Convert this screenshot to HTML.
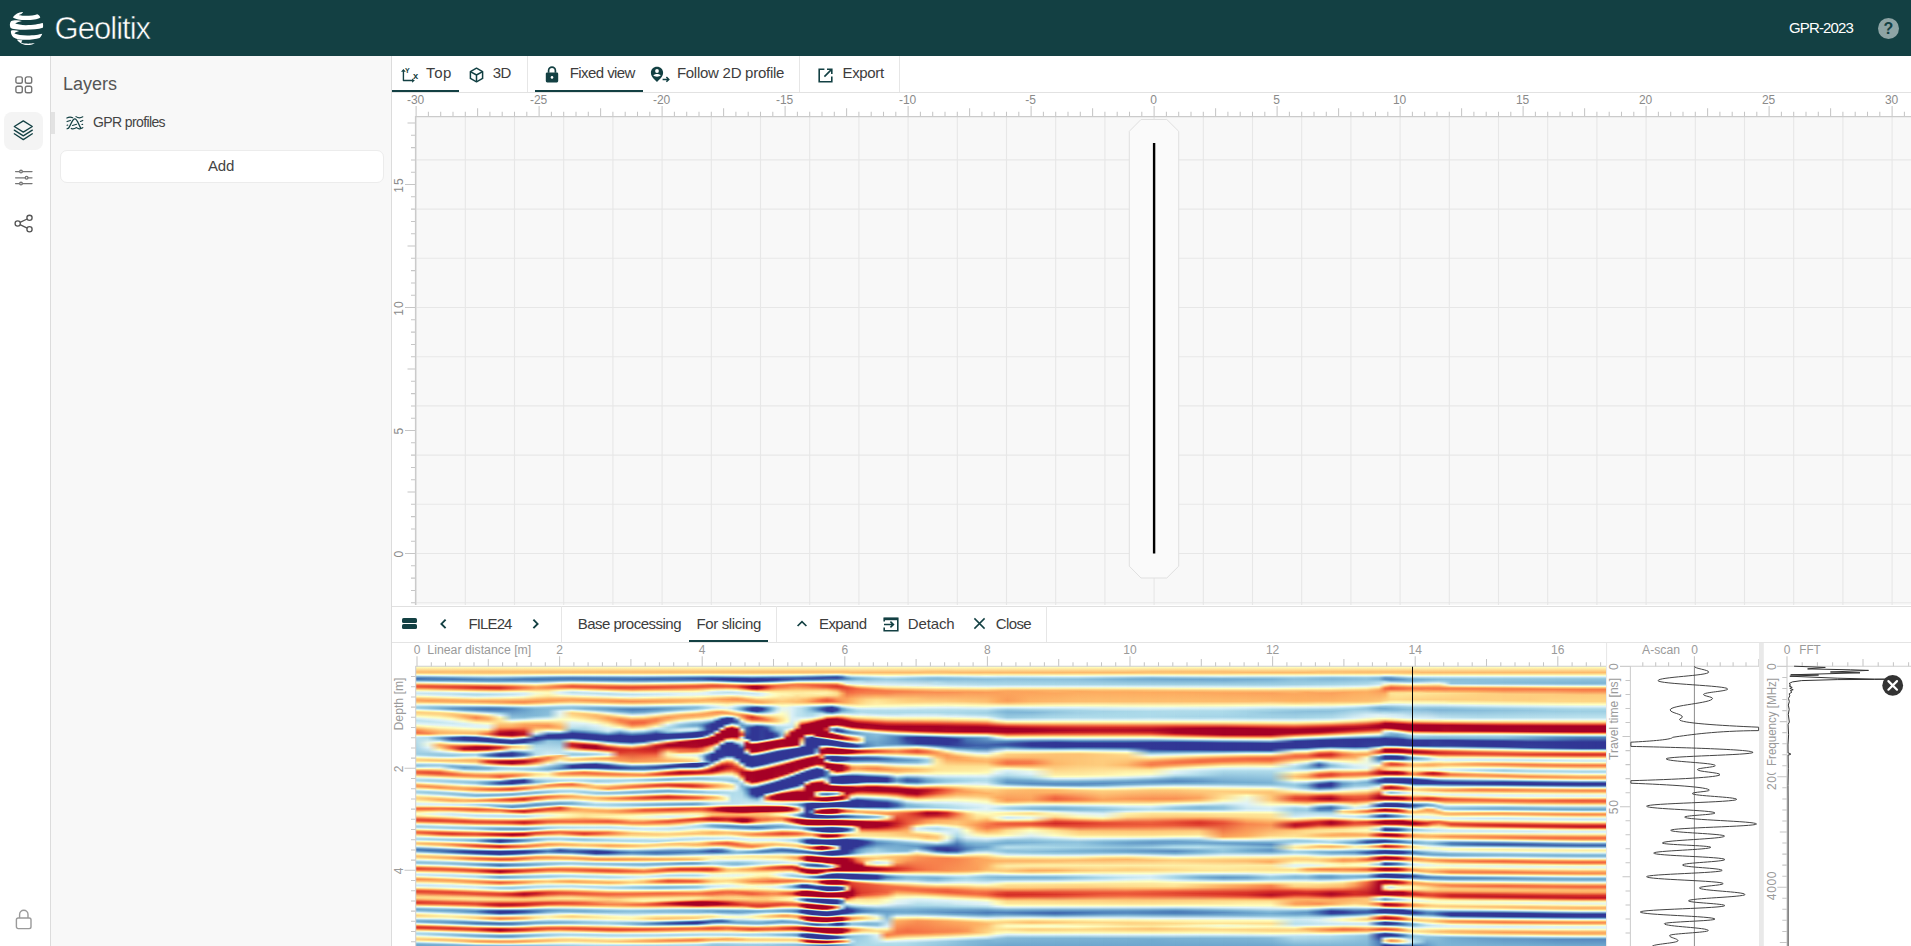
<!DOCTYPE html>
<html lang="en"><head><meta charset="utf-8"><title>Geolitix</title><style>
*{box-sizing:border-box;margin:0;padding:0}
html,body{width:1911px;height:946px;overflow:hidden;background:#fff;font-family:"Liberation Sans",sans-serif;}
#root{position:relative;width:1911px;height:946px;overflow:hidden;background:#fff}
.a{position:absolute}
.t{position:absolute;white-space:nowrap;line-height:1}
svg{position:absolute;overflow:visible}
svg text{font-family:"Liberation Sans",sans-serif}
</style></head><body><div id="root">
<div class="a" style="left:0;top:0;width:1911px;height:56px;background:#134043"></div>
<svg style="left:4px;top:6px" width="48" height="44" viewBox="0 0 1032 946" fill="#fff">
<path d="M410 128 C330 120 240 170 190 240 C240 290 380 305 480 302 C600 300 720 290 780 245 C775 215 745 185 715 175 C650 200 520 215 400 208 C360 205 330 200 320 195 C350 180 400 165 410 128 Z"/>
<path d="M385 322 C300 300 200 300 150 330 C120 370 120 430 140 465 C170 495 300 512 460 512 C600 512 740 500 835 470 C845 440 842 400 835 365 C760 385 620 410 470 412 C380 412 280 395 240 378 C270 350 340 335 385 322 Z"/>
<path d="M325 540 C260 520 190 518 150 530 C140 570 160 630 200 670 C260 715 360 728 470 728 C580 728 690 715 765 690 C795 660 815 625 822 598 C760 615 640 635 500 635 C390 635 280 620 225 592 C245 565 290 550 325 540 Z"/>
<path d="M275 722 C320 735 360 738 395 735 C385 755 375 775 372 790 C420 805 500 812 560 808 C600 805 640 798 665 795 C640 815 580 840 500 840 C420 840 340 810 275 722 Z"/>
</svg>
<div class="t " style="left:54.6px;top:12.7px;font-size:31px;color:#fff;letter-spacing:-0.983px;-webkit-text-stroke:0.5px #134043;">Geolitix</div>
<div class="t " style="left:1789px;top:19.6px;font-size:15px;color:#fff;letter-spacing:-0.859px;">GPR-2023</div>
<div class="a" style="left:1878px;top:18px;width:21px;height:21px;border-radius:50%;background:#8ea4a5"></div>
<div class="t " style="left:1883.6px;top:20.5px;font-size:16px;color:#134043;font-weight:bold;">?</div>
<div class="a" style="left:0;top:56px;width:51px;height:890px;background:#fff;border-right:1px solid #dcdcdc"></div>
<div class="a" style="left:4px;top:112px;width:39px;height:38px;border-radius:8px;background:#f4f4f4"></div>
<svg style="left:15px;top:76px" width="18" height="18" viewBox="0 0 18 18" fill="none" stroke="#757575" stroke-width="1.4">
<rect x="0.9" y="0.9" width="6.4" height="6.4" rx="1.8"/><rect x="10.3" y="0.9" width="6.4" height="6.4" rx="1.8"/>
<rect x="0.9" y="10.3" width="6.4" height="6.4" rx="1.8"/><rect x="10.3" y="10.3" width="6.4" height="6.4" rx="1.8"/></svg>
<svg style="left:12.2px;top:120px" width="23" height="21" viewBox="0 0 23 21" fill="none" stroke="#134043" stroke-width="1.3" stroke-linejoin="round" stroke-linecap="round">
<path d="M11.3 0.9 L20.3 6.5 L11.3 12.1 L2.3 6.5 Z"/><path d="M2.3 10.1 L11.3 15.9 L20.3 10.1"/><path d="M2.3 13.8 L11.3 19.6 L20.3 13.8"/></svg>
<svg style="left:15px;top:168px" width="18" height="18" viewBox="0 0 18 18" fill="none" stroke="#757575" stroke-width="1.3" stroke-linecap="round">
<path d="M0.6 3.6 H17 M0.6 9.8 H17 M0.6 15.6 H17"/>
<circle cx="6" cy="3.6" r="1.35" fill="#fff"/><circle cx="11.6" cy="9.8" r="1.35" fill="#fff"/><circle cx="6" cy="15.6" r="1.35" fill="#fff"/></svg>
<svg style="left:13px;top:213px" width="22" height="22" viewBox="0 0 22 22" fill="none" stroke="#555" stroke-width="1.35">
<path d="M7 9.4 L14.2 6 M7 11.7 L14.2 15.1"/>
<circle cx="4.7" cy="10.5" r="2.6"/><circle cx="16.5" cy="4.8" r="2.6"/><circle cx="16.5" cy="16.2" r="2.6"/></svg>
<svg style="left:15px;top:909px" width="18" height="21" viewBox="0 0 18 21" fill="none" stroke="#9a9a9a" stroke-width="1.4">
<path d="M4.6 9 V5.4 A4.2 4.2 0 0 1 13 5.4 V9"/><rect x="1.4" y="9" width="14.6" height="10.6" rx="1.8"/></svg>
<div class="a" style="left:51px;top:56px;width:341px;height:890px;background:#f8f8f8;border-right:1px solid #dcdcdc"></div>
<div class="t " style="left:63px;top:74.6px;font-size:18px;color:#555;letter-spacing:-0.005px;">Layers</div>
<div class="a" style="left:51px;top:112px;width:4px;height:22px;background:#e2e2e2"></div>
<svg style="left:60px;top:108px" width="32" height="28" viewBox="0 0 1081 946" fill="none" stroke="#134043" stroke-width="38" stroke-linecap="round">
<path d="M300 665 C370 560 420 370 500 370 C580 370 630 560 700 680" stroke-width="44"/>
<path d="M232 340 Q330 280 430 330 M540 292 Q650 370 770 298"/>
<path d="M238 458 L350 420 M690 455 L770 420"/>
<path d="M240 585 L262 577 M420 590 L560 550 M740 557 L765 552"/>
<path d="M238 703 L290 680 M380 690 Q450 730 560 662 Q640 730 700 690 Q745 690 770 660"/>
</svg>
<div class="t " style="left:93px;top:115px;font-size:14px;color:#444;letter-spacing:-0.614px;">GPR profiles</div>
<div class="a" style="left:60px;top:150px;width:324px;height:33px;background:#fff;border:1px solid #ececec;border-radius:7px"></div>
<div class="t " style="left:208px;top:157.5px;font-size:15px;color:#444;letter-spacing:-0.230px;">Add</div>
<div class="a" style="left:392px;top:56px;width:1519px;height:37px;background:#fff;border-bottom:1px solid #e2e2e2"></div>
<svg style="left:396px;top:62px" width="28" height="26" viewBox="0 0 1019 946">
<path d="M270 335 V672 H600" fill="none" stroke="#134043" stroke-width="50" stroke-linejoin="round"/>
<path d="M270 252 L358 352 H182 Z M685 674 L585 598 V752 Z" fill="#134043"/>
<text x="417" y="392" font-size="255" font-weight="bold" fill="#134043" text-anchor="middle">Y</text>
<text x="710" y="612" font-size="340" font-weight="bold" fill="#134043" text-anchor="middle">x</text>
</svg>
<div class="t " style="left:426.1px;top:65.2px;font-size:15px;color:#3d3d3d;letter-spacing:0.572px;">Top</div>
<div class="a" style="left:392px;top:90px;width:67px;height:2px;background:#134043"></div>
<svg style="left:469px;top:67px" width="15" height="16" viewBox="0 0 15 16" fill="none" stroke="#134043" stroke-width="1.5" stroke-linejoin="round">
<path d="M7.5 1.2 L13.6 4.6 V11.4 L7.5 14.8 L1.4 11.4 V4.6 Z"/><path d="M1.4 4.6 L7.5 8 L13.6 4.6 M7.5 8 V14.8"/></svg>
<div class="t " style="left:492.8px;top:65.2px;font-size:15px;color:#3d3d3d;letter-spacing:-0.537px;">3D</div>
<div class="a" style="left:527px;top:56px;width:1px;height:36px;background:#e6e6e6"></div>
<svg style="left:545px;top:66px" width="14" height="17" viewBox="0 0 14 17">
<path d="M3.6 6.8 V4.6 A3.4 3.4 0 0 1 10.4 4.6 V6.8" fill="none" stroke="#134043" stroke-width="1.7"/>
<rect x="0.8" y="6.4" width="12.4" height="10" rx="1.4" fill="#134043"/><circle cx="7" cy="11.4" r="1.3" fill="#fff"/></svg>
<div class="t " style="left:569.7px;top:65.2px;font-size:15px;color:#3d3d3d;letter-spacing:-0.565px;">Fixed view</div>
<div class="a" style="left:535px;top:90px;width:108px;height:2px;background:#134043"></div>
<svg style="left:650px;top:66px" width="20" height="17" viewBox="0 0 20 17">
<path d="M7 0.8 C3.4 0.8 0.9 3.4 0.9 6.8 C0.9 10.6 4.6 13.6 7 16 C9.4 13.6 13.1 10.6 13.1 6.8 C13.1 3.4 10.6 0.8 7 0.8 Z" fill="#134043"/>
<circle cx="7" cy="5" r="1.9" fill="#fff"/><path d="M3.4 9.6 C4.4 7.6 9.6 7.6 10.6 9.6 C9.6 11 4.4 11 3.4 9.6Z" fill="#fff"/>
<path d="M12.6 13.4 H18.6 M16.4 11 L18.8 13.4 L16.4 15.8" fill="none" stroke="#134043" stroke-width="1.5"/></svg>
<div class="t " style="left:676.9px;top:65.2px;font-size:15px;color:#3d3d3d;letter-spacing:-0.265px;">Follow 2D profile</div>
<div class="a" style="left:799px;top:56px;width:1px;height:36px;background:#e6e6e6"></div>
<svg style="left:817.5px;top:67.5px" width="15" height="15" viewBox="0 0 15 15" fill="none" stroke="#134043" stroke-width="1.6">
<path d="M6.4 1.2 H1.2 V13.8 H13.8 V8.6"/><path d="M9 1.2 H13.8 V6 M13.6 1.4 L6.4 8.6"/></svg>
<div class="t " style="left:842.5px;top:65.2px;font-size:15px;color:#3d3d3d;letter-spacing:-0.359px;">Export</div>
<div class="a" style="left:899px;top:56px;width:1px;height:36px;background:#e6e6e6"></div>
<div class="a" style="left:416px;top:117px;width:1495px;height:488px;background:#f8f8f8"></div>
<svg style="left:0;top:0" width="1911" height="946" viewBox="0 0 1911 946">
<path d="M416.1 117 V605 M465.3 117 V605 M514.5 117 V605 M563.7 117 V605 M612.9 117 V605 M662.1 117 V605 M711.3 117 V605 M760.5 117 V605 M809.7 117 V605 M858.9 117 V605 M908.1 117 V605 M957.3 117 V605 M1006.5 117 V605 M1055.7 117 V605 M1104.9 117 V605 M1154.1 117 V605 M1203.3 117 V605 M1252.5 117 V605 M1301.7 117 V605 M1350.9 117 V605 M1400.1 117 V605 M1449.3 117 V605 M1498.5 117 V605 M1547.7 117 V605 M1596.9 117 V605 M1646.1 117 V605 M1695.3 117 V605 M1744.5 117 V605 M1793.7 117 V605 M1842.9 117 V605 M1892.1 117 V605 M416 602.7 H1911 M416 553.5 H1911 M416 504.3 H1911 M416 455.1 H1911 M416 405.9 H1911 M416 356.7 H1911 M416 307.5 H1911 M416 258.3 H1911 M416 209.1 H1911 M416 159.9 H1911" stroke="#e7e7e7" stroke-width="1.1" fill="none"/>
<path d="M416.1 106 V117 M428.4 111.8 V117 M440.7 111.8 V117 M453.0 111.8 V117 M465.3 111.8 V117 M477.6 108.3 V117 M489.9 111.8 V117 M502.2 111.8 V117 M514.5 111.8 V117 M526.8 111.8 V117 M539.1 106 V117 M551.4 111.8 V117 M563.7 111.8 V117 M576.0 111.8 V117 M588.3 111.8 V117 M600.6 108.3 V117 M612.9 111.8 V117 M625.2 111.8 V117 M637.5 111.8 V117 M649.8 111.8 V117 M662.1 106 V117 M674.4 111.8 V117 M686.7 111.8 V117 M699.0 111.8 V117 M711.3 111.8 V117 M723.6 108.3 V117 M735.9 111.8 V117 M748.2 111.8 V117 M760.5 111.8 V117 M772.8 111.8 V117 M785.1 106 V117 M797.4 111.8 V117 M809.7 111.8 V117 M822.0 111.8 V117 M834.3 111.8 V117 M846.6 108.3 V117 M858.9 111.8 V117 M871.2 111.8 V117 M883.5 111.8 V117 M895.8 111.8 V117 M908.1 106 V117 M920.4 111.8 V117 M932.7 111.8 V117 M945.0 111.8 V117 M957.3 111.8 V117 M969.6 108.3 V117 M981.9 111.8 V117 M994.2 111.8 V117 M1006.5 111.8 V117 M1018.8 111.8 V117 M1031.1 106 V117 M1043.4 111.8 V117 M1055.7 111.8 V117 M1068.0 111.8 V117 M1080.3 111.8 V117 M1092.6 108.3 V117 M1104.9 111.8 V117 M1117.2 111.8 V117 M1129.5 111.8 V117 M1141.8 111.8 V117 M1154.1 106 V117 M1166.4 111.8 V117 M1178.7 111.8 V117 M1191.0 111.8 V117 M1203.3 111.8 V117 M1215.6 108.3 V117 M1227.9 111.8 V117 M1240.2 111.8 V117 M1252.5 111.8 V117 M1264.8 111.8 V117 M1277.1 106 V117 M1289.4 111.8 V117 M1301.7 111.8 V117 M1314.0 111.8 V117 M1326.3 111.8 V117 M1338.6 108.3 V117 M1350.9 111.8 V117 M1363.2 111.8 V117 M1375.5 111.8 V117 M1387.8 111.8 V117 M1400.1 106 V117 M1412.4 111.8 V117 M1424.7 111.8 V117 M1437.0 111.8 V117 M1449.3 111.8 V117 M1461.6 108.3 V117 M1473.9 111.8 V117 M1486.2 111.8 V117 M1498.5 111.8 V117 M1510.8 111.8 V117 M1523.1 106 V117 M1535.4 111.8 V117 M1547.7 111.8 V117 M1560.0 111.8 V117 M1572.3 111.8 V117 M1584.6 108.3 V117 M1596.9 111.8 V117 M1609.2 111.8 V117 M1621.5 111.8 V117 M1633.8 111.8 V117 M1646.1 106 V117 M1658.4 111.8 V117 M1670.7 111.8 V117 M1683.0 111.8 V117 M1695.3 111.8 V117 M1707.6 108.3 V117 M1719.9 111.8 V117 M1732.2 111.8 V117 M1744.5 111.8 V117 M1756.8 111.8 V117 M1769.1 106 V117 M1781.4 111.8 V117 M1793.7 111.8 V117 M1806.0 111.8 V117 M1818.3 111.8 V117 M1830.6 108.3 V117 M1842.9 111.8 V117 M1855.2 111.8 V117 M1867.5 111.8 V117 M1879.8 111.8 V117 M1892.1 106 V117 M1904.4 111.8 V117 M411 602.7 H416 M411 590.4 H416 M411 578.1 H416 M411 565.8 H416 M405 553.5 H416 M411 541.2 H416 M411 528.9 H416 M411 516.6 H416 M411 504.3 H416 M407.5 492.0 H416 M411 479.7 H416 M411 467.4 H416 M411 455.1 H416 M411 442.8 H416 M405 430.5 H416 M411 418.2 H416 M411 405.9 H416 M411 393.6 H416 M411 381.3 H416 M407.5 369.0 H416 M411 356.7 H416 M411 344.4 H416 M411 332.1 H416 M411 319.8 H416 M405 307.5 H416 M411 295.2 H416 M411 282.9 H416 M411 270.6 H416 M411 258.3 H416 M407.5 246.0 H416 M411 233.7 H416 M411 221.4 H416 M411 209.1 H416 M411 196.8 H416 M405 184.5 H416 M411 172.2 H416 M411 159.9 H416 M411 147.6 H416 M411 135.3 H416 M407.5 123.0 H416" stroke="#c6c6c6" stroke-width="1.05" fill="none"/>
<path d="M415.5 116.6 H1911 M415.6 116 V605" stroke="#cbcbcb" stroke-width="1.4" fill="none"/>
<text x="415.6" y="104" font-size="12" fill="#8a8a8a" text-anchor="middle">-30</text>
<text x="538.6" y="104" font-size="12" fill="#8a8a8a" text-anchor="middle">-25</text>
<text x="661.6" y="104" font-size="12" fill="#8a8a8a" text-anchor="middle">-20</text>
<text x="784.6" y="104" font-size="12" fill="#8a8a8a" text-anchor="middle">-15</text>
<text x="907.6" y="104" font-size="12" fill="#8a8a8a" text-anchor="middle">-10</text>
<text x="1030.6" y="104" font-size="12" fill="#8a8a8a" text-anchor="middle">-5</text>
<text x="1153.6" y="104" font-size="12" fill="#8a8a8a" text-anchor="middle">0</text>
<text x="1276.6" y="104" font-size="12" fill="#8a8a8a" text-anchor="middle">5</text>
<text x="1399.6" y="104" font-size="12" fill="#8a8a8a" text-anchor="middle">10</text>
<text x="1522.6" y="104" font-size="12" fill="#8a8a8a" text-anchor="middle">15</text>
<text x="1645.6" y="104" font-size="12" fill="#8a8a8a" text-anchor="middle">20</text>
<text x="1768.6" y="104" font-size="12" fill="#8a8a8a" text-anchor="middle">25</text>
<text x="1891.6" y="104" font-size="12" fill="#8a8a8a" text-anchor="middle">30</text>
<text transform="translate(403.4 554.1) rotate(-90)" font-size="12" fill="#8a8a8a" text-anchor="middle" letter-spacing="0">0</text>
<text transform="translate(403.4 431.1) rotate(-90)" font-size="12" fill="#8a8a8a" text-anchor="middle" letter-spacing="0">5</text>
<text transform="translate(403.4 308.1) rotate(-90)" font-size="12" fill="#8a8a8a" text-anchor="middle" letter-spacing="0.9">10</text>
<text transform="translate(403.4 185.1) rotate(-90)" font-size="12" fill="#8a8a8a" text-anchor="middle" letter-spacing="0.9">15</text>
<path d="M1141 119.5 H1166.8 L1178.7 131.3 V566.2 L1166.8 578 H1141 L1129.3 566.2 V131.3 Z" fill="#fafafa" stroke="#e0e0e0" stroke-width="1"/>
<path d="M1154.1 143 V553.5" stroke="#000" stroke-width="2.4"/>
</svg>
<div class="a" style="left:392px;top:606px;width:1519px;height:340px;background:#fff;border-top:1px solid #e0e0e0"></div>
<div class="a" style="left:392px;top:642px;width:1519px;height:1px;background:#e4e4e4"></div>
<div class="a" style="left:402px;top:618px;width:14.5px;height:5px;border-radius:1.6px;background:#134043"></div>
<div class="a" style="left:402px;top:624.4px;width:14.5px;height:5px;border-radius:1.6px;background:#134043"></div>
<svg style="left:439px;top:618px" width="9" height="12" viewBox="0 0 9 12" fill="none" stroke="#134043" stroke-width="1.9"><path d="M6.6 1.6 L2.4 5.9 L6.6 10.2"/></svg>
<div class="t " style="left:468.6px;top:615.7px;font-size:15px;color:#3d3d3d;letter-spacing:-0.910px;">FILE24</div>
<svg style="left:531px;top:618px" width="9" height="12" viewBox="0 0 9 12" fill="none" stroke="#134043" stroke-width="1.9"><path d="M2.4 1.6 L6.6 5.9 L2.4 10.2"/></svg>
<div class="a" style="left:561px;top:606px;width:1px;height:36px;background:#e6e6e6"></div>
<div class="t " style="left:577.7px;top:615.7px;font-size:15px;color:#3d3d3d;letter-spacing:-0.506px;">Base processing</div>
<div class="t " style="left:696.5px;top:615.7px;font-size:15px;color:#3d3d3d;letter-spacing:-0.359px;">For slicing</div>
<div class="a" style="left:689px;top:640px;width:79px;height:2px;background:#134043"></div>
<div class="a" style="left:776px;top:606px;width:1px;height:36px;background:#e6e6e6"></div>
<svg style="left:796px;top:619px" width="12" height="9" viewBox="0 0 12 9" fill="none" stroke="#134043" stroke-width="1.7"><path d="M1.6 7 L6 2.6 L10.4 7"/></svg>
<div class="t " style="left:819.0px;top:615.7px;font-size:15px;color:#3d3d3d;letter-spacing:-0.579px;">Expand</div>
<svg style="left:883px;top:616.5px" width="16" height="15" viewBox="0 0 16 15" fill="none" stroke="#134043" stroke-width="1.6">
<path d="M1.2 4.4 V1.2 H14.8 V13.8 H1.2 V10.6"/><path d="M1 7.5 H10 M7.4 4.6 L10.4 7.5 L7.4 10.4"/><path d="M1.2 2 H14.8" stroke-width="2.4"/></svg>
<div class="t " style="left:907.8px;top:615.7px;font-size:15px;color:#3d3d3d;letter-spacing:-0.138px;">Detach</div>
<svg style="left:973px;top:617.4px" width="13" height="13" viewBox="0 0 13 13" fill="none" stroke="#134043" stroke-width="1.5"><path d="M1.4 1.4 L11.6 11.6 M11.6 1.4 L1.4 11.6"/></svg>
<div class="t " style="left:995.8px;top:615.7px;font-size:15px;color:#3d3d3d;letter-spacing:-0.630px;">Close</div>
<div class="a" style="left:1046px;top:606px;width:1px;height:36px;background:#e6e6e6"></div>
<div class="a" style="left:416px;top:666.4px;width:1190px;height:279.6px;overflow:hidden;background:#fdd9a0"><div class="a" style="left:0;top:0;width:100%;height:100%;filter:blur(0.6px)">
<div class="a" style="left:0px;top:0;width:12px;height:100%;background:linear-gradient(#f6fbd0 0px,#ffffbe 1px,#fdbb6d 6px,#fdc678 7px,#fffcbb 8.5px,#d3edf4 9.5px,#6ea6cd 11px,#4370b2 12.5px,#4878b6 13.5px,#6aa1cb 14.5px,#d2ecf4 16px,#fff7b3 17px,#fa9c59 18.5px,#f16740 19.5px,#ea5839 20.5px,#f36b42 21.5px,#fa9b58 22.5px,#fff9b6 24.5px,#dcf1f7 26px,#cae8f2 27.5px,#e3f4f2 29px,#fffab7 30.5px,#fdbf71 32.5px,#fba15b 34px,#fdbf71 36px,#fefec2 38px,#e0f3f7 39px,#aad8e8 40.5px,#9bcde2 41.5px,#abd9e9 42.5px,#daf0f6 43.5px,#fffdbc 44.5px,#fedf8f 45.5px,#fecd7e 46.5px,#fee293 48.5px,#fbfdc7 50.5px,#e0f3f7 52px,#bbe1ee 54.5px,#def2f7 57.5px,#feffc0 59.5px,#fdac60 63px,#f7834d 64.5px,#f36b42 66.5px,#f46d43 67px,#fa9656 68px,#fff2ab 69.5px,#e4f5f0 70.5px,#ceeaf3 71px,#bae0ed 72px,#9ccde3 88px,#abd9e9 89px,#e4f5f1 90.5px,#fffdbc 91.5px,#fee496 92.5px,#fecd7e 94px,#fee99e 95.5px,#f6fccf 96.5px,#e5f5ee 97px,#a0d0e4 98.5px,#8ec2dc 99.5px,#9ecfe3 100.5px,#ceeaf3 101.5px,#e8f6e9 102px,#fdfec3 102.5px,#fdb063 104px,#f57245 105px,#ea5839 106px,#f46e44 107.5px,#fa9b58 108.5px,#fff5b0 110.5px,#dcf1f7 112px,#acd9e9 114px,#b8dfed 115px,#e2f4f3 116px,#fff7b2 117px,#fdb264 118.5px,#f98e52 120px,#fcaa5f 121px,#fcfec4 123px,#d4edf5 124px,#a9d8e8 125px,#9dcde3 126px,#addaea 127px,#e6f5ee 128.5px,#fffbba 129.5px,#fee394 130.5px,#fecc7d 132px,#fedd8d 133.5px,#fdfec2 135.5px,#dff3f8 137.5px,#e1f3f6 139px,#fffbb9 140px,#fa9957 141.5px,#f36a42 142.5px,#f57547 143.5px,#fb9f5a 144.5px,#fee395 146px,#ffffbf 147.5px,#ffffbf 148.5px,#fee597 150px,#f7834d 152px,#ea5839 153px,#e24732 154px,#ea593a 155px,#fdb669 156.5px,#fff1aa 157.5px,#e4f4f1 158.5px,#b3ddeb 159.5px,#9dcee3 160.5px,#afdbea 161.5px,#e3f4f2 162.5px,#f9fdcb 163px,#feefa6 163.5px,#fdb264 164.5px,#f57647 165.5px,#f26941 166.5px,#f7834d 167.5px,#fdb76a 168.5px,#fffbb9 170px,#e2f4f5 171px,#bbe1ed 172px,#acd9e9 173px,#b1dceb 173.5px,#dff2f8 174.5px,#fff6b2 175.5px,#fdc072 177px,#fdc778 178px,#fff9b7 179.5px,#d8eff6 180.5px,#72abd0 182px,#4879b6 183.5px,#5f94c4 185px,#d2ecf4 187px,#ffffbf 188px,#fecd7e 189.5px,#fdbf71 190.5px,#fedd8d 192px,#fffbb9 193px,#e2f4f5 194px,#9ecfe3 195.5px,#8dc1dc 196.5px,#a1d1e5 197.5px,#daf0f6 198.5px,#fff3ad 199.5px,#fdb265 200.5px,#f16740 201.5px,#e24832 202.5px,#ea5739 203.5px,#f88c51 204.5px,#fed182 205.5px,#fffebd 206.5px,#e1f4f6 207.5px,#cae8f2 208.5px,#d9eff6 209.5px,#fcfec5 210.5px,#fdb86b 212px,#f99053 213px,#f98f53 213.5px,#fdbb6d 215px,#fafdc8 217px,#e1f3f7 218px,#cae8f2 219.5px,#e1f3f6 220.5px,#ffffbe 221.5px,#fdb265 223px,#ea5839 224.5px,#e24732 225.5px,#e85337 226.5px,#fdbd6f 229.5px,#fedb8b 231.5px,#fdbd6f 233px,#ea5839 235px,#da372a 236.5px,#e44c34 237.5px,#fdb164 239px,#fff1aa 240px,#def2f7 241px,#85bad8 242.5px,#6fa8ce 243.5px,#8dc1dc 245px,#def2f8 246.5px,#fffcbb 247.5px,#feeda4 248px,#fecf80 249.5px,#fee79b 251px,#f6fccf 252px,#e3f4f2 252.5px,#8dc1dc 254px,#70a9cf 255px,#7bb3d4 256px,#ddf2f7 257.5px,#f9fdca 258px,#fee99e 258.5px,#f99455 259.5px,#e44b33 260.5px,#da372a 261.5px,#e85438 262.5px,#fb9c59 263.5px,#fffdbd 265px,#d4edf5 266px,#abd9e9 267.5px,#bae0ed 268.5px,#def2f8 269.5px,#fbfdc7 270.5px,#fede8e 272px,#fecd7e 273px,#fed98a 274px,#fff8b5 275px,#ddf2f7 276px,#9ccde3 277px,#74add1 278px,#6fa8ce 279.5px)"></div>
<div class="a" style="left:0px;top:0;width:24px;height:100%;background:linear-gradient(#f6fbd0 0px,#ffffbe 1px,#fdbb6d 6px,#fdc677 7px,#fff9b6 8.5px,#dbf0f7 9.5px,#6095c5 11.5px,#4472b2 13px,#659bc8 14.5px,#c7e7f1 16px,#e9f6e8 16.5px,#fffdbc 17px,#fca45c 18.5px,#f16740 19.5px,#e75136 20.5px,#ed5e3c 21.5px,#fca85e 23px,#fee090 24px,#fcfec4 25px,#e1f3f7 26px,#c4e5f0 27.5px,#e5f5ee 29.5px,#fcfec4 30.5px,#fec879 32.5px,#fba05a 34.5px,#fdac60 35.5px,#feca7b 36.5px,#fffebd 38px,#e1f3f6 39px,#a0d1e4 40.5px,#89bdda 42px,#a0d1e4 43px,#d7eff6 44px,#fffdbc 45px,#fede8e 46px,#fecd7e 47px,#fee192 49px,#ffffc0 51px,#def2f7 53px,#c1e4ef 55.5px,#e2f4f4 58.5px,#fffebd 60.5px,#fdb668 64px,#f8884f 67px,#f88850 67.5px,#fdb265 68.5px,#feeea5 69.5px,#f9fdcb 70px,#e3f4f3 70.5px,#b4deec 71.5px,#afdbea 72px,#e6f5ed 76.5px,#edf8e1 78px,#e8f6e9 80px,#def2f8 81.5px,#97c9e0 88px,#a6d5e7 89.5px,#cfebf3 90.5px,#e5f5ee 91px,#fff9b5 92px,#fed081 93.5px,#fec97a 94.5px,#fee293 95.5px,#fbfdc7 96.5px,#e8f6ea 97px,#cfeaf3 97.5px,#97c9e0 99px,#9dcee3 100px,#d8eff6 101.5px,#feffc0 102.5px,#fa9857 104.5px,#f0643f 105.5px,#e65036 106.5px,#ea593a 107.5px,#fa9656 109px,#fff7b2 111px,#e7f6eb 112px,#d5eef5 112.5px,#b3ddeb 113.5px,#a6d5e7 114.5px,#b5deec 115.5px,#e0f3f8 116.5px,#fffbb9 117.5px,#fdb96c 119px,#f98e52 120.5px,#fdb86a 122px,#fffdbd 123.5px,#d6eef5 124.5px,#a7d6e7 125.5px,#97c9e0 126.5px,#a6d5e7 127.5px,#e2f4f4 129px,#fffdbc 130px,#fee192 131px,#fdc476 132px,#fdbd6f 133px,#feda8a 134.5px,#ffffc0 136px,#e1f3f7 137.5px,#dcf1f7 139px,#feffc1 140px,#fb9d59 141.5px,#f36a42 142.5px,#f57748 143.5px,#fca85e 144.5px,#fedd8d 145.5px,#fffdbb 146.5px,#eff9dc 147.5px,#eff9dc 148.5px,#ffffc0 149.5px,#fee597 150.5px,#fa9756 152px,#e75237 153.5px,#e24832 154.5px,#ee613e 155.5px,#fb9f5a 156.5px,#fff8b4 158px,#def2f7 159px,#aedbea 160px,#9dcee3 161px,#cce9f2 162.5px,#e8f6ea 163px,#feffc1 163.5px,#fca45c 165px,#f0653f 166px,#ea5839 166.5px,#ed5f3d 167.5px,#fdaf62 169px,#fffdbc 170.5px,#dbf0f6 171.5px,#b1dceb 172.5px,#a7d6e7 173.5px,#e6f5ed 175px,#fcfec5 175.5px,#fed687 176.5px,#fdb568 177.5px,#fdbf71 178.5px,#fff8b4 180px,#d9eff6 181px,#5b8fc1 183px,#4473b3 184.5px,#6fa7ce 186px,#d4edf5 187.5px,#fffcba 188.5px,#fdc678 190px,#fdba6c 191px,#fecc7d 192px,#fffebe 193.5px,#dbf1f7 194.5px,#aad8e8 195.5px,#8fc3dd 196.5px,#97c9e0 197.5px,#e5f5ef 199px,#fcfec5 199.5px,#feea9f 200px,#fca45d 201px,#ef623e 202px,#e54e35 203px,#f16640 204px,#fba35c 205px,#fff6b2 206.5px,#e5f5ee 207.5px,#d5edf5 208px,#c4e5f0 209px,#dbf1f7 210px,#fffebe 211px,#fdb769 212.5px,#fa9656 213.5px,#fdb265 215px,#fffcba 217px,#daf0f6 218.5px,#cae8f2 219.5px,#e6f5ed 221px,#fff8b4 222px,#fca85e 223.5px,#f16740 224.5px,#e34932 225.5px,#e95739 227px,#fed081 230.5px,#fedd8d 232px,#fdb76a 233.5px,#e85437 235.5px,#de3f2e 237px,#ed5e3c 238px,#fba35c 239px,#fffebe 240.5px,#e9f6e8 241px,#cbe9f2 241.5px,#7cb4d5 243px,#70a8ce 244px,#81b8d7 245px,#e2f4f4 247px,#fffdbb 248px,#fee699 249px,#fede8e 250px,#fee99e 251px,#f9fdc9 252px,#e8f6e9 252.5px,#ceeaf3 253px,#7eb5d6 254.5px,#6aa2cb 255.5px,#7cb4d5 256.5px,#e5f5ef 258px,#fffdbd 258.5px,#fdb668 259.5px,#ed5e3c 260.5px,#da372a 261.5px,#e14631 262.5px,#fdab60 264px,#feefa6 265px,#f8fccc 265.5px,#e3f4f3 266px,#b0dceb 267px,#a0d0e4 268px,#b3ddeb 269px,#def2f7 270px,#feffc0 271px,#fee395 272px,#fec879 273.5px,#fedc8c 274.5px,#fffebd 275.5px,#d1ecf4 276.5px,#7fb6d6 278px,#72aad0 279.5px);-webkit-mask-image:linear-gradient(90deg,transparent,#000 50.0%);mask-image:linear-gradient(90deg,transparent,#000 50.0%)"></div>
<div class="a" style="left:12px;top:0;width:24px;height:100%;background:linear-gradient(#f6fbd0 0px,#ffffbe 1px,#fdbb6d 6px,#fdc577 7px,#fff7b2 8.5px,#e2f4f5 9.5px,#689fca 11.5px,#4575b4 13px,#5f94c4 14.5px,#96c8e0 15.5px,#e2f4f5 16.5px,#fafdc9 17px,#fdad61 18.5px,#e95638 20px,#e34a33 21px,#ee603d 22px,#f99455 23px,#fffab8 25px,#e5f5ef 26px,#d5edf5 26.5px,#bee3ef 28px,#dbf0f6 29.5px,#fffebd 31px,#fdb366 33.5px,#fba05b 35px,#fdc375 36.5px,#fff9b6 38px,#e3f4f3 39px,#99cbe1 40.5px,#75aed1 42px,#81b7d6 43px,#d3ecf4 44.5px,#fffdbd 45.5px,#fede8e 46.5px,#fecf80 48px,#fee598 50px,#fbfec6 52px,#def2f8 54px,#c7e7f1 56.5px,#e1f3f7 59px,#fffbb9 61.5px,#fdc072 65px,#fdb164 67px,#fdc375 68px,#fff2ab 69px,#daf0f6 70px,#79b1d3 71.5px,#6da4cc 72.5px,#92c5de 74px,#e1f3f6 75.5px,#fffab8 76.5px,#fed889 77.5px,#fdb668 78.5px,#fca85e 79.5px,#fecd7e 82px,#fffebd 84px,#ddf1f7 85.5px,#a2d1e5 87.5px,#91c4de 89px,#a0d0e4 90px,#e6f5ee 91.5px,#f8fccc 92px,#fee598 93px,#fdc274 94.5px,#fed686 95.5px,#fffcba 96.5px,#d5eef5 97.5px,#99cbe1 99px,#a1d1e5 100px,#d5edf5 101.5px,#e8f6e9 102px,#fff4ae 103px,#fdae61 104.5px,#ee613e 106px,#e54d34 107px,#e85337 108px,#f99153 109.5px,#fff7b3 111.5px,#e5f5ef 112.5px,#d0ebf3 113px,#acdae9 114px,#a0d0e4 115px,#b0dbea 116px,#d9f0f6 117px,#fdfec2 118px,#fdaf62 120px,#f99053 121.5px,#fdae61 122.5px,#fff7b3 124px,#dcf1f7 125px,#a6d5e7 126px,#91c4de 127px,#9ecee3 128px,#daf0f6 129.5px,#fdfec3 130.5px,#fece7f 132px,#fdac60 133.5px,#fdc778 135px,#fffebd 136.5px,#e4f5f0 137.5px,#d5eef5 139px,#e5f5ef 139.5px,#f9fdca 140px,#feeca3 140.5px,#fba05b 141.5px,#f67c4a 142px,#f36c42 143px,#fdb163 144.5px,#fffab8 146px,#e7f6ec 147px,#ddf2f7 148.5px,#eef8de 149.5px,#fff4ae 150.5px,#fdae61 152px,#ec5c3b 153.5px,#e24832 154.5px,#e95538 155.5px,#fdac60 157px,#fffebd 158.5px,#d7eff5 159.5px,#a0d0e4 161px,#a5d4e6 162px,#d1ecf4 163px,#ebf7e3 163.5px,#fffcba 164px,#fa9756 165.5px,#e85538 166.5px,#df412f 167.5px,#ec5c3b 168.5px,#fba15b 169.5px,#fffebe 171px,#eaf7e5 171.5px,#d2ecf4 172px,#a0d0e4 173.5px,#a4d4e6 174px,#d2ecf4 175px,#edf8e1 175.5px,#fffab8 176px,#fec879 177px,#fca85e 178px,#fec97a 179.5px,#fff4af 180.5px,#dcf1f7 181.5px,#598dc1 183.5px,#426caf 185px,#69a0ca 186.5px,#d3ecf4 188px,#fffab7 189px,#fed282 190px,#fdb567 191.5px,#feca7b 192.5px,#fdfec3 194px,#d4edf5 195px,#a4d3e6 196px,#8ec2dc 197px,#9dcee3 198px,#d2ecf4 199px,#edf8e0 199.5px,#fffab7 200px,#fa9a58 201.5px,#ee613d 202.5px,#e95638 203px,#ef613e 204px,#f99555 205px,#fed687 206px,#fcfec4 207px,#daf0f6 208px,#bfe3ef 209.5px,#def2f7 210.5px,#fffcbb 211.5px,#fdb76a 213px,#fb9c59 214px,#fdba6c 215.5px,#fdfec3 217.5px,#e3f4f3 218.5px,#cae8f2 220px,#ddf2f7 221px,#fafdc8 222px,#fede8f 223px,#fb9e5a 224px,#ef623e 225px,#e24832 226px,#eb5a3a 227.5px,#fdbd6f 230px,#fee090 232px,#fdc577 233.5px,#e75237 236px,#e34a33 237.5px,#f99455 239px,#fff4ae 240.5px,#ddf1f7 241.5px,#86bcd9 243px,#71a9cf 244.5px,#86bbd9 245.5px,#e3f4f3 247.5px,#ffffc0 248.5px,#feeda4 249.5px,#fee99e 250.5px,#fbfdc7 252px,#d7eef5 253px,#85bbd8 254.5px,#659bc8 256px,#7db4d5 257px,#c4e5f0 258px,#eaf7e5 258.5px,#fff7b3 259px,#fdab60 260px,#f67b49 260.5px,#e95639 261px,#da362a 262px,#e44b33 263px,#f88c51 264px,#fedd8d 265px,#fff6b2 265.5px,#d8eff6 266.5px,#a4d3e6 267.5px,#94c7df 268.5px,#abd9e9 269.5px,#ddf1f7 270.5px,#fffcbb 271.5px,#fedc8c 272.5px,#fdc375 273.5px,#fecc7e 274.5px,#fbfec6 276px,#e6f5ec 276.5px,#c8e7f1 277px,#7cb3d5 278.5px,#75add1 279.5px);-webkit-mask-image:linear-gradient(90deg,transparent,#000 50.0%);mask-image:linear-gradient(90deg,transparent,#000 50.0%)"></div>
<div class="a" style="left:24px;top:0;width:24px;height:100%;background:linear-gradient(#f6fbd0 0px,#ffffbe 1px,#fdbb6d 6px,#fed384 7.5px,#f9fdcb 9px,#e6f5ed 9.5px,#c9e8f2 10px,#70a9cf 11.5px,#5083bb 12.5px,#4878b6 13.5px,#6fa7ce 15px,#d6eef5 16.5px,#fff3ae 17.5px,#fdb668 18.5px,#e95639 20px,#e0422f 21px,#e75237 22px,#fba15b 23.5px,#fff1aa 25px,#fbfdc7 25.5px,#dbf0f7 26.5px,#b8e0ed 28px,#ddf2f7 30px,#fffab7 31.5px,#fdba6c 33.5px,#fba05a 35px,#fdbc6e 36.5px,#f8fccb 38.5px,#e6f5ed 39px,#cce9f2 39.5px,#80b6d6 41px,#6399c6 42.5px,#71aacf 43.5px,#e5f5ef 45.5px,#fff2ab 46.5px,#fed081 47.5px,#fdc375 49px,#fed485 50.5px,#fffdbb 53px,#def2f7 55.5px,#cdeaf3 57.5px,#dff3f8 59.5px,#fffdbb 62px,#fecb7c 65px,#fdb96c 67px,#fece7f 68px,#fffebd 69px,#e6f5ee 69.5px,#b8e0ed 70px,#5e93c4 71px,#436db0 71.5px,#3a51a2 72px,#36469d 73px,#4c7db8 74.5px,#83b9d8 75.5px,#cfebf3 76.5px,#edf8e0 77px,#fffab7 77.5px,#fca75e 79px,#f47045 80px,#eb5b3b 81px,#f47045 82.5px,#fb9f5a 83.5px,#fffbb9 85.5px,#e2f4f4 86.5px,#a6d5e7 88px,#94c7df 89.5px,#afdbea 90.5px,#e2f4f5 91.5px,#fff8b4 92.5px,#fee79a 93px,#fdbd6f 94.5px,#fed888 96px,#fffbb9 97px,#daf0f6 98px,#8bbfdb 99.5px,#7ab2d4 100.5px,#98cae1 102px,#e2f4f5 103.5px,#fff7b4 104.5px,#fdb265 106px,#f46f44 107.5px,#f16640 108.5px,#f67c4a 109.5px,#fdb063 110.5px,#fff6b2 112px,#e5f5f0 113px,#ceeaf3 113.5px,#a8d6e8 114.5px,#9acbe2 115.5px,#a8d7e8 116.5px,#e4f5f0 118px,#fff8b5 119px,#fdbf71 120.5px,#fa9957 122px,#fdbf71 123.5px,#fff0a8 124.5px,#f9fdc9 125px,#e4f5f0 125.5px,#97c9e0 127px,#8cc0db 128px,#a1d1e4 129px,#cce9f2 130px,#e5f5ef 130.5px,#f6fbd0 131px,#fff7b2 131.5px,#fdbf71 133px,#fca55d 134.5px,#fdc274 135.5px,#fbfdc7 137px,#dbf0f7 138px,#cfeaf3 139px,#dff3f8 139.5px,#fff4ae 140.5px,#fdab60 141.5px,#f36a42 142.5px,#f16740 143px,#f57145 143.5px,#fca55d 144.5px,#fff6b2 146px,#e5f5ee 147px,#cae8f2 148px,#daf0f6 149.5px,#fff7b3 151px,#fdad61 152.5px,#eb593a 154px,#e24732 155px,#eb593a 156px,#f99053 157px,#fed586 158px,#fafdc8 159px,#e7f6ec 159.5px,#ceeaf3 160px,#9bcce2 161.5px,#a6d5e7 162.5px,#d8eff6 163.5px,#fff5b0 164.5px,#f8874f 166px,#e34933 167px,#dc3c2c 167.5px,#e14631 168.5px,#ec5c3b 169px,#fcaa5f 170px,#feefa7 171px,#f7fcce 171.5px,#e1f3f7 172px,#aad8e8 173px,#97c9e0 174px,#a1d1e5 174.5px,#d9f0f6 175.5px,#fff2ab 176.5px,#fdb669 177.5px,#f99053 178.5px,#f99354 179px,#fdb96b 180px,#f9fdc9 181.5px,#e1f3f6 182px,#5184bc 184px,#3e5ea9 185px,#3d5ba7 185.5px,#4878b6 186.5px,#5f94c4 187px,#d2ecf4 188.5px,#fff5b0 189.5px,#fdb265 191px,#fca65d 192px,#fdc173 193px,#fdfec2 194.5px,#e9f6e7 195px,#cfebf3 195.5px,#9ccde2 196.5px,#88bdda 197.5px,#9ccde3 198.5px,#d5eef5 199.5px,#fff6b2 200.5px,#f99354 202px,#f57245 202.5px,#e95538 203.5px,#f16640 204.5px,#fb9f5a 205.5px,#fff5af 207px,#e5f5f0 208px,#d0ebf4 208.5px,#bbe1ed 210px,#ddf1f7 211px,#fffcba 212px,#fdb76a 213.5px,#fb9d59 214.5px,#fdbb6e 216px,#fff4ae 217.5px,#e1f3f7 219px,#cbe9f2 220px,#e1f3f7 221.5px,#fdfec2 222.5px,#fed98a 223.5px,#fa9957 224.5px,#ee603d 225.5px,#e24832 226.5px,#ec5d3c 228px,#fed282 231px,#fee293 232.5px,#fdc172 234px,#ee5f3d 236px,#e34932 237.5px,#f06540 238.5px,#fca65d 239.5px,#fffdbc 241px,#eaf7e5 241.5px,#ceeaf3 242px,#7cb3d5 243.5px,#6ba2cb 244.5px,#85bad8 246px,#e4f4f2 248px,#ffffbf 249px,#feeda4 250px,#feeaa0 251px,#f7fcce 252.5px,#e7f6ec 253px,#cdeaf3 253.5px,#79b1d3 255px,#5f94c4 256px,#669dc9 257px,#7bb3d4 257.5px,#c7e7f1 258.5px,#edf8df 259px,#fff3ad 259.5px,#fba25b 260.5px,#e65136 261.5px,#da362a 262.5px,#e65036 263.5px,#fa9656 264.5px,#fffdbc 266px,#e9f7e7 266.5px,#cbe9f2 267px,#97c9e0 268px,#88bdda 269px,#a2d2e5 270px,#daf0f6 271px,#fffab8 272px,#fed585 273px,#fdbb6d 274px,#fec779 275px,#fafdc8 276.5px,#e4f5f1 277px,#8abedb 278.5px,#78b0d3 279.5px);-webkit-mask-image:linear-gradient(90deg,transparent,#000 50.0%);mask-image:linear-gradient(90deg,transparent,#000 50.0%)"></div>
<div class="a" style="left:36px;top:0;width:24px;height:100%;background:linear-gradient(#f6fbd0 0px,#ffffbe 1px,#fdbb6d 6px,#fed182 7.5px,#fcfec5 9px,#d1ecf4 10px,#659bc8 12px,#4a7bb7 13.5px,#69a0ca 15px,#cae8f2 16.5px,#ebf7e4 17px,#fffbb8 17.5px,#fa9957 19px,#ea5839 20px,#dd3c2c 21px,#e95538 22.5px,#fdaf62 24px,#fffbb9 25.5px,#e2f4f4 26.5px,#bee2ee 27.5px,#b2ddeb 28.5px,#e0f3f7 30.5px,#fff5af 32px,#fdc375 33.5px,#fba15b 35px,#fdb668 36.5px,#fdfec2 38.5px,#d1ecf4 39.5px,#689fca 41.5px,#5386bd 43px,#77b0d2 44.5px,#d1ecf4 46px,#ffffbf 47px,#fdc476 48.5px,#fca75e 50px,#fdbe70 52px,#fffebd 55px,#dbf1f7 57.5px,#d3edf4 59px,#e2f4f5 60.5px,#feffc1 62.5px,#fed485 65px,#fdc072 66.5px,#fdc173 67.5px,#feeda3 68.5px,#f6fbd0 69px,#cfeaf3 69.5px,#5e93c3 70.5px,#3d5da8 71px,#313695 71.5px,#313795 74px,#4574b4 75px,#afdbea 76.5px,#d9eff6 77px,#f5fbd2 77.5px,#fed283 78.5px,#fdad60 79px,#eb593a 80px,#c92327 81px,#ad0826 82.5px,#c11b27 83.5px,#eb5a3a 84.5px,#fdbc6e 85.5px,#fffebd 86.5px,#e9f6e8 87px,#cdeaf3 87.5px,#a4d4e6 88.5px,#9fd0e4 89px,#b0dceb 90px,#dbf1f7 91px,#feffc0 92px,#fecc7e 93.5px,#fdb86a 94.5px,#fecc7d 96px,#ffffbe 97.5px,#d8eff6 98.5px,#86bbd9 100px,#649ac7 101.5px,#7cb4d5 103px,#cae8f2 104.5px,#e6f5ed 105px,#fff1aa 106px,#fdad60 107.5px,#f7864e 108.5px,#f67f4b 109.5px,#fdb164 111px,#fff5af 112.5px,#e6f5ee 113.5px,#a5d4e6 115px,#94c7df 116px,#9fd0e4 117px,#dbf1f7 118.5px,#feffc1 119.5px,#fdb668 121.5px,#fa9c58 123px,#fdb769 124px,#fffbb8 125.5px,#d6eef5 126.5px,#9fcfe4 127.5px,#85bbd9 128.5px,#90c4dd 129.5px,#d6eef5 131px,#ffffbf 132px,#fdc677 133.5px,#fdaf62 135px,#fed283 136px,#ffffbf 137px,#d9eff6 138px,#c5e6f0 139px,#d2ecf4 139.5px,#e8f6e9 140px,#ffffbf 140.5px,#f99053 142px,#ee603d 143px,#f46f44 144px,#fca55d 145px,#fff4af 146.5px,#e7f6eb 147.5px,#d7eef5 148px,#c2e4ef 149px,#dff3f8 150.5px,#ffffbf 151.5px,#fed485 152.5px,#f99154 153.5px,#eb5b3b 154.5px,#e24732 155.5px,#ec5b3b 156.5px,#fa9756 157.5px,#fff5b1 159px,#def2f7 160px,#aad8e8 161px,#94c7df 162px,#a8d6e8 163px,#e2f4f5 164px,#f9fdca 164.5px,#feeca2 165px,#fba25b 166px,#ea593a 167px,#df402e 168px,#eb593a 169px,#fb9f5a 170px,#fdfec3 171.5px,#e6f5ed 172px,#aad9e9 173px,#8cc0db 174px,#9dcee3 175px,#e0f3f8 176px,#fafdc8 176.5px,#fee99d 177px,#fb9e59 178px,#f67d4a 178.5px,#f46d43 179.5px,#fa9957 180.5px,#fffdbb 182px,#e5f5ef 182.5px,#87bdd9 183.5px,#4470b2 184.5px,#35429b 185.5px,#343f99 186px,#374a9f 186.5px,#5285bc 187.5px,#d3edf4 189px,#f5fbd2 189.5px,#feeea6 190px,#fdb265 191px,#f88950 192px,#f88a50 192.5px,#fdaf62 193.5px,#fffebd 195px,#eaf7e7 195.5px,#cbe9f2 196px,#92c5de 197px,#7cb3d4 198px,#92c5de 199px,#cfebf3 200px,#eef8df 200.5px,#fff7b3 201px,#f88d52 202.5px,#ea5739 203.5px,#e64f35 204px,#ee613d 205px,#fb9c59 206px,#fff6b2 207.5px,#e2f4f5 208.5px,#b3ddeb 210px,#b5deec 210.5px,#d8eff6 211.5px,#fffebd 212.5px,#fdb669 214px,#fa9656 215px,#fdb467 216.5px,#fdfec3 218.5px,#e1f4f6 219.5px,#cbe9f2 220.5px,#e1f3f6 222px,#feffc1 223px,#feeea5 223.5px,#fa9857 225px,#e64f35 226.5px,#e75136 228px,#feca7b 231px,#fee495 232.5px,#fece7f 234px,#eb5a3a 236.5px,#e24732 237.5px,#f46c43 239px,#fdb163 240px,#feeea5 241px,#fafdc9 241.5px,#e3f4f3 242px,#84bad8 243.5px,#6095c5 245px,#7cb3d4 246.5px,#cbe9f2 248px,#e5f5ee 248.5px,#fff9b7 249.5px,#fee597 250.5px,#fee090 251.5px,#ffffc0 253px,#d1ecf4 254px,#70a8cf 255.5px,#5587be 256.5px,#5487bd 257px,#75aed1 258px,#c6e6f1 259px,#eef8de 259.5px,#fff2ab 260px,#fb9d59 261px,#e54d34 262px,#da372a 263px,#e95538 264px,#fb9f5a 265px,#feea9f 266px,#fafdc7 266.5px,#e2f4f4 267px,#8abfdb 268.5px,#7cb4d5 269.5px,#99cae1 270.5px,#d5edf5 271.5px,#fffab8 272.5px,#fed081 273.5px,#fdb063 275px,#fed182 276px,#fdfec2 277px,#e5f5ef 277.5px,#a0d0e4 278.5px,#7cb3d4 279.5px);-webkit-mask-image:linear-gradient(90deg,transparent,#000 50.0%);mask-image:linear-gradient(90deg,transparent,#000 50.0%)"></div>
<div class="a" style="left:48px;top:0;width:24px;height:100%;background:linear-gradient(#f6fbd0 0px,#ffffbe 1px,#fdbb6d 6px,#fed081 7.5px,#ffffbf 9px,#d9f0f6 10px,#6da4cc 12px,#5285bc 13px,#4d7fb9 14px,#7bb2d4 15.5px,#e4f4f1 17px,#fcfec5 17.5px,#fca45c 19px,#e14531 20.5px,#d93329 21.5px,#e14631 22.5px,#fa9a58 24px,#fff2ab 25.5px,#e8f6e9 26.5px,#d5edf5 27px,#b4ddeb 28px,#aedbea 29px,#e4f5f1 31px,#fffebd 32px,#fdbb6d 34px,#fba05a 35.5px,#fdc072 37px,#fffcba 38.5px,#d6eef5 39.5px,#649ac7 41.5px,#4a7ab7 43px,#5588be 44px,#74acd1 45px,#e4f4f1 47px,#fff5b0 48px,#fca45c 50px,#f8874f 51.5px,#f98f53 52.5px,#fdb568 54px,#fff8b5 56.5px,#dff3f8 59px,#dff3f8 61px,#fbfec6 63px,#fecf80 65.5px,#fdb86a 67px,#fdbf71 68px,#fff2ac 69px,#eef8df 69.5px,#bde2ee 70px,#4d7eb9 71px,#36469d 71.5px,#313695 72px,#313695 74.5px,#4b7cb8 75.5px,#cdeaf3 77px,#f2fad8 77.5px,#feefa7 78px,#fecb7c 78.5px,#f26841 79.5px,#c41d27 80.5px,#a50026 81.5px,#af0a26 83.5px,#cd2627 84px,#f8874f 85px,#fee79b 86px,#fcfec4 86.5px,#e5f5f0 87px,#a6d5e7 88.5px,#aedbea 89.5px,#d1ecf4 90.5px,#e6f5ed 91px,#fff8b4 92px,#fdc274 93.5px,#fdad60 95px,#fecf80 96.5px,#fbfdc7 98px,#d2ecf4 99px,#87bcd9 100.5px,#6ba2cb 102px,#86bbd9 103.5px,#d2ecf4 105px,#fcfec4 106px,#fdaf62 108px,#f8874f 109.5px,#f99455 110.5px,#fdbb6d 111.5px,#fff9b6 113px,#e2f4f5 114px,#9ecfe3 115.5px,#8cc0db 116.5px,#96c8e0 117.5px,#dbf0f6 119px,#fffbb9 120px,#fdb769 121.5px,#f7864f 123px,#f88850 123.5px,#fdab60 124.5px,#fff4af 126px,#e1f3f7 127px,#91c4dd 128.5px,#7eb5d6 129.5px,#96c8e0 130.5px,#d5eef5 131.5px,#fff6b2 132.5px,#fdc475 133.5px,#fba35c 134.5px,#fdb769 135.5px,#feeea4 136.5px,#f8fccb 137px,#e2f4f5 137.5px,#b2dceb 138.5px,#aedaea 139px,#d6eef5 140px,#fff2ac 141px,#fca45d 142px,#ee613d 143px,#eb5a3a 143.5px,#f46f44 144.5px,#fca55d 145.5px,#fee091 146.5px,#f9fdca 147.5px,#d8eff6 148.5px,#bee2ee 149.5px,#d2ecf4 151px,#e6f5ed 151.5px,#fff3ad 152.5px,#fa9756 154px,#ec5b3b 155px,#e24732 156px,#ed5e3c 157px,#fb9f5a 158px,#fffdbc 159.5px,#eaf7e5 160px,#cfebf3 160.5px,#9dcde3 161.5px,#8dc1dc 162.5px,#96c8e0 163px,#cae8f2 164px,#e9f6e7 164.5px,#fffcba 165px,#fee293 165.5px,#f98f53 166.5px,#f26941 167px,#e14631 168px,#e95639 169px,#f99555 170px,#fffbb9 171.5px,#ebf7e4 172px,#cce9f2 172.5px,#92c5de 173.5px,#7bb3d4 174.5px,#98cae1 175.5px,#e4f4f1 176.5px,#fffebd 177px,#fdb366 178px,#f7834d 178.5px,#e54d34 179.5px,#e44b33 180px,#ea593a 180.5px,#fba25c 181.5px,#fff4af 182.5px,#e9f6e8 183px,#b7dfec 183.5px,#5487bd 184.5px,#323996 185.5px,#313695 186px,#313695 187px,#4576b4 188px,#d6eef5 189.5px,#fafdc9 190px,#fee79a 190.5px,#fa9a58 191.5px,#f46d43 192.5px,#f46e44 193px,#fa9b58 194px,#fffbba 195.5px,#e9f6e8 196px,#c6e6f1 196.5px,#86bbd9 197.5px,#6fa7ce 198.5px,#88bdda 199.5px,#cae8f2 200.5px,#ecf8e2 201px,#fff8b4 201.5px,#fdb265 202.5px,#f8864f 203px,#e54e35 204px,#e14631 204.5px,#eb5a3a 205.5px,#fa9857 206.5px,#fff8b4 208px,#ddf1f7 209px,#b3ddeb 210px,#aedbea 211px,#d3edf4 212px,#eaf7e5 212.5px,#ffffc0 213px,#fdb567 214.5px,#f98f53 215.5px,#f98e52 216px,#fdac60 217px,#ffffc0 219px,#e1f4f5 220px,#cae8f2 221px,#e1f3f6 222.5px,#feffc0 223.5px,#feeea5 224px,#fa9656 225.5px,#e54e35 227px,#e75237 228.5px,#fed182 231.5px,#fee598 233px,#fed98a 234px,#e85438 237px,#e14631 238px,#eb5a3a 239px,#f99455 240px,#fff4af 241.5px,#d7eff6 242.5px,#75aed2 244px,#5487bd 245.5px,#72abd0 247px,#cbe8f2 248.5px,#e7f6ec 249px,#fff4ae 250px,#fed989 251px,#fece7f 252px,#fed686 252.5px,#fff7b3 253.5px,#d6eef5 254.5px,#679ec9 256px,#4a7bb7 257px,#4b7cb8 257.5px,#70a9cf 258.5px,#c7e7f1 259.5px,#f0f9db 260px,#feefa6 260.5px,#fa9556 261.5px,#e24732 262.5px,#da3529 263.5px,#ea5839 264.5px,#fca75e 265.5px,#fff0a8 266.5px,#f4fbd3 267px,#d8eff6 267.5px,#7db4d5 269px,#71a9cf 270px,#8fc3dd 271px,#d0ebf3 272px,#edf8e0 272.5px,#fffab8 273px,#fdb467 274.5px,#fba25b 275.5px,#fdc778 276.5px,#ffffbf 277.5px,#e4f5f0 278px,#85bad8 279.5px);-webkit-mask-image:linear-gradient(90deg,transparent,#000 50.0%);mask-image:linear-gradient(90deg,transparent,#000 50.0%)"></div>
<div class="a" style="left:60px;top:0;width:24px;height:100%;background:linear-gradient(#f6fbd0 0px,#ffffbe 1px,#fdbb6d 6px,#fecf80 7.5px,#fffcbb 9px,#e0f3f8 10px,#74add1 12px,#588bc0 13px,#4f81ba 14px,#73acd1 15.5px,#daf0f6 17px,#f5fbd2 17.5px,#fff1a9 18px,#fdaf62 19px,#ee613e 20px,#d42d27 21.5px,#db392b 22.5px,#f88b51 24px,#fed485 25px,#fdfec4 26px,#d8eff6 27px,#b3ddeb 28.5px,#daf0f6 30.5px,#fffbba 32px,#fdbb6e 34px,#fa9c59 35.5px,#fdb769 37px,#fff6b2 38.5px,#ddf2f7 39.5px,#6096c5 41.5px,#436fb1 43px,#5e93c4 45px,#d4edf5 47.5px,#f9fdc9 48.5px,#fff5b0 49px,#fdb86a 51px,#fca75e 53px,#fdbe70 54.5px,#fffebd 57.5px,#e6f5ee 59.5px,#e1f3f7 61px,#e9f6e8 62px,#fff7b3 63.5px,#fdb164 65.5px,#f57346 67.5px,#f7814c 68.5px,#fba25c 69px,#fff0a8 70px,#ecf8e1 70.5px,#b9e0ed 71px,#4a7bb7 72px,#36459d 72.5px,#313695 73px,#313695 75px,#333e99 75.5px,#416aae 76px,#649ac7 76.5px,#cce9f2 77.5px,#f5fbd1 78px,#fee89c 78.5px,#f7804c 79.5px,#cc2527 80.5px,#a50026 81.5px,#a50026 82.5px,#c82127 83.5px,#e24732 84px,#fdb568 85px,#fee597 85.5px,#fafdc8 86px,#d8eff6 86.5px,#6095c5 88px,#4473b3 89px,#4574b3 89.5px,#679dc9 90.5px,#e4f5f0 92px,#fffbb9 92.5px,#fdae61 93.5px,#e85438 94.5px,#d73027 95.5px,#df412f 96.5px,#fca95f 98px,#fff0a8 99px,#f5fbd1 99.5px,#dcf1f7 100px,#86bbd9 101.5px,#79b1d3 102.5px,#8abfdb 103.5px,#cbe8f2 105px,#e4f4f1 105.5px,#f5fbd1 106px,#fff7b3 106.5px,#fdb96c 108px,#f99154 109px,#f7804c 110px,#fca75e 111.5px,#fedc8c 112.5px,#f7fccd 113.5px,#e2f4f4 114px,#82b8d7 115.5px,#598dc1 117px,#79b1d3 118.5px,#bfe3ef 119.5px,#e5f5ef 120px,#feffc1 120.5px,#fca65d 122px,#f8884f 122.5px,#f47044 123.5px,#f67848 124px,#fdae61 125px,#feeca2 126px,#fafdc8 126.5px,#e2f4f4 127px,#88bdda 128.5px,#79b1d3 129.5px,#86bbd9 130px,#c5e6f0 131px,#e9f7e7 131.5px,#fff9b7 132px,#fdbb6d 133px,#f8884f 134px,#f7864f 134.5px,#fdb265 135.5px,#fff0a8 136.5px,#f5fbd1 137px,#dcf1f7 137.5px,#a0d0e4 138.5px,#94c6df 139px,#96c8e0 139.5px,#c8e7f1 140.5px,#ebf7e4 141px,#fff6b2 141.5px,#fdac60 142.5px,#f46d43 143.5px,#f36a42 144px,#fb9f5a 145.5px,#fdfec2 147.5px,#dcf1f7 148.5px,#b7dfec 150px,#def2f7 151.5px,#fffbb9 152.5px,#fca45c 154px,#ef623e 155px,#e24832 156px,#ea5839 157px,#f99354 158px,#fff7b3 159.5px,#d4edf5 160.5px,#82b9d7 162px,#78b0d3 163px,#86bcd9 163.5px,#cae8f2 164.5px,#eff9dd 165px,#fff1aa 165.5px,#fa9857 166.5px,#e14430 167.5px,#d62f27 168.5px,#e85538 169.5px,#fdae61 170.5px,#fffbb8 171.5px,#e5f5ef 172px,#669cc8 173.5px,#426db0 174.5px,#4168ae 175px,#4777b5 175.5px,#6297c6 176px,#c8e7f1 177px,#f7fcce 177.5px,#fee293 178px,#fcaa5f 178.5px,#f46d43 179px,#d73027 180px,#e04330 181px,#fa9957 182px,#fff9b5 183px,#e1f3f7 183.5px,#689fca 184.5px,#4168ad 185px,#323896 185.5px,#313695 187.5px,#35419b 188px,#4473b3 188.5px,#aad8e8 189.5px,#e3f4f3 190px,#fffab7 190.5px,#fdac60 191.5px,#f16640 192.5px,#ec5d3c 193px,#f67a49 194px,#fba05a 194.5px,#feeda3 195.5px,#f4fbd2 196px,#d2ecf4 196.5px,#7eb5d6 197.5px,#588bbf 198.5px,#5689bf 199px,#76afd2 200px,#c7e7f1 201px,#eff9dd 201.5px,#fff0a9 202px,#f99455 203px,#dc3a2b 204px,#c11b27 205px,#d42d27 206px,#f67c4a 207px,#fee192 208px,#ffffbf 208.5px,#e4f4f1 209px,#9fd0e4 210px,#86bbd9 211px,#a2d2e5 212px,#e4f5f0 213px,#fdfec2 213.5px,#fba35c 215px,#f57547 216px,#f57446 216.5px,#f7804c 217px,#fdb86a 218px,#f9fdc9 219.5px,#e6f5ed 220px,#b4deec 221.5px,#d3edf4 223px,#e8f6e9 223.5px,#fbfdc7 224px,#feefa6 224.5px,#f88c51 226px,#e85337 227px,#df412f 228px,#f0643f 229.5px,#fed283 232px,#fee090 233.5px,#fdb769 235px,#da362a 237.5px,#ce2827 238.5px,#de3e2d 239.5px,#f7834d 240.5px,#fdb366 241px,#fffcba 242px,#e5f5ef 242.5px,#b9e0ed 243px,#497ab7 244.5px,#3950a2 245.5px,#3c57a5 246.5px,#426db0 247px,#76afd2 248px,#cae8f2 249px,#ecf8e1 249.5px,#fffab7 250px,#fdb76a 251.5px,#fdab5f 252.5px,#fed081 253.5px,#f8fccc 254.5px,#d8eff6 255px,#5d92c3 256.5px,#4472b3 257.5px,#497ab6 258px,#7bb3d4 259px,#def2f8 260px,#fffdbd 260.5px,#fed989 261px,#f16740 262px,#dc3a2c 262.5px,#ba1426 263.5px,#c92327 264.5px,#dd3d2d 265px,#fa9b58 266px,#fff3ac 267px,#eef8df 267.5px,#c9e8f1 268px,#80b7d6 269px,#669cc8 270px,#78b1d3 271px,#dff2f8 272.5px,#f8fccc 273px,#feeea6 273.5px,#fdb96b 274.5px,#fa9957 275.5px,#fb9f5a 276px,#fdb669 276.5px,#fff5af 277.5px,#edf8e0 278px,#c9e8f1 278.5px,#8abeda 279.5px);-webkit-mask-image:linear-gradient(90deg,transparent,#000 50.0%);mask-image:linear-gradient(90deg,transparent,#000 50.0%)"></div>
<div class="a" style="left:72px;top:0;width:24px;height:100%;background:linear-gradient(#f6fbd0 0px,#ffffbe 1px,#fdbb6d 6px,#fecf80 7.5px,#fffdbc 9px,#def2f7 10px,#71aacf 12px,#5689be 13px,#4e80ba 14px,#73acd1 15.5px,#d7eff6 17px,#fff4ae 18px,#f88c51 19.5px,#da372a 21px,#d22b27 22px,#e04330 23px,#f7824c 24px,#fecf80 25px,#feffc1 26px,#daf0f6 27px,#bde2ee 28px,#bfe3ef 29px,#e2f4f4 30.5px,#fff8b4 32px,#fdba6c 34px,#fa9756 36px,#fdc072 37.5px,#fbfec6 39px,#e6f5ed 39.5px,#c5e6f0 40px,#679dc9 41.5px,#4472b3 43px,#6298c6 45.5px,#a3d3e6 47.5px,#e0f3f8 49.5px,#fbfec6 51px,#feeda3 52.5px,#fee191 55.5px,#fdac60 61px,#f57346 63px,#c82127 65.5px,#a50026 68px,#b71126 69px,#eb5b3b 70px,#fa9857 70.5px,#fffebd 71.5px,#d7eff6 72px,#6196c5 73px,#3e60aa 73.5px,#313695 74px,#323996 76.5px,#436db0 77px,#afdbea 78px,#eaf7e6 78.5px,#feeea6 79px,#f7854e 80px,#dc392b 81px,#d62f27 81.5px,#e04430 82.5px,#f88b51 83.5px,#fee598 84.5px,#fafdc8 85px,#d7eff6 85.5px,#4a7ab7 87px,#313695 88px,#313695 90px,#578abf 91px,#c1e4ef 92px,#f1fad8 92.5px,#fee99d 93px,#f57748 94px,#c31d27 95px,#a50026 96px,#af0926 97px,#e24631 98px,#fdb467 99px,#ffffbf 100px,#e5f5ef 100.5px,#aad8e9 101.5px,#9ccde2 102px,#a9d7e8 103.5px,#e1f3f7 105px,#fffebe 106px,#fdab60 108px,#f36a42 109.5px,#ed5d3c 110.5px,#f57748 111.5px,#fa9a58 112px,#fee79a 113px,#fbfdc7 113.5px,#dbf0f7 114px,#578abf 115.5px,#3a52a3 116.5px,#37489e 117px,#384da0 117.5px,#4f81ba 118.5px,#d3edf4 120px,#f7fcce 120.5px,#feea9f 121px,#fa9b58 122px,#ef633e 123px,#ed5d3c 123.5px,#f77f4b 124.5px,#fca65d 125px,#feefa6 126px,#f4fbd3 126.5px,#d6eef5 127px,#8fc2dd 128px,#72abd0 129px,#91c4de 130px,#e3f4f3 131px,#fffdbc 131.5px,#fdb366 132.5px,#f36c43 133.5px,#f0643f 134px,#f36a42 134.5px,#fa9c59 135.5px,#fff9b6 137px,#edf8e0 137.5px,#cfebf3 138px,#8fc3dd 139px,#71a9cf 140px,#72abd0 140.5px,#b6deec 141.5px,#e9f6e8 142px,#fff1aa 142.5px,#fa9756 143.5px,#f67949 144px,#f57647 144.5px,#fdb265 146px,#fffbba 147.5px,#dff3f8 148.5px,#b4ddeb 150px,#d6eef5 151.5px,#fefec2 152.5px,#fdae61 154px,#e85337 155.5px,#e34932 156.5px,#f26941 157.5px,#fdb164 158.5px,#fff1aa 159.5px,#f4fbd3 160px,#daf0f6 160.5px,#7ab1d3 162px,#6499c7 163px,#7cb3d4 164px,#d4edf5 165px,#fbfdc7 165.5px,#fedf8f 166px,#fca65d 166.5px,#f16740 167px,#db392b 167.5px,#bf1927 168.5px,#d93429 169.5px,#ec5b3b 170px,#f99154 170.5px,#fff4af 171.5px,#e6f5ed 172px,#aedbea 172.5px,#497ab7 173.5px,#384ca0 174px,#313695 174.5px,#323996 176px,#426caf 176.5px,#72abd0 177px,#bbe1ed 177.5px,#f6fccf 178px,#feda8a 178.5px,#f99555 179px,#e85538 179.5px,#d32c27 180px,#c51f27 180.5px,#dc3a2c 181.5px,#f06540 182px,#fba35c 182.5px,#fede8e 183px,#f8fccc 183.5px,#c4e5f0 184px,#497ab6 185px,#343e99 185.5px,#313695 186px,#313695 188px,#36469d 188.5px,#4d7eb9 189px,#c0e3ef 190px,#f1fad8 190.5px,#feea9f 191px,#f88d52 192px,#e85337 193px,#e65036 193.5px,#f67e4b 194.5px,#fdad61 195px,#fffcba 196px,#e2f4f4 196.5px,#7fb6d6 197.5px,#5d92c3 198px,#426cb0 199px,#4472b2 199.5px,#6fa7ce 200.5px,#cfebf3 201.5px,#f8fccc 202px,#fee395 202.5px,#fdae61 203px,#f46c43 203.5px,#da372a 204px,#a50026 205px,#a50026 206px,#d93529 207px,#fdb467 208px,#fee99e 208.5px,#f1fad8 209px,#c6e6f1 209.5px,#76afd2 210.5px,#679ec9 211px,#75aed1 212px,#e4f5f0 213.5px,#fffdbb 214px,#fdb568 215px,#f36b42 216px,#ed5d3c 216.5px,#ee5f3d 217px,#f98e52 218px,#fff6b1 219.5px,#d6eef5 220.5px,#a5d4e6 221.5px,#9ccde2 222px,#addaea 223px,#e2f4f4 224px,#f8fccc 224.5px,#feefa6 225px,#fdab60 226px,#ed5e3c 227px,#dc3b2c 228px,#e75237 229.5px,#fdc576 232px,#feda8b 233.5px,#fdb76a 235px,#f67e4b 236px,#d12a27 237.5px,#b40f26 239px,#ce2727 240px,#f67a49 241px,#fee699 242px,#f6fbd0 242.5px,#cae8f2 243px,#5f94c4 244px,#333c98 245px,#313695 245.5px,#313695 247px,#384ca0 247.5px,#4778b5 248px,#a2d2e5 249px,#d7eef5 249.5px,#f9fdca 250px,#fca75e 251.5px,#f7804c 252.5px,#fb9d59 253.5px,#fdc273 254px,#f7fccd 255px,#d1ecf4 255.5px,#6fa7ce 256.5px,#436fb1 257.5px,#426db0 258px,#649ac7 259px,#c1e4ef 260px,#f0f9da 260.5px,#fee99e 261px,#fdb567 261.5px,#f47145 262px,#db382b 262.5px,#a50026 263.5px,#a50026 264.5px,#d42d27 265.5px,#fb9d59 266.5px,#fffcba 267.5px,#e2f4f5 268px,#88bdda 269px,#5d92c3 270px,#669dc9 271px,#7cb3d5 271.5px,#c7e7f1 272.5px,#ecf7e3 273px,#fff8b5 273.5px,#fca65d 275px,#f99455 276px,#fec97a 277px,#f5fbd2 278px,#d2ecf4 278.5px,#8ec1dc 279.5px);-webkit-mask-image:linear-gradient(90deg,transparent,#000 50.0%);mask-image:linear-gradient(90deg,transparent,#000 50.0%)"></div>
<div class="a" style="left:84px;top:0;width:24px;height:100%;background:linear-gradient(#f6fbd0 0px,#ffffbe 1px,#fdbb6d 6px,#fed182 7.5px,#feffc1 9px,#d6eef5 10px,#6aa1cb 12px,#4c7db8 13.5px,#5487bd 14.5px,#75add1 15.5px,#d3edf4 17px,#fffab8 18px,#fca75e 19.5px,#f36b42 20.5px,#e54d34 22px,#f0653f 23px,#fba05a 24px,#fff4ae 25.5px,#e8f6ea 26.5px,#d8eff6 27px,#c4e5f0 28.5px,#dff2f8 30px,#feffc1 31.5px,#fdb96b 34px,#fa9556 35.5px,#f99455 36.5px,#fdb467 37.5px,#fff8b4 39px,#daf0f6 40px,#7ab2d4 41.5px,#5b8fc1 42.5px,#5589be 43.5px,#90c3dd 52px,#e0f3f8 54.5px,#f9fdc9 55.5px,#fdc778 58px,#fca85e 61px,#f67948 62.5px,#d32c27 64.5px,#a50026 66.5px,#a50026 69px,#b40f26 69.5px,#d42d27 70px,#fa9957 71px,#fff9b5 72px,#e3f4f2 72.5px,#acdae9 73px,#4a7bb7 74px,#384ca0 74.5px,#313695 75px,#313695 77px,#3950a2 77.5px,#5d91c3 78px,#9ecee3 78.5px,#e1f3f6 79px,#fffab7 79.5px,#fdc476 80.5px,#fdc576 81.5px,#fff4ae 83px,#e2f4f4 84px,#95c8df 85px,#4e80ba 86px,#323a97 87px,#333c98 90px,#6398c6 91px,#d0ebf3 92px,#f9fdca 92.5px,#fee293 93px,#fdad60 93.5px,#f46c43 94px,#da372a 94.5px,#a50026 95.5px,#aa0526 97.5px,#c92227 98px,#f7864f 99px,#fee99e 100px,#f9fdc9 100.5px,#e2f4f5 101px,#afdbea 102px,#a7d6e7 102.5px,#b2dceb 103.5px,#e6f5ed 105px,#fff9b5 106px,#fdbb6d 107.5px,#f98e52 108.5px,#f57747 109.5px,#f7864f 110.5px,#fca55d 111px,#feeea5 112px,#f1f9da 112.5px,#c4e5f0 113px,#578bbf 114px,#3b56a5 114.5px,#313695 115px,#313695 117.5px,#588cc0 118.5px,#bfe3ef 119.5px,#edf8e1 120px,#fff2ab 120.5px,#fba35c 121.5px,#ec5c3b 122.5px,#e54e35 123.5px,#ed5f3d 124px,#fdb365 125px,#ffffbf 126px,#e1f3f6 126.5px,#91c4dd 127.5px,#72abd0 128.5px,#93c6df 129.5px,#e5f5ee 130.5px,#fffab7 131px,#fca65d 132px,#f57446 132.5px,#e04330 133.5px,#e65036 134.5px,#fdae61 136px,#feefa7 137px,#f7fccf 137.5px,#ddf2f7 138px,#77afd2 139.5px,#568abf 141px,#659bc8 141.5px,#8fc2dd 142px,#cfeaf3 142.5px,#fffdbc 143px,#feca7b 143.5px,#f7864f 144px,#e85538 144.5px,#e04330 145px,#e34933 145.5px,#f7844d 146.5px,#fedc8c 147.5px,#fff8b4 148px,#eef8df 148.5px,#d5eef5 149px,#b0dceb 150px,#d0ebf3 151.5px,#e6f5ec 152px,#fafdc9 152.5px,#feefa6 153px,#fdb063 154px,#f0643f 155px,#e44b34 155.5px,#db392b 156.5px,#e95538 157.5px,#fb9d59 158.5px,#fee99e 159.5px,#fbfdc6 160px,#e2f4f5 160.5px,#7bb3d4 162px,#6398c6 163px,#79b1d3 164px,#d2ecf4 165px,#fafdc8 165.5px,#fedf8f 166px,#fba15b 166.5px,#ed5e3c 167px,#d22b27 167.5px,#a60126 168.5px,#ba1526 169.5px,#d93429 170px,#f26841 170.5px,#fdac60 171px,#fee496 171.5px,#f5fbd2 172px,#c6e6f1 172.5px,#6095c4 173.5px,#4370b2 174px,#3c59a6 174.5px,#3a54a4 175px,#4f81ba 176px,#73acd0 176.5px,#e1f3f6 177.5px,#fffab8 178px,#fba25b 179px,#e75136 180px,#e34933 181px,#f99153 182px,#fff4af 183px,#e4f4f2 183.5px,#a3d3e6 184px,#659bc8 184.5px,#3e60aa 185px,#313695 185.5px,#313695 187.5px,#36459c 188px,#4676b5 188.5px,#acd9e9 189.5px,#e3f4f2 190px,#fff9b7 190.5px,#fdab60 191.5px,#f67f4b 192px,#e85438 193px,#e95638 193.5px,#f88950 194.5px,#fdb669 195px,#fffebe 196px,#e2f4f5 196.5px,#689fca 198px,#5083bb 199px,#69a0ca 200px,#e4f5f1 201.5px,#fffab8 202px,#fba25c 203px,#f26a41 203.5px,#de3f2e 204px,#be1827 205px,#cc2627 206px,#f46f44 207px,#fca85e 207.5px,#fffcba 208.5px,#e5f5ef 209px,#97c9e0 210px,#73acd0 211px,#87bcd9 212px,#cae8f2 213px,#ecf8e1 213.5px,#fff7b3 214px,#fdb669 215px,#f67c4a 216px,#f57547 216.5px,#f67d4a 217px,#fdb063 218px,#fcfec5 219.5px,#e5f5ee 220px,#addaea 221px,#93c6de 222px,#a6d5e7 223px,#dff3f8 224px,#f6fccf 224.5px,#feeea6 225px,#fba35c 226px,#e64f35 227px,#d93529 227.5px,#cd2727 228.5px,#db392b 229.5px,#fdb668 232px,#fecf80 233px,#fed081 234px,#fdb668 235px,#f67d4a 236px,#d12a27 237.5px,#bb1526 238.5px,#c61f27 239.5px,#ec5c3b 240.5px,#fdc576 241.5px,#feefa6 242px,#eff9dd 242.5px,#c2e4ef 243px,#6095c4 244px,#426baf 244.5px,#313695 245.5px,#313695 246.5px,#426aaf 247.5px,#5e93c3 248px,#b9e0ed 249px,#e6f5ed 249.5px,#fffcbb 250px,#fca95f 251.5px,#f99053 252.5px,#fdb568 253.5px,#fff4ae 254.5px,#eef8df 255px,#c5e6f0 255.5px,#6ea5cd 256.5px,#5487bd 257px,#4574b4 258px,#69a0ca 259px,#c4e5f0 260px,#f1fad9 260.5px,#feeba0 261px,#f67d4a 262px,#cc2527 263px,#b50f26 264px,#d22b27 265px,#f7824d 266px,#fee79b 267px,#f8fccc 267.5px,#d6eef5 268px,#84bad8 269px,#5f94c4 270px,#6aa1cb 271px,#cce9f2 272.5px,#eef8de 273px,#fff6b2 273.5px,#fca55d 275px,#fa9656 276px,#fecc7d 277px,#f4fbd3 278px,#d3ecf4 278.5px,#90c4dd 279.5px);-webkit-mask-image:linear-gradient(90deg,transparent,#000 50.0%);mask-image:linear-gradient(90deg,transparent,#000 50.0%)"></div>
<div class="a" style="left:96px;top:0;width:24px;height:100%;background:linear-gradient(#f6fbd0 0px,#ffffbe 1px,#fdbb6d 6px,#fed283 7.5px,#fbfdc7 9px,#e9f6e8 9.5px,#cfeaf3 10px,#76aed2 11.5px,#5487bd 12.5px,#497ab6 13.5px,#6298c6 15px,#cdeaf3 17px,#e8f6e8 17.5px,#fcfec4 18px,#fca75e 20px,#f67f4b 21px,#f57346 22px,#fba15b 23.5px,#fffab8 25.5px,#ddf2f7 27px,#d2ecf4 28px,#e2f4f4 29.5px,#fbfec5 31px,#fdb467 34px,#f99354 35.5px,#f99053 36.5px,#fdae61 37.5px,#f9fdc9 39.5px,#e5f5ee 40px,#c8e7f1 40.5px,#7ab2d3 42px,#689fca 44px,#83b9d7 51px,#96c9e0 52px,#e2f4f5 54px,#fdfec2 55px,#fed787 56.5px,#fdad61 58px,#fa9656 60.5px,#f46e43 62.5px,#cc2527 65.5px,#b40e26 68px,#ca2427 69px,#f67a49 70px,#feeba1 71px,#edf8e0 71.5px,#b6deec 72px,#4777b5 73px,#35429b 73.5px,#313695 74px,#313695 76px,#35429b 76.5px,#436fb1 77px,#95c8e0 78px,#c4e5f0 78.5px,#e9f6e7 79px,#ffffc0 79.5px,#fee191 81px,#feefa7 82.5px,#f7fcce 83.5px,#d2ecf4 84.5px,#69a0ca 86.5px,#4a7bb7 87.5px,#426aaf 88.5px,#436db0 89px,#6298c6 90px,#e0f3f7 91.5px,#ffffbf 92px,#fdaf62 93px,#e14531 94px,#b40f26 95px,#aa0426 96px,#c21c27 97px,#e95538 98px,#fed585 99.5px,#f7fccd 100.5px,#e3f4f2 101px,#b2dceb 102px,#9bcde2 103px,#a8d7e8 104px,#d3edf4 105px,#fdfec3 106px,#fdc072 107.5px,#fa9a58 109px,#fdb669 110px,#f6fccf 111.5px,#d5edf5 112px,#a2d2e5 112.5px,#4b7cb7 113.5px,#313695 114.5px,#313695 116px,#34409a 116.5px,#3f62ab 117px,#80b6d6 118px,#e1f3f6 119px,#fdfec2 119.5px,#fba15b 121px,#f47044 122px,#f36c42 122.5px,#f57747 123px,#fdb96b 124px,#fffdbb 125px,#e6f5ed 125.5px,#9bcce2 126.5px,#78b0d3 127.5px,#90c4dd 128.5px,#d9f0f6 129.5px,#f8fccb 130px,#fee89c 130.5px,#f88950 131.5px,#de3e2d 132.5px,#d62f27 133.5px,#e95538 134.5px,#fca85e 135.5px,#fff3ad 136.5px,#f0f9db 137px,#ceeaf3 137.5px,#689fca 139px,#5689be 140px,#74add1 141px,#d1ecf4 142px,#f9fdca 142.5px,#fee293 143px,#fdac60 143.5px,#f46e43 144px,#df402f 144.5px,#c61f27 145.5px,#ce2827 146px,#f57346 147px,#fee394 148px,#fcfec4 148.5px,#e2f4f4 149px,#b3ddeb 150px,#b3ddeb 150.5px,#d3ecf4 151.5px,#e9f6e8 152px,#fdfec3 152.5px,#fecb7d 153.5px,#f57647 154.5px,#d93429 155.5px,#c51f27 156.5px,#d73027 157.5px,#f57647 158.5px,#fcaa5f 159px,#fff7b3 160px,#ebf7e4 160.5px,#c6e6f1 161px,#7fb6d6 162px,#6ba2cb 162.5px,#669dc9 163.5px,#7db4d5 164px,#dff3f8 165px,#fff9b6 165.5px,#feca7b 166px,#f7854e 166.5px,#e24631 167px,#c51e27 167.5px,#af0926 168.5px,#d32d27 169.5px,#f99053 170.5px,#fff3ad 171.5px,#eaf7e6 172px,#bee2ee 172.5px,#70a9cf 173.5px,#5a8dc1 174.5px,#70a9cf 175.5px,#def2f7 177px,#f9fdca 177.5px,#feeba0 178px,#fca75e 179px,#f57245 180px,#f46d43 180.5px,#fa9957 181.5px,#feeea5 182.5px,#eef8df 183px,#b9e0ed 183.5px,#4a7bb7 184.5px,#37499e 185px,#313695 185.5px,#313695 187px,#5083bb 188px,#b5deec 189px,#e8f6ea 189.5px,#fff6b2 190px,#fdaf62 191px,#f57446 192px,#f46e43 192.5px,#f57647 193px,#fca85e 194px,#fffdbc 195.5px,#e9f7e7 196px,#c9e8f1 196.5px,#88bdda 197.5px,#689ec9 198.5px,#6ea6ce 199.5px,#85bbd8 200px,#d2ecf4 201px,#f4fbd3 201.5px,#feeda3 202px,#fa9756 203px,#e44c34 204px,#dc3a2c 205px,#ec5d3b 206px,#fdac60 207px,#fff2ab 208px,#d8eff6 209px,#9ccde2 210px,#84bad8 211px,#9dcee3 212px,#dcf1f7 213px,#f5fbd1 213.5px,#fff1aa 214px,#fdba6c 215px,#fa9555 216px,#fa9656 216.5px,#fdba6d 217.5px,#fbfec6 219px,#e7f6ec 219.5px,#b4ddec 220.5px,#9fcfe4 221.5px,#a4d4e6 222px,#ceeaf3 223px,#e9f6e8 223.5px,#ffffbe 224px,#fdbe70 225px,#ed5e3c 226px,#c21c27 227px,#aa0526 228px,#b50f26 229px,#d83228 230px,#fca95f 232px,#fece7f 233.5px,#fdb365 235px,#f67948 236px,#d22b27 237.5px,#c92227 239px,#d83228 239.5px,#f67b49 240.5px,#fdaf62 241px,#fffbba 242px,#e4f5f0 242.5px,#b6deec 243px,#6196c5 244px,#4575b4 244.5px,#384da0 245.5px,#384ca0 246px,#4370b1 247px,#7cb4d5 248px,#d3ecf4 249px,#fff5af 250px,#fdc677 251px,#fdab60 252px,#fdbe70 253px,#fff1aa 254px,#f3fbd4 254.5px,#d4edf5 255px,#83b9d7 256px,#5b8fc1 257px,#6298c6 258px,#77afd2 258.5px,#c3e5f0 259.5px,#eaf7e5 260px,#fff6b2 260.5px,#fca65d 261.5px,#e54e35 262.5px,#d12a27 263.5px,#dc3b2c 264.5px,#f7814c 265.5px,#fedf8f 266.5px,#fffcba 267px,#e7f6eb 267.5px,#c2e4f0 268px,#84bad8 269px,#73acd0 270px,#90c3dd 271px,#cfebf3 272px,#ecf8e1 272.5px,#fffbb9 273px,#fdb568 274.5px,#fba25c 275.5px,#fdc577 276.5px,#fffbba 277.5px,#e9f7e7 278px,#c8e7f1 278.5px,#91c5de 279.5px);-webkit-mask-image:linear-gradient(90deg,transparent,#000 50.0%);mask-image:linear-gradient(90deg,transparent,#000 50.0%)"></div>
<div class="a" style="left:108px;top:0;width:24px;height:100%;background:linear-gradient(#f6fbd0 0px,#ffffbe 1px,#fdbb6d 6px,#fdc476 7px,#fff5b0 8.5px,#e4f5f0 9.5px,#c6e6f1 10px,#6da5cd 11.5px,#4e80ba 12.5px,#4777b5 13.5px,#5588be 14.5px,#75aed1 15.5px,#e3f4f3 17.5px,#fff8b4 18.5px,#fdb164 20.5px,#fa9957 22px,#fdb86b 23.5px,#fffebd 26px,#f4fbd3 27px,#f3fad4 28px,#fff9b5 30px,#fdb062 33.5px,#f99355 35.5px,#fdaf62 37px,#fffab7 39px,#e2f4f4 40px,#9bcce2 41.5px,#7bb3d4 43px,#81b7d7 49.5px,#99cbe1 51px,#d7eff6 53px,#fdfec3 54.5px,#fdb769 57.5px,#fa9857 59.5px,#fdaf61 62px,#ffffbf 66px,#e3f4f3 67.5px,#cfebf3 68px,#99cae1 69px,#4575b4 70.5px,#333b97 71.5px,#313695 72px,#313695 74px,#5e93c3 76px,#a3d3e5 79.5px,#b9e0ed 82.5px,#b6dfec 88.5px,#d2ecf4 89.5px,#e9f6e8 90px,#feffc1 90.5px,#fee99d 91px,#fb9d59 92px,#e85337 93px,#da3529 94px,#e24832 95.5px,#fca45c 97.5px,#fffcbb 99.5px,#e3f4f2 100.5px,#ceeaf3 101px,#9ccde2 102.5px,#90c4dd 104px,#d3edf4 105.5px,#fffebd 106.5px,#fed989 108px,#feeda3 110px,#fcfec4 111px,#e3f4f2 112px,#95c8e0 114px,#79b1d3 115.5px,#82b8d7 116.5px,#d6eef5 118px,#fff6b1 119px,#fdc475 120px,#fb9d59 121px,#fa9a58 121.5px,#fdb96b 122.5px,#f9fdc9 124px,#e2f4f4 124.5px,#a0d0e4 125.5px,#7fb6d6 126.5px,#91c4de 127.5px,#d5eef5 128.5px,#f5fbd2 129px,#feeda4 129.5px,#fa9c59 130.5px,#eb593a 131.5px,#e65036 132px,#ef633f 133px,#fba25b 134px,#feffc1 135.5px,#e5f5ef 136px,#c0e4ef 136.5px,#7cb4d5 137.5px,#5689be 139px,#74add1 140px,#d0ebf4 141px,#f8fccc 141.5px,#fee395 142px,#fdb164 142.5px,#e65036 143.5px,#d93529 144.5px,#de3f2e 145px,#f57848 146px,#feea9f 147.5px,#ffffc0 148px,#dff2f8 149px,#d1ecf4 150px,#e4f5f0 151px,#fffdbc 152px,#fed182 153px,#f88c51 154px,#e75136 155px,#da372a 156px,#e14530 157px,#ec5d3c 157.5px,#fdad60 158.5px,#fff2ab 159.5px,#d7eff5 160.5px,#81b7d6 162px,#78b0d3 163px,#bbe1ed 164px,#ebf7e4 164.5px,#feeea5 165px,#f77f4b 166px,#e85337 166.5px,#df402e 167px,#e64f35 168px,#fdb265 169.5px,#fff2ab 170.5px,#dcf1f7 171.5px,#88bdda 173px,#7ab2d4 174px,#97c9e0 175px,#d7eff5 176px,#f2fad8 176.5px,#fff5b0 177px,#fdbd6f 178px,#f88c51 179px,#f7834d 179.5px,#f8884f 180px,#fdba6d 181px,#fff8b5 182px,#eaf7e6 182.5px,#bfe3ef 183px,#4878b6 184.5px,#384ea1 185.5px,#394ea1 186px,#4b7cb8 187px,#cae8f2 188.5px,#f1f9d9 189px,#fff1aa 189.5px,#fdb366 190.5px,#fa9857 191px,#f88c51 192px,#fcaa5f 193px,#fdfec2 195px,#eaf7e6 195.5px,#d1ecf4 196px,#88bdda 197.5px,#76afd2 198.5px,#8ec2dc 199.5px,#d3ecf4 200.5px,#f2fad6 201px,#fff0a8 201.5px,#fca35c 202.5px,#ec5c3b 203.5px,#e64f35 204.5px,#f98e52 206px,#feeea5 207.5px,#fbfdc7 208px,#e6f5ed 208.5px,#cbe9f2 209px,#9fcfe4 210px,#93c6df 211px,#b1dceb 212px,#e8f6e9 213px,#fdfec3 213.5px,#fed98a 214.5px,#fdb96b 215.5px,#fed081 217px,#fff5b0 218px,#e5f5ef 219px,#bae0ed 220px,#abd9e9 221px,#d8eff6 222.5px,#fffcba 223.5px,#fa9957 225px,#d62f27 226.5px,#c01a27 227.5px,#d62f27 229px,#fdb164 231.5px,#fed585 233px,#fdbd6f 234.5px,#e64f35 236.5px,#d42d27 238px,#e24631 239px,#f88a50 240px,#fff9b6 241.5px,#ebf7e4 242px,#c7e7f1 242.5px,#7ab2d4 243.5px,#4676b5 245px,#598cc0 246.5px,#c9e8f2 248.5px,#e6f5ed 249px,#fff7b2 250px,#fee294 251px,#fee191 252px,#f9fdca 253.5px,#e7f6ec 254px,#cae8f2 254.5px,#8fc3dd 255.5px,#6fa7ce 256.5px,#75aed2 257.5px,#d0ebf3 259px,#f0f9db 259.5px,#fff3ad 260px,#fcaa5f 261px,#eb5b3b 262px,#dd3d2d 263px,#e65136 264px,#f99053 265px,#fee090 266px,#fff8b5 266.5px,#d3edf4 267.5px,#9dcde3 268.5px,#8abfdb 269.5px,#a0d0e4 270.5px,#d4edf5 271.5px,#fffebe 272.5px,#fdc274 274px,#fdb063 275px,#fdb567 275.5px,#fedd8d 276.5px,#f7fcce 277.5px,#e1f3f6 278px,#93c6df 279.5px);-webkit-mask-image:linear-gradient(90deg,transparent,#000 50.0%);mask-image:linear-gradient(90deg,transparent,#000 50.0%)"></div>
<div class="a" style="left:120px;top:0;width:24px;height:100%;background:linear-gradient(#f6fbd0 0px,#ffffbe 1px,#fdbb6d 6px,#fdc577 7px,#fff7b4 8.5px,#e0f3f8 9.5px,#659cc8 11.5px,#4574b3 13px,#4d7fb9 14px,#6ba3cc 15px,#e1f3f7 17px,#fff7b2 18px,#fdb769 19.5px,#f88850 21px,#f88c51 22px,#fca75e 23px,#fee89c 25px,#ffffc0 27px,#feea9e 30px,#fdaf62 33px,#fa9857 35px,#fdb466 36.5px,#fffab7 38.5px,#e5f5ef 39.5px,#ceeaf3 40px,#94c6df 41.5px,#83b9d8 43px,#8bbfdb 49px,#a1d1e4 50.5px,#e3f4f2 53px,#fffdbc 54.5px,#fdb86a 57.5px,#f99455 59.5px,#fa9555 61px,#fdae61 62px,#fff2ac 64px,#fbfec6 64.5px,#d3edf4 65.5px,#4879b6 68px,#313695 69.5px,#313695 72px,#4b7cb8 73.5px,#76afd2 74.5px,#95c7df 75.5px,#cfebf3 87.5px,#e3f4f3 88.5px,#fff2ab 89.5px,#fdb265 90.5px,#f99053 91px,#f57647 92px,#f88950 93.5px,#fdb86b 95px,#fff6b1 97px,#e2f4f4 98.5px,#8cc1dc 101px,#71aacf 103px,#80b6d6 104px,#e3f4f2 106px,#fffebd 107px,#fff0a8 108.5px,#fbfdc6 110.5px,#e1f3f7 112px,#9fcfe4 115px,#aad8e9 116px,#c5e6f0 116.5px,#e7f6eb 117px,#fffcba 117.5px,#fdbc6e 118.5px,#f88b51 119.5px,#f88a51 120px,#fdc072 121.5px,#fbfec6 123px,#e8f6e9 123.5px,#d0ebf3 124px,#a1d1e5 125px,#8ec2dc 126px,#94c7df 126.5px,#c7e7f1 127.5px,#e9f6e8 128px,#fffbb9 128.5px,#fdba6d 129.5px,#f67b49 130.5px,#f47145 131px,#f7824d 132px,#fdb467 133px,#ffffbe 134.5px,#eaf7e6 135px,#ceeaf3 135.5px,#77b0d2 137px,#6095c5 138px,#6ea6cd 139px,#c3e5f0 140px,#f2fad8 140.5px,#fee89d 141px,#fdb769 141.5px,#f67f4b 142px,#ea5739 142.5px,#e24631 143px,#e65036 144px,#fa9857 145.5px,#fee89c 147px,#fafdc7 148px,#e8f6e8 149.5px,#f0f9da 150.5px,#fff9b5 151.5px,#fca55d 153.5px,#f0643f 155px,#ec5d3b 156px,#f67d4a 157px,#fdbe70 158px,#fff6b1 159px,#dff3f8 160px,#aedbea 161px,#9dcee3 162px,#a8d6e8 162.5px,#e5f5f0 163.5px,#fffebe 164px,#fdb567 165px,#f0653f 166px,#ea5839 166.5px,#f16640 167.5px,#fa9a58 168.5px,#fff1a9 170px,#e6f5ec 171px,#cfeaf3 171.5px,#a8d6e8 172.5px,#a0d0e4 173.5px,#d8eff6 175px,#fffcba 176px,#fdb769 177.5px,#fa9957 178.5px,#fdba6d 180px,#feffc1 181.5px,#e7f6eb 182px,#c6e6f1 182.5px,#669dc9 184px,#4a7bb7 185.5px,#7ab2d4 187px,#c3e5f0 188px,#e7f6eb 188.5px,#ffffbf 189px,#fdb467 190.5px,#fa9555 191.5px,#fdb366 193px,#fff5af 194.5px,#f6fccf 195px,#e3f4f2 195.5px,#98cae1 197px,#85bbd8 198px,#9acce2 199px,#daf0f6 200px,#f5fbd2 200.5px,#feefa7 201px,#fdab60 202px,#f46c43 203px,#ef623e 203.5px,#f46f44 204.5px,#fb9e59 205.5px,#feffc1 207.5px,#d8eff6 208.5px,#aedaea 209.5px,#9ccde3 210.5px,#addaea 211.5px,#def2f7 212.5px,#fffab8 213.5px,#feea9f 214px,#fec779 215.5px,#fed787 216.5px,#fafdc8 218px,#d8eff6 219px,#b1dceb 220.5px,#d5edf5 222px,#e9f6e8 222.5px,#fbfec6 223px,#feeea6 223.5px,#f88c51 225px,#e75136 226px,#db392b 227px,#e75136 228.5px,#feca7c 231.5px,#fedc8d 233px,#fdb467 234.5px,#e44c34 236.5px,#df412f 237.5px,#eb5b3b 238.5px,#fa9857 239.5px,#fedf8f 240.5px,#f1fad9 241.5px,#d8eff6 242px,#7eb5d5 243.5px,#659bc8 244.5px,#72abd0 246px,#e2f4f5 248.5px,#fffab8 250px,#fff2ab 251px,#fcfec5 252.5px,#e2f4f4 253.5px,#9acce2 255px,#74add1 256.5px,#85bbd9 257.5px,#c3e5f0 258.5px,#e7f6ea 259px,#fffcba 259.5px,#f98e52 261px,#ea5739 262px,#e75136 262.5px,#f0653f 263.5px,#fb9f5a 264.5px,#fff6b2 266px,#e0f3f8 267px,#aedaea 268px,#98cae1 269px,#a6d5e7 270px,#d2ecf4 271px,#e9f6e8 271.5px,#fafdc7 272px,#fecf80 273.5px,#fdbb6d 274.5px,#fec87a 275.5px,#fffebe 277px,#d7eff5 278px,#98c9e1 279.5px);-webkit-mask-image:linear-gradient(90deg,transparent,#000 50.0%);mask-image:linear-gradient(90deg,transparent,#000 50.0%)"></div>
<div class="a" style="left:132px;top:0;width:24px;height:100%;background:linear-gradient(#f6fbd0 0px,#ffffbe 1px,#fdbb6d 6px,#fdc677 7px,#fffab8 8.5px,#d8eff6 9.5px,#5d92c3 11.5px,#4471b2 13px,#6399c6 14.5px,#e1f3f6 16.5px,#fff1aa 17.5px,#fba05b 19px,#f57446 20px,#f36b42 21px,#fb9f5a 22.5px,#fff9b6 24.5px,#ebf7e4 25.5px,#dff2f8 26.5px,#e6f5ed 28px,#fdfec3 29.5px,#fdb86b 32.5px,#fb9d59 34.5px,#fdb96b 36px,#fffbb9 38px,#e5f5ef 39px,#d1ebf4 39.5px,#99cbe1 41px,#8bc0db 42.5px,#def2f8 45.5px,#ecf8e3 51px,#fdfec3 53.5px,#fecc7d 58px,#fdb164 61px,#fdc274 63px,#fff6b2 64.5px,#e1f3f7 65.5px,#97c9e0 66.5px,#5487bd 67.5px,#36459d 68.5px,#313695 69px,#313695 72px,#4065ac 73px,#72abd0 74.5px,#8cc0db 75.5px,#bbe1ee 84px,#c4e5f0 88px,#eaf7e6 88.5px,#feeaa0 89px,#fdbe70 89.5px,#fdb668 90.5px,#fed383 92.5px,#f9fdca 95px,#e3f4f2 96px,#d3edf4 96.5px,#71a9cf 99.5px,#5285bc 102px,#5487bd 102.5px,#76afd2 103.5px,#c7e7f1 104.5px,#edf8e1 105px,#fff6b2 105.5px,#fca45c 107px,#fa9857 108px,#fdbe70 109.5px,#feffc1 111.5px,#e3f4f2 112.5px,#b1dceb 114.5px,#b1dceb 115px,#e2f4f4 116px,#fdfec3 116.5px,#fdba6c 117.5px,#f67948 118.5px,#f57747 119px,#fcaa5f 120.5px,#fede8e 121.5px,#fbfdc7 122.5px,#d5eef5 123.5px,#a4d3e6 125px,#a8d6e7 126px,#d3edf4 127px,#ecf8e2 127.5px,#fffcbb 128px,#fdb063 129.5px,#f98e52 130.5px,#fdae61 132px,#fbfdc6 134px,#e7f6ea 134.5px,#cce9f2 135px,#7eb5d5 136.5px,#6aa1cb 137.5px,#6ca3cc 138px,#83b9d7 138.5px,#e7f6eb 139.5px,#fff0a8 140px,#fdbd6f 140.5px,#e75136 141.5px,#de3f2e 142px,#e24731 143px,#f67848 144.5px,#fed686 146.5px,#feffc0 148.5px,#f9fdca 149.5px,#fff7b2 151px,#fee091 152px,#fba05b 153.5px,#f67948 154.5px,#f26941 155.5px,#f67c4a 156.5px,#fdb265 157.5px,#fffdbc 159px,#dcf1f7 160px,#b7dfec 161px,#b4ddeb 162px,#e3f4f3 163px,#fafdc8 163.5px,#feea9f 164px,#fb9f5a 165px,#f26941 166px,#f46f44 167px,#fdb366 168.5px,#fff9b6 170px,#e3f4f3 171px,#b9e0ed 172px,#a5d4e6 173px,#b1dceb 174px,#def2f7 175px,#fffab8 176px,#fed182 177px,#fdaf62 178px,#fdaf62 179px,#feeca3 180.5px,#fbfdc6 181px,#e2f4f4 181.5px,#4a7bb7 183.5px,#394fa1 184.5px,#374a9f 185px,#4d7eb9 186.5px,#def2f8 188.5px,#f7fcce 189px,#fff0a9 189.5px,#fdac60 191px,#fa9b58 192px,#fecb7d 193.5px,#fff8b4 194.5px,#dff2f8 195.5px,#aad9e9 196.5px,#94c6df 197.5px,#a4d3e6 198.5px,#d8eff6 199.5px,#fff8b4 200.5px,#fb9e5a 202px,#f46c43 203px,#f0653f 203.5px,#f57547 204.5px,#fca55d 205.5px,#fff1a9 207px,#fbfdc7 207.5px,#d6eef5 208.5px,#b1dceb 209.5px,#a6d5e7 210.5px,#d8eff6 212px,#ffffbf 213px,#fdc475 214.5px,#fdb164 215.5px,#fdc576 216.5px,#fdfec3 218px,#d7eff5 219px,#b8dfed 220.5px,#e1f4f5 222px,#fffcbb 223px,#feea9f 223.5px,#fdb366 224.5px,#ed5f3c 226px,#e44c34 227px,#e95739 228px,#fece7f 231px,#fee394 232.5px,#fdc476 234px,#e85337 236.5px,#e54d34 237.5px,#f26a41 238.5px,#fca65e 239.5px,#fffab7 241px,#d7eff6 242px,#87bcd9 243.5px,#70a8cf 244.5px,#86bcd9 246px,#d1ecf4 247.5px,#e8f6e9 248px,#fff7b3 249px,#fee090 250.5px,#fee699 251.5px,#fffbb8 252.5px,#e5f5ee 253.5px,#ceeaf3 254px,#8bbfdb 255.5px,#7ab2d4 256.5px,#90c3dd 257.5px,#cfebf3 258.5px,#eef9de 259px,#fff6b1 259.5px,#fdb365 260.5px,#f88950 261px,#ea583a 262px,#e85438 262.5px,#f46c43 263.5px,#fcaa5f 264.5px,#fffcba 266px,#daf0f6 267px,#b0dbea 268px,#a5d4e6 269px,#e5f5ee 271px,#fff8b5 272px,#fee99e 272.5px,#fdc778 274px,#fedd8d 275.5px,#fff8b5 276.5px,#e6f5ee 277.5px,#9dcde3 279.5px);-webkit-mask-image:linear-gradient(90deg,transparent,#000 50.0%);mask-image:linear-gradient(90deg,transparent,#000 50.0%)"></div>
<div class="a" style="left:144px;top:0;width:24px;height:100%;background:linear-gradient(#f6fbd0 0px,#ffffbe 1px,#fdbb6d 6px,#fdc678 7px,#fffcbb 8.5px,#d3edf4 9.5px,#598cc0 11.5px,#436fb1 13px,#699fca 14.5px,#ceeaf3 16px,#edf8e0 16.5px,#fff9b7 17px,#fba15b 18.5px,#f26941 19.5px,#ea5739 20.5px,#f46c43 21.5px,#fca75e 22.5px,#fff8b4 24px,#e3f4f2 25px,#bbe1ee 26.5px,#daf0f6 28.5px,#feffc0 30px,#fdb86a 32.5px,#fb9f5a 34px,#fdc274 36px,#fbfec6 38px,#ddf1f7 39px,#a1d1e4 40.5px,#89bdda 42px,#9ccde2 43px,#ceeaf3 44px,#e8f6e9 44.5px,#fbfdc6 45px,#fee495 46px,#fece7f 47.5px,#fede8e 50px,#ffffbf 53.5px,#e2f4f4 56.5px,#c4e5f0 61px,#aad9e9 62.5px,#7eb5d5 64px,#426caf 66px,#313695 67.5px,#313695 71.5px,#36449c 72px,#426cb0 72.5px,#bfe3ef 74px,#eaf7e6 74.5px,#fff7b3 75px,#fdad61 76px,#d93429 77.5px,#bc1626 79px,#d32c27 80.5px,#f57245 82px,#fee79b 84px,#f5fbd1 85px,#e6f5ed 85.5px,#d3ecf4 86px,#a3d2e5 87.5px,#99cbe1 88.5px,#abd9e9 89.5px,#d8eff6 90.5px,#fdfec2 91.5px,#fee495 92.5px,#fece7f 93.5px,#fed586 94.5px,#fbfdc7 96px,#e6f5ed 96.5px,#c4e5f0 97px,#5386bd 98.5px,#35439c 99.5px,#313695 100px,#313695 101.5px,#36459c 102px,#426cb0 102.5px,#649ac7 103px,#cae8f2 104px,#f2fad6 104.5px,#feeea5 105px,#fcaa5f 106px,#f67c4a 107px,#f67c4a 107.5px,#f99053 108.5px,#fdb96b 109.5px,#fcfec4 111.5px,#e2f4f5 112.5px,#bae0ed 114px,#bfe3ef 115px,#dcf1f7 115.5px,#f7fcce 116px,#fee99e 116.5px,#fdbf71 117px,#f57346 118px,#f46d43 118.5px,#f7814c 119.5px,#fdb164 120.5px,#fff5af 122px,#e8f6ea 123px,#d5eef5 123.5px,#b2ddeb 124.5px,#a8d7e8 125.5px,#d7eff6 127px,#ffffbf 128px,#fdc172 129.5px,#fca85e 130.5px,#fdbf71 132px,#f6fccf 134px,#e5f5f0 134.5px,#cbe9f2 135px,#87bdda 136.5px,#77b0d2 137.5px,#8cc0db 138.5px,#c7e7f1 139.5px,#e7f6ea 140px,#ffffc0 140.5px,#fece7f 141.5px,#fba05a 142.5px,#fb9c59 144px,#fee090 147px,#fff1aa 148.5px,#fff3ad 150px,#fee090 151.5px,#fa9756 153.5px,#f26941 155.5px,#f67b4a 156.5px,#fdb164 157.5px,#fffbb9 159px,#e1f3f7 160px,#b6deec 161.5px,#b9e0ed 162px,#e0f3f8 163px,#fff3ae 164px,#fdb366 165px,#f26941 166px,#e64f35 167px,#f0643f 168px,#fb9f5a 169px,#fff8b5 170.5px,#dcf1f7 171.5px,#abd9e9 172.5px,#98cae1 173.5px,#acd9e9 174.5px,#def2f7 175.5px,#fff9b7 176.5px,#fed384 177.5px,#fdb769 178.5px,#fdbd6f 179.5px,#fff6b1 181px,#d9eff6 182px,#8bbfdb 183px,#5284bc 184px,#3e60aa 185.5px,#4a7cb7 186.5px,#6095c5 187px,#c9e8f1 188.5px,#eaf7e6 189px,#fffebd 189.5px,#fdb96c 191px,#fb9e5a 192px,#fba05a 192.5px,#fdc274 193.5px,#fff3ac 194.5px,#e2f4f5 195.5px,#addaea 196.5px,#9bcce2 197.5px,#b0dbea 198.5px,#e1f3f7 199.5px,#fff6b1 200.5px,#fba25b 202px,#f46d43 203px,#ed5f3d 204px,#f57748 205px,#fdb164 206px,#fffcbb 207.5px,#def2f7 208.5px,#b6dfec 209.5px,#addaea 210.5px,#dff3f8 212px,#fffab8 213px,#fdba6d 214.5px,#fba25b 215.5px,#fdb668 216.5px,#fffbba 218px,#dbf1f7 219px,#c5e6f0 219.5px,#bbe1ed 220.5px,#e1f3f6 222px,#feffc0 223px,#feefa6 223.5px,#fca35c 225px,#ed5e3c 226.5px,#ea5839 228px,#fed182 231px,#fee496 232.5px,#fdc778 234px,#ec5d3c 236.5px,#e75337 237.5px,#f26841 238.5px,#fb9f5a 239.5px,#fff4ae 241px,#e1f3f6 242px,#8dc1dc 243.5px,#6fa8ce 245px,#84bad8 246px,#d7eef5 247.5px,#fffebe 248.5px,#fee292 249.5px,#fed182 250.5px,#fede8e 251.5px,#fafdc9 253px,#d4edf5 254px,#91c4de 255.5px,#81b7d7 256.5px,#95c8df 257.5px,#d0ebf3 258.5px,#edf8df 259px,#fff8b4 259.5px,#f99053 261px,#f46d43 261.5px,#e54e35 262.5px,#ed5e3c 263.5px,#fa9957 264.5px,#fff6b1 266px,#e0f3f7 267px,#addaea 268.5px,#b6deec 269.5px,#d9f0f6 270.5px,#f9fdc9 271.5px,#fedd8d 273px,#fecd7e 274px,#fee395 275.5px,#fffcbb 276.5px,#e4f5f0 277.5px,#a2d2e5 279.5px);-webkit-mask-image:linear-gradient(90deg,transparent,#000 50.0%);mask-image:linear-gradient(90deg,transparent,#000 50.0%)"></div>
<div class="a" style="left:156px;top:0;width:24px;height:100%;background:linear-gradient(#f6fbd0 0px,#ffffbe 1px,#fdbb6d 6px,#fdc678 7px,#fffbb9 8.5px,#d5eef5 9.5px,#5a8ec1 11.5px,#426db0 13px,#6398c6 14.5px,#c2e4ef 16px,#e5f5ef 16.5px,#fcfec4 17px,#fdaf62 18.5px,#ed5e3c 20px,#e85538 21px,#f57145 22px,#fdaf62 23px,#fffcba 24.5px,#e1f3f7 25.5px,#bbe1ee 27px,#def2f7 29px,#fffcba 30.5px,#fdb164 33px,#fa9b58 34.5px,#fec87a 36.5px,#fffbb9 38px,#e3f4f2 39px,#90c3dd 41px,#7bb3d4 42.5px,#90c3dd 43.5px,#dbf1f7 45px,#fffdbc 46px,#fece7f 47.5px,#fdc273 49px,#fedd8d 52px,#feffc1 55px,#e1f4f5 57.5px,#a5d4e6 63.5px,#4878b6 66.5px,#333c98 68px,#313695 68.5px,#313695 72.5px,#384ea1 73px,#4677b5 73.5px,#6aa2cb 74px,#c9e8f1 75px,#f0f9db 75.5px,#fff0a9 76px,#fa9a58 77px,#f16640 77.5px,#c11b27 78.5px,#a50026 79.5px,#a70126 81.5px,#ba1426 82px,#e65036 83px,#fca75e 84px,#fefec2 85.5px,#eaf7e6 86px,#d3edf4 86.5px,#a9d7e8 87.5px,#99cbe1 88.5px,#afdbea 89.5px,#e5f5ef 90.5px,#f9fdca 91px,#fede8e 92px,#fdbd6f 93px,#fdc476 94px,#ffffbe 95.5px,#e7f6ea 96px,#c0e3ef 96.5px,#436eb1 98px,#35439b 98.5px,#313695 99px,#313695 101.5px,#384da0 102px,#4f81ba 102.5px,#b8dfed 103.5px,#eaf7e7 104px,#fff5b0 104.5px,#fdad61 105.5px,#f57145 106.5px,#f36b42 107px,#f67948 108px,#fdb668 109.5px,#fdfec3 111.5px,#e1f3f7 112.5px,#b3ddeb 114px,#acd9e9 115px,#e6f5ed 116.5px,#fbfec6 117px,#fdba6c 118.5px,#fb9f5a 119.5px,#fdbb6d 121px,#fcfec5 123px,#daf0f6 124px,#a4d4e6 125.5px,#9dcee3 126.5px,#d2ecf4 128px,#eaf7e6 128.5px,#fdfec3 129px,#fec87a 130.5px,#fdb76a 131.5px,#fed283 133px,#feffc0 134.5px,#dff2f8 135.5px,#a1d1e5 137px,#90c3dd 138px,#9ccde3 139px,#e2f4f3 140.5px,#fff6b2 141.5px,#fecf80 142.5px,#fdb164 143.5px,#fdb366 145px,#fee090 148px,#fee699 150px,#fedc8c 151px,#fba25b 153px,#f57446 154.5px,#f26941 155.5px,#f67a49 156.5px,#fdaf62 157.5px,#fff9b6 159px,#e3f4f2 160px,#bbe1ee 161.5px,#def2f8 163px,#fffab8 164px,#fb9d59 165.5px,#ea5839 166.5px,#dc3b2c 167.5px,#e54d34 168.5px,#f88d52 169.5px,#fedf8f 170.5px,#fff8b5 171px,#eef8df 171.5px,#d2ecf4 172px,#9ecee3 173px,#90c3dd 174px,#abd9e9 175px,#e1f3f6 176px,#fff7b3 177px,#fee699 177.5px,#fdbe70 179px,#fecb7c 180px,#fbfec6 181.5px,#e5f5ee 182px,#c1e4ef 182.5px,#5588be 184px,#3b54a4 185px,#36479d 186px,#3950a2 186.5px,#5082bb 187.5px,#bce1ee 189px,#e4f4f1 189.5px,#fcfec5 190px,#fdb96c 191.5px,#fa9857 192.5px,#fa9857 193px,#fdbd6f 194px,#fff4ae 195px,#daf0f6 196px,#a2d2e5 197px,#96c8e0 197.5px,#a0d0e4 198.5px,#cce9f2 199.5px,#e7f6ec 200px,#fbfdc6 200.5px,#feeda4 201px,#f99053 202.5px,#f57346 203px,#ea5839 204px,#f06540 205px,#fa9857 206px,#feefa7 207.5px,#fbfdc6 208px,#e9f6e8 208.5px,#d4edf5 209px,#acdae9 210.5px,#bce1ee 211.5px,#e6f5ed 212.5px,#fff4ae 213.5px,#feca7c 214.5px,#fca65d 216px,#fdc072 217px,#fbfdc7 218.5px,#e7f6eb 219px,#b6deec 220.5px,#c0e3ef 221.5px,#e2f4f5 222.5px,#fffebd 223.5px,#fb9f5a 225.5px,#ee603d 227px,#eb5a3a 228px,#f47044 229px,#fdc172 231px,#fede8e 232.5px,#fecd7e 234px,#f36a42 236.5px,#ed5e3c 238px,#f67e4b 239px,#fdb96b 240px,#fbfec5 241.5px,#e7f6eb 242px,#cce9f2 242.5px,#82b8d7 244px,#70a9cf 245px,#7db4d5 246px,#e1f4f5 248px,#fffbb9 249px,#fede8e 250.5px,#fee192 251.5px,#feffc1 253px,#e1f3f7 254px,#9ecfe3 255.5px,#8abfdb 257px,#c8e7f1 258.5px,#e7f6eb 259px,#ffffbf 259.5px,#fb9c59 261px,#eb5b3b 262px,#e24832 263px,#f0643f 264px,#fca95f 265px,#fdfec3 266.5px,#e9f6e8 267px,#d2ecf4 267.5px,#afdbea 268.5px,#b1dceb 269.5px,#e2f4f4 271px,#ffffbf 272px,#fee598 273px,#fecd7e 274.5px,#fedc8c 275.5px,#fbfdc7 277px,#dbf0f7 278px,#a9d7e8 279.5px);-webkit-mask-image:linear-gradient(90deg,transparent,#000 50.0%);mask-image:linear-gradient(90deg,transparent,#000 50.0%)"></div>
<div class="a" style="left:168px;top:0;width:24px;height:100%;background:linear-gradient(#f6fbd0 0px,#ffffbe 1px,#fdbb6d 6px,#fdc677 7px,#fffab8 8.5px,#d7eff6 9.5px,#5b90c2 11.5px,#426caf 13px,#5d92c3 14.5px,#dcf1f7 16.5px,#fff3ad 17.5px,#fa9a58 19px,#f0643f 20px,#e65036 21px,#ee603d 22px,#fdb668 23.5px,#ffffbf 25px,#def2f7 26px,#bbe1ee 27.5px,#e1f3f7 29.5px,#fff8b4 31px,#fdb86a 33px,#fa9857 34.5px,#fdad61 36px,#fbfdc7 38.5px,#d5eef5 39.5px,#7fb5d6 41.5px,#6fa7ce 43px,#83b9d8 44px,#e4f5f1 46px,#fff8b4 47px,#fdc778 48.5px,#fdb466 50px,#fdc677 52.5px,#fffdbc 56.5px,#dff2f8 59.5px,#c0e4ef 63.5px,#7fb6d6 66px,#4a7bb7 67.5px,#323a97 69px,#313695 73.5px,#5184bc 74.5px,#a7d6e7 75.5px,#d8eff6 76px,#f9fdcb 76.5px,#fee89c 77px,#f88b51 78px,#d52e27 79px,#a50026 80px,#a80326 82.5px,#dd3d2d 83.5px,#f36a42 84px,#fecb7c 85px,#fafdc7 86px,#e6f5ed 86.5px,#b8e0ed 87.5px,#aad8e9 88.5px,#e5f5ef 90px,#fafdc8 90.5px,#fed787 91.5px,#fdb163 92.5px,#fdae61 93px,#fec779 94px,#fff5af 95px,#d2ecf4 96px,#a4d3e6 96.5px,#4d7eb9 97.5px,#313695 98.5px,#313695 101.5px,#36479d 102px,#4676b5 102.5px,#a1d1e5 103.5px,#d5edf5 104px,#f6fccf 104.5px,#feeca2 105px,#fdab60 106px,#f67848 107px,#f57145 107.5px,#f67f4b 108.5px,#fca65d 109.5px,#fff9b7 111.5px,#e5f5ef 112.5px,#d1ecf4 113px,#a4d3e6 114.5px,#a1d1e5 115.5px,#e4f4f2 117.5px,#fffab8 118.5px,#fec879 120px,#fdb264 121.5px,#fdc577 122.5px,#fffdbd 124px,#d9f0f6 125px,#a8d6e8 126px,#90c4dd 127px,#a0d0e4 128px,#d7eff6 129px,#fff9b6 130px,#fece7f 131px,#fdb568 132px,#feca7b 133.5px,#fafdc9 135.5px,#ddf2f7 136.5px,#a8d7e8 138.5px,#b0dbea 139.5px,#d3edf4 140.5px,#e8f6ea 141px,#fff5b0 142px,#fdb063 144px,#fdae61 145.5px,#fee597 148.5px,#feeba1 150.5px,#fede8e 151.5px,#f99455 153.5px,#f47044 154.5px,#ef623e 155.5px,#f57346 156.5px,#fcaa5f 157.5px,#fff7b4 159px,#e4f5f1 160px,#bbe1ee 161.5px,#dff2f8 163px,#fffab8 164px,#fba25c 165.5px,#f0653f 166.5px,#e85437 167.5px,#f36b42 168.5px,#fca65d 169.5px,#fff8b5 171px,#dff2f8 172px,#afdbea 173px,#9bcce2 174px,#aad9e9 175px,#daf0f6 176px,#fffcba 177px,#fed686 178px,#fdb669 179px,#fdba6c 180px,#fff4af 181.5px,#d6eef5 182.5px,#a9d7e8 183px,#568abf 184px,#34409a 185px,#313695 185.5px,#333c98 187.5px,#3d5da8 188px,#78b0d3 189px,#d5eef5 190px,#f4fbd3 190.5px,#fff1aa 191px,#fdbb6d 192px,#f99355 193px,#f99053 193.5px,#fdb86b 194.5px,#fff5b0 195.5px,#eef9dd 196px,#cfebf3 196.5px,#96c9e0 197.5px,#8ec2dd 198px,#a1d1e5 199px,#d5edf5 200px,#fffbb8 201px,#fba15b 202.5px,#f0643f 203.5px,#e75136 204.5px,#f16640 205.5px,#fba15b 206.5px,#fff6b2 208px,#e2f4f4 209px,#b9e0ed 210px,#acdae9 211px,#d9f0f6 212.5px,#feffc1 213.5px,#fdc677 215px,#fdad60 216px,#fecb7c 217.5px,#fff7b3 218.5px,#e1f3f7 219.5px,#b7dfed 220.5px,#b2dceb 221px,#bfe3ef 222px,#e3f4f3 223px,#fffbb9 224px,#fdb86b 225.5px,#f46e44 227px,#ee603d 228px,#f36b42 229px,#fdc072 231.5px,#fed788 233px,#fdc778 234.5px,#f67a49 237px,#f57446 238.5px,#fdb365 240px,#fffbb8 241.5px,#daf0f6 242.5px,#8ec2dc 244px,#78b0d3 245px,#8ec2dd 246.5px,#d5edf5 248px,#fff9b6 249.5px,#fee597 251px,#feea9f 252px,#fffdbc 253px,#d4edf5 254.5px,#9dcee3 256px,#91c4de 257px,#a8d6e8 258px,#dff3f8 259px,#fff2ab 260px,#fdb366 261px,#e85437 262.5px,#e34932 263.5px,#e95538 264px,#f99053 265px,#fff5b0 266.5px,#dff3f8 267.5px,#b3ddeb 268.5px,#aedbea 269.5px,#d8eff6 271px,#fffab7 272.5px,#fed687 274px,#fecd7e 275px,#feeca3 276.5px,#fffbb9 277px,#e4f4f1 278px,#afdbea 279.5px);-webkit-mask-image:linear-gradient(90deg,transparent,#000 50.0%);mask-image:linear-gradient(90deg,transparent,#000 50.0%)"></div>
<div class="a" style="left:180px;top:0;width:24px;height:100%;background:linear-gradient(#f6fbd0 0px,#ffffbe 1px,#fdbb6d 6px,#fdc677 7px,#fffab7 8.5px,#daf0f6 9.5px,#5d92c3 11.5px,#426aaf 13px,#497ab7 14px,#6da5cd 15px,#d0ebf3 16.5px,#ecf8e1 17px,#fffbb9 17.5px,#fca85e 19px,#f36b42 20px,#e54d34 21.5px,#f0643f 22.5px,#fa9c59 23.5px,#fff0a8 25px,#fbfec5 25.5px,#dbf0f6 26.5px,#bee2ee 27.5px,#bee2ee 28.5px,#e3f4f2 30px,#fcfec4 31px,#fdb063 33.5px,#f99455 35px,#fdb164 36.5px,#fffbb9 38.5px,#e0f3f7 39.5px,#7db4d5 41.5px,#6399c6 43px,#83b9d8 45px,#dff2f8 47px,#feffc1 48px,#fdbf71 50px,#fa9b58 52px,#fdb264 54.5px,#fffbb8 59px,#e4f5f0 62px,#d9eff6 64.5px,#c6e6f1 65.5px,#90c4dd 67px,#5082bb 68.5px,#323896 70px,#313695 74.5px,#4878b6 75.5px,#8cc0db 76.5px,#dff3f8 77.5px,#f8fccb 78px,#feeda4 78.5px,#fdab60 79.5px,#ec5c3b 80.5px,#cf2927 81.5px,#b81226 83px,#d12a27 84px,#f57446 85px,#fed182 86px,#f9fdca 87px,#dbf1f7 88px,#d4edf5 88.5px,#e7f6ec 89.5px,#fff4ae 90.5px,#fdc274 91.5px,#fba05a 92.5px,#fdb96b 94px,#fff6b2 95.5px,#dbf1f7 96.5px,#8ec2dc 97.5px,#4d7eb9 98.5px,#34419a 99.5px,#313695 100px,#313695 102px,#4878b6 103px,#c9e8f2 104.5px,#eff9dc 105px,#fff4ae 105.5px,#fdb76a 106.5px,#f7824d 107.5px,#f67948 108px,#f7864e 109px,#fdb164 110px,#fff4ae 111.5px,#e8f6e9 112.5px,#d4edf5 113px,#afdbea 114px,#a2d2e5 115px,#aedaea 116px,#e0f3f7 117.5px,#fdfec3 118.5px,#fdbc6e 120.5px,#f88c51 122.5px,#fdad60 123.5px,#feeea5 124.5px,#f4fbd2 125px,#d6eef5 125.5px,#94c7df 126.5px,#89beda 127px,#9bcce2 128px,#d2ecf4 129px,#fffbb8 130px,#fdb265 131.5px,#fa9a58 132.5px,#fdbc6f 134px,#fff7b2 135.5px,#e6f5ed 136.5px,#addaea 138px,#a2d2e5 139px,#b3ddeb 140px,#daf0f6 141px,#fbfdc6 142px,#fdaf62 144.5px,#fca75e 146px,#fee394 148.5px,#fff4ae 150.5px,#fede8f 152px,#f46d43 154.5px,#ec5b3b 155.5px,#f46d43 156.5px,#fca55d 157.5px,#fff6b2 159px,#e4f5f0 160px,#d1ecf4 160.5px,#bbe1ee 161.5px,#dff3f8 163px,#fffab8 164px,#fcaa5f 165.5px,#f57748 166.5px,#f46f44 167px,#f67b4a 168px,#fca35c 169px,#fffab7 171px,#e5f5ef 172px,#d1ecf4 172.5px,#b1dceb 173.5px,#a7d6e7 174.5px,#d5eef5 176px,#fdfec2 177px,#fdc274 178.5px,#fca75e 179.5px,#fdb466 180.5px,#fff6b1 182px,#d1ecf4 183px,#7ab2d4 184px,#416aae 185px,#394ea1 185.5px,#313796 186.5px,#333e99 187px,#426caf 188px,#7cb3d4 189px,#d3ecf4 190px,#fff4af 191px,#fca95f 192.5px,#f99154 193.5px,#fdb366 194.5px,#fff0a9 195.5px,#f4fbd4 196px,#d6eef5 196.5px,#97c9e0 197.5px,#8bbfdb 198px,#97c9e0 199px,#e4f5f1 200.5px,#f9fdc9 201px,#feeea5 201.5px,#fdb063 202.5px,#e95639 204px,#e44b34 205px,#f26941 206px,#fdab60 207px,#fffebd 208.5px,#d9f0f6 209.5px,#acdae9 211px,#b9e0ed 212px,#e2f4f5 213px,#fffab8 214px,#fed686 215px,#fdb062 216.5px,#fdc172 217.5px,#ffffbf 219px,#d6eef5 220px,#b1dceb 221px,#aedaea 221.5px,#bee3ee 222.5px,#e4f5f1 223.5px,#fff9b6 224.5px,#fdb568 226px,#f47044 227.5px,#f16740 228.5px,#f57547 229.5px,#fdbf71 232px,#fed081 233.5px,#f7844e 238.5px,#fdb063 240px,#fff3ad 241.5px,#e5f5ef 242.5px,#9acce2 244px,#80b6d6 245.5px,#9ecee3 247px,#dcf1f7 248.5px,#fffcbb 250px,#feeca2 252px,#fcfec5 253.5px,#e2f4f4 254.5px,#aad8e9 256px,#99cbe1 257px,#a7d6e7 258px,#d6eef5 259px,#fffcba 260px,#fba15b 261.5px,#ee613d 262.5px,#e24832 263.5px,#ec5c3b 264.5px,#fba05a 265.5px,#feffc0 267px,#e9f6e8 267.5px,#d0ebf4 268px,#aedaea 269px,#b2ddeb 270px,#e1f3f6 271.5px,#fcfec5 272.5px,#fedf8f 274px,#fece7f 275.5px,#fee598 276.5px,#f9fdca 277.5px,#e8f6ea 278px,#d2ecf4 278.5px,#b0dbea 279.5px);-webkit-mask-image:linear-gradient(90deg,transparent,#000 50.0%);mask-image:linear-gradient(90deg,transparent,#000 50.0%)"></div>
<div class="a" style="left:192px;top:0;width:24px;height:100%;background:linear-gradient(#f6fbd0 0px,#ffffbe 1px,#fdbb6d 6px,#fdc577 7px,#fff9b6 8.5px,#dcf1f7 9.5px,#5e93c4 11.5px,#4169ae 13px,#5487bd 14.5px,#81b7d7 15.5px,#c4e5f0 16.5px,#e5f5ef 17px,#fbfdc6 17.5px,#feeda4 18px,#f99354 19.5px,#ed5f3d 20.5px,#e34a33 21.5px,#e95638 22.5px,#fca35c 24px,#fee191 25px,#f8fccb 26px,#d8eff6 27px,#bde2ee 28px,#bfe3ef 29px,#d7eff5 30px,#e6f5ee 30.5px,#fffebd 31.5px,#fdb96b 33.5px,#fa9958 34.5px,#f99153 35.5px,#fdb668 37px,#fbfdc7 39px,#e9f6e8 39.5px,#d0ebf3 40px,#6ca4cc 42px,#578bbf 43.5px,#71aacf 45.5px,#d4edf5 48px,#fffbb9 49.5px,#fdab60 52px,#f88d52 53px,#f67e4b 54.5px,#f99053 56.5px,#fdb063 58px,#fffebe 61.5px,#dff2f8 63px,#a5d4e7 64.5px,#4e80ba 67px,#313695 69.5px,#333b97 75.5px,#4b7db8 76.5px,#daf0f6 78.5px,#fff4af 79.5px,#fa9a58 81px,#e24631 82.5px,#d22b27 84px,#dc3a2c 86.5px,#f67f4b 91px,#fb9c59 94.5px,#fdbf71 95.5px,#fdfec2 97px,#e8f6ea 97.5px,#c8e7f1 98px,#7db4d5 99px,#4778b5 100px,#35439c 101.5px,#394fa2 102.5px,#5588be 103.5px,#cfebf3 105px,#f1fad9 105.5px,#fff3ad 106px,#fa9b58 107.5px,#f77f4c 108.5px,#f7844d 109px,#fdc273 110.5px,#fafdc8 112px,#e8f6e9 112.5px,#d3edf4 113px,#a8d7e8 114.5px,#b1dceb 115.5px,#d1ecf4 116.5px,#e4f5f0 117px,#fffab8 118px,#fca85e 120px,#f7844e 121px,#f7804c 122px,#fdb164 123px,#fff1aa 124px,#f3fad6 124.5px,#d5eef5 125px,#94c7df 126px,#83b9d8 127px,#a3d2e5 128px,#e2f4f5 129px,#f9fdcb 129.5px,#feeea5 130px,#fdb467 131px,#f7844e 132px,#f67d4b 132.5px,#fcaa5f 134px,#fff2ac 135.5px,#e5f5ee 136.5px,#a3d2e5 138px,#96c8e0 139px,#a9d8e8 140px,#d5eef5 141px,#fcfec5 142px,#fdc576 143.5px,#fb9d59 144.5px,#fa9555 146px,#fdaf62 147px,#fee090 148.5px,#fff7b4 150px,#fffab8 151px,#fee496 152.5px,#fca45c 154px,#f67848 155px,#f26841 156px,#f67c4a 157px,#fdb365 158px,#fffcba 159.5px,#e1f4f6 160.5px,#bee3ee 162px,#e4f4f1 163.5px,#fff9b7 164.5px,#fdbb6d 166px,#fb9e59 167px,#fba25c 168px,#fdbb6d 169px,#fffbb9 171px,#d8eff6 172.5px,#acdae9 174.5px,#bae0ed 175.5px,#e5f5ef 176.5px,#fff5af 177.5px,#fecc7d 178.5px,#fdaf61 179.5px,#fdc274 181px,#fdfec2 182.5px,#e7f6eb 183px,#c6e6f1 183.5px,#6297c6 185px,#4168ae 186.5px,#5a8ec1 188px,#e0f3f7 190px,#fff1a9 191px,#fdac60 192.5px,#fa9656 193.5px,#fdb668 194.5px,#fff0a8 195.5px,#f5fbd2 196px,#d9eff6 196.5px,#98c9e1 197.5px,#87bcd9 198.5px,#a0d0e4 199.5px,#d6eef5 200.5px,#fffab8 201.5px,#fca45c 203px,#f26841 204px,#e75337 205px,#f0653f 206px,#fb9e5a 207px,#fff5b0 208.5px,#e4f5f1 209.5px,#cfebf3 210px,#b7dfed 211.5px,#e3f4f3 213px,#fffdbc 214px,#fece7f 215.5px,#fdbe70 216.5px,#fecd7e 217.5px,#fcfec5 219px,#e9f7e7 219.5px,#d3edf4 220px,#a5d5e7 221.5px,#b2dceb 222.5px,#d9f0f6 223.5px,#fefec2 224.5px,#fba15b 226.5px,#f57546 227.5px,#f26a42 228.5px,#fed889 233.5px,#fed081 235px,#f88950 238px,#f88950 239px,#fdbe70 240.5px,#ffffbe 242px,#d8eff6 243px,#95c8e0 244.5px,#88bdda 245.5px,#9ccde2 247px,#dff3f8 249px,#fdfec3 250.5px,#fff3ac 252px,#fffebe 253.5px,#d6eef5 255px,#9bcce2 256.5px,#8fc3dd 257.5px,#a7d6e7 258.5px,#e0f3f7 259.5px,#fff1a9 260.5px,#fdb265 261.5px,#f26a42 262.5px,#e44b33 263.5px,#eb5a3a 264.5px,#fa9a58 265.5px,#fffcbb 267px,#d5edf5 268px,#afdbea 269px,#b1dceb 270px,#e0f3f8 271.5px,#fcfec5 272.5px,#fee79b 273.5px,#fdc577 275.5px,#fedf8f 276.5px,#fdfec3 277.5px,#eaf7e6 278px,#d3edf4 278.5px,#afdbea 279.5px);-webkit-mask-image:linear-gradient(90deg,transparent,#000 50.0%);mask-image:linear-gradient(90deg,transparent,#000 50.0%)"></div>
<div class="a" style="left:204px;top:0;width:24px;height:100%;background:linear-gradient(#f6fbd0 0px,#ffffbe 1px,#fdbb6d 6px,#fdc577 7px,#fff8b5 8.5px,#def2f7 9.5px,#6095c5 11.5px,#4169ae 13px,#4574b3 14px,#6399c6 15px,#e1f3f7 17px,#fff2ab 18px,#fa9a58 19.5px,#ef623e 20.5px,#e34933 21.5px,#ee5f3d 23px,#fa9555 24px,#fffdbc 26px,#e2f4f4 27px,#bde2ee 28.5px,#e1f3f6 30.5px,#fff5b0 32px,#fdbf71 33.5px,#f98f53 35.5px,#fdaf62 37px,#fffdbc 39px,#d9f0f6 40px,#6ca3cc 42px,#5285bc 43px,#4c7db8 44px,#6fa7ce 46.5px,#e1f3f6 49.5px,#fbfec5 50.5px,#fca45c 53.5px,#f57547 55px,#ef633e 57px,#f67a49 59px,#fca55d 60.5px,#fffbb9 63.5px,#dbf0f6 65px,#aedbea 66px,#4a7bb7 68.5px,#313695 70.5px,#313695 76px,#4473b3 77px,#acd9e9 78.5px,#d4edf5 79px,#fff7b2 80px,#fb9d59 81.5px,#e34a33 83px,#d83328 84.5px,#fa9c59 95.5px,#fdc577 96.5px,#fff4ae 97.5px,#def2f7 98.5px,#5a8ec1 100.5px,#4066ad 101.5px,#3e60aa 102.5px,#436eb1 103px,#6da5cd 104px,#e3f4f2 105.5px,#fdfec3 106px,#fdb164 107.5px,#fa9857 108px,#f8874f 109px,#fdc072 110.5px,#fff2ab 111.5px,#e4f5f0 112.5px,#b7dfec 113.5px,#a8d7e8 114.5px,#d0ebf3 116px,#e6f5ee 116.5px,#fff4af 117.5px,#fcaa5f 119px,#f67b49 120px,#f47044 121px,#f67c4a 121.5px,#fdb96b 122.5px,#fff6b2 123.5px,#d1ebf4 124.5px,#92c5de 125.5px,#7db4d5 126.5px,#98cae1 127.5px,#d9f0f6 128.5px,#f4fbd2 129px,#fff0a8 129.5px,#fdae61 130.5px,#f46e44 131.5px,#ef623e 132px,#f46e44 133px,#fba15b 134px,#fff5af 135.5px,#e1f3f7 136.5px,#97c9e0 138px,#8abfdb 139px,#a4d4e6 140px,#dff3f8 141px,#fff2ab 142px,#fdb96c 143px,#f7824d 144px,#f57446 145px,#f7854e 146px,#fdab60 147px,#fee293 148.5px,#fffdbc 150px,#fbfdc6 151px,#fff6b1 152.5px,#fdac60 155px,#f7854e 156.5px,#f98e52 157.5px,#fdb769 158.5px,#fff8b5 160px,#e6f5ed 161px,#d7eef5 161.5px,#c4e5f0 162.5px,#e1f3f7 164px,#fcfec5 165px,#fed787 166.5px,#fdc173 167.5px,#fed98a 169.5px,#fffdbb 171px,#dcf1f7 172.5px,#addaea 174.5px,#b4ddec 175.5px,#dcf1f7 176.5px,#fffebd 177.5px,#fedc8c 178.5px,#fdbf71 179.5px,#fdc375 180.5px,#fff0a8 182px,#fdfec3 182.5px,#d1ecf4 183.5px,#77b0d2 185px,#5285bc 186.5px,#6aa1cb 188px,#e4f5f1 190px,#fafdc9 190.5px,#fff0a8 191px,#fdaf62 192.5px,#fa9b58 193.5px,#fdb86b 194.5px,#fff0a8 195.5px,#f5fbd1 196px,#dbf0f6 196.5px,#98cae1 197.5px,#82b8d7 198.5px,#95c8e0 199.5px,#e2f4f5 201px,#fff4af 202px,#fca55d 203.5px,#f57446 204.5px,#f16740 205.5px,#fb9f5a 207px,#fff1a9 208.5px,#fbfdc7 209px,#dcf1f7 210px,#c8e7f1 211px,#e0f3f8 212.5px,#fffbb9 214px,#fee598 215px,#fed485 216.5px,#fee598 217.5px,#fefec2 218.5px,#daf0f6 219.5px,#addaea 220.5px,#99cbe1 221.5px,#a8d6e7 222.5px,#d3edf4 223.5px,#eaf7e6 224px,#fdfec3 224.5px,#fdb86a 226px,#f7814c 227px,#f26a41 228px,#f57145 229px,#fb9d59 230.5px,#fedb8b 232.5px,#fee79b 233.5px,#fee99d 234.5px,#fed98a 235.5px,#fb9f5a 237px,#f57748 238.5px,#f8864f 239.5px,#fdb467 240.5px,#fff9b6 242px,#e0f3f8 243px,#9bcde2 244.5px,#8cc0db 245.5px,#9dcee3 247px,#d9f0f6 249px,#fffebd 251px,#fff3ac 253px,#fbfec5 254px,#ddf2f7 255px,#90c3dd 256.5px,#79b1d3 258px,#a0d0e4 259px,#e6f5ed 260px,#fffebd 260.5px,#f99254 262px,#ea5739 263px,#e54e35 263.5px,#ef633e 264.5px,#fca55d 265.5px,#ffffbf 267px,#eaf7e6 267.5px,#d3ecf4 268px,#afdbea 269px,#b2dceb 270px,#e4f4f1 271.5px,#fffbba 272.5px,#fecb7c 274px,#fdb76a 275.5px,#fed888 276.5px,#fdfec2 277.5px,#e9f6e7 278px,#d1ecf4 278.5px,#aedaea 279.5px);-webkit-mask-image:linear-gradient(90deg,transparent,#000 50.0%);mask-image:linear-gradient(90deg,transparent,#000 50.0%)"></div>
<div class="a" style="left:216px;top:0;width:24px;height:100%;background:linear-gradient(#f6fbd0 0px,#ffffbe 1px,#fdbb6d 6px,#fdc577 7px,#fff8b4 8.5px,#dff3f8 9.5px,#6196c5 11.5px,#4470b2 12.5px,#4168ae 13.5px,#6298c6 15px,#e3f4f3 17px,#f9fdc9 17.5px,#feeea5 18px,#f99254 19.5px,#ed5e3c 20.5px,#e44b33 21.5px,#f26941 23px,#fba25b 24px,#fedb8c 25px,#feffc0 26px,#e2f4f4 27px,#c4e5f0 28.5px,#daf0f6 30px,#ffffbf 31.5px,#fdae61 34px,#fa9555 35.5px,#fdb769 37px,#fcfec5 39px,#d1ecf4 40px,#6aa1cb 42px,#5082ba 43.5px,#6ca3cc 46px,#dcf1f7 49px,#f8fccb 50px,#fede8e 51.5px,#fca75e 53px,#f67949 54.5px,#f26841 56.5px,#f67848 58px,#fdae61 60px,#fefec1 63px,#e5f5ef 64px,#d2ecf4 64.5px,#a6d5e7 65.5px,#4575b4 68px,#333b98 69.5px,#313695 70px,#313695 75px,#37479e 75.5px,#5e93c4 76.5px,#daf0f6 78px,#f6fcd0 78.5px,#fed283 79.5px,#f7854e 80.5px,#da3529 82px,#ce2727 83.5px,#da362a 86px,#f46d43 90px,#fba35c 95.5px,#fecb7d 96.5px,#fff8b5 97.5px,#f0f9db 98px,#d5eef5 98.5px,#5386bd 100.5px,#3d5ba7 102px,#5487bd 103.5px,#90c4dd 104.5px,#e1f3f7 105.5px,#f9fdca 106px,#feeea5 106.5px,#fba05b 108px,#f88850 109px,#f98e52 109.5px,#fdbf71 110.5px,#fff7b3 111.5px,#d6eef5 112.5px,#a3d3e6 113.5px,#9acbe1 114px,#a9d7e8 115px,#dcf1f7 116px,#fff6b1 117px,#fdbc6e 118px,#f67949 119px,#ec5c3b 120px,#ee603d 120.5px,#f99053 121.5px,#fff8b4 123px,#edf8e1 123.5px,#cdeaf3 124px,#8ec2dc 125px,#78b0d3 126px,#93c5de 127px,#d6eef5 128px,#f3fad5 128.5px,#fff0a8 129px,#fca65d 130px,#ec5c3b 131px,#e24832 132px,#ee603d 133px,#fb9d59 134px,#fff8b5 135.5px,#d7eff6 136.5px,#8bc0db 138px,#7fb6d6 139px,#8abedb 139.5px,#c6e6f1 140.5px,#eaf7e6 141px,#fff9b5 141.5px,#fdb265 142.5px,#f8874f 143px,#f26941 143.5px,#eb5a3a 144.5px,#f46e43 145.5px,#fdb164 147px,#fedc8c 148px,#feffc1 149.5px,#f2fad7 150.5px,#f2fad7 151.5px,#fff3ac 153px,#fca95f 155px,#f7804c 156.5px,#f88a50 157.5px,#fdb063 158.5px,#fffebd 160.5px,#e6f5ee 161.5px,#d9f0f6 162px,#c9e8f2 163px,#e3f4f2 164.5px,#ffffc0 165.5px,#fed485 167px,#fdc576 168px,#fee395 170px,#f9fdca 171.5px,#e1f4f5 172.5px,#b6deec 174px,#acdae9 175px,#d3edf4 176.5px,#e8f6e9 177px,#f9fdc9 177.5px,#fee597 178.5px,#fecd7e 179.5px,#fed383 180.5px,#fff9b6 182px,#e3f4f3 183px,#6fa7ce 185px,#5082bb 186px,#4879b6 187px,#72abd0 188.5px,#daf0f6 190px,#fff5b0 191px,#fdb467 192.5px,#fba05b 193.5px,#fca85e 194px,#fff1a9 195.5px,#f5fbd1 196px,#daf0f6 196.5px,#97c9e0 197.5px,#7db5d5 198.5px,#8dc1dc 199.5px,#d4edf5 201px,#ffffbf 202px,#fba15b 204px,#f57848 205.5px,#f67c4a 206px,#fca45d 207px,#fedc8c 208px,#fdfec2 209px,#e3f4f3 210px,#d6eef5 211px,#e4f5f0 212px,#fcfec5 213px,#fed787 214.5px,#fdba6c 216px,#fecb7c 217px,#fdfec2 218.5px,#d3edf4 219.5px,#a2d2e5 220.5px,#8dc1dc 221.5px,#9dcee3 222.5px,#cdeaf3 223.5px,#e8f6ea 224px,#fdfec3 224.5px,#fdb365 226px,#f46d43 227.5px,#f57647 229px,#fca75e 230.5px,#fee597 232.5px,#fff6b1 234.5px,#fee89c 235.5px,#fb9e5a 237px,#f46e43 238px,#f16740 238.5px,#f67848 239.5px,#fdad60 240.5px,#fff9b6 242px,#dcf1f7 243px,#95c8df 244.5px,#88bdda 245.5px,#9fcfe4 247px,#d3edf4 248.5px,#e4f5f0 249px,#fcfec5 250px,#feefa6 251px,#fee191 252.5px,#fff5af 254px,#e6f5ed 255px,#c8e7f1 255.5px,#71aacf 257px,#6196c5 258px,#7eb5d6 259px,#cfebf3 260px,#f3fad5 260.5px,#feeda3 261px,#fa9957 262px,#f57145 262.5px,#e85337 263.5px,#f36b42 264.5px,#fdaf62 265.5px,#fcfec5 267px,#e8f6ea 267.5px,#d1ebf4 268px,#afdbea 269px,#b2ddeb 270px,#d4edf5 271px,#e8f6ea 271.5px,#fff4af 272.5px,#fdba6d 274px,#fca65d 275px,#fdb96b 276px,#fdfec2 277.5px,#e8f6e9 278px,#addaea 279.5px);-webkit-mask-image:linear-gradient(90deg,transparent,#000 50.0%);mask-image:linear-gradient(90deg,transparent,#000 50.0%)"></div>
<div class="a" style="left:228px;top:0;width:24px;height:100%;background:linear-gradient(#f6fbd0 0px,#ffffbe 1px,#fdbb6d 6px,#fdc577 7px,#fff9b6 8.5px,#dbf1f7 9.5px,#5c91c2 11.5px,#426baf 12.5px,#4066ad 13.5px,#659bc8 15px,#c7e7f1 16.5px,#e8f6e9 17px,#ffffbe 17.5px,#fcaa5f 19px,#eb593a 20.5px,#e54e35 21.5px,#f57446 23px,#fdae61 24px,#fff3ac 25.5px,#fcfec5 26px,#e3f4f3 27px,#d6eef5 27.5px,#cbe9f2 28.5px,#e2f4f5 30px,#fffab8 31.5px,#fdbc6e 33.5px,#fa9b58 35px,#fba25c 36px,#fdc072 37px,#fff8b4 38.5px,#f5fbd2 39px,#e3f4f3 39.5px,#7ab2d4 41.5px,#6096c5 42.5px,#5b8fc2 43.5px,#7bb3d4 45.5px,#e2f4f4 48px,#ffffc0 49px,#fdb063 51.5px,#f99053 52.5px,#f67e4b 54px,#f88850 55.5px,#fdb164 57.5px,#fff9b5 60.5px,#e4f4f1 62px,#d2ecf4 62.5px,#aad8e9 63.5px,#4e80ba 66px,#323997 68px,#313695 68.5px,#313695 73.5px,#3a52a3 74px,#70a8ce 75px,#cfeaf3 76px,#f3fad6 76.5px,#feefa7 77px,#fba05a 78px,#f47045 78.5px,#d52e27 79.5px,#b81226 81px,#d02927 85px,#f46e44 89.5px,#f99555 92.5px,#fba05b 95px,#fdbe70 96px,#f9fdca 97.5px,#e1f3f6 98px,#4e80ba 100px,#3a51a2 101px,#37499e 101.5px,#384ca0 102px,#4a7bb7 103px,#c4e5f0 104.5px,#edf8e0 105px,#fff4ae 105.5px,#fdac60 106.5px,#f16640 107.5px,#e95538 108.5px,#ef623e 109px,#fca45d 110px,#feeda4 111px,#f7fcce 111.5px,#def2f7 112px,#9fcfe4 113px,#8fc2dd 113.5px,#94c7df 114.5px,#cae8f2 115.5px,#eaf7e5 116px,#fffab7 116.5px,#fedf8f 117px,#f88950 118px,#f0653f 118.5px,#e24832 119.5px,#ef633e 120.5px,#fdb063 121.5px,#fff6b1 122.5px,#edf8e0 123px,#cce9f2 123.5px,#8bbfdb 124.5px,#73acd0 125.5px,#8dc1dc 126.5px,#d3ecf4 127.5px,#f2fad7 128px,#fff0a8 128.5px,#fba05b 129.5px,#e65036 130.5px,#d93529 131.5px,#ee603d 133px,#fca95f 134px,#fcfec4 135.5px,#e6f5ed 136px,#c8e7f1 136.5px,#92c5de 137.5px,#79b1d3 138.5px,#8bbfdb 139.5px,#d3edf4 140.5px,#f5fbd1 141px,#feeba1 141.5px,#f99555 142.5px,#f46d43 143px,#e75236 144px,#ee613d 145px,#fba25c 146.5px,#fff4ae 148.5px,#ecf8e3 150px,#e5f5ef 151px,#f0f9db 152px,#fff1a9 153px,#fba25b 154.5px,#f57245 155.5px,#f36a42 156px,#f57647 157px,#fdb568 158.5px,#fee496 159.5px,#fbfec5 160.5px,#e2f4f5 161.5px,#c4e5f0 163px,#ddf2f7 164.5px,#fff8b4 166px,#feca7b 168px,#fed687 169.5px,#fdfec3 171.5px,#d7eef5 173px,#addae9 175px,#aedbea 175.5px,#ddf1f7 176.5px,#f4fbd3 177px,#fee091 178px,#fec879 179px,#fed485 180px,#fffab7 181.5px,#e4f5f0 182.5px,#cae8f2 183px,#6298c6 185px,#4677b5 186px,#426baf 187px,#649ac7 188.5px,#cde9f2 190px,#ecf8e2 190.5px,#fffcba 191px,#fdba6d 192.5px,#fca75e 193.5px,#fdc476 194.5px,#fffab8 195.5px,#e9f7e7 196px,#c5e6f0 196.5px,#84bad8 197.5px,#77afd2 198px,#83b9d7 199px,#d4edf5 200.5px,#fff8b5 201.5px,#fb9e5a 203px,#f36a42 204px,#ee613d 205px,#f46d43 205.5px,#fca45d 206.5px,#fff7b3 208px,#e5f5f0 209px,#d4edf5 209.5px,#c7e7f1 210.5px,#e1f3f7 211.5px,#fffdbb 212.5px,#fdb466 214px,#f7854e 215px,#f67d4a 215.5px,#f7814c 216px,#fdad61 217px,#fffcba 218.5px,#ecf8e2 219px,#d0ebf4 219.5px,#98cae1 220.5px,#81b7d7 221.5px,#93c5de 222.5px,#c8e7f1 223.5px,#e7f6ec 224px,#fdfec2 224.5px,#fdac60 226px,#f57547 227px,#f36a42 227.5px,#f67b49 229px,#fee090 232px,#fff2ab 233.5px,#fff0a8 234.5px,#fecf80 235.5px,#f8884f 236.5px,#f0643f 237px,#df402e 238px,#ef623e 239.5px,#fca45c 240.5px,#fffcba 242px,#d4edf5 243px,#8ec2dc 244.5px,#85bad8 245.5px,#93c6df 246.5px,#dff2f8 248.5px,#fbfdc6 249.5px,#feea9f 250.5px,#fdc678 252.5px,#fed788 253.5px,#fdfec3 254.5px,#e3f4f2 255px,#69a0ca 256.5px,#4879b6 257.5px,#4a7bb7 258px,#73acd1 259px,#cfebf3 260px,#f5fbd1 260.5px,#feea9f 261px,#f99455 262px,#f46f44 262.5px,#ea5839 263.5px,#ee613d 264px,#f99354 265px,#fed788 266px,#f9fdca 267px,#e6f5ed 267.5px,#afdbea 269px,#b3ddeb 270px,#d9eff6 271px,#ffffc0 272px,#fdbe70 273.5px,#f99254 275px,#fdb164 276px,#fdfec3 277.5px,#e7f6ec 278px,#acdae9 279.5px);-webkit-mask-image:linear-gradient(90deg,transparent,#000 50.0%);mask-image:linear-gradient(90deg,transparent,#000 50.0%)"></div>
<div class="a" style="left:240px;top:0;width:24px;height:100%;background:linear-gradient(#f6fbd0 0px,#ffffbe 1px,#fdbb6d 6px,#fdc677 7px,#fffbb8 8.5px,#d7eef5 9.5px,#578bbf 11.5px,#3e60aa 13px,#5285bc 14.5px,#86bbd9 15.5px,#d0ebf4 16.5px,#fff8b5 17.5px,#fb9f5a 19px,#f16640 20px,#e65036 21px,#eb5b3b 22px,#fa9b58 23.5px,#fff6b1 25.5px,#e3f4f2 27px,#daf0f6 27.5px,#d2ecf4 28.5px,#dff2f8 29.5px,#fcfec5 31px,#fdbb6d 33.5px,#fba05b 35px,#fdb86a 36.5px,#ffffbe 38.5px,#daf0f6 39.5px,#7ab2d4 41.5px,#669cc8 43px,#7eb5d5 44.5px,#d3edf4 46.5px,#f7fcce 47.5px,#fdb668 50px,#fa9756 51.5px,#fdb568 54px,#fffdbc 57px,#e3f4f2 58.5px,#d7eff5 59px,#acdae9 61.5px,#a9d8e8 65px,#7db4d5 66.5px,#4e7fb9 67.5px,#343f99 68.5px,#313695 72px,#36459c 72.5px,#4473b3 73px,#9ecfe3 74px,#d4edf5 74.5px,#f9fdca 75px,#fee598 75.5px,#fdb86a 76px,#e64f35 77px,#b81226 78px,#a50026 79px,#a70226 80px,#d32c27 82px,#f36b42 83.5px,#fed283 86px,#feeea5 87.5px,#fff6b1 89px,#fdae61 95px,#fecf80 96px,#fafdc8 97px,#dbf1f7 97.5px,#a8d6e8 98px,#4e7fb9 99px,#333c98 100px,#313695 100.5px,#313695 101px,#4167ad 102px,#5c91c2 102.5px,#bee2ee 103.5px,#ecf8e1 104px,#fff1a9 104.5px,#fa9555 105.5px,#de402e 106.5px,#ca2427 107.5px,#dc3a2c 108.5px,#f8874f 109.5px,#fee496 110.5px,#feffc1 111px,#e3f4f2 111.5px,#9fcfe4 112.5px,#80b6d6 113.5px,#96c9e0 114.5px,#dff3f8 115.5px,#fcfec5 116px,#fdb86b 117px,#ec5b3b 118px,#da3529 119px,#e54d34 120px,#fa9958 121px,#feeca2 122px,#f6fccf 122.5px,#d9eff6 123px,#7bb2d4 124.5px,#74add1 125.5px,#84bad8 126px,#c5e6f0 127px,#eaf7e6 127.5px,#fff8b4 128px,#fdab60 129px,#f67848 129.5px,#da362a 130.5px,#d22b27 131px,#da362a 132px,#f88c51 133.5px,#feda8b 134.5px,#f3fad5 135.5px,#dbf0f7 136px,#86bcd9 137.5px,#72abd0 138.5px,#8fc3dd 139.5px,#e3f4f3 140.5px,#fffcba 141px,#fca95f 142px,#ea5839 143px,#e44b33 143.5px,#e95538 144.5px,#f99254 146px,#fee090 147.5px,#fffdbc 148.5px,#eaf7e5 149.5px,#ddf2f7 150.5px,#e2f4f3 151.5px,#fffcba 152.5px,#fa9957 154px,#ed5e3c 155px,#ea5839 155.5px,#f0653f 156.5px,#fca65e 158px,#fffab8 160px,#dbf0f7 161.5px,#bee2ee 163px,#e6f5ed 165px,#fffcbb 166px,#fece7f 168px,#fee395 170px,#fff9b7 171px,#dff2f8 172.5px,#b0dbea 174.5px,#b3ddeb 175px,#e8f6e9 176px,#fffdbc 176.5px,#fee598 177px,#fdc274 178px,#fed687 179.5px,#fffcbb 181px,#e3f4f2 182px,#cbe8f2 182.5px,#588cc0 185px,#4370b2 187px,#6fa7ce 188.5px,#d6eef5 190px,#fff9b6 191px,#fdbe70 192.5px,#fdae61 193.5px,#fece7f 194.5px,#f8fccc 195.5px,#d9eff6 196px,#88bdda 197px,#6fa7ce 198px,#8ec2dd 199px,#d7eff5 200px,#f5fbd1 200.5px,#feeda4 201px,#fb9f5a 202px,#e95739 203px,#e14531 204px,#f0643f 205px,#fdac60 206px,#feeca3 207px,#fcfec5 207.5px,#e8f6e8 208px,#d3edf4 208.5px,#b6deec 209.5px,#b7dfec 210px,#d9eff6 211px,#fffbb8 212px,#fa9756 213.5px,#ea583a 214.5px,#e44c34 215px,#ea593a 216px,#fa9656 217px,#fffbb9 218.5px,#ebf7e4 219px,#cce9f2 219.5px,#94c6df 220.5px,#81b7d7 221.5px,#98c9e1 222.5px,#cfebf3 223.5px,#ebf7e4 224px,#fffdbc 224.5px,#fcaa5f 226px,#f88b51 226.5px,#f46d43 227.5px,#f57547 228.5px,#fca45d 230px,#fee395 232px,#fff0a8 233.5px,#fee293 234.5px,#f47044 236px,#d12a27 237px,#c41e27 237.5px,#da362a 239px,#f57647 240px,#fec87a 241px,#feffc1 242px,#e8f6ea 242.5px,#cbe9f2 243px,#97c9e0 244px,#80b7d6 245px,#93c6df 246.5px,#e3f4f3 248.5px,#ffffbe 249.5px,#fdc576 252px,#fec97a 253px,#fff5af 254px,#eef8de 254.5px,#c4e5f0 255px,#6399c7 256px,#4574b4 256.5px,#3b56a5 257.5px,#4e80ba 258.5px,#70a8ce 259px,#d6eef5 260px,#fbfdc6 260.5px,#fee395 261px,#f88b51 262px,#ec5d3b 263px,#f36b42 264px,#fba25c 265px,#fff8b4 266.5px,#e0f3f8 267.5px,#b6deec 268.5px,#addaea 269.5px,#e2f4f4 271px,#fff6b2 272px,#fdaf62 273.5px,#f88c51 274.5px,#f88c51 275px,#fdb568 276px,#feefa7 277px,#f8fccd 277.5px,#e2f4f4 278px,#b3ddeb 279px,#acdae9 279.5px);-webkit-mask-image:linear-gradient(90deg,transparent,#000 50.0%);mask-image:linear-gradient(90deg,transparent,#000 50.0%)"></div>
<div class="a" style="left:252px;top:0;width:24px;height:100%;background:linear-gradient(#f6fbd0 0px,#ffffbe 1px,#fdbb6d 6px,#fdc678 7px,#fffcbb 8.5px,#d2ecf4 9.5px,#5285bc 11.5px,#3d5da8 13px,#5487bd 14.5px,#8cc0dc 15.5px,#daf0f6 16.5px,#fff2ab 17.5px,#f99455 19px,#ee613d 20px,#e85337 21px,#ef633e 22px,#fca65d 23.5px,#fff8b4 25.5px,#def2f7 27.5px,#e4f5f0 29.5px,#fffebd 31px,#fdbb6d 33.5px,#fca65d 35px,#fdc072 36.5px,#f9fdca 38.5px,#e8f6ea 39px,#d1ecf4 39.5px,#8bbfdb 41px,#71aacf 42.5px,#8cc0db 44px,#cfebf3 45.5px,#e6f5ed 46px,#f6fccf 46.5px,#fdc375 48.5px,#fba15b 50px,#fdc072 52.5px,#feffc0 55px,#d8eff6 56.5px,#9bcce2 58.5px,#88bdda 60px,#8ec2dc 61px,#cce9f2 63.5px,#d1ecf4 64.5px,#c8e7f1 65px,#96c9e0 66px,#5082bb 67px,#313695 68px,#313695 71.5px,#37489e 72px,#5487bd 72.5px,#d3edf4 73.5px,#fffebd 74px,#fed182 74.5px,#f98f53 75px,#c51e27 76px,#a50026 76.5px,#a70226 80px,#d83328 82px,#ee603d 83.5px,#f7844e 86px,#fdbc6e 87px,#fffebd 88px,#eff9dd 88.5px,#ecf8e2 89.5px,#fdfec2 91px,#fece7f 93.5px,#fdbc6e 95px,#fdc577 95.5px,#fdfec3 96.5px,#d0ebf3 97px,#4d7fb9 98px,#35439b 98.5px,#313695 99px,#313695 100.5px,#5183bb 101.5px,#b4ddeb 102.5px,#e7f6ea 103px,#fff5af 103.5px,#fa9555 104.5px,#d83228 105.5px,#ae0926 106.5px,#aa0526 107px,#c41e27 108px,#dd3d2d 108.5px,#fca55d 109.5px,#fff8b4 110.5px,#eaf7e5 111px,#c8e7f1 111.5px,#8fc3dd 112.5px,#84bad8 113px,#93c6df 114px,#cbe9f2 115px,#ebf7e5 115.5px,#fffab8 116px,#fee090 116.5px,#f88850 117.5px,#e04330 118.5px,#d42d27 119.5px,#e44b33 120.5px,#fb9d59 121.5px,#feefa7 122.5px,#f3fad4 123px,#d5eef5 123.5px,#92c5de 124.5px,#79b1d3 125.5px,#93c6df 126.5px,#d8eff6 127.5px,#f5fbd2 128px,#feeea5 128.5px,#fb9f5a 129.5px,#e85337 130.5px,#dd3d2d 131.5px,#e95638 132.5px,#fa9656 133.5px,#fff9b6 135px,#edf8e0 135.5px,#d1ebf4 136px,#7cb4d5 137.5px,#6da5cd 138.5px,#78b0d3 139px,#c2e4f0 140px,#eef8df 140.5px,#feefa7 141px,#f98f53 142px,#f0643f 142.5px,#e44b33 143.5px,#f46e44 145px,#fba15b 146px,#fff5af 148px,#ebf7e4 149.5px,#e5f5ef 150.5px,#eaf7e6 151px,#feefa7 152px,#fca45c 153px,#ea583a 154px,#e54d34 154.5px,#f26841 156px,#fdb466 157.5px,#fff4af 159px,#e0f3f8 160.5px,#c2e4f0 161.5px,#b9e0ed 162.5px,#d8eff6 164px,#fffbb8 165.5px,#fed485 167px,#fec87a 168px,#fed585 169px,#fff9b6 170.5px,#dcf1f7 172px,#bde2ee 173px,#b3ddeb 174px,#d3edf4 175px,#ecf7e3 175.5px,#fffdbb 176px,#fdc072 177.5px,#fec97a 179px,#feffc0 181px,#def2f7 182px,#6399c7 184.5px,#4777b5 186.5px,#6ba2cb 188px,#e3f4f3 190px,#f6fccf 190.5px,#fee597 191.5px,#fdc173 192.5px,#fdb366 193.5px,#fed889 194.5px,#fff5af 195px,#ebf7e4 195.5px,#bfe3ef 196px,#91c5de 196.5px,#72abd0 197px,#689ec9 197.5px,#7fb6d6 198.5px,#c8e7f1 199.5px,#eef8df 200px,#fff3ac 200.5px,#fb9f5a 201.5px,#e54e35 202.5px,#da372a 203.5px,#e85438 204.5px,#fa9c58 205.5px,#fffdbc 207px,#d5eef5 208px,#acdae9 209.5px,#dbf1f7 211px,#fff9b6 212px,#fb9d59 213.5px,#ef623e 214.5px,#e95538 215px,#ee5f3d 216px,#fb9c59 217px,#ffffbf 218.5px,#e7f6ec 219px,#c6e6f1 219.5px,#91c5de 220.5px,#86bcd9 221.5px,#a2d1e5 222.5px,#d9f0f6 223.5px,#fff9b6 224.5px,#fcaa5f 226px,#f67a49 227px,#f57245 227.5px,#f8874f 229px,#fedd8d 231.5px,#feeda3 233px,#fee090 234px,#fdc375 234.5px,#f0653f 235.5px,#bb1526 236.5px,#a50026 237.5px,#af0a26 238.5px,#db392b 239.5px,#f99254 240.5px,#fee699 241.5px,#ffffbf 242px,#e7f6eb 242.5px,#c8e7f1 243px,#91c4de 244px,#7bb3d4 245px,#91c4de 246.5px,#e4f4f1 248.5px,#fffdbc 249.5px,#fed788 251px,#fdc778 252px,#fed485 253px,#f8fccc 254px,#d4edf4 254.5px,#669cc8 255.5px,#436db0 256px,#323b97 257px,#34409a 257.5px,#4d7eb9 258.5px,#abd9e9 259.5px,#e2f4f4 260px,#fffab8 260.5px,#fdac60 261.5px,#f16841 262.5px,#ee603d 263px,#f57747 264px,#fdb366 265px,#fefec2 266.5px,#d5eef5 267.5px,#b1dceb 268.5px,#b0dceb 269.5px,#d5edf5 270.5px,#feffc1 271.5px,#fdb76a 273px,#f7854e 274.5px,#fba25c 275.5px,#fff6b2 277px,#dbf1f7 278px,#b1dceb 279px,#acdae9 279.5px);-webkit-mask-image:linear-gradient(90deg,transparent,#000 50.0%);mask-image:linear-gradient(90deg,transparent,#000 50.0%)"></div>
<div class="a" style="left:264px;top:0;width:17px;height:100%;background:linear-gradient(#f6fbd0 0px,#ffffbe 1px,#fdbb6d 6px,#fdc778 7px,#fffebd 8.5px,#ebf7e3 9px,#cdeaf3 9.5px,#82b9d7 10.5px,#4d7fb9 11.5px,#3d5ca8 12.5px,#3c5aa7 13px,#578abf 14.5px,#e2f4f4 16.5px,#fbfdc7 17px,#feeba1 17.5px,#fdad60 18.5px,#f46e43 19.5px,#e95638 20.5px,#f36b42 22px,#fdb062 23.5px,#fffab7 25.5px,#e7f6ec 27px,#dff3f8 28px,#e9f7e7 29.5px,#fffab7 31px,#fdbc6e 33.5px,#fdab60 35px,#fedc8c 37px,#fffbb9 38px,#e2f4f4 39px,#9ccde3 40.5px,#7eb5d5 42px,#97c9e0 43.5px,#dcf1f7 45px,#feffc0 46px,#fecb7d 47.5px,#fdad60 48.5px,#fba05b 49.5px,#fdbf71 51.5px,#fcfec5 54px,#e2f4f4 55px,#96c8e0 57px,#71a9cf 59px,#80b7d6 60.5px,#c6e6f1 62.5px,#d7eff5 63.5px,#c6e6f1 64.5px,#abd9e9 65px,#87bcd9 65.5px,#3f61aa 66.5px,#313695 67px,#313695 71px,#384da1 71.5px,#669dc9 72px,#b5deec 72.5px,#f7fcce 73px,#fed283 73.5px,#f67e4b 74px,#d42d27 74.5px,#a50026 75px,#af0926 81px,#e54d34 83px,#f57647 85.5px,#f88c51 86px,#fed283 87px,#fcfec4 88px,#e8f6ea 89px,#eaf7e5 90px,#fdfec3 91.5px,#fee090 93.5px,#fecc7d 95px,#fed182 95.5px,#fff2ab 96px,#d9eff6 96.5px,#71aacf 97px,#333b98 97.5px,#313695 98px,#313695 100.5px,#384b9f 101px,#5385bc 101.5px,#c3e5f0 102.5px,#f2fad7 103px,#feea9f 103.5px,#f7854e 104.5px,#d62f27 105.5px,#b71126 106.5px,#c51f27 107.5px,#ef623e 108.5px,#fecb7c 109.5px,#fff0a9 110px,#f1fad9 110.5px,#d2ecf4 111px,#96c8e0 112px,#8abeda 113px,#a5d4e6 114px,#dbf1f7 115px,#fff6b2 116px,#fdbb6d 117px,#f46d43 118px,#dc3b2c 119px,#d42d27 120px,#da372a 120.5px,#f57346 121.5px,#fca35c 122px,#fff2ab 123px,#f1fad8 123.5px,#d3edf4 124px,#95c8df 125px,#83b9d8 126px,#a3d2e5 127px,#e5f5ef 128px,#feffc1 128.5px,#fa9957 130px,#ec5c3b 131px,#e75237 131.5px,#ef623e 132.5px,#fb9f5a 133.5px,#fffebd 135px,#e8f6ea 135.5px,#c6e6f1 136px,#73acd0 137.5px,#6aa1cb 138.5px,#7bb2d4 139px,#d1ebf4 140px,#f8fccb 140.5px,#fee395 141px,#fdb265 141.5px,#ec5c3b 142.5px,#e75136 143px,#f36b42 144.5px,#fa9957 145.5px,#fee090 147px,#fff9b6 148px,#edf8e0 150px,#fffab8 151px,#fee191 151.5px,#f67d4a 152.5px,#e95638 153px,#e14430 153.5px,#e64f35 154.5px,#fa9656 156px,#fffbb9 158px,#e3f4f2 159px,#c1e4ef 160px,#b4ddeb 161px,#daf0f6 163px,#fffdbd 164.5px,#feda8a 166px,#fdc476 167.5px,#fed182 168.5px,#fff9b6 170px,#daf0f6 171.5px,#b7dfec 173px,#c2e4f0 174px,#e6f5ed 175px,#fff8b4 176px,#fdba6c 178px,#fdc577 179.5px,#fff5b0 181px,#e6f5ed 182px,#cbe9f2 182.5px,#76aed2 184px,#578abf 185px,#4d7fb9 186px,#699fca 187.5px,#d2ecf4 189.5px,#fbfec6 190.5px,#fed384 192px,#fdb96b 193.5px,#fdc475 194px,#fffdbc 195px,#e1f3f7 195.5px,#80b7d6 196.5px,#699fca 197px,#669cc8 197.5px,#87bcd9 198.5px,#d4edf5 199.5px,#f5fbd2 200px,#feeda3 200.5px,#fa9857 201.5px,#e44c34 202.5px,#da362a 203.5px,#e85437 204.5px,#fa9b58 205.5px,#fffdbc 207px,#d5eef5 208px,#acdae9 209.5px,#d9eff6 211px,#fffdbc 212px,#fdab60 213.5px,#f46f44 214.5px,#ed5e3c 215.5px,#f16740 216px,#fca35c 217px,#feea9f 218px,#fbfdc7 218.5px,#e3f4f3 219px,#a3d3e6 220px,#89beda 221px,#98cae1 222px,#e2f4f5 223.5px,#f5fbd2 224px,#fee192 225px,#fcaa5f 226px,#f57647 227.5px,#f77f4c 228.5px,#fba05a 229.5px,#fee091 231.5px,#fee99e 232.5px,#fede8e 233.5px,#fa9b58 234.5px,#d83328 235.5px,#b20d26 236px,#a50026 236.5px,#a50026 239px,#de3f2e 240px,#fdad60 241px,#fff9b6 242px,#ebf7e4 242.5px,#cbe8f2 243px,#8ec2dc 244px,#75aed2 245px,#8cc0dc 246.5px,#e4f4f1 248.5px,#fffcbb 249.5px,#fed788 251px,#fec97b 252px,#fece7f 252.5px,#fffab7 253.5px,#e5f5ee 254px,#aedbea 254.5px,#4574b4 255.5px,#36469d 256px,#313695 256.5px,#323996 257.5px,#3c5aa7 258px,#5487bd 258.5px,#bce1ee 259.5px,#edf8e0 260px,#fff0a8 260.5px,#fb9f5a 261.5px,#f67a49 262px,#f0653f 263px,#f46f44 263.5px,#fba25b 264.5px,#fff5b0 266px,#e3f4f2 267px,#aedbea 268.5px,#b5deec 269.5px,#e1f3f7 270.5px,#fff6b1 271.5px,#fca75e 273px,#f7824d 274px,#f7834d 274.5px,#fdac60 275.5px,#fffdbc 277px,#ebf7e3 277.5px,#d4edf5 278px,#bce1ee 278.5px,#acd9e9 279.5px);-webkit-mask-image:linear-gradient(90deg,transparent,#000 70.6%);mask-image:linear-gradient(90deg,transparent,#000 70.6%)"></div>
<div class="a" style="left:276px;top:0;width:10px;height:100%;background:linear-gradient(#f6fbd0 0px,#ffffbe 1px,#fdbb6d 6px,#fdc778 7px,#ffffbe 8.5px,#eaf7e5 9px,#cbe9f2 9.5px,#6297c6 11px,#4b7cb7 11.5px,#3c5aa7 12.5px,#3e60aa 13.5px,#588bc0 14.5px,#bfe3ef 16px,#e5f5ee 16.5px,#feffc0 17px,#fca65d 18.5px,#f36a42 19.5px,#e95639 20.5px,#ee613e 21.5px,#fa9b58 23px,#fee191 24.5px,#fffbba 25.5px,#e7f6ec 27px,#e1f3f7 28px,#e6f5ee 29px,#fcfec4 30.5px,#fdc778 33px,#fdae61 35px,#fecc7d 36.5px,#fffebd 38px,#e0f3f7 39px,#9ecee3 40.5px,#87bcd9 41.5px,#95c7df 43px,#d3edf4 44.5px,#e8f6e9 45px,#fff5af 46px,#fdbf71 47.5px,#fba15b 49px,#fdbb6d 51px,#fffdbc 53.5px,#d7eff5 55px,#8dc1dc 57px,#6da5cd 59px,#74add1 60px,#bfe3ef 62.5px,#cae8f2 63.5px,#c3e5f0 64px,#90c3dd 65px,#4370b2 66px,#323996 66.5px,#313695 67px,#313695 71px,#5082bb 71.5px,#9dcee3 72px,#ebf7e4 72.5px,#fee191 73px,#f88a50 73.5px,#d73027 74px,#a50026 74.5px,#ae0926 81px,#de3f2e 82.5px,#f67e4b 85.5px,#fedd8d 87px,#f8fccb 88px,#e3f4f2 89px,#e3f4f2 90px,#fffdbd 92.5px,#fee293 95px,#fee495 95.5px,#fefec2 96px,#b2ddeb 96.5px,#4472b2 97px,#313695 97.5px,#313695 100.5px,#3a53a3 101px,#5b8fc2 101.5px,#ceeaf3 102.5px,#f8fccc 103px,#fee598 103.5px,#f7814c 104.5px,#d83128 105.5px,#be1826 106.5px,#d02927 107.5px,#f57346 108.5px,#feda8a 109.5px,#fff9b6 110px,#e9f7e7 110.5px,#c7e7f1 111px,#93c5de 112px,#8bbfdb 112.5px,#98cae1 113.5px,#ddf2f7 115px,#fff8b5 116px,#fba25c 117.5px,#e44b33 119px,#db382b 120px,#e64f35 121px,#fa9857 122px,#fee99e 123px,#fafdc8 123.5px,#e1f3f6 124px,#a0d1e4 125px,#88bdda 126px,#9fd0e4 127px,#def2f7 128px,#f7fcce 128.5px,#feeea5 129px,#fcaa5f 130px,#f26941 131px,#ec5d3c 131.5px,#f26a41 132.5px,#fca45d 133.5px,#feffc0 135px,#e6f5ed 135.5px,#85bbd9 137px,#6aa1cb 138px,#7fb6d6 139px,#d8eff6 140px,#fdfec2 140.5px,#fdab60 141.5px,#f67848 142px,#eb5b3b 142.5px,#e85337 143px,#ee613d 144px,#fb9e5a 145.5px,#feeda4 147.5px,#f4fbd4 149.5px,#fffebe 150.5px,#fee99d 151px,#f88a50 152px,#ec5b3b 152.5px,#e0422f 153px,#de3f2e 153.5px,#ea5739 154.5px,#fdb164 156px,#fffcba 157.5px,#e1f3f6 158.5px,#bce2ee 159.5px,#b0dceb 160.5px,#bae1ed 161.5px,#e5f5ef 163px,#fdfec2 164px,#fede8e 165.5px,#fdc274 167.5px,#fed485 168.5px,#ffffbf 170px,#e3f4f2 171px,#c3e5f0 172px,#b9e0ed 173px,#dcf1f7 174.5px,#fafdc8 175.5px,#fed484 177px,#fdb467 178.5px,#fece7f 180px,#fbfdc7 181.5px,#e8f6ea 182px,#cce9f2 182.5px,#73acd1 184px,#4f81ba 185.5px,#5487bd 186.5px,#6ea6cd 187.5px,#d8eff6 189.5px,#fdfec2 190.5px,#fed686 192px,#fdbf71 193.5px,#feca7b 194px,#ffffbf 195px,#e1f3f7 195.5px,#85bbd8 196.5px,#6ba3cc 197.5px,#8dc1dc 198.5px,#d9eff6 199.5px,#f7fcce 200px,#feeaa0 200.5px,#fa9555 201.5px,#e34a33 202.5px,#d93529 203.5px,#e75237 204.5px,#fa9957 205.5px,#fffcba 207px,#d8eff6 208px,#afdbea 209.5px,#d9f0f6 211px,#fffebe 212px,#fdb164 213.5px,#f67948 214.5px,#f16640 215.5px,#f46f44 216px,#fca95f 217px,#feeca2 218px,#f9fdca 218.5px,#e1f4f6 219px,#a4d3e6 220px,#8dc1dc 221px,#9ecfe3 222px,#cbe9f2 223px,#e5f5ef 223.5px,#f8fccc 224px,#fedf8f 225px,#fca85e 226px,#f57748 227.5px,#f7804c 228.5px,#fba15b 229.5px,#fee091 231.5px,#fee496 233px,#fdb669 234px,#f8884f 234.5px,#ca2327 235.5px,#a50026 236px,#a50026 239px,#b40e26 239.5px,#d93329 240px,#f26841 240.5px,#fed686 241.5px,#fff6b2 242px,#ecf8e1 242.5px,#cbe9f2 243px,#8dc1dc 244px,#73acd0 245px,#8bbfdb 246.5px,#e5f5ef 248.5px,#fffbb9 249.5px,#fee394 250.5px,#fecd7e 252px,#fed586 252.5px,#fbfec6 253.5px,#d8eff6 254px,#6399c7 255px,#3f63ab 255.5px,#323a97 256px,#313695 256.5px,#333c98 257.5px,#3f61aa 258px,#5c90c2 258.5px,#c6e6f1 259.5px,#f3fad5 260px,#feeba0 260.5px,#fa9857 261.5px,#f16640 262.5px,#f57346 263.5px,#fca85e 264.5px,#fff8b5 266px,#e0f3f7 267px,#addaea 268.5px,#b7dfed 269.5px,#e4f5f1 270.5px,#fff2ab 271.5px,#fdbd6f 272.5px,#f88b51 273.5px,#f7854e 274.5px,#fdb265 275.5px,#fdfec3 277px,#e8f6ea 277.5px,#cfebf3 278px,#b9e0ed 278.5px,#abd9e9 279.5px);-webkit-mask-image:linear-gradient(90deg,transparent,#000 50.0%);mask-image:linear-gradient(90deg,transparent,#000 50.0%)"></div>
<div class="a" style="left:281px;top:0;width:10px;height:100%;background:linear-gradient(#f6fbd0 0px,#ffffbe 1px,#fdbb6d 6px,#fec779 7px,#ffffc0 8.5px,#e9f6e7 9px,#c9e8f1 9.5px,#7cb3d4 10.5px,#4777b5 11.5px,#3e60aa 12px,#3a52a3 13px,#436fb1 14px,#578abf 14.5px,#c6e6f1 16px,#ebf7e5 16.5px,#fff9b7 17px,#fa9857 18.5px,#ef623e 19.5px,#e95638 20.5px,#f16740 21.5px,#fca95f 23px,#fff7b2 25px,#e8f6ea 26.5px,#dff2f8 27.5px,#e6f5ec 29px,#ffffbe 30.5px,#fdc374 33px,#fdb063 34.5px,#fed182 36.5px,#ffffbf 38px,#e1f3f6 39px,#a7d5e7 40.5px,#94c7df 42px,#a9d8e8 43px,#d4edf4 44px,#f9fdca 45px,#fdbf71 47px,#fba15b 48.5px,#fdb769 50.5px,#fff7b3 53px,#e1f3f6 54.5px,#7fb6d6 57px,#5e92c3 58.5px,#578bbf 60px,#75aed1 62px,#7fb6d6 63.5px,#669dc9 64.5px,#313695 66px,#313695 70px,#3c57a5 70.5px,#6ba2cb 71px,#b7dfed 71.5px,#f8fccc 72px,#fed081 72.5px,#f67848 73px,#cc2527 73.5px,#a50026 74px,#a50026 80px,#ec5c3b 82.5px,#fca85e 85.5px,#fff5af 87px,#f5fbd2 87.5px,#e2f4f5 88px,#b6dfec 89px,#a3d3e6 90.5px,#e0f3f7 95.5px,#bee2ee 96px,#70a8ce 96.5px,#35419b 97px,#313695 99.5px,#343e99 100px,#4472b3 100.5px,#a3d2e5 101.5px,#d8eff6 102px,#fbfdc7 102.5px,#fdba6c 103.5px,#ec5c3b 104.5px,#cc2527 105.5px,#c01a27 106.5px,#da362a 107.5px,#f8874f 108.5px,#fee495 109.5px,#ffffbf 110px,#e6f5ee 110.5px,#a8d6e8 111.5px,#8ec2dc 112.5px,#99cbe1 113.5px,#d9eff6 115px,#fffebd 116px,#f99455 118px,#ee603d 119px,#e44c34 120px,#ec5c3b 121px,#fa9c59 122px,#fffebe 123.5px,#e8f6e9 124px,#cae8f2 124.5px,#9acbe1 125.5px,#92c5de 126.5px,#d5eef5 128px,#fff7b3 129px,#fdbb6e 130px,#f67e4b 131px,#f47044 131.5px,#f67a49 132.5px,#fdaf62 133.5px,#feffc1 135px,#e8f6ea 135.5px,#cae8f2 136px,#91c4de 137px,#77b0d2 138px,#91c4de 139px,#e4f5f0 140px,#fffab7 140.5px,#fca45c 141.5px,#f57446 142px,#e65036 143px,#f36b42 144.5px,#fdaf62 146px,#fee597 147.5px,#fff8b4 149.5px,#fee496 150.5px,#fdc274 151px,#ed5f3c 152px,#d62f27 153px,#de3e2e 154px,#fa9b58 155.5px,#fff9b6 157px,#ddf1f7 158px,#b0dbea 159px,#a1d1e4 160px,#b6dfec 161.5px,#d9f0f6 162.5px,#fffbb9 164px,#fed484 165.5px,#fdbb6d 167px,#fed384 168.5px,#fefec1 170px,#e2f4f5 171px,#c3e5f0 172px,#bce1ee 173px,#e4f5f0 174.5px,#fffab7 175.5px,#fdc374 177px,#fdad60 178px,#fdbc6e 179.5px,#fff4af 181px,#e2f4f4 182px,#679ec9 184px,#4676b4 185.5px,#5082bb 186.5px,#6fa7ce 187.5px,#e0f3f8 189.5px,#ffffbf 190.5px,#fee191 192px,#fed888 193.5px,#fee293 194px,#f6fbd0 195px,#daf0f6 195.5px,#90c3dd 196.5px,#7ab1d3 197.5px,#9bcde2 198.5px,#e3f4f3 199.5px,#fdfec3 200px,#fee598 200.5px,#f88c51 201.5px,#e04330 202.5px,#d62f27 203.5px,#e44b33 204.5px,#f98f53 205.5px,#fedd8d 206.5px,#fff4af 207px,#e4f5f1 208px,#bfe3ef 209.5px,#e2f4f5 211px,#fffebd 212px,#fca85e 214px,#f7864e 215px,#f88a50 216px,#fdbb6d 217px,#fff1aa 218px,#e2f4f4 219px,#aedbea 220px,#9dcee3 221px,#b0dbea 222px,#dcf1f7 223px,#fffdbc 224px,#fb9d59 226px,#f57145 227.5px,#f67c4a 228.5px,#fedb8b 231.5px,#fedc8d 233px,#fdab60 234px,#f67b4a 234.5px,#c41d27 235.5px,#a50026 236px,#a50026 239px,#b30e26 239.5px,#d83328 240px,#f16841 240.5px,#fed686 241.5px,#fff7b2 242px,#ecf8e2 242.5px,#cbe9f2 243px,#8bc0db 244px,#71aacf 245px,#8bbfdb 246.5px,#d5edf5 248px,#fafdc8 249px,#fed787 251px,#feda8b 252px,#fffab8 253px,#e9f6e7 253.5px,#bae1ed 254px,#5588be 255px,#343f99 256px,#313695 256.5px,#34409a 257px,#4f81ba 258px,#abd9e9 259px,#e1f3f7 259.5px,#fffdbc 260px,#fdb467 261px,#f46d43 262px,#ee613d 262.5px,#f57145 263.5px,#fca95f 264.5px,#fffab7 266px,#def2f7 267px,#b5deec 268px,#aedaea 269px,#e6f5ee 270.5px,#fff1a9 271.5px,#fdbe70 272.5px,#f99254 273.5px,#f88c51 274px,#fca75e 275px,#fff7b2 276.5px,#dcf1f7 277.5px,#afdbea 278.5px,#a4d4e6 279.5px);-webkit-mask-image:linear-gradient(90deg,transparent,#000 50.0%);mask-image:linear-gradient(90deg,transparent,#000 50.0%)"></div>
<div class="a" style="left:286px;top:0;width:10px;height:100%;background:linear-gradient(#f6fbd0 0px,#ffffbe 1px,#fdbb6d 6px,#fec779 7px,#feffc1 8.5px,#e8f6e9 9px,#c7e7f1 9.5px,#79b1d3 10.5px,#4472b2 11.5px,#384ca0 12.5px,#37499e 13px,#3a51a2 13.5px,#5284bc 14.5px,#c9e8f1 16px,#eef9de 16.5px,#fff4ae 17px,#fdb063 18px,#f36a42 19px,#e75237 20px,#f46d43 21.5px,#fb9e5a 22.5px,#fff5b0 24.5px,#ddf2f7 26.5px,#e0f3f8 28.5px,#fffab7 30.5px,#fdc778 32.5px,#fdaf62 34px,#fdc678 36px,#ffffbf 38px,#e5f5ef 39px,#d5edf5 39.5px,#a8d7e8 41.5px,#b2dceb 42.5px,#d8eff6 43.5px,#fbfec5 44.5px,#fecb7c 46px,#fba25c 47.5px,#fdae61 49.5px,#fff8b4 52.5px,#def2f7 54px,#6fa7ce 56.5px,#4470b2 58px,#36459c 60px,#3a53a3 63.5px,#313695 65.5px,#313695 68px,#426cb0 69px,#649ac7 69.5px,#d4edf5 70.5px,#fffebe 71px,#fed181 71.5px,#f8874f 72px,#dc3b2c 72.5px,#a80326 73px,#a50026 73.5px,#a50026 79px,#d62f27 80px,#f26841 81px,#fca95f 82.5px,#fed182 84.5px,#fffebe 86px,#d2ecf4 87px,#70a8ce 88.5px,#4b7db8 89.5px,#3f62ab 90.5px,#3c59a6 92px,#4370b1 93.5px,#6fa7ce 95.5px,#69a0ca 96px,#333b97 97.5px,#35419b 98px,#5385bc 99px,#c9e8f2 100.5px,#edf8e1 101px,#fff7b3 101.5px,#fdb568 102.5px,#ee603d 103.5px,#d02927 104.5px,#bb1526 105.5px,#d52f27 107px,#f57145 108px,#feca7b 109px,#fbfdc7 110px,#e4f5f0 110.5px,#acdae9 111.5px,#92c5de 112.5px,#99cae1 113.5px,#d0ebf3 115px,#e7f6ec 115.5px,#fff3ad 116.5px,#fdac60 118px,#f46c43 119.5px,#f26841 120.5px,#fdad60 122px,#fffdbc 123.5px,#d5edf5 124.5px,#9bcce2 126px,#a0d1e4 127px,#cdeaf3 128px,#e9f6e8 128.5px,#ffffc0 129px,#fdb265 130.5px,#fa9957 131px,#f88b51 132px,#fdbe70 133.5px,#feffc1 135px,#d4edf5 136px,#a4d4e6 137px,#90c3dd 138px,#96c8e0 138.5px,#cfebf3 139.5px,#f1fad9 140px,#feefa7 140.5px,#f99455 141.5px,#e34933 142.5px,#de3e2d 143px,#e95538 144.5px,#fed081 147.5px,#fee293 149px,#fdb86a 150.5px,#dd3d2d 152px,#c51e27 153px,#d52e27 154px,#f36b42 155px,#fdc577 156px,#fcfec5 157px,#e4f5f0 157.5px,#93c6df 159px,#87bcd9 160px,#97c9e0 161px,#d2ecf4 162.5px,#e6f5ec 163px,#fff9b6 164px,#fedd8d 165px,#fdb466 167px,#fecf80 168.5px,#ffffbf 170px,#e3f4f3 171px,#bee2ee 172.5px,#dbf0f6 174px,#ffffbf 175px,#fdbb6d 176.5px,#fa9555 178px,#fdba6c 179.5px,#fffcba 181px,#d2ecf4 182px,#5689be 184px,#4064ac 185.5px,#588cc0 187px,#cbe8f2 189px,#e5f5ef 189.5px,#fffdbc 190.5px,#feeaa0 192.5px,#fff0a9 193.5px,#f9fccb 194.5px,#cfebf3 195.5px,#9ccde2 196.5px,#8cc0dc 197.5px,#aad9e9 198.5px,#c9e7f1 199px,#e8f6e8 199.5px,#fffcbb 200px,#fee293 200.5px,#f88950 201.5px,#e04330 202.5px,#d52e27 203.5px,#e24832 204.5px,#f7864e 205.5px,#fed182 206.5px,#fffebe 207.5px,#e4f4f1 208.5px,#d6eef5 209.5px,#e2f4f5 210.5px,#fffdbb 212px,#fdc072 214px,#fcaa5f 215.5px,#fed283 217px,#fff8b4 218px,#e4f5f1 219px,#bee2ee 220px,#b4ddec 221px,#ddf1f7 222.5px,#fdfec3 223.5px,#fca75e 225.5px,#f67848 226.5px,#f26941 227.5px,#f57647 228.5px,#fed384 231.5px,#fed384 233px,#fca45c 234px,#f67848 234.5px,#c92227 235.5px,#a80326 236px,#a50026 236.5px,#a50026 239px,#de3e2d 240px,#fdab60 241px,#fff9b5 242px,#ebf7e4 242.5px,#c9e8f2 243px,#78b0d3 244.5px,#70a9cf 245.5px,#8abfdb 246.5px,#daf0f6 248px,#feffc0 249px,#fee699 250px,#feda8b 251px,#fffab7 252.5px,#edf8e0 253px,#c7e7f1 253.5px,#4879b6 255px,#3950a2 256px,#3a54a4 256.5px,#5386bd 257.5px,#d2ecf4 259px,#f6fbd0 259.5px,#feeba1 260px,#fb9f5a 261px,#f67a49 261.5px,#eb5a3a 262.5px,#f46d43 263.5px,#fca85e 264.5px,#fffab8 266px,#ddf2f7 267px,#b5deec 268px,#aedbea 269px,#e6f5ed 270.5px,#fff1aa 271.5px,#fdc274 272.5px,#fa9b58 274px,#fdbb6d 275px,#feefa7 276px,#f9fdca 276.5px,#e3f4f2 277px,#afdbea 278px,#9bcce2 279.5px);-webkit-mask-image:linear-gradient(90deg,transparent,#000 50.0%);mask-image:linear-gradient(90deg,transparent,#000 50.0%)"></div>
<div class="a" style="left:291px;top:0;width:10px;height:100%;background:linear-gradient(#f6fbd0 0px,#ffffbe 1px,#fdbb6d 6px,#fec779 7px,#feffc0 8.5px,#e8f6e9 9px,#c7e7f1 9.5px,#77b0d2 10.5px,#436db0 11.5px,#36449c 12.5px,#343f9a 13px,#36469d 13.5px,#4a7bb7 14.5px,#c7e7f1 16px,#eff9dd 16.5px,#fff2ab 17px,#fca75e 18px,#ee613d 19px,#e54e35 20px,#ee603d 21px,#fdac60 22.5px,#fff1aa 24px,#fdfec2 24.5px,#e4f4f1 25.5px,#d7eff5 26px,#cae8f2 27px,#ddf2f7 28.5px,#fdfec3 30px,#fecb7c 32px,#fdad61 33.5px,#fdb366 35px,#fec97a 36px,#fffdbc 38px,#e1f3f7 39.5px,#bde2ee 41.5px,#daf0f6 43px,#fcfec5 44px,#fdb063 46px,#fa9756 47px,#fdad60 49px,#fffdbc 52px,#e6f5ee 53px,#d1ecf4 53.5px,#a0d0e4 54.5px,#4777b5 56.5px,#313695 58px,#313695 65.5px,#35419a 66px,#4e80ba 67px,#c9e8f2 68.5px,#f1fad8 69px,#feeca2 69.5px,#fdbc6e 70px,#f67848 70.5px,#da372a 71px,#ac0726 71.5px,#a50026 72px,#a50026 77.5px,#b20c26 78px,#f46c43 79.5px,#fdc577 81px,#fee597 82px,#fffebd 84px,#d0ebf4 85.5px,#8cc0dc 86.5px,#497ab7 87.5px,#313695 88.5px,#313695 95px,#3a53a3 95.5px,#7bb3d4 97.5px,#c7e7f1 98.5px,#e9f6e7 99px,#fffdbc 99.5px,#fb9d59 101px,#e64f35 102px,#c31d27 103px,#a60126 104.5px,#bd1726 106px,#e14531 107px,#f99154 108px,#fedd8d 109px,#f5fbd1 110px,#e3f4f3 110.5px,#a1d1e5 112px,#94c7df 113px,#a2d2e5 114px,#e0f3f8 115.5px,#fffcbb 116.5px,#fdbf71 118px,#fa9555 119px,#f7834d 120px,#f99355 121px,#fdbe70 122px,#fffebe 123.5px,#dcf1f7 124.5px,#b1dceb 125.5px,#a0d0e4 126.5px,#b1dceb 127.5px,#e3f4f2 128.5px,#fff3ac 129.5px,#fdc677 130.5px,#fca95f 131.5px,#fdbd6f 133px,#fcfec4 135px,#dcf1f7 136px,#b7dfec 137px,#a8d7e8 138px,#b0dbea 138.5px,#e5f5ee 139.5px,#ffffbe 140px,#fee192 140.5px,#f67a49 141.5px,#d62f27 142.5px,#ca2427 143px,#da372a 144.5px,#fca95f 147px,#fdc678 148.5px,#fca65d 150px,#f0643f 151px,#cf2927 152px,#b81226 153px,#c72127 154px,#ee5f3d 155px,#fdc375 156px,#feeaa0 156.5px,#f8fccd 157px,#dbf1f7 157.5px,#7cb3d4 159px,#6fa8ce 160px,#81b8d7 161px,#e1f3f6 163px,#fffbb9 164px,#fedb8b 165px,#fdb96c 166px,#fdae61 167px,#fecc7d 168.5px,#fffebd 170px,#e4f5f0 171px,#c0e3ef 172.5px,#c1e4ef 173px,#e2f4f4 174px,#fff4ae 175px,#fdba6d 176px,#f7844d 177px,#f67b49 177.5px,#f88a50 178.5px,#fdb96b 179.5px,#fbfec6 181px,#e5f5f0 181.5px,#c1e4ef 182px,#5c91c2 183.5px,#3f63ab 184.5px,#3b55a4 185.5px,#5588be 187px,#d3ecf4 189px,#fffbb8 190.5px,#fff4ae 192px,#fafdc8 193.5px,#d7eff6 195px,#9dcee3 197px,#a2d2e5 198px,#cfebf3 199px,#ebf7e4 199.5px,#fffcba 200px,#fee394 200.5px,#f99154 201.5px,#e54d34 202.5px,#db382b 203.5px,#e54e35 204.5px,#fdab5f 206px,#fee597 207px,#fafdc9 208px,#e8f6e9 209px,#e8f6ea 210px,#fffbb9 212px,#fed585 214px,#fec879 215.5px,#fed989 216.5px,#ffffbf 218px,#e6f5ee 219px,#d9eff6 219.5px,#c8e7f1 220.5px,#e1f3f6 222px,#fbfec6 223px,#fee192 224px,#fdae61 225px,#f67a49 226px,#ef633e 227px,#f57245 228.5px,#fecc7d 231.5px,#fecc7e 233px,#fba15b 234px,#f67a49 234.5px,#d22b27 235.5px,#a50026 236.5px,#af0926 239px,#cb2527 239.5px,#f67e4b 240.5px,#fee090 241.5px,#fffbb9 242px,#e9f7e7 242.5px,#c8e7f1 243px,#8abfdb 244px,#6ea6cd 245px,#87bcd9 246.5px,#d9f0f6 248px,#ffffc0 249px,#fee192 250.5px,#fee191 251px,#fff7b3 252px,#d1ebf4 253px,#5385bc 254.5px,#3e5fa9 255.5px,#3f62ab 256px,#588cc0 257px,#c9e8f1 258.5px,#eef8df 259px,#fff5b0 259.5px,#fdb265 260.5px,#f46c43 261.5px,#e85538 262.5px,#f36a42 263.5px,#fca75e 264.5px,#fffbb8 266px,#ddf1f7 267px,#b5deec 268px,#aedbea 269px,#e6f5ed 270.5px,#f9fdca 271px,#fede8e 272px,#fca95f 273.5px,#fdb769 274.5px,#fffcba 276px,#ecf8e3 276.5px,#d0ebf4 277px,#9ecfe3 278px,#93c6df 279.5px);-webkit-mask-image:linear-gradient(90deg,transparent,#000 50.0%);mask-image:linear-gradient(90deg,transparent,#000 50.0%)"></div>
<div class="a" style="left:296px;top:0;width:10px;height:100%;background:linear-gradient(#f6fbd0 0px,#ffffbe 1px,#fdbb6d 6px,#fdc778 7px,#ffffbe 8.5px,#eaf7e6 9px,#cae8f2 9.5px,#7ab2d4 10.5px,#436eb1 11.5px,#323896 13px,#333c98 13.5px,#426baf 14.5px,#5d92c3 15px,#b9e0ed 16px,#e7f6ea 16.5px,#fff8b5 17px,#fdaf62 18px,#f0643f 19px,#e54e35 20px,#ee613d 21px,#f99154 22px,#fff7b3 24px,#dbf0f6 25.5px,#c3e5f0 27px,#def2f7 28.5px,#fffdbc 30px,#fdc274 32px,#fca65d 33.5px,#fdc778 36px,#fbfec6 38.5px,#e1f3f6 40px,#cdeaf3 41.5px,#e7f6eb 43px,#fff5b0 44px,#fdaf62 45.5px,#f99154 46.5px,#fdb063 48.5px,#fff2ab 50.5px,#fdfec3 51px,#d7eff5 52px,#99cbe1 53px,#4473b3 54.5px,#313695 55.5px,#313695 63px,#35429b 63.5px,#4472b2 64px,#69a0ca 64.5px,#cce9f2 65.5px,#f3fad6 66px,#feeca2 66.5px,#f7864e 67.5px,#bf1927 68.5px,#a50026 69px,#a50026 76px,#dc3a2b 77px,#ef633f 77.5px,#fedd8e 79px,#f6fccf 80px,#e3f4f2 80.5px,#c7e7f1 81px,#7cb3d4 82.5px,#4471b2 84px,#313695 85px,#313796 93.5px,#5588be 94.5px,#c5e6f0 96px,#e6f5ed 96.5px,#fbfec6 97px,#fdb365 98.5px,#e34832 100px,#b20c26 101.5px,#a50026 102.5px,#ac0726 104.5px,#dd3d2d 106px,#fba15b 107.5px,#fedf8f 108.5px,#fbfec6 109.5px,#daf0f6 110.5px,#a5d5e7 112px,#98cae1 113px,#a2d2e5 114px,#daf0f6 115.5px,#fcfec4 116.5px,#fecc7d 118px,#fdab60 119px,#fb9e5a 120px,#fdbe70 121.5px,#fbfec6 123.5px,#dcf1f7 124.5px,#b6deec 125.5px,#a5d4e6 126.5px,#b0dbea 127.5px,#dcf1f7 128.5px,#fffdbc 129.5px,#fedc8c 130.5px,#fdc274 131.5px,#fdc677 132.5px,#fedf8f 133.5px,#f8fccc 135px,#ddf1f7 136px,#bde2ee 137px,#b3ddeb 138px,#d8eff6 139px,#f3fad6 139.5px,#feeea6 140px,#fdc375 140.5px,#e44b33 141.5px,#c62027 142px,#a50026 143px,#ba1426 144.5px,#f67b49 146.5px,#fdab60 147.5px,#fdbb6d 148.5px,#fdad61 149.5px,#f67c4a 150.5px,#d22b27 152px,#bb1526 153.5px,#d83328 154.5px,#f8864f 155.5px,#fee598 156.5px,#fcfec4 157px,#e0f3f7 157.5px,#77afd2 159px,#649ac7 160px,#82b8d7 161.5px,#d3edf4 163px,#fdfec3 164px,#fecc7d 165.5px,#fdb164 167px,#fecf80 168.5px,#ffffbf 170px,#e4f4f2 171px,#c3e5f0 172.5px,#d5eef5 173.5px,#e9f6e8 174px,#fdfec3 174.5px,#fca85e 176px,#f57145 177px,#f36b42 177.5px,#fa9957 179px,#feefa6 180.5px,#f9fdcb 181px,#e1f3f6 181.5px,#578bbf 183.5px,#3b55a4 185px,#4473b3 186.5px,#73acd0 187.5px,#d9f0f6 189px,#fff8b5 190.5px,#fffab8 192.5px,#e0f3f7 194.5px,#b0dceb 196px,#9bcce2 197.5px,#addaea 198.5px,#e1f4f5 199.5px,#fff1aa 200.5px,#fdb567 201.5px,#f57346 202.5px,#ec5c3b 203.5px,#f46c43 204.5px,#fb9d59 205.5px,#fff7b3 207.5px,#ebf7e4 209px,#eef9dd 210.5px,#fffbb9 212px,#fed384 215px,#fee496 216.5px,#fafdc8 218px,#dbf1f7 219.5px,#d1ebf4 220.5px,#e0f3f8 221.5px,#f7fcce 222.5px,#fee89c 223.5px,#fa9b58 225px,#f0643f 226.5px,#f46c43 228px,#fdc475 231px,#fecc7d 233px,#fca45c 234px,#da362a 235.5px,#ac0626 236.5px,#a50026 237px,#a90426 238.5px,#bd1726 239px,#d73127 239.5px,#f88850 240.5px,#fee293 241.5px,#fffcbb 242px,#e9f7e7 242.5px,#c9e8f1 243px,#77afd2 244.5px,#6ba2cb 245.5px,#7eb5d5 246.5px,#e3f4f3 248.5px,#fffebd 249.5px,#feeba1 251px,#fdfec2 252px,#e6f5ed 252.5px,#bbe1ed 253px,#5f94c4 254px,#4472b3 254.5px,#3e5fa9 255px,#3e5fa9 255.5px,#4e80ba 256.5px,#88bdda 257.5px,#ddf1f7 258.5px,#f8fccb 259px,#feeca2 259.5px,#fca95f 260.5px,#f36a42 261.5px,#ea5839 262.5px,#f47044 263.5px,#fdac60 264.5px,#fffbba 266px,#ddf2f7 267px,#b5deec 268px,#aedaea 269px,#e7f6eb 270.5px,#fbfdc7 271px,#feda8a 272px,#fca95f 273.5px,#fdae61 274px,#fed485 275px,#fdfec3 276px,#e7f6eb 276.5px,#9acce2 278px,#91c5de 279.5px);-webkit-mask-image:linear-gradient(90deg,transparent,#000 50.0%);mask-image:linear-gradient(90deg,transparent,#000 50.0%)"></div>
<div class="a" style="left:301px;top:0;width:10px;height:100%;background:linear-gradient(#f6fbd0 0px,#ffffbe 1px,#fdbb6d 6px,#fdc678 7px,#fffdbc 8.5px,#ecf8e2 9px,#ceeaf3 9.5px,#7eb5d6 10.5px,#4471b2 11.5px,#343f99 12.5px,#313695 13.5px,#34409a 14px,#4f81ba 15px,#daf0f6 16.5px,#fcfec5 17px,#fee597 17.5px,#f99153 18.5px,#f46d43 19px,#e65036 20px,#ee613e 21px,#f99254 22px,#fffbb9 24px,#e4f4f1 25px,#d3edf4 25.5px,#c1e4ef 27px,#e0f3f7 28.5px,#fff9b6 30px,#fdbb6d 32px,#fb9f5a 33.5px,#fdb669 35.5px,#fffcba 38.5px,#dff2f8 41px,#dff3f8 42.5px,#f9fdca 43.5px,#fdc273 45px,#fa9757 46px,#fa9656 47px,#fdb466 48px,#fff2ac 49.5px,#e1f4f5 50.5px,#91c4de 51.5px,#4676b4 52.5px,#37499e 53px,#313695 53.5px,#313695 60px,#3a52a3 60.5px,#5486bd 61px,#b7dfec 62px,#e7f6ea 62.5px,#fff6b2 63px,#fed081 63.5px,#eb593a 64.5px,#a50026 65.5px,#a80326 73.5px,#cb2427 74px,#f7804c 75px,#fedd8d 76px,#fff8b5 76.5px,#ebf7e3 77px,#c7e7f1 77.5px,#497ab6 79px,#384b9f 79.5px,#313695 80px,#333c98 91px,#5588be 92px,#97c9e0 93px,#ddf2f7 94px,#f2fad6 94.5px,#fee597 95.5px,#fdae61 96.5px,#f46d43 97.5px,#cd2727 99px,#a50026 101px,#ae0826 103px,#e04330 105px,#fdb365 107px,#feffc1 109px,#e4f4f1 110px,#a9d7e8 112px,#9bcde2 113.5px,#abd9e9 114.5px,#e5f5ef 116px,#fffab8 117px,#fedc8d 118px,#fdb467 120px,#fece7f 121.5px,#fff9b5 123px,#dbf1f7 124.5px,#aedbea 126px,#a8d7e8 127px,#e0f3f8 129px,#fff7b2 130.5px,#fedf8f 132px,#fee69a 133.5px,#fffab8 134.5px,#def2f7 136px,#c0e3ef 137px,#b7dfec 138px,#e3f4f2 139px,#feffc0 139.5px,#fede8e 140px,#eb593a 141px,#c61f27 141.5px,#a50026 142px,#b00a26 145px,#f16740 146.5px,#fba25b 147.5px,#fdb76a 148.5px,#fdac60 149.5px,#f16640 151px,#cd2627 152.5px,#c92327 154px,#d93429 154.5px,#f67f4b 155.5px,#fede8e 156.5px,#fffbb9 157px,#e7f6eb 157.5px,#c1e4ef 158px,#7bb2d4 159px,#5e93c3 160px,#73abd0 161.5px,#e2f4f4 163.5px,#fff7b2 164.5px,#fdc475 166px,#fdb769 167px,#fed585 168.5px,#fcfec5 170px,#e2f4f5 171px,#c5e6f0 172.5px,#dff2f8 173.5px,#fff9b5 174.5px,#fa9957 176px,#f16640 177px,#ef633e 177.5px,#f67a49 178.5px,#fdb365 179.5px,#fcfec4 181px,#e5f5ee 181.5px,#c3e5f0 182px,#6196c5 183.5px,#3f63ab 185px,#4c7db8 186.5px,#7ab2d4 187.5px,#def2f8 189px,#feffc1 190px,#fff1aa 191px,#fefec1 193px,#e0f3f8 194.5px,#addaea 196px,#94c7df 197.5px,#a0d0e4 198.5px,#e4f5f0 200px,#fff3ac 201px,#fdae61 202.5px,#f98f53 204px,#fdb86b 205.5px,#fffcba 207.5px,#eaf7e6 209px,#eef8df 210.5px,#fffbb9 212px,#fed787 215px,#fee191 216px,#fffdbb 217.5px,#dbf1f7 219.5px,#d5eef5 220.5px,#e5f5ee 221.5px,#feffc0 222.5px,#fcaa5f 224.5px,#f67848 225.5px,#f0653f 226.5px,#f57547 228px,#fec87a 231px,#fecd7e 233px,#fca95f 234px,#f0653f 235px,#ce2827 236px,#a80326 237.5px,#b51026 238.5px,#dd3c2c 239.5px,#fdbc6e 241px,#fffcba 242px,#eaf7e6 242.5px,#cbe9f2 243px,#78b0d3 244.5px,#689fca 245.5px,#75aed2 246.5px,#d0ebf3 248.5px,#f2fad6 249.5px,#fff7b2 251px,#f8fccd 252px,#e2f4f4 252.5px,#b5deec 253px,#5c91c2 254px,#3e60aa 255px,#3f62ab 255.5px,#5386bd 256.5px,#8fc3dd 257.5px,#e1f4f5 258.5px,#fbfdc6 259px,#feea9f 259.5px,#fca95f 260.5px,#f46e44 261.5px,#ee603d 262.5px,#f67948 263.5px,#fdb365 264.5px,#fffdbc 266px,#ddf1f7 267px,#b6deec 268px,#addaea 269px,#d0ebf3 270px,#e9f6e8 270.5px,#fefec2 271px,#fed283 272px,#fcaa5f 273px,#fca65d 273.5px,#fed888 275px,#fbfec6 276px,#e6f5ed 276.5px,#9ccde2 278px,#93c6de 279.5px);-webkit-mask-image:linear-gradient(90deg,transparent,#000 50.0%);mask-image:linear-gradient(90deg,transparent,#000 50.0%)"></div>
<div class="a" style="left:306px;top:0;width:10px;height:100%;background:linear-gradient(#f6fbd0 0px,#ffffbe 1px,#fdbb6d 6px,#fdc678 7px,#fffcba 8.5px,#d2ecf4 9.5px,#abd9e9 10px,#4575b4 11.5px,#343f99 12.5px,#313695 13px,#313695 14px,#436fb1 15px,#649ac7 15.5px,#c7e7f1 16.5px,#f1f9d9 17px,#feefa6 17.5px,#fba05a 18.5px,#f67848 19px,#e85437 20px,#ee613e 21px,#fdb467 22.5px,#fffebd 24px,#e0f3f8 25px,#bce2ee 26.5px,#e2f4f4 28.5px,#fbfec6 29.5px,#fdc375 31.5px,#fa9957 33.5px,#fdb265 35.5px,#fffebe 39px,#e2f4f4 41.5px,#e6f5ec 43px,#feffc0 44px,#fdc678 45.5px,#fca45c 46.5px,#fba25c 47.5px,#fdb265 48px,#fffcbb 49.5px,#e6f5ec 50px,#b9e0ed 50.5px,#5689be 51.5px,#3b54a4 52px,#313695 52.5px,#313695 57px,#313795 57.5px,#5e93c3 58.5px,#bde2ee 59.5px,#eaf7e6 60px,#fff5b0 60.5px,#fa9857 61.5px,#cb2427 62.5px,#a50026 63px,#a50026 71px,#b40f26 71.5px,#ee613d 72.5px,#fdc475 73.5px,#fbfdc7 74.5px,#e0f3f8 75px,#b3ddeb 75.5px,#5c91c2 76.5px,#313695 77.5px,#313695 89px,#35439b 89.5px,#5689be 90.5px,#d3edf4 92.5px,#fdfec3 93.5px,#fcaa5f 95.5px,#f57145 96.5px,#d83328 98px,#b50f26 100.5px,#cf2827 103px,#f46e43 105px,#fee090 107.5px,#f9fdcb 109px,#e2f4f4 110px,#acd9e9 112px,#98c9e1 114px,#a6d5e7 115px,#e1f3f7 116.5px,#ffffc0 117.5px,#fed788 119px,#fec779 120px,#fee395 122px,#fffab7 123px,#dff2f8 124.5px,#b3ddeb 126px,#abd9e9 127px,#e1f3f6 130px,#fbfdc7 132px,#fefec2 133.5px,#e3f4f3 135.5px,#c0e3ef 137px,#bce1ee 138px,#e8f6e8 139px,#fffab7 139.5px,#fed485 140px,#e34a33 141px,#b71126 141.5px,#a50026 142px,#a50026 145px,#b20d26 145.5px,#d32d27 146px,#f67848 147px,#fdad61 148px,#fdb567 148.5px,#fa9c59 150px,#d62f27 152.5px,#cd2627 154px,#e65036 155px,#fca85e 156px,#fff3ae 157px,#eff9dd 157.5px,#cdeaf3 158px,#82b8d7 159px,#69a0ca 159.5px,#578bbf 160.5px,#78b1d3 162px,#d4edf4 163.5px,#fffebd 164.5px,#feca7c 166px,#fdbc6e 167px,#feda8a 168.5px,#fafdc9 170px,#e1f3f7 171px,#cae8f2 172px,#d3edf4 173px,#e5f5ef 173.5px,#fff2ab 174.5px,#f98e52 176px,#f46f44 176.5px,#ec5c3b 177.5px,#f47044 178.5px,#fba25b 179.5px,#fff1a9 181px,#e5f5ef 182px,#73abd0 184px,#5285bc 185.5px,#6aa1cb 187px,#e0f3f7 189px,#fffebe 190px,#feefa7 191.5px,#ffffbf 193px,#e0f3f8 194.5px,#9ccde3 196.5px,#8dc1dc 197.5px,#a1d1e5 199px,#e4f5f0 200.5px,#fff8b5 201.5px,#feda8a 202.5px,#fdbc6e 204px,#fed283 205.5px,#fdfec3 207.5px,#e8f6e9 209px,#edf8e1 210.5px,#fffcba 212px,#feda8a 214.5px,#fee496 216px,#feffc0 217.5px,#e3f4f3 219px,#d8eff6 220px,#e2f4f5 221px,#f7fcce 222px,#fee89c 223px,#fdb86a 224px,#f7844e 225px,#f26941 226px,#f57346 227.5px,#fecc7d 231px,#fed081 233px,#fdb163 234px,#dc3b2c 236px,#b81226 237.5px,#bf1927 238.5px,#df402e 239.5px,#fdb96c 241px,#fff9b5 242px,#edf8e0 242.5px,#d0ebf4 243px,#7ab1d3 244.5px,#669dc9 245.5px,#7fb6d6 247px,#dff3f8 249px,#ffffbf 250.5px,#fffdbc 251.5px,#e8f6ea 252.5px,#cae8f2 253px,#6095c5 254.5px,#4878b6 255.5px,#4b7cb8 256px,#6ca4cc 257px,#dbf0f6 258.5px,#f6fccf 259px,#feefa6 259.5px,#fdb063 260.5px,#f88d52 261px,#f26841 262px,#f46f44 263px,#fdb86a 264.5px,#fffebe 266px,#ddf1f7 267px,#aedaea 268.5px,#b8e0ed 269.5px,#d0ebf4 270px,#eaf7e5 270.5px,#fffebd 271px,#fecb7c 272px,#fca45c 273px,#fdc173 274.5px,#fafdc8 276px,#e6f5ed 276.5px,#9ecfe3 278px,#94c7df 279.5px);-webkit-mask-image:linear-gradient(90deg,transparent,#000 50.0%);mask-image:linear-gradient(90deg,transparent,#000 50.0%)"></div>
<div class="a" style="left:311px;top:0;width:10px;height:100%;background:linear-gradient(#f6fbd0 0px,#ffffbe 1px,#fdbb6d 6px,#fdc677 7px,#fffab8 8.5px,#d5eef5 9.5px,#afdbea 10px,#4878b6 11.5px,#343f99 12.5px,#313695 14px,#333d98 14.5px,#5588be 15.5px,#b3ddeb 16.5px,#e5f5ee 17px,#fff9b6 17.5px,#fdb062 18.5px,#f16640 19.5px,#e95739 20.5px,#f57246 21.5px,#fdaf62 22.5px,#fffab8 24px,#e3f4f3 25px,#bde2ee 26.5px,#e2f4f4 28.5px,#fcfec4 29.5px,#fdbd6f 31.5px,#fa9555 33px,#fa9656 34px,#fdb264 35.5px,#fffbb9 38.5px,#e0f3f8 40.5px,#c7e7f1 42.5px,#e5f5ef 44px,#fffbb9 45px,#fdc475 46.5px,#fdab60 47.5px,#fdb96c 48.5px,#feeca3 49.5px,#f7fccd 50px,#d5eef5 50.5px,#9fd0e4 51px,#436fb1 52px,#34409a 52.5px,#313695 53px,#313796 56px,#4c7db8 57px,#c4e5f0 58.5px,#ebf7e3 59px,#fff6b2 59.5px,#fca45c 60.5px,#d83328 61.5px,#b00b26 62px,#a50026 62.5px,#a50026 70.5px,#da372a 71.5px,#ef623e 72px,#fdbd6f 73px,#fffbb8 74px,#ebf7e4 74.5px,#c9e8f2 75px,#5386bd 76.5px,#313695 77.5px,#313695 89px,#35429b 89.5px,#5285bc 90.5px,#c9e8f1 92.5px,#e4f4f1 93px,#f5fbd1 93.5px,#fee89d 94.5px,#fca55d 96px,#e54e35 98px,#cc2627 100.5px,#d83328 102.5px,#f67a49 105px,#fede8e 107.5px,#fdfec3 109px,#dcf1f7 110.5px,#a8d6e8 112.5px,#93c5de 114.5px,#9dcee3 115.5px,#d5eef5 117px,#fffab8 118.5px,#fedf8f 120px,#fede8e 121px,#fffbb9 123px,#e2f4f3 124.5px,#afdbea 127px,#bde2ee 137.5px,#d4edf5 138.5px,#edf8e0 139px,#fff5b0 139.5px,#fecc7e 140px,#df402e 141px,#ad0826 141.5px,#a50026 142px,#a50026 145.5px,#bd1726 146px,#f16841 147px,#fca75e 148px,#fdb265 148.5px,#fa9b58 150px,#f46d43 151px,#d12a27 152.5px,#bd1726 153.5px,#c51e27 154.5px,#d73027 155px,#f7804c 156px,#fee192 157px,#ffffbe 157.5px,#e3f4f3 158px,#70a8cf 159.5px,#5587be 160.5px,#6da4cd 162px,#e4f5f0 164px,#fff3ac 165px,#fdc072 166.5px,#fdbb6d 167.5px,#fed081 168.5px,#fffebd 170px,#e6f5ed 171px,#cce9f2 172.5px,#e2f4f5 173.5px,#fffbb9 174.5px,#fca75e 176px,#f46d43 177px,#ee5f3d 178px,#f57346 179px,#fba15b 180px,#fffdbc 182px,#dbf1f7 183px,#91c4de 184.5px,#70a8cf 186px,#8ec2dc 187.5px,#e4f4f1 189px,#fffbb9 190px,#feeda4 191px,#ffffbf 193px,#def2f7 194.5px,#98cae1 196.5px,#85bad8 198px,#95c8e0 199px,#daf0f6 200.5px,#feffc1 201.5px,#fed485 203px,#fdc678 204px,#fedb8b 205.5px,#fffab7 207px,#e7f6ec 209px,#ecf8e3 210.5px,#fffab8 212px,#fed283 214.5px,#fee699 216.5px,#f9fdc9 218px,#e2f4f4 219.5px,#e5f5ef 221px,#f9fdca 222px,#fee79b 223px,#fb9e59 224.5px,#f57346 225.5px,#f16740 226.5px,#f67d4b 228px,#fecf80 231px,#fed283 233px,#fdb76a 234px,#dc3a2c 236.5px,#c62027 238px,#d52e27 239px,#f88b51 240.5px,#fedb8c 241.5px,#fff5b0 242px,#f1fad9 242.5px,#d6eef5 243px,#7cb3d4 244.5px,#659bc8 245.5px,#78b1d3 247px,#d8eff6 249px,#fbfdc6 250.5px,#fefec2 251.5px,#dbf0f6 253px,#83b9d8 254.5px,#5d92c3 256px,#6ea6cd 257px,#ceeaf3 258.5px,#eef9de 259px,#fff6b2 259.5px,#fdb96b 260.5px,#f67949 261.5px,#f0653f 262.5px,#f67b49 263.5px,#fdb264 264.5px,#fffbb9 266px,#e0f3f7 267px,#b8dfed 268px,#acdae9 269px,#e7f6ea 270.5px,#fdfec2 271px,#fed182 272px,#fdaa5f 273px,#fdc475 274.5px,#fbfdc6 276px,#e7f6ea 276.5px,#ceeaf3 277px,#a1d1e5 278px,#96c8e0 279.5px);-webkit-mask-image:linear-gradient(90deg,transparent,#000 50.0%);mask-image:linear-gradient(90deg,transparent,#000 50.0%)"></div>
<div class="a" style="left:316px;top:0;width:10px;height:100%;background:linear-gradient(#f6fbd0 0px,#ffffbe 1px,#fdbb6d 6px,#fdc577 7px,#fff9b6 8.5px,#d9f0f6 9.5px,#4b7cb8 11.5px,#34409a 12.5px,#313695 13px,#313695 14.5px,#4676b4 15.5px,#a0d1e4 16.5px,#d7eff6 17px,#fbfec6 17.5px,#fee496 18px,#fdb96b 18.5px,#f26841 19.5px,#e64f35 20.5px,#ef633f 21.5px,#fa9b58 22.5px,#fff0a8 24px,#fcfec5 24.5px,#dcf1f7 25.5px,#bfe3ef 27px,#dff3f8 28.5px,#fff6b1 30px,#fdae61 32px,#f99354 33px,#f99254 34px,#fdb264 35.5px,#fff9b6 38px,#e0f3f7 39.5px,#b0dbea 41px,#97c9e0 42.5px,#9dcee3 43.5px,#dff2f8 45px,#fff9b7 46px,#fed283 47px,#fca95f 48.5px,#fdba6c 49.5px,#fff8b5 51px,#d6eef5 52px,#568abf 54px,#3e60aa 55.5px,#4168ad 56.5px,#568abf 57.5px,#88bdda 58.5px,#d0ebf4 59.5px,#eff9dd 60px,#fff6b2 60.5px,#feda8a 61px,#f67949 62px,#e24732 62.5px,#a50026 63.5px,#a50026 70.5px,#d12a27 71.5px,#f16740 72.5px,#fecd7e 74px,#fffab7 75px,#dcf1f7 76px,#9bcce2 77px,#4472b3 78.5px,#313695 79.5px,#313695 91.5px,#436fb1 92.5px,#8fc3dd 94px,#cae8f2 95px,#e4f4f1 95.5px,#fffab7 96.5px,#fdad60 98.5px,#ea5839 100.5px,#d52e27 103px,#e54d34 105.5px,#fdad60 108px,#fffcbb 110.5px,#e0f3f8 112px,#a8d6e7 114px,#94c7df 115.5px,#dcf1f7 120.5px,#daf0f6 122.5px,#b5deec 126.5px,#b5deec 129.5px,#c0e3ef 137.5px,#daf0f6 138.5px,#f2fad8 139px,#fff0a9 139.5px,#fdc577 140px,#f7804c 140.5px,#da372a 141px,#a50026 141.5px,#a60126 146px,#eb5a3a 147px,#fba35c 148px,#fdb164 148.5px,#fa9957 150px,#f26841 151px,#d83228 152px,#b40e26 153px,#a50026 154.5px,#c61f27 155.5px,#e14430 156px,#fdb568 157px,#fee699 157.5px,#f8fccc 158px,#d5edf5 158.5px,#7db4d5 159.5px,#5588be 160.5px,#5284bc 161px,#78b0d3 162.5px,#d9f0f6 164px,#fff9b6 165px,#fdc072 166.5px,#fdb466 168px,#fece7f 169px,#ffffbf 170.5px,#e5f5ef 171.5px,#d1ecf4 172.5px,#d8eff6 173.5px,#e5f5ef 174px,#fffab8 175px,#fdb164 176.5px,#f67a49 177.5px,#f16640 178.5px,#f57446 179.5px,#fa9c59 180.5px,#fff7b3 182.5px,#e5f5ef 183.5px,#ceeaf3 184px,#94c6df 185.5px,#86bbd9 186.5px,#99cbe1 187.5px,#cfeaf3 188.5px,#e8f6e9 189px,#f9fdc9 189.5px,#feeba1 191px,#feffc0 193px,#dcf1f7 194.5px,#96c8e0 196.5px,#81b8d7 198px,#93c5de 199px,#def2f7 200.5px,#fffbb9 201.5px,#feda8a 202.5px,#fdbe70 204px,#fecb7c 205px,#fffab7 207px,#e7f6eb 209px,#e8f6e9 210px,#fdfec2 211.5px,#fed687 213.5px,#fdc274 215px,#fed888 216.5px,#fffab8 218px,#e6f5ed 220px,#e8f6e8 221px,#f9fdca 222px,#feeaa0 223px,#fca75e 224.5px,#f36a42 226px,#f26a42 227.5px,#fdc375 230.5px,#fed98a 232.5px,#fdac60 234.5px,#df402e 237px,#d62f27 238.5px,#e44c34 239.5px,#f88b51 240.5px,#fed989 241.5px,#f3fbd4 242.5px,#daf0f6 243px,#7eb5d5 244.5px,#649ac7 246px,#75aed2 247px,#d2ecf4 249px,#f7fccd 250.5px,#fafdc8 251.5px,#e2f4f5 253px,#89beda 255px,#6da5cd 256.5px,#84bad8 257.5px,#e5f5ee 259px,#feffc0 259.5px,#fba05b 261px,#f16740 262px,#ed5e3c 262.5px,#f46c43 263.5px,#fba15b 264.5px,#fff5af 266px,#e4f4f1 267px,#b9e0ed 268px,#acd9e9 269px,#b4ddec 269.5px,#e3f4f3 270.5px,#f7fcce 271px,#fedf8f 272px,#fdb265 273.5px,#fdc678 274.5px,#fdfec3 276px,#eaf7e6 276.5px,#d2ecf4 277px,#a4d4e6 278px,#98cae1 279.5px);-webkit-mask-image:linear-gradient(90deg,transparent,#000 50.0%);mask-image:linear-gradient(90deg,transparent,#000 50.0%)"></div>
<div class="a" style="left:321px;top:0;width:10px;height:100%;background:linear-gradient(#f6fbd0 0px,#ffffbe 1px,#fdbb6d 6px,#fed585 7.5px,#fff7b4 8.5px,#ddf1f7 9.5px,#90c4dd 10.5px,#4e80ba 11.5px,#35419b 12.5px,#313695 13px,#333d98 15px,#4064ac 15.5px,#5e93c4 16px,#c9e8f1 17px,#f5fbd2 17.5px,#fee89c 18px,#f7854e 19px,#eb593a 19.5px,#d52e27 20.5px,#db392b 21.5px,#f99053 23px,#feda8b 24px,#f9fdca 25px,#d7eff5 26px,#c2e4ef 27px,#e4f5f0 29px,#fdfec3 30px,#fdaf62 32.5px,#f99355 34px,#fdb96b 36px,#fffbb9 38px,#e4f5f1 39px,#cdeaf3 39.5px,#79b1d3 41.5px,#6399c7 43px,#70a8ce 44px,#c3e5f0 45.5px,#e5f5ee 46px,#fcfec4 46.5px,#fdb567 48px,#f8884f 49px,#f7814c 50px,#fdb76a 52px,#fffab8 54px,#e7f6eb 55px,#d4edf5 55.5px,#83b9d8 57.5px,#6297c6 59.5px,#7eb5d6 61.5px,#e3f4f2 63.5px,#fff5b0 64.5px,#fdad61 66px,#f0643f 67.5px,#e65036 68.5px,#f26941 69.5px,#fa9555 70px,#fdc778 70.5px,#fffbb9 71px,#d4edf5 71.5px,#c7e7f1 72px,#f4fbd4 72.5px,#fffebe 73.5px,#fffebd 74.5px,#e1f3f6 77px,#d2ecf4 77.5px,#9dcee3 79px,#436fb1 81.5px,#313695 83px,#313695 95.5px,#4370b1 96.5px,#9dcee3 98px,#e0f3f8 99px,#f4fbd4 99.5px,#fee598 100.5px,#fdb163 101.5px,#f57245 102.5px,#d52e27 104px,#b00b26 106.5px,#c51f27 108.5px,#ee613e 110.5px,#fdae61 112px,#feda8a 113px,#f9fdc9 114.5px,#e1f3f6 115.5px,#98cae1 118px,#81b7d7 120.5px,#abd9e9 127px,#c4e5f0 137.5px,#e1f3f6 138.5px,#f6fccf 139px,#feeba1 139.5px,#fdbd6f 140px,#f57547 140.5px,#d42d27 141px,#a50026 141.5px,#a50026 146px,#c82127 146.5px,#e95739 147px,#fcaa5f 148px,#fdb668 148.5px,#fdab60 149.5px,#f06540 151px,#d32c27 152px,#a70226 153px,#a50026 155.5px,#bb1526 156px,#f67c4a 157px,#feefa6 158px,#edf8e1 158.5px,#bfe3ef 159px,#6ba3cc 160px,#4f81ba 161px,#6ea6cd 162.5px,#cae8f2 164px,#e8f6e9 164.5px,#fdfec2 165px,#fdc274 166.5px,#fca55d 168px,#fdba6d 169px,#fdfec2 171px,#e4f4f1 172px,#d3edf4 173px,#def2f7 174px,#fffab7 175.5px,#fb9f5a 177.5px,#f46f44 179px,#f67848 180px,#fba25b 181px,#fcfec4 183px,#e9f7e7 183.5px,#d1ecf4 184px,#8cc0dc 185.5px,#7eb5d5 186.5px,#98c9e1 187.5px,#d4edf5 188.5px,#feffc0 189.5px,#fee99e 191px,#feffc1 193px,#dcf1f7 194.5px,#a7d6e7 196px,#8bbfdb 197.5px,#91c4dd 198.5px,#d1ecf4 200px,#e9f7e7 200.5px,#fcfec5 201px,#fecb7c 202.5px,#fdb568 203.5px,#fdc677 205px,#fff9b6 207px,#ebf7e4 209px,#eff9dd 210px,#fff9b6 211.5px,#feca7b 213.5px,#fdb365 215px,#fdc576 216.5px,#fffab8 218.5px,#edf8e1 220px,#edf8e1 221px,#fafdc8 222px,#fede8e 223.5px,#fdb063 224.5px,#f67f4b 225.5px,#ef633f 226.5px,#f36a42 228px,#fdbd6f 230.5px,#fed889 232.5px,#fdc274 234px,#e95538 237px,#de3f2e 238.5px,#e85337 239.5px,#fdb467 241px,#fff2ac 242px,#dbf1f7 243px,#7fb6d6 244.5px,#689fca 246px,#7bb2d4 247px,#d2ecf4 249px,#f4fbd2 250.5px,#f7fcce 251.5px,#e2f4f5 253px,#7fb6d6 255.5px,#70a8ce 256.5px,#7eb5d5 257.5px,#dcf1f7 259px,#f6fcd0 259.5px,#feefa6 260px,#fdab60 261px,#f26841 262px,#e95638 263px,#f57245 264px,#fdb567 265px,#fff0a8 266px,#f9fdcb 266.5px,#e5f5ef 267px,#acd9e9 268.5px,#b2dceb 269.5px,#def2f7 270.5px,#fffab7 271.5px,#fed484 272.5px,#fdbc6e 273.5px,#feca7b 274.5px,#feffc0 276px,#d5eef5 277px,#a7d6e7 278px,#99cbe1 279.5px);-webkit-mask-image:linear-gradient(90deg,transparent,#000 50.0%);mask-image:linear-gradient(90deg,transparent,#000 50.0%)"></div>
<div class="a" style="left:326px;top:0;width:10px;height:100%;background:linear-gradient(#f6fbd0 0px,#ffffbe 1px,#fdbb6d 6px,#fdc576 7px,#fff6b2 8.5px,#e0f3f8 9.5px,#94c7df 10.5px,#5183bb 11.5px,#35439b 12.5px,#313695 13px,#313695 15px,#3a52a3 15.5px,#4f81ba 16px,#b9e0ed 17px,#edf8e1 17.5px,#feeda4 18px,#f7824d 19px,#cf2927 20px,#b40e26 21px,#c62027 22px,#eb5a3a 23px,#fedb8b 24.5px,#f6fbd0 25.5px,#e5f5f0 26px,#c7e7f1 27px,#ddf2f7 29px,#ffffbf 30.5px,#fdb467 33px,#fa9757 34.5px,#fdaf62 36px,#fffab8 38px,#dcf1f7 39px,#7cb3d5 40.5px,#5082bb 41.5px,#3e60aa 42.5px,#3c5aa7 43.5px,#4a7bb7 44.5px,#6298c6 45px,#d7eef5 46.5px,#f5fbd2 47px,#feefa7 47.5px,#fdae61 48.5px,#f36b42 49.5px,#e75136 51px,#f46c43 52.5px,#fcaa5f 54px,#fff8b4 56px,#e7f6eb 57px,#d2ecf4 57.5px,#73abd0 59.5px,#4979b6 61px,#3f63ab 62.5px,#3e60aa 66px,#313695 71px,#313695 72px,#426baf 72.5px,#6ba3cc 73px,#aedaea 73.5px,#e9f6e8 74px,#fff3ad 74.5px,#f99154 75.5px,#d62f27 76.5px,#a50026 77.5px,#b00a26 81.5px,#da362a 82.5px,#fba15b 84px,#fffab7 85.5px,#d1ecf4 86.5px,#abd9e9 87px,#426cb0 88.5px,#35429b 89px,#313695 89.5px,#313695 99px,#37499e 99.5px,#4575b4 100px,#8fc2dd 101px,#e1f3f6 102px,#f9fdca 102.5px,#fecf80 103.5px,#f67b49 104.5px,#d32c27 105.5px,#a50026 106.5px,#a50026 113.5px,#cc2627 114.5px,#f46d43 115.5px,#fedd8e 117px,#f8fccb 118px,#e6f5ed 118.5px,#cde9f3 119px,#71aacf 121px,#5c91c2 122px,#5285bc 123.5px,#69a0ca 127.5px,#addae9 133px,#d1ecf4 138px,#e6f5ed 138.5px,#fdfec3 139px,#fee496 139.5px,#fdaf62 140px,#ef633e 140.5px,#c41e27 141px,#a50026 141.5px,#a50026 146px,#ce2727 146.5px,#ee613e 147px,#fdb365 148px,#fdbb6d 148.5px,#fdaf62 149.5px,#f46c43 151px,#da362a 152px,#a60126 153.5px,#aa0426 155.5px,#e24832 156.5px,#f7814c 157px,#feeda4 158px,#f0f9db 158.5px,#c5e6f0 159px,#70a8cf 160px,#4e80ba 161px,#659bc8 162.5px,#dff3f8 164.5px,#fff4ae 165.5px,#fdb265 167px,#fa9b58 168.5px,#fdb86a 169.5px,#fbfec6 171.5px,#e3f4f3 172.5px,#d6eef5 173.5px,#e2f4f4 174.5px,#fffab7 176px,#fdab60 178px,#f7824d 179px,#f57647 180px,#f98e52 181px,#fcaa5f 181.5px,#fffbba 183px,#ecf8e2 183.5px,#cfebf3 184px,#7eb5d5 185.5px,#72abd0 186.5px,#95c8e0 187.5px,#daf0f6 188.5px,#fffab8 189.5px,#feeda4 190px,#fee89c 191px,#fefec2 193px,#dcf1f7 194.5px,#abd9e9 196px,#94c7df 197.5px,#9fcfe4 198.5px,#e3f4f3 200px,#fff6b2 201px,#fecf80 202px,#fdab5f 203.5px,#fdc173 205px,#fff8b4 207px,#f2fad7 208.5px,#f2fad6 209.5px,#fffab7 211px,#fdbd6f 213.5px,#fba15b 215px,#fdb265 216.5px,#fffbb9 219px,#f4fbd4 220px,#f1fad8 221px,#fcfec5 222px,#fee191 223.5px,#fb9d59 225px,#f57245 226px,#ed5d3c 227px,#f36b42 228.5px,#fdc274 231px,#fed687 232.5px,#fdc677 234px,#ef633f 237px,#e14430 239px,#ec5c3b 240px,#fba05a 241px,#fee99d 242px,#fcfec4 242.5px,#e3f4f2 243px,#83b9d7 244.5px,#6ca3cc 245.5px,#85bad8 247px,#def2f7 249px,#fafdc7 250.5px,#fcfec5 251.5px,#d5edf5 253.5px,#84b9d8 255.5px,#71a9cf 256.5px,#79b1d3 257.5px,#ceeaf3 259px,#eef8df 259.5px,#fff7b3 260px,#fdb668 261px,#f88d52 261.5px,#f36c42 262px,#e54e35 263px,#ef633e 264px,#fca65e 265px,#feeba1 266px,#fcfec5 266.5px,#e6f5ed 267px,#a9d7e8 268.5px,#b0dbea 269.5px,#d9eff6 270.5px,#feffc1 271.5px,#fee091 272.5px,#fdc677 274px,#fede8f 275px,#fffebe 276px,#d9f0f6 277px,#9ecfe3 278.5px,#9bcce2 279.5px);-webkit-mask-image:linear-gradient(90deg,transparent,#000 50.0%);mask-image:linear-gradient(90deg,transparent,#000 50.0%)"></div>
<div class="a" style="left:331px;top:0;width:10px;height:100%;background:linear-gradient(#f6fbd0 0px,#ffffbe 1px,#fdbb6d 6px,#fdc476 7px,#fff6b1 8.5px,#e1f3f6 9.5px,#97c9e0 10.5px,#3f64ab 12px,#313695 13px,#313695 15px,#37489e 15.5px,#4777b5 16px,#aedaea 17px,#e7f6eb 17.5px,#fff2ab 18px,#fdc273 18.5px,#e14531 19.5px,#a60126 20.5px,#a50026 21px,#b10b26 22.5px,#e54e35 23.5px,#fedf8f 25px,#fff8b4 25.5px,#f1fad8 26px,#e1f3f7 26.5px,#c7e7f1 27.5px,#e2f4f5 29.5px,#fffdbc 31px,#fdb86a 33.5px,#fb9c59 35px,#fdb365 36.5px,#fff3ad 38px,#dcf1f7 39px,#b3ddeb 39.5px,#4576b4 41px,#313695 42px,#313695 44.5px,#4575b4 45.5px,#c2e4ef 47px,#ebf7e5 47.5px,#fff7b3 48px,#fdb366 49px,#f8874f 49.5px,#e34933 50.5px,#d93329 51.5px,#ea5839 53.5px,#fca55d 55px,#fedd8d 56px,#fbfec6 57px,#e8f6e9 57.5px,#cdeaf3 58px,#598cc0 60px,#36469d 61.5px,#313695 62px,#313695 74px,#3c59a6 74.5px,#6095c5 75px,#d8eff6 76px,#fffdbc 76.5px,#fed283 77px,#e24832 78px,#b50f26 78.5px,#a50026 79px,#a50026 85.5px,#bc1626 86px,#f7844e 87px,#feeda4 88px,#f0f9db 88.5px,#c3e5f0 89px,#588bbf 90px,#3a51a2 90.5px,#313695 91px,#313695 100px,#374a9f 100.5px,#4879b6 101px,#c6e6f1 102.5px,#ebf7e4 103px,#fff9b6 103.5px,#fede8e 104px,#e75136 105.5px,#a90426 106.5px,#a50026 107px,#ac0726 116px,#eb593a 117px,#fdbd6f 118px,#fffdbc 119px,#e9f6e8 119.5px,#c7e7f1 120px,#7cb3d5 121px,#4676b4 122px,#35419b 123px,#313695 123.5px,#323996 128px,#436fb1 130px,#a3d3e5 134px,#d5eef5 138px,#eaf7e6 138.5px,#fffbba 139px,#feda8a 139.5px,#e54d34 140.5px,#b10c26 141px,#a50026 141.5px,#a90426 146px,#dc3a2c 146.5px,#fca45c 147.5px,#fdbf71 148.5px,#fca65d 150px,#d62f27 153px,#c61f27 154px,#cb2527 155px,#da372a 155.5px,#f7824c 156.5px,#fee090 157.5px,#fffdbc 158px,#e5f5f0 158.5px,#6fa8ce 160px,#5a8ec1 160.5px,#4b7cb8 161.5px,#70a9cf 163px,#d3edf4 164.5px,#fff9b6 165.5px,#fdb265 167px,#f99053 168px,#f99455 169px,#fdba6c 170px,#fff8b5 171.5px,#e1f3f7 173px,#dff2f8 174.5px,#fff6b1 176.5px,#fdad61 178.5px,#f88950 179.5px,#f67f4b 180.5px,#fba15b 181.5px,#fffab7 183px,#ebf7e4 183.5px,#c8e7f1 184px,#83b9d8 185px,#669cc8 186px,#77b0d3 187px,#e0f3f8 188.5px,#fff6b1 189.5px,#feea9f 190px,#fee79a 191px,#feffc1 193px,#def2f8 194.5px,#b1dceb 196px,#9ecee3 197.5px,#aedbea 198.5px,#dcf1f7 199.5px,#fffcba 200.5px,#fdbc6e 202px,#fb9f5a 203px,#fdb063 204.5px,#fff6b2 207px,#f6fccf 208.5px,#fff9b6 210.5px,#fdb163 213.5px,#f98e52 215.5px,#fdb063 217px,#fffebd 219.5px,#f5fbd2 220.5px,#fdfec3 222px,#fee395 223.5px,#fca65d 225px,#ee603d 227px,#f0653f 228.5px,#fdbc6e 231px,#fed383 233px,#fdb265 235px,#e75236 238px,#de3f2e 239.5px,#e95638 240.5px,#fba35c 241.5px,#fff2ab 242.5px,#f0f9db 243px,#ceeaf3 243.5px,#88bdda 244.5px,#70a8ce 245.5px,#7fb6d6 246.5px,#dbf1f7 248.5px,#fffdbc 250px,#fff8b5 251.5px,#dff3f8 253.5px,#89beda 255.5px,#6fa7ce 257px,#85bbd9 258px,#c3e5f0 259px,#e6f6ec 259.5px,#fffebe 260px,#fa9656 261.5px,#ea5839 262.5px,#e44b33 263.5px,#ea593a 264px,#fa9b58 265px,#fee89c 266px,#fdfec2 266.5px,#e6f5ec 267px,#b3ddeb 268px,#a5d4e6 269px,#d4edf5 270.5px,#f9fdc9 271.5px,#fed989 273px,#fecc7d 274px,#fee090 275px,#fffebd 276px,#dbf1f7 277px,#a0d0e4 278.5px,#9ccde2 279.5px);-webkit-mask-image:linear-gradient(90deg,transparent,#000 50.0%);mask-image:linear-gradient(90deg,transparent,#000 50.0%)"></div>
<div class="a" style="left:336px;top:0;width:10px;height:100%;background:linear-gradient(#f6fbd0 0px,#ffffbe 1px,#fdbb6d 6px,#fdc576 7px,#fff6b2 8.5px,#e0f3f8 9.5px,#95c7df 10.5px,#5284bc 11.5px,#36459c 12.5px,#313695 13px,#313695 15px,#3b55a4 15.5px,#5183bb 16px,#b8e0ed 17px,#ecf8e1 17.5px,#feeda4 18px,#f67949 19px,#de3e2d 19.5px,#bb1526 20px,#a50026 20.5px,#a50026 22.5px,#b81226 23px,#ef623e 24px,#fec879 25px,#fdfec4 26px,#d9f0f6 27px,#cae8f2 28px,#ddf2f7 29.5px,#fffbb9 31.5px,#fdb163 34.5px,#fb9f5a 36px,#fdb668 37px,#fffdbb 38.5px,#e8f6e9 39px,#c0e3ef 39.5px,#426db0 41px,#35429b 41.5px,#313695 42px,#313695 45px,#36479d 45.5px,#436fb1 46px,#8cc0db 47px,#e4f5f1 48px,#feffc1 48.5px,#fba25b 50px,#ef623e 51px,#e24731 52px,#e44b33 53px,#f26841 54px,#fb9e59 55px,#fff0a8 56.5px,#f9fdca 57px,#e3f4f2 57.5px,#9bcce2 58.5px,#578bbf 59.5px,#37479e 60.5px,#313695 61px,#313695 74px,#3d5ca8 74.5px,#699fca 75px,#abd9e9 75.5px,#e9f6e7 76px,#feeca2 76.5px,#fdb164 77px,#ee603d 77.5px,#c21c27 78px,#a50026 78.5px,#a50026 85px,#b81226 85.5px,#f8874f 86.5px,#fff2ab 87.5px,#eaf7e6 88px,#b6dfec 88.5px,#497ab7 89.5px,#333d98 90px,#313695 99px,#333c98 99.5px,#426baf 100px,#b9e0ed 101.5px,#e4f4f1 102px,#feffc1 102.5px,#fdbf71 103.5px,#ec5d3b 104.5px,#b10c26 105.5px,#a50026 106px,#a50026 115px,#b10c26 115.5px,#ec5c3b 116.5px,#fdbe70 117.5px,#fffdbd 118.5px,#e8f6ea 119px,#c4e5f0 119.5px,#5386bd 121px,#333d98 122px,#313695 122.5px,#313695 130px,#35449c 130.5px,#71aacf 133px,#bfe3ef 136px,#d3edf4 138px,#e9f6e8 138.5px,#fffcba 139px,#fed888 139.5px,#f99455 140px,#df422f 140.5px,#a50026 141px,#a50026 145.5px,#bc1626 146px,#e64f35 146.5px,#f88850 147px,#fdb164 147.5px,#fdc274 148px,#fdb063 150px,#e85337 153.5px,#ed5e3c 155px,#fdb86b 156.5px,#fff5af 157.5px,#f1fad8 158px,#d4edf5 158.5px,#6da5cd 160px,#497ab7 161.5px,#6ba2cb 163px,#d2ecf4 164.5px,#fff7b3 165.5px,#fca85e 167px,#f99053 167.5px,#f7814c 168.5px,#fdb467 170px,#fff6b1 171.5px,#e2f4f5 173px,#dff2f8 174.5px,#fbfec6 176px,#fdaf62 178.5px,#f99254 179.5px,#f99355 180.5px,#fca65d 181px,#fff6b1 182.5px,#d1ecf4 183.5px,#6da5cd 185px,#5a8ec1 186px,#72abd0 187px,#def2f8 188.5px,#fff6b2 189.5px,#fee597 191px,#fffdbc 193px,#e2f4f5 194.5px,#a9d7e8 197px,#afdbea 198px,#d7eff6 199px,#ffffbe 200px,#fdb86b 201.5px,#f99053 202.5px,#f98e52 203.5px,#fca95f 204.5px,#fff5b0 207px,#fdfec2 209px,#fee090 211.5px,#fca65d 213.5px,#f7854e 215.5px,#fca95f 217px,#fff4ae 219px,#f2fad6 220.5px,#fffdbc 222.5px,#fdb062 225px,#f26941 227px,#f46c43 228.5px,#fdba6c 231px,#fed182 233px,#fdb669 235px,#ea583a 238px,#dc3a2b 240px,#e65136 241px,#fdad60 242px,#feffc0 243px,#dff2f8 243.5px,#8dc1dc 244.5px,#75add1 245.5px,#8abfdb 246.5px,#d5eef5 248px,#f9fdca 249px,#feeba1 250.5px,#ffffbf 252.5px,#e6f5ee 253.5px,#d1ecf4 254px,#8ec2dc 255.5px,#6fa8ce 257px,#80b7d6 258px,#e3f4f3 259.5px,#fdfec3 260px,#fee79a 260.5px,#fa9857 261.5px,#ea583a 262.5px,#e54c34 263px,#ed5d3c 264px,#fba35c 265px,#feeca2 266px,#f9fdc9 266.5px,#e3f4f3 267px,#aedbea 268px,#a3d3e6 269px,#d3edf4 270.5px,#f9fdcb 271.5px,#fedb8b 273px,#fecd7e 274px,#fee191 275px,#fffebd 276px,#dbf0f7 277px,#9fcfe4 278.5px,#9bcce2 279.5px);-webkit-mask-image:linear-gradient(90deg,transparent,#000 50.0%);mask-image:linear-gradient(90deg,transparent,#000 50.0%)"></div>
<div class="a" style="left:341px;top:0;width:10px;height:100%;background:linear-gradient(#f6fbd0 0px,#ffffbe 1px,#fdbb6d 6px,#fdc577 7px,#fff7b3 8.5px,#ddf2f7 9.5px,#91c5de 10.5px,#5082bb 11.5px,#36459c 12.5px,#313695 13px,#313695 14.5px,#35429b 15px,#4168ad 15.5px,#6095c5 16px,#c9e8f1 17px,#f5fbd2 17.5px,#fee79b 18px,#f67a49 19px,#c92227 20px,#a80326 21px,#b10c26 22px,#d83128 23px,#f67b49 24px,#fecc7d 25px,#fffbb9 26px,#def2f7 27.5px,#e3f4f3 29.5px,#fffcbb 31.5px,#fdc476 34px,#fca75e 36px,#fdb467 37px,#fff5b0 38.5px,#d5edf5 39.5px,#7eb5d6 40.5px,#426baf 41.5px,#313796 42.5px,#313695 43px,#313695 44px,#4471b2 45.5px,#73acd0 46.5px,#daf0f6 48px,#fff8b5 49px,#fdb164 50.5px,#f67f4b 51.5px,#f0643f 52.5px,#f46e43 54px,#fa9756 55px,#fffcba 57px,#d1ebf4 58px,#abd9e9 58.5px,#497ab6 60px,#333d99 61px,#343f99 73.5px,#4f81ba 74px,#d0ebf4 75px,#fffebd 75.5px,#fecc7d 76px,#f67d4a 76.5px,#d52e27 77px,#a50026 77.5px,#af0a26 84.5px,#dc3b2c 85px,#f67b49 85.5px,#feeca3 86.5px,#eff9dd 87px,#bee3ee 87.5px,#5082bb 88.5px,#36459c 89px,#313695 89.5px,#313695 98px,#323997 98.5px,#4168ae 99px,#8abedb 100px,#e2f4f4 101px,#fdfec3 101.5px,#fdc173 102.5px,#ed5e3c 103.5px,#b20d26 104.5px,#a50026 105px,#a50026 114px,#b81226 114.5px,#f16740 115.5px,#feca7b 116.5px,#f7fccd 117.5px,#dcf1f7 118px,#5f94c4 119.5px,#34419a 120.5px,#313695 121px,#313695 128.5px,#3f63ab 129.5px,#78b0d3 131px,#b0dbea 132.5px,#cfebf3 134.5px,#d0ebf3 138px,#e6f5ed 138.5px,#fffebe 139px,#fed889 139.5px,#f99053 140px,#db382b 140.5px,#a50026 141px,#a50026 145.5px,#ce2727 146px,#f0643f 146.5px,#fa9b58 147px,#fdbc6e 147.5px,#fec87a 148px,#fdb668 150px,#f57245 153px,#f57547 154.5px,#fdba6c 156px,#fafdc8 157.5px,#e4f5f0 158px,#c3e5f0 158.5px,#6ba2cb 160px,#4d7fb9 161.5px,#73abd0 163px,#dff2f8 164.5px,#f8fccc 165px,#feeea6 165.5px,#fdb467 166.5px,#f57547 168px,#f7814c 169px,#fdb164 170px,#fff6b1 171.5px,#e2f4f5 173px,#dff3f8 174.5px,#feffc1 176px,#fdbe70 178px,#fba25c 179px,#fba35c 180px,#fdb365 180.5px,#fff9b6 182px,#eef8df 182.5px,#cfebf3 183px,#6ba2cb 184.5px,#5386bd 185.5px,#5588be 186px,#75aed2 187px,#e1f3f7 188.5px,#fff7b2 189.5px,#fee394 191px,#fffbb8 193px,#e4f5f0 194.5px,#b0dcea 197px,#d2ecf4 198.5px,#e8f6e9 199px,#fcfec5 199.5px,#fdb668 201px,#f7814c 202px,#f57748 202.5px,#f7804c 203.5px,#fca35c 204.5px,#fedf8f 206px,#fff9b6 207.5px,#fffab7 209px,#fee99e 210.5px,#fcaa5f 213px,#f67d4a 215.5px,#fca45c 217px,#fff5b0 219px,#eff9dd 220.5px,#f0f9da 221.5px,#fdfec2 222.5px,#fedf90 224px,#fca35c 225.5px,#f57547 227px,#f57748 228.5px,#fdc374 231.5px,#fecd7e 233.5px,#fcaa5f 235.5px,#e54c34 238.5px,#db392b 240px,#e75136 241px,#fdaf62 242px,#fee192 242.5px,#fcfec5 243px,#dbf0f6 243.5px,#8cc0db 244.5px,#7bb2d4 245.5px,#97c9e0 246.5px,#cce9f2 247.5px,#e6f5ed 248px,#f7fccd 248.5px,#feeba0 249.5px,#fedf8f 250.5px,#fffab7 252.5px,#e8f6ea 253.5px,#d2ecf4 254px,#8bbfdb 255.5px,#6ea6cd 257px,#83b9d8 258px,#c2e4f0 259px,#e7f6ec 259.5px,#fffdbc 260px,#f99355 261.5px,#f46f44 262px,#e64f35 263px,#f0653f 264px,#fdae61 265px,#fff1aa 266px,#def2f7 267px,#aad8e9 268px,#a1d1e5 269px,#d3edf4 270.5px,#f9fdca 271.5px,#feda8b 273px,#fecd7e 274px,#fee191 275px,#fffebe 276px,#daf0f6 277px,#aad8e9 278px,#99cbe1 279.5px);-webkit-mask-image:linear-gradient(90deg,transparent,#000 50.0%);mask-image:linear-gradient(90deg,transparent,#000 50.0%)"></div>
<div class="a" style="left:346px;top:0;width:10px;height:100%;background:linear-gradient(#f6fbd0 0px,#ffffbe 1px,#fdbb6d 6px,#fdc577 7px,#fff8b5 8.5px,#daf0f6 9.5px,#8ec2dc 10.5px,#4e7fb9 11.5px,#313695 13px,#313796 14.5px,#497ab7 15.5px,#d7eef5 17px,#fbfdc7 17.5px,#fee395 18px,#f7824d 19px,#db392b 20px,#ce2727 21px,#da3529 22px,#f57848 23.5px,#fecf80 25px,#ffffbf 26.5px,#eef8de 27.5px,#ebf7e4 29px,#ffffbf 31px,#fdc778 34px,#fdb264 36px,#fdbf71 37px,#fff7b2 38.5px,#def2f8 39.5px,#6297c6 41.5px,#4472b3 43px,#4a7bb7 44px,#6ca4cc 45.5px,#e0f3f8 48px,#ffffbf 49px,#fcaa5f 51.5px,#f77f4c 53.5px,#f88950 54.5px,#fdae61 55.5px,#fff0a9 57px,#fafdc8 57.5px,#e6f5ec 58px,#c8e7f1 58.5px,#69a0ca 60px,#436fb1 61px,#3a51a2 62px,#313695 65px,#313695 72.5px,#4168ae 73px,#70a8ce 73.5px,#b3ddeb 74px,#eff9dd 74.5px,#fee496 75px,#fb9e5a 75.5px,#e34932 76px,#ac0726 76.5px,#a50026 77px,#a50026 83px,#b61026 83.5px,#e14430 84px,#f7864e 84.5px,#fff2ac 85.5px,#e9f6e8 86px,#b4ddec 86.5px,#4677b5 87.5px,#323996 88px,#313695 97px,#35449c 97.5px,#4473b3 98px,#c0e3ef 99.5px,#e8f6ea 100px,#fffcbb 100.5px,#fdb96c 101.5px,#e95639 102.5px,#ad0826 103.5px,#a50026 104px,#a50026 113px,#c21c27 113.5px,#f67848 114.5px,#feda8a 115.5px,#fff7b3 116px,#ebf7e3 116.5px,#c6e6f1 117px,#4777b5 118.5px,#37499e 119px,#313695 119.5px,#313695 126.5px,#3d5ba7 127px,#6196c5 127.5px,#ceeaf3 128.5px,#f5fbd2 129px,#feeda3 129.5px,#fca55d 130.5px,#f16841 131.5px,#ea593a 132.5px,#ef633e 133px,#fa9958 134px,#fff5af 135.5px,#e6f5ee 136.5px,#cbe9f2 137.5px,#e3f4f3 138.5px,#fdfec3 139px,#fedb8b 139.5px,#f98e52 140px,#d83128 140.5px,#a50026 141px,#a70226 145.5px,#dc3a2c 146px,#fdad60 147px,#fed182 148px,#fdc476 149.5px,#f67e4b 152.5px,#f57647 153.5px,#f7864f 154.5px,#fdb467 155.5px,#fffbb9 157px,#d7eef5 158px,#7db4d5 159.5px,#578abf 161px,#6ea6ce 162.5px,#cfebf3 164px,#eef8df 164.5px,#fff8b5 165px,#fba05b 166.5px,#f47044 167.5px,#f26941 168px,#f67a49 169px,#fdae61 170px,#fff5b0 171.5px,#e2f4f5 173px,#e0f3f8 174.5px,#fffdbd 176px,#fecd7e 177.5px,#fdae61 179px,#fdbe70 180px,#fffebe 181.5px,#e9f7e7 182px,#c9e8f1 182.5px,#679dc9 184px,#4d7fb9 185px,#4e7fb9 185.5px,#679ec9 186.5px,#c5e6f0 188px,#e5f5ef 188.5px,#fff6b1 189.5px,#fee394 190.5px,#fee395 191.5px,#fcfec5 193.5px,#daf0f6 195px,#b6dfec 197px,#e3f4f2 198.5px,#fff2ab 199.5px,#fdb668 200.5px,#f57547 201.5px,#ef633f 202.5px,#f57647 203.5px,#fba15b 204.5px,#fee191 206px,#fff9b6 207.5px,#fff8b4 209px,#fee69a 210.5px,#fba25c 213px,#f57547 215.5px,#fb9f5a 217px,#fff7b3 219px,#ebf7e4 220.5px,#f9fdca 222.5px,#fee497 224px,#fdae61 225.5px,#f7814c 227px,#f7824d 228.5px,#fdc476 231.5px,#fed181 233px,#fdb669 235px,#ef613e 237.5px,#dd3d2d 239.5px,#e65036 240.5px,#fba05b 241.5px,#fff4ae 242.5px,#ecf8e1 243px,#c7e7f1 243.5px,#88bdda 244.5px,#7fb6d6 245.5px,#a1d1e5 246.5px,#ddf2f7 247.5px,#fff9b6 248.5px,#fee99e 249px,#fecd7e 250.5px,#feea9f 252px,#f6fcd0 253px,#e5f5f0 253.5px,#7fb6d6 255.5px,#6ca3cc 256.5px,#77b0d2 257.5px,#d2ecf4 259px,#fff4ae 260px,#fdb365 261px,#f36c42 262px,#e85337 263px,#f46d43 264px,#f98e52 264.5px,#fff6b2 266px,#d7eef5 267px,#a5d4e6 268px,#9ecee3 269px,#d2ecf4 270.5px,#e8f6ea 271px,#f8fccb 271.5px,#fee79b 272.5px,#fecd7e 274px,#fee191 275px,#ffffbe 276px,#d9eff6 277px,#9bcce2 278.5px,#97c9e0 279.5px);-webkit-mask-image:linear-gradient(90deg,transparent,#000 50.0%);mask-image:linear-gradient(90deg,transparent,#000 50.0%)"></div>
<div class="a" style="left:351px;top:0;width:10px;height:100%;background:linear-gradient(#f6fbd0 0px,#ffffbe 1px,#fdbb6d 6px,#fdc577 7px,#fff9b7 8.5px,#d8eff6 9.5px,#4c7db8 11.5px,#36469d 12.5px,#313695 13.5px,#36459d 14.5px,#578abf 15.5px,#afdbea 16.5px,#e1f3f6 17px,#ffffbf 17.5px,#fdba6c 18.5px,#f99153 19px,#f46e44 19.5px,#e85337 20.5px,#f0643f 22px,#fdae61 24px,#fee293 25.5px,#fffcbb 27px,#f8fccd 28.5px,#fafdc8 29.5px,#fff7b3 31px,#feca7b 34px,#fdbb6d 36px,#feca7b 37px,#fff6b2 38.5px,#e8f6ea 39.5px,#d1ecf4 40px,#8ec2dd 41.5px,#79b1d3 43px,#92c5de 45px,#dff2f8 47.5px,#fffebe 49px,#fed182 51px,#fdb164 52.5px,#fca35c 54px,#fdba6c 55.5px,#fffbb9 57.5px,#e2f4f4 58.5px,#72abd0 61px,#5589be 64px,#313695 67.5px,#313695 71.5px,#3f63ab 72px,#659bc8 72.5px,#e3f4f3 73.5px,#fff2ab 74px,#fdb769 74.5px,#ee613e 75px,#be1827 75.5px,#a50026 76px,#a50026 82px,#c01a27 82.5px,#e75136 83px,#fed182 84px,#fffab7 84.5px,#e1f3f6 85px,#6ba3cc 86px,#4067ad 86.5px,#313695 87px,#313695 96px,#5487bd 97px,#a8d7e8 98px,#d5edf5 98.5px,#f4fbd4 99px,#fff0a8 99.5px,#fca35c 100.5px,#de3f2e 101.5px,#a50026 102.5px,#a50026 111.5px,#b30d26 112px,#d83328 112.5px,#f0643f 113px,#feca7b 114px,#feeea5 114.5px,#f4fbd2 115px,#d4edf5 115.5px,#a5d4e6 116px,#4e80ba 117px,#394fa1 117.5px,#313695 118px,#313695 125.5px,#384ca0 126px,#5c91c2 126.5px,#9bcce2 127px,#dcf1f7 127.5px,#fffbb9 128px,#fa9957 129px,#ec5d3b 129.5px,#d42d27 130px,#a50026 131px,#b00b26 133px,#ce2727 133.5px,#f8874f 134.5px,#fee597 135.5px,#fffdbc 136px,#dcf1f7 137px,#cbe9f2 138px,#def2f7 138.5px,#f8fccd 139px,#fee294 139.5px,#fa9857 140px,#db382b 140.5px,#a50026 141px,#a50026 145px,#b51026 145.5px,#e44a33 146px,#fdbc6e 147px,#fee496 148px,#fed888 149.5px,#fdae61 151px,#f67e4b 153px,#f88850 154px,#fdb063 155px,#fee191 156px,#f8fccb 157px,#e5f5ef 157.5px,#c9e8f1 158px,#7ab2d4 159.5px,#5e93c4 161px,#82b8d7 162.5px,#e5f5f0 164px,#fcfec5 164.5px,#fdad61 166px,#f57145 167px,#ed5e3c 168px,#f57346 169px,#fdab60 170px,#fff5b0 171.5px,#e1f4f5 173px,#e0f3f7 174.5px,#fffbb8 176px,#fecb7c 177.5px,#fdba6c 178.5px,#fec97a 179.5px,#fbfec5 181px,#e6f5ee 181.5px,#c3e5f0 182px,#6398c6 183.5px,#4778b5 185px,#6fa7ce 186.5px,#ceeaf3 188px,#e8f6e8 188.5px,#fafdc8 189px,#fff5af 189.5px,#fee293 190.5px,#fee192 191.5px,#feffc1 193.5px,#ddf2f7 195px,#bde2ee 197px,#dcf1f7 198px,#fff8b4 199px,#fee090 199.5px,#f99053 200.5px,#f46d43 201px,#e65136 202px,#ed5e3c 203px,#fba35c 204.5px,#fee79a 206px,#fffdbd 207px,#f5fbd1 208.5px,#fff3ad 210.5px,#fca75e 213px,#f57748 214.5px,#f46d43 215.5px,#fa9b58 217px,#fff9b7 219px,#e7f6ec 220.5px,#e8f6e9 221.5px,#feffc1 223px,#fdb669 225.5px,#f8874f 227.5px,#fa9656 229px,#fed081 231.5px,#fedb8b 233.5px,#fdae61 235.5px,#ec5d3c 237.5px,#df412f 239px,#e75136 240px,#fa9656 241px,#fee99e 242px,#f9fdca 242.5px,#def2f7 243px,#95c8df 244px,#76afd2 245px,#89beda 246px,#e5f5ee 247.5px,#fbfec6 248px,#fedb8b 249px,#fdbe70 250px,#fed888 251.5px,#fff9b7 252.5px,#ddf2f7 253.5px,#86bbd9 255px,#689fca 256.5px,#80b7d6 257.5px,#e2f4f5 259px,#fafdc8 259.5px,#feeba1 260px,#fca95f 261px,#f26941 262px,#e95639 263px,#ee5f3d 263.5px,#fa9857 264.5px,#fffab8 266px,#ecf8e2 266.5px,#d1ebf4 267px,#9fcfe4 268px,#97c9e0 269px,#b3ddeb 270px,#e5f5f0 271px,#f6fccf 271.5px,#fee89d 272.5px,#fecd7e 274px,#fee191 275px,#ffffbf 276px,#d8eff6 277px,#a7d6e7 278px,#96c8e0 279.5px);-webkit-mask-image:linear-gradient(90deg,transparent,#000 50.0%);mask-image:linear-gradient(90deg,transparent,#000 50.0%)"></div>
<div class="a" style="left:356px;top:0;width:10px;height:100%;background:linear-gradient(#f6fbd0 0px,#ffffbe 1px,#fdbb6d 6px,#fdc677 7px,#fffbb8 8.5px,#d5edf5 9.5px,#aedbea 10px,#4b7cb7 11.5px,#37489e 12.5px,#313796 13.5px,#3b55a4 14.5px,#4777b5 15px,#c3e5f0 16.5px,#ecf8e2 17px,#fff6b1 17.5px,#fdb567 18.5px,#f99154 19px,#f57848 19.5px,#f36b42 20.5px,#f7804c 22px,#fdac60 23.5px,#fee293 25.5px,#fffab7 27.5px,#fff9b7 30px,#fece7f 34px,#fdc576 36px,#fede8e 37.5px,#fffebe 39px,#def2f7 40.5px,#bce1ee 42px,#b9e0ed 43px,#e3f4f3 46.5px,#fdfec3 48.5px,#feda8a 51.5px,#fdc576 53.5px,#fecd7e 55.5px,#fff8b4 57.5px,#e3f4f3 59px,#d2ecf4 59.5px,#a8d7e8 61px,#8cc0db 64px,#436fb1 67.5px,#3a51a2 69.5px,#3e5fa9 70.5px,#4c7db8 71px,#6ea6cd 71.5px,#ddf1f7 72.5px,#fff9b6 73px,#fdc678 73.5px,#f57647 74px,#ce2827 74.5px,#a50026 75px,#a50026 81px,#c72127 81.5px,#eb5b3b 82px,#fedb8b 83px,#feffc1 83.5px,#d6eef5 84px,#6196c5 85px,#3c58a6 85.5px,#313695 86px,#313695 94.5px,#343e99 95px,#436eb1 95.5px,#bee2ee 97px,#e7f6ec 97.5px,#fffdbb 98px,#fdb96b 99px,#e85437 100px,#aa0526 101px,#a50026 101.5px,#ad0826 110.5px,#ed5e3c 111.5px,#fdc678 112.5px,#feeca2 113px,#f6fcd0 113.5px,#d5eef5 114px,#a6d5e7 114.5px,#4d7fb9 115.5px,#384da0 116px,#313695 116.5px,#313695 124.5px,#436fb1 125px,#bce1ee 126px,#f1fad8 126.5px,#fee69a 127px,#fdaf62 127.5px,#f16640 128px,#d02a27 128.5px,#a50026 129px,#a50026 133.5px,#cf2927 134px,#ef633e 134.5px,#fed686 135.5px,#fff5af 136px,#f3fad6 136.5px,#e1f4f6 137px,#cae8f2 138px,#d7eff6 138.5px,#f2fad7 139px,#fee99d 139.5px,#fca55d 140px,#e04330 140.5px,#a50026 141px,#a50026 145px,#c31c27 145.5px,#eb5a3a 146px,#fecb7c 147px,#fee79a 147.5px,#fff3ad 148.5px,#fede8e 150px,#fca35c 151.5px,#f7864f 153px,#fdad60 154.5px,#fffdbc 156.5px,#dbf1f7 157.5px,#8cc1dc 159px,#689fca 160.5px,#7fb5d6 162px,#daf0f6 163.5px,#fff4ae 164.5px,#fa9656 166px,#ee603d 167px,#e85337 168px,#f36c42 169px,#fca85e 170px,#fff5b0 171.5px,#e0f3f8 173px,#d3edf4 174px,#e5f5ef 175px,#ffffbf 176px,#fdc577 178px,#fdc577 179px,#fffab7 180.5px,#cfebf3 181.5px,#6399c7 183px,#4473b3 184px,#4370b1 184.5px,#6297c6 186px,#d5eef5 188px,#fcfec4 189px,#fff4ae 189.5px,#fee192 190.5px,#fedf8f 191.5px,#fffdbd 193.5px,#e0f3f7 195px,#c4e5f0 196.5px,#d4edf5 197.5px,#e8f6e9 198px,#fdfec3 198.5px,#fee99e 199px,#fa9b58 200px,#e85437 201px,#e04430 202px,#eb593a 203px,#fca75e 204.5px,#fedc8d 205.5px,#fffcba 206.5px,#e7f6ec 208px,#e5f5ef 209px,#fff9b6 211px,#fdb164 213px,#f57747 214.5px,#f36c42 215.5px,#f57446 216px,#fba25b 217px,#fedd8d 218px,#fcfec5 219px,#e2f4f5 220px,#dcf1f7 221.5px,#ebf7e3 222.5px,#fffcba 223.5px,#fdb86a 225.5px,#f88850 227px,#f88b51 228.5px,#fedc8c 231.5px,#fee699 233.5px,#fdc476 235px,#ea5739 237.5px,#e14631 239px,#e75237 239.5px,#f98e52 240.5px,#fffab7 242px,#ebf7e4 242.5px,#c9e8f2 243px,#89beda 244px,#6fa7ce 245px,#85bbd9 246px,#cae8f2 247px,#ecf8e1 247.5px,#fff9b5 248px,#fdc677 249px,#fdad61 250px,#fdc072 251px,#fffebd 252.5px,#ebf7e4 253px,#cfebf3 253.5px,#78b0d3 255px,#659cc8 256px,#75aed1 257px,#ceeaf3 258.5px,#edf8e0 259px,#fff9b6 259.5px,#fa9857 261px,#ee5f3d 262px,#e85337 263px,#ed5f3d 263.5px,#fa9b58 264.5px,#fffdbc 266px,#e9f7e7 266.5px,#cbe9f2 267px,#8ec2dc 268.5px,#99cae1 269.5px,#e1f3f6 271px,#fff9b6 272px,#fedc8c 273px,#fecd7e 274px,#fee192 275px,#ffffc0 276px,#d6eef5 277px,#98cae1 278.5px,#94c7df 279.5px);-webkit-mask-image:linear-gradient(90deg,transparent,#000 50.0%);mask-image:linear-gradient(90deg,transparent,#000 50.0%)"></div>
<div class="a" style="left:361px;top:0;width:10px;height:100%;background:linear-gradient(#f6fbd0 0px,#ffffbe 1px,#fdbb6d 6px,#fdc678 7px,#fffcba 8.5px,#d1ecf4 9.5px,#497ab7 11.5px,#34409a 13px,#384da1 14px,#588bbf 15px,#ddf1f7 16.5px,#fbfdc7 17px,#fee89c 17.5px,#fba35c 18.5px,#f7844e 19px,#f47044 20px,#f77f4b 21.5px,#fca55d 23px,#fee394 25.5px,#fff9b6 28px,#feca7c 35.5px,#fedf8f 37.5px,#fffebd 39.5px,#e6f5ed 42px,#e9f7e7 44.5px,#feffc1 48px,#fee495 53px,#fee496 55px,#fffbb9 57px,#e0f3f8 59px,#b7dfec 61px,#89beda 68.5px,#97c9e0 70px,#cce9f2 71px,#edf8e1 71.5px,#fff4af 72px,#fecd7e 72.5px,#e24832 73.5px,#b30e26 74px,#a50026 74.5px,#ae0926 80.5px,#dd3c2d 81px,#f7804c 81.5px,#fdc476 82px,#fff3ad 82.5px,#e6f5ee 83px,#abd9e9 83.5px,#6ca4cc 84px,#4064ac 84.5px,#313695 85px,#313695 93.5px,#394ea1 94px,#4d7fb9 94.5px,#a2d2e5 95.5px,#d1ebf4 96px,#f2fad7 96.5px,#fff1a9 97px,#fba25b 98px,#dc3b2c 99px,#a50026 100px,#aa0526 109px,#d22b27 109.5px,#f99355 110.5px,#feeda3 111.5px,#f5fbd2 112px,#d2ecf4 112.5px,#a1d1e5 113px,#4878b6 114px,#36459c 114.5px,#313695 115px,#313695 123px,#394ea1 123.5px,#598dc1 124px,#cfebf3 125px,#fafdc9 125.5px,#fee191 126px,#fca85e 126.5px,#ce2827 127.5px,#a50026 128px,#a50026 133.5px,#be1827 134px,#e75136 134.5px,#f99455 135px,#fff0a8 136px,#f6fbd0 136.5px,#e3f4f3 137px,#c6e6f1 138px,#cdeaf3 138.5px,#e9f7e7 139px,#fff3ac 139.5px,#fdb669 140px,#e85337 140.5px,#a50026 141px,#a50026 145px,#d02a27 145.5px,#f36a42 146px,#fdad60 146.5px,#fed98a 147px,#fffebe 148px,#fbfec6 148.5px,#fff7b3 149.5px,#fca45c 151.5px,#f88d52 152px,#f7804c 153px,#fdab60 154.5px,#fffdbd 156.5px,#dbf1f7 157.5px,#90c4dd 159px,#70a8ce 160.5px,#7bb3d4 161.5px,#c7e7f1 163px,#e7f6ec 163.5px,#fdfec3 164px,#fdab5f 165.5px,#f26841 166.5px,#e44c34 167.5px,#e95638 168.5px,#fca65d 170px,#fee294 171px,#f7fccd 172px,#dbf0f7 173px,#cae8f2 174px,#d9eff6 175px,#e7f6ec 175.5px,#fffbb9 176.5px,#fecf80 178px,#fdc576 179px,#fecf80 179.5px,#fff7b3 180.5px,#eff9dd 181px,#cce9f2 181.5px,#588bc0 183px,#4169ae 184px,#4676b4 185px,#659bc8 186px,#d9f0f6 188px,#feffc1 189px,#fedf8f 190.5px,#fed989 191.5px,#feeea5 193px,#fafdc9 194px,#e4f5f1 195px,#cbe9f2 196.5px,#e0f3f8 197.5px,#fff7b2 198.5px,#fedc8c 199px,#f7834d 200px,#ec5c3b 200.5px,#dc3a2c 201.5px,#ea5739 203px,#fdac60 204.5px,#fff3ad 206px,#e2f4f5 207.5px,#c9e8f2 209px,#d9eff6 210px,#e6f5ed 210.5px,#fffbb9 211.5px,#fba25c 213.5px,#f47045 215px,#f67d4a 216px,#fdb365 217px,#ffffbf 218.5px,#daf0f6 219.5px,#b9e0ed 221px,#dcf1f7 222.5px,#fafdc9 223.5px,#fee395 224.5px,#fdb466 225.5px,#f7864e 226.5px,#f57145 227.5px,#f67b4a 228.5px,#fb9d59 229.5px,#fee496 231.5px,#feefa7 233.5px,#fede8f 234.5px,#fa9957 236px,#f06540 237px,#e44b33 238px,#e34933 238.5px,#f0653f 239.5px,#fdac60 240.5px,#feeea5 241.5px,#f7fccd 242px,#dff2f8 242.5px,#7fb6d6 244px,#69a0ca 245px,#82b8d7 246px,#d2ecf4 247px,#f4fbd3 247.5px,#feeea5 248px,#fdb164 249px,#fa9b58 250px,#fdba6c 251px,#fcfec4 252.5px,#e6f5ed 253px,#c4e5f0 253.5px,#84bad8 254.5px,#659cc8 255.5px,#7cb4d5 257px,#dff3f8 258.5px,#f8fccd 259px,#feeea5 259.5px,#fcaa5f 260.5px,#f0643f 261.5px,#e24732 262.5px,#eb593a 263.5px,#fa9a58 264.5px,#ffffbf 266px,#e7f6eb 266.5px,#c7e7f1 267px,#87bcd9 268.5px,#90c4dd 269.5px,#dcf1f7 271px,#fffbb9 272px,#fedd8d 273px,#fecd7e 274px,#fee192 275px,#feffc0 276px,#d5eef5 277px,#96c8e0 278.5px,#92c5de 279.5px);-webkit-mask-image:linear-gradient(90deg,transparent,#000 50.0%);mask-image:linear-gradient(90deg,transparent,#000 50.0%)"></div>
<div class="a" style="left:366px;top:0;width:10px;height:100%;background:linear-gradient(#f6fbd0 0px,#ffffbe 1px,#fdbb6d 6px,#fdc778 7px,#fffdbc 8.5px,#ecf8e2 9px,#ceeaf3 9.5px,#4879b6 11.5px,#36479d 13px,#384b9f 13.5px,#4a7cb7 14.5px,#c5e6f0 16px,#edf8df 16.5px,#fff4af 17px,#fdb366 18px,#f67c4a 19px,#f57446 19.5px,#f67f4b 21px,#fb9f5a 22.5px,#fedb8b 25px,#fff2ab 27px,#fff5b0 29px,#fecd7e 34px,#fec879 36px,#ffffbf 39.5px,#e4f4f1 42px,#fff9b6 53.5px,#ffffbf 55.5px,#dcf1f7 58.5px,#bbe1ee 61.5px,#dcf1f7 63.5px,#fbfec6 65px,#fee191 66.5px,#f46e43 69.5px,#dc3c2c 70.5px,#a50026 72px,#a50026 79.5px,#b10b26 80px,#e0422f 80.5px,#f88b51 81px,#fed081 81.5px,#fffdbc 82px,#d5eef5 82.5px,#5588be 83.5px,#35429b 84px,#313695 84.5px,#313695 92.5px,#5c91c2 93.5px,#b8dfed 94.5px,#e4f5f0 95px,#fffebd 95.5px,#fee293 96px,#f7814c 97px,#c72127 98px,#a50026 98.5px,#af0a26 107.5px,#d73027 108px,#fb9c59 109px,#fff2ab 110px,#eff9dc 110.5px,#c8e7f1 111px,#679ec9 112px,#426cb0 112.5px,#323896 113px,#313695 122px,#3f62ab 122.5px,#6499c7 123px,#ceeaf3 124px,#f5fbd1 124.5px,#fee99d 125px,#f7804c 126px,#bd1726 127px,#a50026 127.5px,#a50026 133.5px,#bb1526 134px,#e54e35 134.5px,#f99254 135px,#fecd7e 135.5px,#fff2ab 136px,#f2fad7 136.5px,#dbf1f7 137px,#b4ddeb 138px,#b3ddeb 138.5px,#cbe9f2 139px,#f0f9da 139.5px,#fee699 140px,#fa9a58 140.5px,#dc3a2c 141px,#a50026 141.5px,#a50026 144.5px,#b91326 145px,#f8874f 146px,#fdc072 146.5px,#fffdbc 147.5px,#ecf8e3 148.5px,#edf8e0 149px,#fffab7 150px,#fee79a 150.5px,#fba25b 151.5px,#ec5c3b 152.5px,#e34832 153.5px,#ed5e3c 154.5px,#fdb86a 156px,#fff0a8 157px,#f9fdc9 157.5px,#e5f5ef 158px,#95c7df 159.5px,#78b0d3 161px,#8ec2dd 162px,#e4f4f1 163.5px,#fafdc9 164px,#fdb163 165.5px,#f46e44 166.5px,#e75236 167.5px,#ec5c3b 168.5px,#fcaa5f 170px,#fee496 171px,#f6fbd0 172px,#d6eef5 173px,#c0e4ef 174px,#daf0f6 175.5px,#fff7b3 177px,#fec879 179px,#fed989 180px,#fdfec3 181px,#e3f4f2 181.5px,#679dc9 183px,#426db0 184px,#4168ae 184.5px,#5c91c2 186px,#d3ecf4 188px,#feffc1 189px,#fed485 190.5px,#fec779 191.5px,#fed485 192.5px,#fff8b4 194px,#e5f5f0 195.5px,#d5eef5 196.5px,#e2f4f4 197.5px,#fff4ae 198.5px,#fca65d 199.5px,#e44c34 200.5px,#d83228 201.5px,#e04330 202.5px,#f98e52 204px,#fee69a 205.5px,#f5fbd2 206.5px,#e5f5ef 207px,#d2ecf4 207.5px,#aedaea 209px,#b6deec 210px,#e0f3f8 211px,#fff8b5 212px,#fcaa5f 213.5px,#f67b49 214.5px,#f57446 215px,#f57848 215.5px,#fca45c 216.5px,#fff8b4 218px,#daf0f6 219px,#a8d7e8 220px,#9bcce2 221px,#b0dbea 222px,#dff2f8 223px,#fffab7 224px,#fdaf62 225.5px,#f57748 226.5px,#ee603d 227.5px,#f36b42 228.5px,#fdb063 230px,#fedd8d 231px,#fffbb9 233px,#fee89c 234.5px,#f57145 237px,#e85337 238.5px,#f46f44 239.5px,#fdb467 240.5px,#fff3ac 241.5px,#d7eff5 242.5px,#77afd2 244px,#6298c6 245px,#7bb3d4 246px,#cdeaf3 247px,#f3fad6 247.5px,#feeea6 248px,#fdaf62 249px,#fa9656 250px,#fdb567 251px,#fffcba 252.5px,#ecf8e2 253px,#cfebf3 253.5px,#77b0d2 255px,#679dc9 256px,#7bb3d4 257px,#e1f3f7 258.5px,#fafdc8 259px,#fee99e 259.5px,#fb9c59 260.5px,#e85538 261.5px,#dd3c2c 262.5px,#e85437 263.5px,#fa9a58 264.5px,#fee79b 265.5px,#fdfec2 266px,#e5f5ef 266.5px,#a4d3e6 267.5px,#80b7d6 268.5px,#88bdda 269.5px,#d5eef5 271px,#fffdbc 272px,#fede8e 273px,#fecd7e 274px,#fee192 275px,#feffc1 276px,#d4edf5 277px,#95c7df 278.5px,#91c4de 279.5px);-webkit-mask-image:linear-gradient(90deg,transparent,#000 50.0%);mask-image:linear-gradient(90deg,transparent,#000 50.0%)"></div>
<div class="a" style="left:371px;top:0;width:10px;height:100%;background:linear-gradient(#f6fbd0 0px,#ffffbe 1px,#fdbb6d 6px,#fdc778 7px,#fffebe 8.5px,#eaf7e5 9px,#cbe9f2 9.5px,#7eb5d5 10.5px,#4878b6 11.5px,#3e60aa 12px,#394ea1 13px,#3c57a5 13.5px,#5b8fc2 14.5px,#e0f3f8 16px,#fdfec3 16.5px,#fba15b 18px,#f7864f 18.5px,#f57848 19.5px,#fca75e 22.5px,#fedc8c 25px,#feefa7 27px,#feefa7 29.5px,#fdc778 34px,#fdc274 36px,#fff9b6 39px,#e9f6e8 40.5px,#dbf1f7 41.5px,#d9eff6 54.5px,#c5e6f0 61px,#dbf0f7 62px,#fdfec3 63px,#fece7f 64px,#e44b33 65.5px,#b91326 66.5px,#a50026 67.5px,#a50026 79px,#b10c26 79.5px,#e24731 80px,#fedb8b 81px,#f7fccd 81.5px,#c0e3ef 82px,#78b0d3 82.5px,#4168ae 83px,#313695 83.5px,#313695 84px,#313695 91px,#35439c 91.5px,#4778b6 92px,#a3d2e5 93px,#d4edf5 93.5px,#f6fccf 94px,#feeaa0 94.5px,#f88d52 95.5px,#cc2627 96.5px,#a50026 97px,#a50026 105.5px,#bf1927 106px,#f67b49 107px,#fee292 108px,#ffffbf 108.5px,#e2f4f5 109px,#b1dceb 109.5px,#5386bd 110.5px,#3a52a3 111px,#313695 111.5px,#313695 120.5px,#36469d 121px,#4979b6 121.5px,#a2d1e5 122.5px,#d2ecf4 123px,#f5fbd2 123.5px,#feeda3 124px,#fec779 124.5px,#ed5e3c 125.5px,#ad0726 126.5px,#a50026 127px,#a50026 133.5px,#b81226 134px,#e54d34 134.5px,#fecf80 135.5px,#fff5af 136px,#eef8df 136.5px,#d0ebf3 137px,#9fcfe4 138px,#98cae1 138.5px,#a2d2e5 139px,#c3e5f0 139.5px,#ecf8e2 140px,#feeea5 140.5px,#fdb86a 141px,#f46c43 141.5px,#d62f27 142px,#b30e26 142.5px,#a50026 143px,#b61126 144px,#e75136 145px,#fdba6c 146px,#fffdbc 147px,#d8eff6 148px,#c3e5f0 149px,#e3f4f3 150px,#f8fccc 150.5px,#feeca2 151px,#f98e52 152px,#d52e27 153px,#b40f26 154px,#c21c27 155px,#e75136 156px,#fdad61 157px,#fed687 157.5px,#fff4ae 158px,#f2fad8 158.5px,#d7eff6 159px,#9ccde2 160px,#81b7d7 161px,#8dc1dc 162px,#ddf1f7 163.5px,#fff4ae 164.5px,#fdbb6d 165.5px,#f67949 166.5px,#eb5b3b 167.5px,#f0653f 168.5px,#fdb063 170px,#fff9b5 171.5px,#e4f5f0 172.5px,#c1e4ef 173.5px,#b6deec 174.5px,#ddf2f7 176px,#fbfec6 177px,#fece7f 179px,#fed081 180px,#fff3ad 181px,#d9eff6 182px,#6096c5 183.5px,#426baf 184.5px,#4169ae 185px,#649ac7 186.5px,#c6e6f1 188px,#e7f6ec 188.5px,#fcfec5 189px,#fec97a 190.5px,#fdb567 191.5px,#feca7b 193px,#fbfec6 195px,#e1f3f6 196.5px,#e3f4f2 197.5px,#f2fad6 198px,#fff4af 198.5px,#fed383 199px,#f16740 200px,#df402e 200.5px,#d12a27 201.5px,#e64f35 203px,#fca95f 204.5px,#fee395 205.5px,#f7fcce 206.5px,#e6f5ec 207px,#d2ecf4 207.5px,#9ccde2 209.5px,#abd9e9 210.5px,#e2f4f4 211.5px,#f9fdcb 212px,#feeda4 212.5px,#fdb063 213.5px,#f67d4a 214.5px,#f57848 215px,#f7804c 215.5px,#fdb467 216.5px,#feefa7 217.5px,#f7fccd 218px,#e0f3f8 218.5px,#9dcee3 219.5px,#7bb3d4 220.5px,#82b8d7 221.5px,#cbe9f2 223px,#e9f6e8 223.5px,#ffffbf 224px,#fca55d 225.5px,#f0643f 226.5px,#e34933 227.5px,#ea5739 228.5px,#f88a50 229.5px,#fee394 231px,#fffdbc 232px,#f7fccd 233px,#fff3ad 234.5px,#fb9e5a 236.5px,#f46e43 237.5px,#ed5e3c 238.5px,#f57647 239.5px,#fdb86a 240.5px,#fff5b0 241.5px,#d2ecf4 242.5px,#71a9cf 244px,#5c90c2 245px,#70a9cf 246px,#e5f5ef 247.5px,#fffebd 248px,#fdc677 249px,#fca35c 250px,#fdc778 251.5px,#fff3ad 252.5px,#e1f3f7 253.5px,#86bbd9 255px,#6ca3cc 256px,#79b1d3 257px,#def2f7 258.5px,#fafdc8 259px,#fee79b 259.5px,#f99053 260.5px,#e14631 261.5px,#d73127 262.5px,#e64f35 263.5px,#fa9957 264.5px,#fee89d 265.5px,#fcfec5 266px,#e3f4f3 266.5px,#9fcfe4 267.5px,#79b1d3 268.5px,#7fb6d6 269.5px,#cfebf3 271px,#ebf7e4 271.5px,#ffffbf 272px,#fedf8f 273px,#fecd7e 274px,#fee192 275px,#feffc1 276px,#d3edf4 277px,#93c6df 278.5px,#8fc3dd 279.5px);-webkit-mask-image:linear-gradient(90deg,transparent,#000 50.0%);mask-image:linear-gradient(90deg,transparent,#000 50.0%)"></div>
<div class="a" style="left:376px;top:0;width:10px;height:100%;background:linear-gradient(#f6fbd0 0px,#ffffbe 1px,#fdbb6d 6px,#fec779 7px,#feffc1 8.5px,#e8f6e9 9px,#c7e7f1 9.5px,#7ab2d4 10.5px,#4677b5 11.5px,#3f61aa 12px,#3b55a4 13px,#4d7eb9 14px,#c4e5f0 15.5px,#edf8e1 16px,#fff5b0 16.5px,#fdb467 17.5px,#f77f4b 18.5px,#f67949 19px,#f7844e 20.5px,#fdac60 22.5px,#fedd8d 25px,#feefa6 27.5px,#fdbc6e 36px,#fecc7d 37px,#fffcbb 39px,#e2f4f5 40.5px,#c6e6f1 42px,#c1e4ef 49.5px,#e2f4f5 54px,#fffdbc 57px,#fee191 59.5px,#fdb668 61.5px,#e54e35 63px,#aa0526 64px,#a50026 64.5px,#a50026 78.5px,#c62027 79px,#ec5b3b 79.5px,#fca85e 80px,#fee79a 80.5px,#edf8e0 81px,#acd9e9 81.5px,#6399c7 82px,#384b9f 82.5px,#313695 83px,#313695 90px,#3b56a5 90.5px,#588cc0 91px,#bce1ee 92px,#eaf7e6 92.5px,#fff6b1 93px,#fed282 93.5px,#ef623e 94.5px,#d42d27 95px,#aa0526 95.5px,#a50026 96px,#ac0726 104px,#d52e27 104.5px,#fb9d59 105.5px,#fff4ae 106.5px,#ecf8e1 107px,#c2e4ef 107.5px,#5f94c4 108.5px,#313695 109.5px,#313695 119.5px,#578abf 120.5px,#a7d6e7 121.5px,#d2ecf4 122px,#fff4ae 123px,#fdb063 124px,#e65036 125px,#ac0726 126px,#a50026 126.5px,#a50026 133.5px,#b50f26 134px,#e34933 134.5px,#fecf80 135.5px,#fff6b2 136px,#eaf7e5 136.5px,#c6e6f1 137px,#a3d3e6 137.5px,#7eb5d6 138.5px,#92c5de 139.5px,#dff3f8 140.5px,#fdfec2 141px,#fdb86b 142px,#f57145 143px,#f26941 143.5px,#f47044 144px,#fca65d 145px,#fcfec4 146.5px,#e4f5f1 147px,#8abfdb 148.5px,#7eb5d6 149.5px,#90c3dd 150px,#e2f4f5 151px,#fffab8 151.5px,#fece80 152px,#e0422f 153px,#b61026 153.5px,#a50026 154px,#a50026 156px,#b30d26 156.5px,#d93329 157px,#f36b42 157.5px,#fedf8f 158.5px,#fffebd 159px,#e4f5f0 159.5px,#a1d1e5 160.5px,#88bdda 161.5px,#9dcde3 162.5px,#d2ecf4 163.5px,#edf8e1 164px,#fffbb9 164.5px,#fca55d 166px,#f46f44 167px,#f0653f 167.5px,#f46e44 168.5px,#fdb76a 170px,#fffebd 171.5px,#dbf1f7 172.5px,#b0dbea 173.5px,#9ecee3 174.5px,#abd9e9 175.5px,#d4edf5 176.5px,#fafdc7 177.5px,#fee597 178.5px,#fecb7c 179.5px,#fed081 180.5px,#fff5af 181.5px,#d3edf4 182.5px,#5d91c3 184px,#416aae 185px,#416aae 185.5px,#568abf 186.5px,#90c3dd 187.5px,#dff2f8 188.5px,#f7fcce 189px,#fff1a9 189.5px,#fdac60 191px,#fa9a58 192px,#fdb063 193px,#fff9b6 195px,#e0f3f7 196.5px,#d5edf5 197.5px,#e0f3f8 198px,#fff8b4 199px,#fdad60 200px,#e34932 201px,#d22b27 201.5px,#bf1927 202.5px,#d02927 203.5px,#f67c4a 205px,#fec97a 206px,#fffcba 207px,#dbf0f6 208px,#acdae9 209px,#97c9e0 210px,#99cbe1 210.5px,#c8e7f1 211.5px,#eaf7e6 212px,#fffab7 212.5px,#fdb96b 213.5px,#f7814c 214.5px,#f67e4b 215px,#fcaa5f 216px,#feeca2 217px,#f6fccf 217.5px,#d5edf5 218px,#5d92c3 219.5px,#4472b2 220.5px,#4676b5 221px,#6ca3cc 222px,#bde2ee 223px,#e9f6e8 223.5px,#fff7b2 224px,#fb9e59 225px,#da362a 226px,#ab0626 227px,#a50026 227.5px,#b50f26 228.5px,#e85438 229.5px,#fdc273 230.5px,#feea9f 231px,#fafdc7 231.5px,#e5f5ef 232px,#c3e5f0 233px,#c3e5f0 233.5px,#e2f4f5 234.5px,#fff7b3 235.5px,#fa9c59 237px,#f67949 237.5px,#e95638 238.5px,#f0643f 239.5px,#fca65d 240.5px,#feeea6 241.5px,#f4fbd3 242px,#d4edf5 242.5px,#6399c7 244px,#4878b6 245px,#4a7ab7 245.5px,#71a9cf 246.5px,#c6e6f1 247.5px,#edf8e0 248px,#fff5b0 248.5px,#fdbb6d 249.5px,#fa9957 250.5px,#fb9c59 251px,#fdc173 252px,#f6fcd0 253.5px,#dff3f8 254px,#82b8d7 255.5px,#6ca3cc 256.5px,#85bbd8 257.5px,#d2ecf4 258.5px,#f5fbd1 259px,#feea9e 259.5px,#f7864e 260.5px,#d83228 261.5px,#c62027 262.5px,#de3e2d 263.5px,#f98e52 264.5px,#fee79b 265.5px,#fbfdc7 266px,#dff2f8 266.5px,#74add1 268px,#6095c4 269px,#75aed2 270px,#e2f4f5 271.5px,#fafdc8 272px,#feeea5 272.5px,#fdbe70 274px,#fee598 275.5px,#fff8b4 276px,#daf0f6 277px,#90c3dd 278.5px,#8bbfdb 279.5px);-webkit-mask-image:linear-gradient(90deg,transparent,#000 50.0%);mask-image:linear-gradient(90deg,transparent,#000 50.0%)"></div>
<div class="a" style="left:381px;top:0;width:10px;height:100%;background:linear-gradient(#f6fbd0 0px,#ffffbe 1px,#fdbb6d 6px,#fec879 7px,#fcfec5 8.5px,#e5f5ee 9px,#c1e4ef 9.5px,#578bbf 11px,#4370b2 11.5px,#3a54a4 12.5px,#3c57a5 13px,#5285bc 14px,#cbe9f2 15.5px,#f0f9db 16px,#fff2ac 16.5px,#fdb265 17.5px,#f67b49 18.5px,#f57346 19px,#f67e4b 20.5px,#fca85e 22.5px,#fedd8d 25px,#feeea5 27px,#fee89c 30px,#fdbf71 33.5px,#fdb669 36px,#fed788 37.5px,#ffffc0 39px,#e5f5ee 40px,#d6eef5 40.5px,#b4ddec 42.5px,#bbe1ee 50px,#e2f4f4 52.5px,#ffffbe 54px,#fed586 55.5px,#f26a41 57.5px,#d73027 58.5px,#aa0426 59.5px,#a50026 60px,#a50026 70px,#ad0826 70.5px,#dc3a2b 71.5px,#f57145 72.5px,#fba25b 73.5px,#fecd7e 75px,#fdfec2 78px,#e0f3f8 79px,#91c4de 80px,#4064ac 81px,#313695 81.5px,#313695 89px,#3d5ba7 89.5px,#6095c4 90px,#cce9f2 91px,#f5fbd1 91.5px,#fee89c 92px,#f67b49 93px,#b61026 94px,#a50026 94.5px,#a50026 102px,#c01a27 102.5px,#f7824c 103.5px,#fee89c 104.5px,#f7fccd 105px,#d3edf4 105.5px,#9fcfe4 106px,#436fb1 107px,#323896 107.5px,#313695 117.5px,#5184bc 118.5px,#93c5de 119.5px,#d7eff5 120.5px,#fffebd 121.5px,#fca45c 123.5px,#e24631 125px,#a70226 126.5px,#a50026 127px,#a50026 133.5px,#b91426 134px,#e54d34 134.5px,#fed889 135.5px,#feffc1 136px,#d9eff6 136.5px,#77b0d2 137.5px,#497ab7 138.5px,#4574b4 139px,#598dc0 140px,#cce9f2 142px,#f1fad8 143px,#fbfdc7 144px,#e2f4f4 145.5px,#aad8e9 146.5px,#5386bd 148px,#3c59a6 149.5px,#4f81ba 150.5px,#78b0d3 151px,#b6deec 151.5px,#f1fad8 152px,#fedf8f 152.5px,#f88b51 153px,#d83228 153.5px,#a50026 154px,#a50026 157.5px,#ba1426 158px,#eb5b3b 158.5px,#fdb063 159px,#feeca2 159.5px,#edf8e0 160px,#c0e3ef 160.5px,#97c9e0 161px,#77b0d2 162px,#91c4de 163px,#ceeaf3 164px,#ecf8e2 164.5px,#fffab8 165px,#fca45c 166.5px,#f67949 167.5px,#f57647 168px,#fcaa5f 169.5px,#fff7b3 171px,#d7eff6 172px,#75aed2 173.5px,#4f81ba 175px,#5e92c3 176px,#74add1 176.5px,#c2e4f0 177.5px,#e8f6e9 178px,#fffcbb 178.5px,#feca7b 179.5px,#fdab60 180.5px,#fdc274 181.5px,#fffbb8 182.5px,#e6f5ed 183px,#b7dfec 183.5px,#5f94c4 184.5px,#4066ad 185.5px,#4168ad 186px,#5e93c3 187px,#def2f7 188.5px,#fdfec2 189px,#fdb669 190px,#ed5d3c 191px,#da362a 192px,#e24731 193px,#f88a50 194px,#fee192 195px,#fffcbb 195.5px,#e8f6ea 196px,#c5e6f0 196.5px,#89beda 197.5px,#7bb2d4 198.5px,#8bbfdb 199px,#d6eef5 200px,#f9fdca 200.5px,#fee395 201px,#fdae61 201.5px,#f36b42 202px,#d93529 202.5px,#a50026 203.5px,#ac0626 205px,#de3f2e 206px,#f46e44 206.5px,#fed686 207.5px,#fff5b1 208px,#eef9dd 208.5px,#d2ecf4 209px,#9ccde3 210px,#91c4de 210.5px,#94c7df 211px,#cbe8f2 212px,#edf8df 212.5px,#fff4ae 213px,#fdb164 214px,#f88b51 215px,#fdb86a 216px,#fdfec3 217px,#d3edf4 217.5px,#5a8ec1 218.5px,#3b56a5 219px,#313695 219.5px,#313695 221px,#37499e 221.5px,#4a7bb7 222px,#bce1ee 223px,#f3fbd4 223.5px,#fee091 224px,#fa9757 224.5px,#e14631 225px,#af0926 225.5px,#a50026 226px,#ab0526 229.5px,#e34a33 230px,#fca45d 230.5px,#fee99e 231px,#eaf7e5 231.5px,#b2ddeb 232px,#80b6d6 232.5px,#578abf 233.5px,#70a9cf 234.5px,#c6e6f1 235.5px,#f1fad8 236px,#feea9e 236.5px,#f57647 237.5px,#c21c27 238.5px,#a90326 239.5px,#ce2727 240.5px,#ea5739 241px,#fa9b58 241.5px,#fede8e 242px,#f6fccf 242.5px,#bfe3ef 243px,#4778b5 244px,#35439b 244.5px,#313695 245px,#313795 246.5px,#4066ad 247px,#689fca 247.5px,#a6d5e7 248px,#e5f5ee 248.5px,#fff1aa 249px,#f7844d 250px,#d83128 251px,#cd2627 251.5px,#de3f2e 252.5px,#f16640 253px,#fb9e5a 253.5px,#fffbb8 254.5px,#e2f4f4 255px,#85bbd8 256px,#5d91c3 257px,#76aed2 258px,#d5eef5 259px,#feffc0 259.5px,#fed485 260px,#e34932 261px,#bf1927 261.5px,#a50026 262px,#a90426 263.5px,#c72127 264px,#f99053 265px,#fed081 265.5px,#fffbb9 266px,#dbf1f7 266.5px,#679ec9 267.5px,#436db0 268px,#36459d 268.5px,#313695 269px,#313695 270px,#3d5ba7 270.5px,#5c91c2 271px,#daf0f6 272px,#fffab8 272.5px,#fb9e5a 273.5px,#f57547 274px,#f0643f 274.5px,#f26a41 275px,#fdb668 276px,#fee496 276.5px,#fafdc9 277px,#d6eef5 277.5px,#8bbfdb 278.5px,#7eb5d5 279.5px);-webkit-mask-image:linear-gradient(90deg,transparent,#000 50.0%);mask-image:linear-gradient(90deg,transparent,#000 50.0%)"></div>
<div class="a" style="left:386px;top:0;width:10px;height:100%;background:linear-gradient(#f6fbd0 0px,#ffffbe 1px,#fdbb6d 6px,#fec97a 7px,#f9fdca 8.5px,#e2f4f5 9px,#5183bb 11px,#3c57a5 12px,#3a51a3 12.5px,#3c58a6 13px,#5589be 14px,#cdeaf3 15.5px,#f0f9da 16px,#fff3ac 16.5px,#fdb365 17.5px,#f99053 18px,#f57848 18.5px,#f46c43 19.5px,#fa9555 22px,#fede8e 25px,#fff0a8 27px,#fee79a 30px,#fdaf62 34px,#fdaa5f 36px,#fed384 37.5px,#fbfdc7 39px,#dbf0f7 40px,#a4d4e6 41.5px,#99cbe1 43.5px,#b6deec 50px,#dcf1f7 52px,#feffc1 53.5px,#fecf80 55px,#f57346 56.5px,#d83128 57.5px,#a50026 58.5px,#a50026 67.5px,#cf2827 68px,#f16841 68.5px,#fee598 69.5px,#f6fbd0 70px,#cce9f2 70.5px,#4473b3 72px,#313695 73px,#313695 88px,#3c58a6 88.5px,#6095c4 89px,#d3edf4 90px,#fcfec5 90.5px,#fedf8f 91px,#fca65d 91.5px,#ef623e 92px,#cd2727 92.5px,#a50026 93px,#a50026 100.5px,#cd2627 101px,#fa9857 102px,#fff5b0 103px,#e9f7e7 103.5px,#b9e0ed 104px,#5386bd 105px,#394ea1 105.5px,#313695 106px,#313695 114px,#3950a2 114.5px,#5386bd 115px,#b5deec 116px,#e4f5f1 116.5px,#fffdbc 117px,#fee191 117.5px,#f7834d 118.5px,#d42d27 119.5px,#a50026 120.5px,#a50026 133.5px,#c82127 134px,#fca85e 135px,#fee89b 135.5px,#ebf7e4 136px,#aad8e9 136.5px,#669dc8 137px,#3d5ca8 137.5px,#313695 138px,#313695 151px,#4a7bb7 151.5px,#94c7df 152px,#e8f6e9 152.5px,#fedd8e 153px,#f57748 153.5px,#bd1726 154px,#a50026 154.5px,#a80326 158.5px,#e75237 159px,#fdb568 159.5px,#fff5b0 160px,#daf0f6 160.5px,#6ba2cc 161.5px,#4a7cb7 162.5px,#6298c6 163.5px,#d2ecf4 165px,#f3fad6 165.5px,#fff1aa 166px,#fdb86a 167px,#f99455 168px,#fdb86a 169.5px,#fdfec2 171px,#e5f5ef 171.5px,#bde2ee 172px,#4676b5 173.5px,#313695 174.5px,#313695 176.5px,#384ca0 177px,#4f81ba 177.5px,#c1e4ef 178.5px,#f2fad6 179px,#feea9f 179.5px,#fa9b58 180.5px,#f7814c 181px,#f67d4a 181.5px,#f98f53 182px,#fdb668 182.5px,#fafdc8 183.5px,#cfebf3 184px,#6398c6 185px,#4473b3 185.5px,#3e5fa9 186px,#3f61aa 186.5px,#4879b6 187px,#69a0ca 187.5px,#dcf1f7 188.5px,#fff7b3 189px,#fdc072 189.5px,#f46c43 190px,#c92327 190.5px,#a50026 191px,#a50026 194px,#b50f26 194.5px,#e75136 195px,#fca65d 195.5px,#fee89d 196px,#ecf8e2 196.5px,#b3ddeb 197px,#5689bf 198px,#4167ad 199px,#4575b4 199.5px,#5e93c4 200px,#c0e3ef 201px,#f2fad7 201.5px,#fee496 202px,#fca55d 202.5px,#ea5839 203px,#c41d27 203.5px,#a50026 204px,#aa0426 206.5px,#d73027 207px,#f57145 207.5px,#fdba6c 208px,#feeea4 208.5px,#eef8df 209px,#c4e5f0 209.5px,#9ccde2 210px,#79b1d3 211px,#84b9d8 211.5px,#cbe9f2 212.5px,#f1fad9 213px,#feefa7 213.5px,#fecd7e 214px,#fa9b58 215px,#fb9f5a 215.5px,#fdb86b 216px,#fffebe 217px,#d8eff6 217.5px,#598dc1 218.5px,#394fa1 219px,#313695 219.5px,#313695 221.5px,#3d5ba7 222px,#649ac7 222.5px,#a9d7e8 223px,#ecf8e1 223.5px,#fee293 224px,#f98f53 224.5px,#d83228 225px,#a50026 225.5px,#a50026 229.5px,#b91326 230px,#f57145 230.5px,#fed687 231px,#eff9dc 231.5px,#a7d6e7 232px,#6297c6 232.5px,#3e5ea9 233px,#323a97 233.5px,#34409a 234.5px,#4066ad 235px,#659cc8 235.5px,#a4d3e6 236px,#e8f6ea 236.5px,#fee99d 237px,#fba15b 237.5px,#e34932 238px,#ae0926 238.5px,#a50026 239px,#a50026 241.5px,#df412f 242px,#fdae61 242.5px,#fffcba 243px,#b5deec 243.5px,#5689bf 244px,#313695 244.5px,#313695 247.5px,#3b55a4 248px,#71aacf 248.5px,#c7e7f1 249px,#fff9b6 249.5px,#fdb86b 250px,#ec5c3b 250.5px,#bb1526 251px,#a50026 251.5px,#aa0526 254px,#e34a33 254.5px,#fdac60 255px,#fff2ab 255.5px,#daf0f6 256px,#94c7df 256.5px,#6398c6 257px,#4b7cb8 257.5px,#4a7bb7 258px,#6095c5 258.5px,#8dc1dc 259px,#d0ebf3 259.5px,#fffab7 260px,#fdbb6d 260.5px,#ec5c3b 261px,#b71226 261.5px,#a50026 262px,#a80326 264.5px,#dd3c2d 265px,#f99053 265.5px,#fee191 266px,#edf8e0 266.5px,#a4d3e6 267px,#588cc0 267.5px,#333d99 268px,#313695 271px,#34409a 271.5px,#69a0cb 272px,#c9e8f2 272.5px,#fff3ad 273px,#fcaa5f 273.5px,#e75236 274px,#c21c27 274.5px,#aa0526 275px,#ae0926 275.5px,#cf2827 276px,#f46e43 276.5px,#fec779 277px,#fcfec4 277.5px,#c4e5f0 278px,#8cc0db 278.5px,#71aacf 279px,#70a8ce 279.5px);-webkit-mask-image:linear-gradient(90deg,transparent,#000 50.0%);mask-image:linear-gradient(90deg,transparent,#000 50.0%)"></div>
<div class="a" style="left:391px;top:0;width:10px;height:100%;background:linear-gradient(#f6fbd0 0px,#ffffbe 1px,#fdbb6d 6px,#feca7b 7px,#fff2ab 8px,#f6fccf 8.5px,#ddf1f7 9px,#89bdda 10px,#4a7bb7 11px,#3a52a3 12px,#3950a2 12.5px,#436fb1 13.5px,#598dc0 14px,#cfebf3 15.5px,#f1fad9 16px,#fff3ac 16.5px,#fdb366 17.5px,#f99053 18px,#f57547 18.5px,#f0643f 19.5px,#f57547 21px,#fb9d59 22.5px,#fedf8f 25px,#fff2ab 27px,#fee496 30px,#fcaa5f 33px,#f98f53 35.5px,#fdb86b 37px,#fff6b1 38.5px,#f6fccf 39px,#e4f5f0 39.5px,#cae8f2 40px,#85bad8 41.5px,#71a9cf 43px,#a7d6e7 47.5px,#b6deec 50px,#d9f0f6 51.5px,#fffcba 53px,#fed888 54px,#f47044 55.5px,#ce2727 56.5px,#a50026 57.5px,#a50026 67px,#dc3a2c 68px,#f47044 68.5px,#fdb669 69px,#feefa7 69.5px,#e2f4f4 70px,#93c6df 70.5px,#4979b6 71px,#313695 71.5px,#313695 87px,#384da0 87.5px,#5487bd 88px,#c5e6f0 89px,#f5fbd2 89.5px,#fee496 90px,#fdab5f 90.5px,#ee603d 91px,#c82227 91.5px,#a50026 92px,#a50026 99px,#ca2427 99.5px,#fa9656 100.5px,#fff4ae 101.5px,#eaf7e6 102px,#bbe1ee 102.5px,#5588be 103.5px,#3951a2 104px,#313695 104.5px,#313695 112.5px,#4169ae 113px,#689ec9 113.5px,#d1ecf4 114.5px,#f7fcce 115px,#fee89c 115.5px,#f77f4b 116.5px,#bd1726 117.5px,#a50026 118px,#a50026 129.5px,#bb1526 133.5px,#cf2927 134px,#ea5839 134.5px,#fba15b 135px,#fee79a 135.5px,#e6f5ec 136px,#93c6de 136.5px,#4473b3 137px,#313695 137.5px,#313695 143px,#35429b 143.5px,#5b8fc2 145px,#6ea6cd 146px,#5f94c4 147px,#313695 148px,#313695 151.5px,#4575b4 152px,#a5d4e6 152.5px,#fdfec3 153px,#fdae61 153.5px,#d83228 154px,#a50026 154.5px,#a50026 158.5px,#de3e2d 159px,#fb9f5a 159.5px,#feea9f 160px,#e6f5ee 160.5px,#669cc8 161.5px,#426baf 162px,#374a9f 162.5px,#333e99 163px,#36459d 163.5px,#5386bd 164.5px,#b1dceb 165.5px,#e4f5f1 166px,#fffbba 166.5px,#fdbf71 167.5px,#fb9d59 168.5px,#fdb366 169.5px,#fffdbc 171px,#e6f5ec 171.5px,#bae0ed 172px,#588cc0 173px,#3c57a5 173.5px,#313695 174px,#313695 177.5px,#3e60aa 178px,#72abd0 178.5px,#bfe3ef 179px,#f8fccc 179.5px,#fedb8c 180px,#fba05b 180.5px,#f26941 181px,#e34932 181.5px,#de3f2e 182px,#e64f35 182.5px,#f67a49 183px,#fdba6d 183.5px,#fff0a9 184px,#e3f4f2 184.5px,#659bc7 185.5px,#436eb0 186px,#3b56a5 186.5px,#3c5aa7 187px,#4777b5 187.5px,#6ea6cd 188px,#acdae9 188.5px,#edf8e0 189px,#fee192 189.5px,#f88850 190px,#cf2827 190.5px,#a50026 191px,#a50026 195px,#d93429 195.5px,#fa9957 196px,#feea9f 196.5px,#e4f5f1 197px,#649ac7 198px,#436fb1 198.5px,#3c59a6 199px,#3d5ba7 199.5px,#4471b2 200px,#6096c5 200.5px,#cae8f2 201.5px,#fafdc8 202px,#fed989 202.5px,#e14430 203.5px,#b20d26 204px,#a50026 204.5px,#a50026 207px,#d62f27 207.5px,#f7834d 208px,#fed687 208.5px,#f7fccd 209px,#c3e5f0 209.5px,#659cc8 210.5px,#578bbf 211px,#5c91c2 211.5px,#73acd0 212px,#d2ecf4 213px,#f9fdcb 213.5px,#fdc576 214.5px,#fca75e 215.5px,#fecb7c 216.5px,#fafdc8 217.5px,#d8eff6 218px,#a2d2e5 218.5px,#4676b5 219.5px,#313695 220.5px,#313695 221.5px,#37489e 222px,#4778b5 222.5px,#c0e3ef 223.5px,#fafdc7 224px,#fecc7d 224.5px,#f46f44 225px,#bf1927 225.5px,#a50026 226px,#a50026 230px,#de3f2e 230.5px,#fdaf62 231px,#fffab8 231.5px,#c1e4ef 232px,#6da5cd 232.5px,#3d5aa7 233px,#313695 233.5px,#35429b 235.5px,#5285bc 236px,#97c9e0 236.5px,#e6f5ed 237px,#fee496 237.5px,#f88b51 238px,#d22b27 238.5px,#a50026 239px,#a50026 242px,#c82127 242.5px,#fa9957 243px,#fffab8 243.5px,#a8d7e8 244px,#436db0 244.5px,#313695 245px,#313695 245.5px,#313695 248.5px,#6095c5 249px,#c0e3ef 249.5px,#fff6b2 250px,#fca55d 250.5px,#db382b 251px,#a50026 251.5px,#a50026 254.5px,#b91326 255px,#f67948 255.5px,#fee293 256px,#e4f4f1 256.5px,#93c6df 257px,#588bc0 257.5px,#4064ac 258px,#3e5ea9 258.5px,#497ab7 259px,#79b1d3 259.5px,#c8e7f1 260px,#fff6b1 260.5px,#fba25b 261px,#d73027 261.5px,#a50026 262px,#a50026 265px,#d12a27 265.5px,#f88a50 266px,#fee597 266.5px,#e2f4f3 267px,#87bcd9 267.5px,#3f63ab 268px,#313695 268.5px,#313695 272px,#679dc9 272.5px,#d7eef5 273px,#fee294 273.5px,#f67948 274px,#c51f27 274.5px,#a50026 275px,#a50026 276px,#bf1927 276.5px,#f67848 277px,#fee495 277.5px,#e0f3f8 278px,#91c4de 278.5px,#679ec9 279px,#6398c6 279.5px);-webkit-mask-image:linear-gradient(90deg,transparent,#000 50.0%);mask-image:linear-gradient(90deg,transparent,#000 50.0%)"></div>
<div class="a" style="left:396px;top:0;width:10px;height:100%;background:linear-gradient(#f6fbd0 0px,#ffffbe 1px,#fdbb6d 6px,#feca7c 7px,#fff4ae 8px,#d6eef5 9px,#80b6d6 10px,#4473b3 11px,#3d5aa7 11.5px,#394fa1 12.5px,#4473b3 13.5px,#5c90c2 14px,#d1ecf4 15.5px,#f1fad8 16px,#fff3ac 16.5px,#fdb466 17.5px,#f99053 18px,#f57346 18.5px,#ec5d3b 19.5px,#f36b42 21px,#fca85e 23px,#fee091 25px,#fff4ae 27.5px,#fee191 30px,#fba15b 32.5px,#f67f4b 34px,#f67949 35.5px,#fdb063 37px,#fff7b3 38.5px,#dcf1f7 39.5px,#69a0ca 41.5px,#4e80ba 43px,#679ec9 45px,#afdbea 47.5px,#d6eef5 50.5px,#e4f5f0 51px,#fffebe 52px,#fed686 53px,#f88950 54px,#d73127 55px,#a50026 56px,#a50026 69.5px,#c31d27 70px,#f98e52 70.5px,#fff4af 71px,#b2dceb 71.5px,#4574b4 72px,#313695 72.5px,#313695 81px,#36469d 81.5px,#5b8fc1 83.5px,#79b1d3 86px,#ceeaf3 87.5px,#edf8e0 88px,#fff6b2 88.5px,#fed686 89px,#f0653f 90px,#d32c27 90.5px,#a50026 91px,#af0926 98px,#d93429 98.5px,#f46c43 99px,#fedf8f 100px,#ffffbf 100.5px,#dff2f8 101px,#a9d7e8 101.5px,#4677b5 102.5px,#343f9a 103px,#313695 103.5px,#313695 111px,#36479d 111.5px,#4778b5 112px,#cdeaf3 113.5px,#f1fad8 114px,#fff0a9 114.5px,#fecd7e 115px,#f0643f 116px,#d73027 116.5px,#b00a26 117px,#a50026 117.5px,#a90426 124.5px,#dc3b2c 125px,#f67f4b 125.5px,#fdbc6e 126px,#fee496 126.5px,#fff9b6 127px,#f2fad7 128px,#feffc1 129px,#fed686 130px,#f57547 131px,#e04330 131.5px,#a90426 132.5px,#a50026 133px,#a60126 134px,#cf2827 134.5px,#f57245 135px,#fecf80 135.5px,#f2fad8 136px,#9bcce2 136.5px,#436eb1 137px,#313695 137.5px,#313695 141.5px,#5284bc 142px,#9dcee3 142.5px,#e8f6ea 143px,#fee99e 143.5px,#fdab60 144px,#ee613d 144.5px,#d12b27 145px,#a50026 146px,#a90426 146.5px,#d93329 147px,#fba25b 147.5px,#fcfec4 148px,#8cc1dc 148.5px,#34409a 149px,#313695 149.5px,#313695 151.5px,#3950a2 152px,#85bad8 152.5px,#edf8e0 153px,#fdc173 153.5px,#df412f 154px,#a50026 154.5px,#a50026 158.5px,#d83128 159px,#f98e52 159.5px,#fee192 160px,#eef8df 160.5px,#acd9e9 161px,#689ec9 161.5px,#3e60aa 162px,#313695 162.5px,#313695 164.5px,#3c57a5 165px,#6197c6 165.5px,#a3d3e6 166px,#e6f5ee 166.5px,#fff0a9 167px,#fdc072 167.5px,#f88a50 168px,#ef633e 168.5px,#e75237 169px,#f36b42 170px,#f99254 170.5px,#feeca2 171.5px,#eff9dd 172px,#b9e0ed 172.5px,#426cb0 173.5px,#313695 174px,#313695 177.5px,#37479e 178px,#6ea6cd 178.5px,#cce9f2 179px,#fff3ac 179.5px,#fcaa5f 180px,#e54e35 180.5px,#b91326 181px,#a50026 181.5px,#a50026 182.5px,#bb1526 183px,#e65036 183.5px,#fca75e 184px,#feeda3 184.5px,#e2f4f5 185px,#5c90c2 186px,#3f61aa 186.5px,#374a9f 187px,#3950a2 187.5px,#436fb1 188px,#6aa1cb 188.5px,#aad9e9 189px,#eef8df 189.5px,#fedd8e 190px,#f77f4c 190.5px,#c62027 191px,#a50026 191.5px,#a50026 195.5px,#e85337 196px,#fdbc6e 196.5px,#fffebe 197px,#c4e5f0 197.5px,#7cb3d4 198px,#4c7db8 198.5px,#3c58a6 199px,#384da0 199.5px,#3c59a6 200px,#497ab7 200.5px,#abd9e9 201.5px,#e8f6ea 202px,#feeca3 202.5px,#fdb063 203px,#ec5d3c 203.5px,#c31d27 204px,#a50026 204.5px,#a50026 207px,#dc3a2b 207.5px,#f99254 208px,#fee394 208.5px,#ecf8e2 209px,#abd9e9 209.5px,#6da5cd 210px,#4778b5 210.5px,#3e5fa9 211px,#3f63ab 211.5px,#4e80ba 212px,#b6dfec 213px,#eff9dc 213.5px,#fee89d 214px,#fdb86a 214.5px,#f88a51 215px,#f57446 215.5px,#f57748 216px,#fdb163 217px,#fff8b4 218px,#e7f6ec 218.5px,#b3ddeb 219px,#4f81ba 220px,#313695 221px,#313695 222.5px,#3f61aa 223px,#69a0ca 223.5px,#b2dceb 224px,#f5fbd1 224.5px,#fece7f 225px,#f36a42 225.5px,#b61126 226px,#a50026 226.5px,#a50026 230px,#ba1426 230.5px,#f67848 231px,#fee191 231.5px,#e3f4f2 232px,#87bcd9 232.5px,#4169ae 233px,#313695 233.5px,#313695 236px,#4471b2 236.5px,#8ec1dc 237px,#e6f5ee 237.5px,#fee191 238px,#f67c4a 238.5px,#c21c27 239px,#a50026 239.5px,#a50026 242.5px,#d32c27 243px,#fca85e 243.5px,#fdfec3 244px,#9dcee3 244.5px,#3f63ab 245px,#313695 245.5px,#323b97 249px,#6ea6ce 249.5px,#d9eff6 250px,#fee395 250.5px,#f57547 251px,#b50f26 251.5px,#a50026 252px,#a50026 255px,#d62f27 255.5px,#fba35c 256px,#fff6b2 256.5px,#c7e7f1 257px,#77b0d2 257.5px,#4676b5 258px,#3b55a4 258.5px,#3c58a6 259px,#4d7eb9 259.5px,#86bcd9 260px,#dcf1f7 260.5px,#fee79a 261px,#f67f4b 261.5px,#ba1426 262px,#a50026 262.5px,#a50026 265.5px,#c72127 266px,#f7824d 266.5px,#fee395 267px,#e2f4f5 267.5px,#82b8d7 268px,#3d5aa7 268.5px,#313695 269px,#313695 272px,#37479e 272.5px,#87bcd9 273px,#f1fad9 273.5px,#fdbe70 274px,#e54d34 274.5px,#aa0526 275px,#a50026 275.5px,#a50026 276.5px,#e54e35 277px,#fec779 277.5px,#ecf8e1 278px,#97c9e0 278.5px,#6095c5 279px,#5689be 279.5px);-webkit-mask-image:linear-gradient(90deg,transparent,#000 50.0%);mask-image:linear-gradient(90deg,transparent,#000 50.0%)"></div>
<div class="a" style="left:401px;top:0;width:10px;height:100%;background:linear-gradient(#f6fbd0 0px,#ffffbe 1px,#fdbb6d 6px,#fecb7c 7px,#fff6b2 8px,#cfebf3 9px,#5689bf 10.5px,#3b54a4 11.5px,#384ba0 12px,#394fa1 12.5px,#4676b5 13.5px,#7fb6d6 14.5px,#d3ecf4 15.5px,#f2fad7 16px,#fff3ac 16.5px,#f99053 18px,#ed5e3c 19px,#e95538 20px,#f46d43 21.5px,#fee192 25px,#fff5b0 27px,#fff0a9 28.5px,#fedb8b 30px,#fdaf62 31.5px,#f46f44 33.5px,#ee603d 35px,#f57346 36px,#fcaa5f 37px,#fffcba 38.5px,#ebf7e4 39px,#cae8f2 39.5px,#7fb6d6 40.5px,#4a7bb7 41.5px,#384da0 43px,#3c58a6 44px,#497ab6 45px,#b3ddeb 47.5px,#dbf1f7 49px,#e7f6eb 50px,#ffffc0 51px,#fedb8b 52px,#ee603d 53.5px,#b50f26 54.5px,#a50026 55px,#a50026 70.5px,#eb5a3a 71px,#fed484 71.5px,#e2f4f5 72px,#6ea6ce 72.5px,#313695 73px,#313695 78.5px,#3e5fa9 79px,#689ec9 79.5px,#a3d3e6 80px,#dff2f8 80.5px,#fffdbb 81px,#fca75e 82px,#de3e2d 83px,#ab0626 84px,#a50026 84.5px,#a60126 86.5px,#da362a 88px,#f26841 89px,#fba15b 90.5px,#fca95f 91.5px,#fa9957 92px,#e54e35 92.5px,#a50026 93px,#a70226 97.5px,#e14430 99px,#f98e52 100px,#fee496 101px,#fdfec3 101.5px,#ddf1f7 102px,#a7d6e7 102.5px,#4575b4 103.5px,#343f99 104px,#313695 104.5px,#313695 109.5px,#34409a 110px,#3f62ab 110.5px,#72aad0 111.5px,#bee2ee 112.5px,#e3f4f2 113px,#fbfdc7 113.5px,#fecb7d 114.5px,#f57145 115.5px,#e14430 116px,#a50026 117px,#a50026 124px,#c72027 124.5px,#f67848 125px,#fed081 125.5px,#fbfdc6 126px,#cae8f2 126.5px,#6da4cc 127.5px,#5b90c2 128px,#5c91c2 128.5px,#72abd0 129px,#e1f4f5 130px,#fff0a9 130.5px,#fdae61 131px,#e65035 131.5px,#b00b26 132px,#a50026 132.5px,#a50026 134.5px,#de3e2d 135px,#fdaf62 135.5px,#feffc0 136px,#a6d5e7 136.5px,#436fb1 137px,#313695 137.5px,#313695 141px,#4878b6 141.5px,#9dcee3 142px,#f1fad9 142.5px,#fecf80 143px,#f36b42 143.5px,#bb1526 144px,#a50026 144.5px,#a50026 147px,#d62f27 147.5px,#fdbc6e 148px,#e8f6ea 148.5px,#6ea6ce 149px,#313695 149.5px,#343f9a 152px,#72aad0 152.5px,#e2f4f4 153px,#fecf80 153.5px,#e44c34 154px,#a50026 154.5px,#a50026 158.5px,#d93429 159px,#f99153 159.5px,#fee395 160px,#ebf7e4 160.5px,#a3d3e6 161px,#5c90c2 161.5px,#37489e 162px,#313695 162.5px,#313695 165px,#323a97 165.5px,#598dc0 166px,#aad9e9 166.5px,#f3fbd4 167px,#fed586 167.5px,#f7844e 168px,#dd3c2d 168.5px,#b91426 169px,#a60126 169.5px,#bd1726 170.5px,#de3f2e 171px,#fecf80 172px,#fafdc8 172.5px,#b8e0ed 173px,#649ac7 173.5px,#34419a 174px,#313695 174.5px,#313695 178px,#6ea6cd 178.5px,#e0f3f8 179px,#fed98a 179.5px,#f0653f 180px,#ad0826 180.5px,#a50026 181px,#a50026 183px,#c11b27 183.5px,#f57647 184px,#fedc8c 184.5px,#e9f6e8 185px,#95c8e0 185.5px,#4e7fb9 186px,#343f99 186.5px,#313695 188px,#3c59a6 188.5px,#6399c7 189px,#acd9e9 189.5px,#f2fad6 190px,#fed282 190.5px,#f46d43 191px,#b81226 191.5px,#a50026 192px,#ac0626 196px,#ec5c3b 196.5px,#fdc173 197px,#ffffc0 197.5px,#c6e6f1 198px,#82b8d7 198.5px,#5588be 199px,#4168ae 199.5px,#3e60aa 200px,#4472b3 200.5px,#659bc8 201px,#e4f5f1 202px,#feeca2 202.5px,#fca85e 203px,#e85438 203.5px,#c21c27 204px,#a50026 204.5px,#a50026 205.5px,#b91326 206px,#dd3c2d 206.5px,#f67e4b 207px,#fec879 207.5px,#fffbb9 208px,#d4edf4 208.5px,#5589be 209.5px,#3a53a3 210px,#313695 210.5px,#313695 211.5px,#3c58a6 212px,#669cc8 212.5px,#b6deec 213px,#fbfec6 213.5px,#fdc476 214px,#f26941 214.5px,#cb2427 215px,#a60126 215.5px,#a50026 216px,#a60126 216.5px,#c21c27 217px,#e44c34 217.5px,#f99254 218px,#fedb8b 218.5px,#f5fbd2 219px,#b6deec 219.5px,#6ba2cb 220px,#3b57a5 220.5px,#313695 221px,#313695 223.5px,#394ea1 224px,#72abd0 224.5px,#d5eef5 225px,#fee79b 225.5px,#f67e4b 226px,#ba1426 226.5px,#a50026 227px,#a50026 230.5px,#df412f 231px,#fdb568 231.5px,#fdfec3 232px,#acdae9 232.5px,#5284bc 233px,#313695 233.5px,#313695 236.5px,#3e60aa 237px,#87bdd9 237.5px,#e7f6eb 238px,#fed889 238.5px,#f36b42 239px,#b20c26 239.5px,#a50026 240px,#a50026 243px,#de402e 243.5px,#fdbb6d 244px,#f3fad5 244.5px,#90c3dd 245px,#3c57a5 245.5px,#313695 246px,#313695 249px,#37489e 249.5px,#83b9d8 250px,#eef8de 250.5px,#fdc072 251px,#df402f 251.5px,#a50026 252px,#af0a26 255.5px,#f57145 256px,#fee090 256.5px,#e5f5ee 257px,#5d91c3 258px,#4370b1 258.5px,#436fb1 259px,#588bbf 259.5px,#87bcd9 260px,#cfebf3 260.5px,#fff6b1 261px,#fdab60 261.5px,#dd3d2d 262px,#a50026 262.5px,#a50026 266px,#c11b27 266.5px,#f67e4b 267px,#fee395 267.5px,#e0f3f8 268px,#7db4d5 268.5px,#3a53a3 269px,#313695 269.5px,#313695 272.5px,#426db0 273px,#afdbea 273.5px,#fff4ae 274px,#f99053 274.5px,#cd2727 275px,#a50026 275.5px,#a50026 276.5px,#d12a27 277px,#fca65e 277.5px,#fbfdc7 278px,#a2d2e5 278.5px,#5c90c2 279px,#4979b6 279.5px);-webkit-mask-image:linear-gradient(90deg,transparent,#000 50.0%);mask-image:linear-gradient(90deg,transparent,#000 50.0%)"></div>
<div class="a" style="left:406px;top:0;width:10px;height:100%;background:linear-gradient(#f6fbd0 0px,#ffffbe 1px,#fdbb6d 6px,#fecc7d 7px,#fff8b5 8px,#edf8e0 8.5px,#c8e7f1 9px,#4f81ba 10.5px,#394ea1 11.5px,#37499e 12px,#4979b6 13.5px,#82b9d7 14.5px,#d4edf5 15.5px,#fff3ad 16.5px,#f99053 18px,#eb5b3b 19px,#e44c34 20px,#ef623e 21.5px,#fdaf62 23.5px,#fee090 25px,#fff5af 27px,#fee192 29.5px,#f36b42 33px,#e65136 35px,#f26a41 36px,#fcaa5f 37px,#feeca2 38px,#f9fdca 38.5px,#ddf2f7 39px,#83b9d8 40px,#426baf 41px,#313695 42px,#313695 44.5px,#323896 45px,#5183bb 46.5px,#c5e6f0 48.5px,#e3f4f3 49px,#f6fccf 49.5px,#fedf8f 50.5px,#f26941 52px,#a70226 53.5px,#a50026 54px,#a50026 60.5px,#d73027 62px,#e54d35 63.5px,#d02927 65px,#a50026 66px,#a50026 71px,#d73027 71.5px,#fca95f 72px,#feffc0 72.5px,#a2d2e5 73px,#4168ae 73.5px,#313695 74px,#313695 78.5px,#3a53a3 79px,#6aa1cb 79.5px,#b5deec 80px,#f3fad5 80.5px,#fede8e 81px,#e0422f 82px,#ac0726 82.5px,#a50026 83px,#a50026 87px,#d73027 87.5px,#f8874f 88px,#feda8a 88.5px,#f4fbd3 89px,#b7dfec 89.5px,#71aacf 90px,#426caf 90.5px,#313795 91px,#313695 92.5px,#71aacf 93.5px,#bbe1ee 94.5px,#e6f6ec 95px,#fff8b5 95.5px,#fed283 96px,#e85438 97px,#c41e27 97.5px,#a50026 98px,#a50026 101.5px,#c01a27 102px,#ed5e3c 102.5px,#fdb164 103px,#feeda3 103.5px,#eaf7e6 104px,#b4ddec 104.5px,#6095c4 105.5px,#497ab6 106.5px,#4879b6 108px,#5588be 110px,#75aed1 112px,#daf0f6 115px,#fbfdc6 116px,#fed081 117px,#f16740 118px,#d52e27 118.5px,#a70226 119px,#a50026 119.5px,#ad0826 124.5px,#ed5e3c 125px,#fdc274 125.5px,#ffffbf 126px,#c9e8f2 126.5px,#5f94c4 127.5px,#4b7cb8 128px,#4c7db8 128.5px,#649ac7 129px,#e2f4f4 130px,#fee99d 130.5px,#f99053 131px,#cf2927 131.5px,#a50026 132px,#a50026 134.5px,#cc2627 135px,#fb9f5a 135.5px,#fffebd 136px,#a0d1e4 136.5px,#3f63ab 137px,#313695 137.5px,#34409a 141px,#6ca3cc 141.5px,#ceeaf3 142px,#feeea5 142.5px,#f99455 143px,#d12a27 143.5px,#a50026 144px,#a50026 147px,#c31d27 147.5px,#fa9a58 148px,#fffcbb 148.5px,#a7d6e7 149px,#4777b5 149.5px,#313695 150px,#323a97 152px,#679ec9 152.5px,#d5eef5 153px,#fedc8d 153.5px,#ea5839 154px,#a50026 154.5px,#a50026 158.5px,#e14531 159px,#fca75e 159.5px,#fff0a8 160px,#d9f0f6 160.5px,#84bad8 161px,#426baf 161.5px,#313695 162px,#313695 165.5px,#36459c 166px,#71a9cf 166.5px,#d4edf5 167px,#feeca2 167.5px,#fa9a58 168px,#de3f2e 168.5px,#ad0726 169px,#a50026 169.5px,#a50026 170.5px,#b81226 171px,#e44c34 171.5px,#fca65d 172px,#fff0a8 172.5px,#d2ecf4 173px,#71aacf 173.5px,#36459c 174px,#313695 174.5px,#313695 178px,#4065ac 178.5px,#9ccde2 179px,#f8fccd 179.5px,#fdbe70 180px,#ea5839 180.5px,#b91326 181px,#a50026 181.5px,#a50026 182.5px,#c31d27 183px,#f26a41 183.5px,#fece7f 184px,#eef9dd 184.5px,#93c5de 185px,#4168ae 185.5px,#313695 186px,#313695 188.5px,#384b9f 189px,#679ec9 189.5px,#bde2ee 190px,#fffdbc 190.5px,#fdb76a 191px,#e54e35 191.5px,#a50026 192px,#a50026 196.5px,#e24631 197px,#fca55d 197.5px,#feea9f 198px,#eaf7e6 198.5px,#b3ddeb 199px,#82b8d7 199.5px,#5a8ec1 200.5px,#659bc8 201px,#93c6df 201.5px,#e1f3f6 202px,#fee699 202.5px,#f98e52 203px,#dd3d2d 203.5px,#c21c27 204px,#bf1927 204.5px,#e54d34 205.5px,#f7864e 206px,#fff7b3 207px,#dcf1f7 207.5px,#5487bd 208.5px,#35439c 209px,#313695 209.5px,#323997 212px,#6096c5 212.5px,#c1e4ef 213px,#fff2ac 213.5px,#f99455 214px,#cd2627 214.5px,#a50026 215px,#a50026 217.5px,#b30e26 218px,#ed5f3c 218.5px,#fdc576 219px,#f7fccd 219.5px,#a7d6e7 220px,#4f80ba 220.5px,#313695 221px,#313695 224.5px,#5386bd 225px,#c3e5f0 225.5px,#fee99d 226px,#f47145 226.5px,#a70226 227px,#a50026 227.5px,#a50026 230.5px,#c11b27 231px,#f7844d 231.5px,#fee99d 232px,#d3edf4 232.5px,#6fa7ce 233px,#35429b 233.5px,#313695 234px,#313695 237px,#3e5fa9 237.5px,#8ec2dc 238px,#edf8e0 238.5px,#fecd7e 239px,#ee613d 239.5px,#b10b26 240px,#a50026 240.5px,#a50026 243px,#e34832 243.5px,#fdb366 244px,#fffebe 244.5px,#b0dcea 245px,#5082bb 245.5px,#313695 246px,#313695 249.5px,#5082bb 250px,#c3e5f0 250.5px,#fee79a 251px,#f26a41 251.5px,#a50026 252px,#aa0526 255.5px,#f36a42 256px,#feda8b 256.5px,#e9f7e7 257px,#9ecfe4 257.5px,#659bc8 258px,#4b7db8 258.5px,#4c7db8 259px,#6197c6 259.5px,#cce9f2 260.5px,#fffdbd 261px,#fdc072 261.5px,#ec5d3c 262px,#ae0826 262.5px,#a50026 263px,#a50026 266.5px,#c51f27 267px,#f8874f 267.5px,#fee99d 268px,#d5eef5 268.5px,#72aad0 269px,#37489e 269.5px,#313695 270px,#313695 273px,#7cb4d5 273.5px,#f0f9da 274px,#fdb96b 274.5px,#e14430 275px,#a80326 275.5px,#a50026 276.5px,#dc3b2c 277px,#fdb366 277.5px,#f7fcce 278px,#9ecee3 278.5px,#578abf 279px,#436eb1 279.5px);-webkit-mask-image:linear-gradient(90deg,transparent,#000 50.0%);mask-image:linear-gradient(90deg,transparent,#000 50.0%)"></div>
<div class="a" style="left:411px;top:0;width:10px;height:100%;background:linear-gradient(#f6fbd0 0px,#ffffbe 1px,#fdbb6d 6px,#fecd7e 7px,#fffbb9 8px,#e9f7e7 8.5px,#c1e4ef 9px,#4778b5 10.5px,#37499f 11.5px,#37489e 12px,#4b7db8 13.5px,#85bbd9 14.5px,#d6eef5 15.5px,#fff3ad 16.5px,#f99053 18px,#ea5839 19px,#e04330 20px,#e85438 21.5px,#f57245 22.5px,#fece7f 25px,#feeca2 27px,#fedd8e 29.5px,#f57145 33.5px,#ee613e 35px,#f57446 36px,#fdb063 37px,#feefa7 38px,#f5fbd1 38.5px,#d5eef5 39px,#76afd2 40px,#3b57a5 41px,#313695 41.5px,#313695 45.5px,#568abf 47px,#bee2ee 48.5px,#e3f4f3 49px,#fafdc8 49.5px,#fece7f 50.5px,#f57748 51.5px,#cc2627 52.5px,#ae0826 53px,#a50026 53.5px,#a50026 58.5px,#b10c26 59px,#e14430 59.5px,#f98e52 60px,#fed283 60.5px,#fffcbb 61px,#dff3f8 61.5px,#82b9d7 62.5px,#679ec9 63px,#5a8fc1 64px,#87bcd9 65px,#b6deec 65.5px,#e9f6e8 66px,#feefa7 66.5px,#fdb769 67px,#f0643f 67.5px,#c31d27 68px,#a50026 68.5px,#a50026 71.5px,#b71126 72px,#f46e43 72.5px,#feda8b 73px,#e4f5f1 73.5px,#7db4d5 74px,#374a9f 74.5px,#313695 75px,#313695 79px,#3c5aa7 79.5px,#79b1d3 80px,#d0ebf3 80.5px,#fff5af 81px,#fdb063 81.5px,#e54e35 82px,#a90426 82.5px,#a50026 83px,#a50026 87px,#c21c27 87.5px,#f57245 88px,#fecf80 88.5px,#f6fbd0 89px,#b1dceb 89.5px,#6297c6 90px,#37489e 90.5px,#313695 91px,#313695 94.5px,#3f62ab 95px,#73acd1 95.5px,#c0e4ef 96px,#fcfec5 96.5px,#fecc7d 97px,#f57547 97.5px,#cb2427 98px,#a50026 98.5px,#a60126 103.5px,#ec5d3c 104.5px,#fdb567 105.5px,#fee598 106.5px,#f6fcd0 107.5px,#e3f4f2 108px,#c4e5f0 108.5px,#4574b3 110.5px,#313695 111.5px,#313695 116.5px,#394fa1 117px,#649ac7 117.5px,#b0dbea 118px,#f4fbd4 118.5px,#fed585 119px,#f67a49 119.5px,#c92327 120px,#a50026 120.5px,#a50026 124.5px,#e54d34 125px,#fdb86a 125.5px,#fffbb9 126px,#ceeaf3 126.5px,#90c3dd 127px,#69a0ca 127.5px,#5d91c3 128px,#689fca 128.5px,#90c3dd 129px,#d0ebf4 129.5px,#fff8b5 130px,#fdb366 130.5px,#e44b33 131px,#a50026 131.5px,#a50026 134px,#b81226 134.5px,#f57547 135px,#fee496 135.5px,#d4edf5 136px,#669cc8 136.5px,#313695 137px,#313695 140.5px,#4167ad 141px,#93c5de 141.5px,#eef9de 142px,#fecc7d 142.5px,#ec5d3c 143px,#a80326 143.5px,#a50026 147px,#d12b27 147.5px,#fca85e 148px,#ffffc0 148.5px,#abd9e9 149px,#5284bc 149.5px,#313695 150px,#313695 151.5px,#3c59a6 152px,#79b1d3 152.5px,#dff2f8 153px,#fedd8d 153.5px,#f0643f 154px,#a50026 154.5px,#a50026 158.5px,#e34932 159px,#fdad60 159.5px,#fff4ae 160px,#cfebf3 160.5px,#76afd2 161px,#3b56a5 161.5px,#313695 162px,#313695 166px,#5689be 166.5px,#bce1ee 167px,#fff7b3 167.5px,#fcaa5f 168px,#e44b33 168.5px,#b61026 169px,#a50026 169.5px,#a60126 170.5px,#cc2627 171px,#f16740 171.5px,#fdbe70 172px,#fffdbc 172.5px,#bde2ee 173px,#6197c6 173.5px,#313695 174px,#313695 178.5px,#5d91c3 179px,#b2ddeb 179.5px,#f6fbd0 180px,#fedd8d 180.5px,#fca55d 181px,#f57647 181.5px,#ef633e 182px,#f46f44 182.5px,#fba05b 183px,#fee192 183.5px,#ebf7e5 184px,#91c4de 184.5px,#3f62aa 185px,#313695 185.5px,#313695 189px,#4370b2 189.5px,#91c4dd 190px,#e7f6eb 190.5px,#fee191 191px,#f7824d 191.5px,#ca2427 192px,#a50026 192.5px,#ab0626 197px,#e24731 197.5px,#fa9757 198px,#feda8a 198.5px,#fffebe 199px,#e3f4f2 199.5px,#aedbea 200.5px,#aedaea 201px,#d9f0f6 201.5px,#feeea6 202px,#f88c51 202.5px,#cb2527 203px,#a50026 203.5px,#b10c26 204.5px,#d73027 205px,#fdbd6f 206px,#fff7b3 206.5px,#d2ecf4 207px,#7fb6d6 207.5px,#4065ac 208px,#313695 208.5px,#313695 212px,#5d92c3 212.5px,#c8e7f1 213px,#feea9f 213.5px,#f67d4a 214px,#b71126 214.5px,#a50026 215px,#a50026 218px,#da3529 218.5px,#fba35c 219px,#fff6b1 219.5px,#c1e4ef 220px,#6196c5 220.5px,#313695 221px,#313695 224.5px,#5487bd 225px,#c3e5f0 225.5px,#fee89d 226px,#f47045 226.5px,#a80226 227px,#a50026 227.5px,#a50026 230.5px,#bf1927 231px,#f67848 231.5px,#fede8e 232px,#e6f5ec 232.5px,#8bc0db 233px,#4167ad 233.5px,#313695 234px,#313695 237.5px,#5c91c2 238px,#b8e0ed 238.5px,#fffebe 239px,#fdbe70 239.5px,#f26841 240px,#d02927 240.5px,#b10c26 241px,#aa0526 241.5px,#b91326 242px,#da372a 242.5px,#f57848 243px,#fec879 243.5px,#fdfec2 244px,#bbe1ee 244.5px,#659bc7 245px,#34409a 245.5px,#313695 246px,#313695 249px,#4066ad 249.5px,#99cbe1 250px,#f7fccd 250.5px,#fdb668 251px,#dc3a2c 251.5px,#a50026 252px,#a50026 255px,#da362a 255.5px,#fdb568 256px,#f9fdca 256.5px,#a8d7e8 257px,#5c90c2 257.5px,#3c5aa7 258px,#37489e 258.5px,#3b56a5 259px,#4b7cb8 259.5px,#7ab2d4 260px,#bfe3ef 260.5px,#fbfdc7 261px,#fec87a 261.5px,#f16640 262px,#b40f26 262.5px,#a50026 263px,#a50026 267px,#e85438 267.5px,#fdbf71 268px,#fafdc7 268.5px,#b1dceb 269px,#5c91c2 269.5px,#333e99 270px,#313695 270.5px,#313695 272.5px,#4065ac 273px,#a0d0e4 273.5px,#ffffbf 274px,#fdac60 274.5px,#e24732 275px,#bc1626 275.5px,#b51026 276px,#d73027 276.5px,#f7854e 277px,#fee597 277.5px,#dff2f8 278px,#89beda 278.5px,#578abf 279px,#4b7cb8 279.5px);-webkit-mask-image:linear-gradient(90deg,transparent,#000 50.0%);mask-image:linear-gradient(90deg,transparent,#000 50.0%)"></div>
<div class="a" style="left:416px;top:0;width:10px;height:100%;background:linear-gradient(#f6fbd0 0px,#ffffbe 1px,#fdbb6d 6px,#fece7f 7px,#fffdbc 8px,#e6f5ed 8.5px,#bae0ed 9px,#6096c5 10px,#4470b2 10.5px,#36479d 11.5px,#3a53a3 12.5px,#4e80ba 13.5px,#d6eef5 15.5px,#fff4ae 16.5px,#fdb86b 17.5px,#ea5839 19px,#dd3c2c 20.5px,#e75136 22px,#fdb86b 25px,#fede8e 27px,#fedb8b 29px,#fa9656 33px,#f67f4b 35.5px,#fdae61 37px,#fff7b3 38.5px,#d6eef5 39.5px,#4e80ba 41.5px,#394fa1 42.5px,#343f99 43.5px,#374a9f 44.5px,#4f81ba 46px,#7db5d5 47px,#e0f3f7 48.5px,#f6fbd0 49px,#feda8b 50px,#ee613e 51.5px,#a60126 53px,#a50026 53.5px,#ad0826 58.5px,#da362a 59px,#f57647 59.5px,#feeca3 60.5px,#eef8de 61px,#bee3ee 61.5px,#5d91c3 62.5px,#4168ae 63px,#313695 64px,#333c98 65px,#578abf 66px,#cde9f2 67px,#feffc1 67.5px,#fecf80 68px,#f7824d 68.5px,#da3529 69px,#a70226 69.5px,#a50026 70px,#af0926 72.5px,#e54e35 73px,#fdb063 73.5px,#fff7b4 74px,#c3e5f0 74.5px,#659cc8 75px,#323a97 75.5px,#313695 76px,#333b98 80px,#6399c7 80.5px,#bde2ee 81px,#fffbb9 81.5px,#fdb467 82px,#e44c34 82.5px,#a50026 83px,#a50026 87px,#b61126 87.5px,#ee603d 88px,#fdbf71 88.5px,#fffebd 89px,#c1e4ef 89.5px,#6ea6cd 90px,#3a53a3 90.5px,#313695 91px,#313695 95px,#426caf 95.5px,#cae8f2 96.5px,#fffebd 97px,#fdc778 97.5px,#f57346 98px,#cd2627 98.5px,#a50026 99px,#ab0626 105px,#cf2827 105.5px,#f88950 106.5px,#fee598 107.5px,#fdfec2 108px,#e2f4f5 108.5px,#b4ddeb 109px,#5c90c2 110px,#313695 111px,#313695 117px,#426baf 117.5px,#82b8d7 118px,#d4edf5 118.5px,#fff4ae 119px,#fdb265 119.5px,#e85437 120px,#b00b26 120.5px,#a50026 121px,#a50026 124.5px,#dc3b2c 125px,#fdab5f 125.5px,#fff4ae 126px,#dbf0f6 126.5px,#a2d2e5 127px,#84bad8 127.5px,#84bad8 128px,#9fd0e4 128.5px,#d2ecf4 129px,#fffebd 129.5px,#fdc576 130px,#f16841 130.5px,#be1827 131px,#a50026 131.5px,#a50026 133.5px,#c61f27 134px,#f57848 134.5px,#fedc8c 135px,#e6f5ee 135.5px,#84b9d8 136px,#3b55a4 136.5px,#313695 137px,#313695 140.5px,#4778b5 141px,#9fcfe4 141.5px,#f2fad6 142px,#fecc7e 142.5px,#f26841 143px,#bb1526 143.5px,#a50026 144px,#a50026 146.5px,#c62027 147px,#f7804c 147.5px,#fee293 148px,#e4f5f0 148.5px,#8fc3dd 149px,#4b7cb8 149.5px,#34409a 150px,#313695 151px,#35439b 151.5px,#4f81ba 152px,#96c8e0 152.5px,#e9f7e7 153px,#fed989 153.5px,#f46e43 154px,#b30e26 154.5px,#a50026 155px,#a50026 158.5px,#dc3b2c 159px,#fa9857 159.5px,#fee89c 160px,#e4f4f1 160.5px,#92c5de 161px,#4879b6 161.5px,#313695 162px,#313695 165.5px,#3a52a3 166px,#7bb3d4 166.5px,#dbf1f7 167px,#feeba0 167.5px,#fb9e5a 168px,#e54d34 168.5px,#c11b27 169px,#ac0626 169.5px,#c41d27 170.5px,#e34a33 171px,#f99154 171.5px,#fedd8d 172px,#f0f9db 172.5px,#a3d3e6 173px,#5082bb 173.5px,#313695 174px,#313695 175px,#313695 178.5px,#394fa1 179px,#9acce2 180px,#d0ebf3 180.5px,#ffffbe 181.5px,#fffab8 182.5px,#f3fad6 183px,#ceeaf3 183.5px,#8dc1dc 184px,#4a7bb7 184.5px,#313695 185px,#313695 188.5px,#37489e 189px,#6096c5 189.5px,#acd9e9 190px,#f1f9d9 190.5px,#fedc8c 191px,#f8884f 191.5px,#d73027 192px,#a50026 192.5px,#a50026 197.5px,#f46d43 199px,#fca65d 200px,#fdae61 200.5px,#fa9a58 201px,#ee603d 201.5px,#c01a27 202px,#a50026 202.5px,#a50026 204.5px,#d12b27 205px,#f67b4a 205.5px,#fed383 206px,#f4fbd4 206.5px,#a9d8e8 207px,#5588be 207.5px,#313695 208px,#313695 212px,#5c90c2 212.5px,#cae8f2 213px,#fee89c 213.5px,#f57747 214px,#b20c26 214.5px,#a50026 215px,#a50026 218px,#d52e27 218.5px,#fa9a58 219px,#fff1a9 219.5px,#cbe9f2 220px,#6ca3cc 220.5px,#36469d 221px,#313695 221.5px,#313695 224px,#394ea1 224.5px,#81b8d7 225px,#eaf7e5 225.5px,#fec87a 226px,#e44c34 226.5px,#a50026 227px,#a50026 230.5px,#c72027 231px,#f67848 231.5px,#fed586 232px,#f2fad7 232.5px,#aad8e8 233px,#5c90c2 233.5px,#35429b 234px,#313695 235px,#313695 237.5px,#4c7db8 238px,#93c6df 238.5px,#e0f3f8 239px,#fff4af 239.5px,#fb9e5a 240.5px,#f7844e 241px,#f7854e 241.5px,#fdc778 242.5px,#fff0a9 243px,#e7f6eb 243.5px,#a4d4e6 244px,#5d92c3 244.5px,#36459c 245px,#313695 245.5px,#313695 248.5px,#4d7fb9 249px,#a0d0e4 249.5px,#f1fad8 250px,#fece7f 250.5px,#f16640 251px,#b40e26 251.5px,#a50026 252px,#a50026 254.5px,#b71126 255px,#f88c51 255.5px,#fff8b4 256px,#addaea 256.5px,#4e7fb9 257px,#313695 257.5px,#313695 259px,#3d5ba7 259.5px,#689ec9 260px,#b3ddeb 260.5px,#f7fcce 261px,#fecb7c 261.5px,#f16740 262px,#b51026 262.5px,#a50026 263px,#a50026 267px,#dc3a2c 267.5px,#fb9e5a 268px,#feeba1 268.5px,#e2f4f5 269px,#578abf 270px,#394fa2 270.5px,#313695 271px,#313695 272px,#3b56a5 272.5px,#73abd0 273px,#d4edf5 273.5px,#feeba0 274px,#fa9b58 274.5px,#e75136 275px,#d83228 275.5px,#df402e 276px,#f57647 276.5px,#fdc778 277px,#fcfec4 277.5px,#bfe3ef 278px,#7eb5d6 278.5px,#5f94c4 279px,#5c90c2 279.5px);-webkit-mask-image:linear-gradient(90deg,transparent,#000 50.0%);mask-image:linear-gradient(90deg,transparent,#000 50.0%)"></div>
<div class="a" style="left:421px;top:0;width:10px;height:100%;background:linear-gradient(#f6fbd0 0px,#ffffbe 1px,#fdbb6d 6px,#fecc7d 7px,#fff7b3 8px,#ceeaf3 9px,#598dc1 10.5px,#3f62ab 11.5px,#3e5fa9 12px,#568abf 13.5px,#a7d6e7 15px,#e1f3f6 16px,#ffffbf 17px,#fed787 18px,#f99053 19px,#e85337 20px,#de3f2e 21px,#e54e35 22.5px,#fdae61 27.5px,#fa9957 36px,#fdaf62 37px,#fff6b1 39px,#e6f5ed 40px,#cdeaf3 40.5px,#72aad0 42.5px,#6095c5 44px,#7fb6d6 46px,#d5edf5 48px,#fafdc9 49px,#fee191 50px,#f7804c 51.5px,#c82227 53px,#a50026 54px,#a70226 59px,#ec5c3b 60px,#fed585 61px,#fffab8 61.5px,#e4f4f1 62px,#5c91c2 63.5px,#436fb1 64px,#37479e 65px,#37489e 65.5px,#4b7cb8 66.5px,#70a8ce 67px,#e0f3f8 68px,#fff9b6 68.5px,#f88b51 69.5px,#e44a33 70px,#a50026 71px,#a50026 72.5px,#ba1526 73px,#e24732 73.5px,#f99455 74px,#fee192 74.5px,#edf8e1 75px,#a0d0e4 75.5px,#5082bb 76px,#313695 76.5px,#313695 80.5px,#5284bc 81px,#aedaea 81.5px,#fdfec3 82px,#fdb86b 82.5px,#e44c34 83px,#a50026 83.5px,#b00b26 87.5px,#e75237 88px,#fdaf62 88.5px,#fff1aa 89px,#dcf1f7 89.5px,#8ec2dd 90px,#4d7eb9 90.5px,#323996 91px,#313695 94.5px,#3950a2 95px,#5589be 95.5px,#c8e7f1 96.5px,#f7fcce 97px,#fee294 97.5px,#fca95e 98px,#cf2827 99px,#a50026 99.5px,#ad0826 104.5px,#cd2627 105px,#f67e4b 106px,#fedc8c 107px,#fff9b6 107.5px,#e9f7e7 108px,#c0e3ef 108.5px,#6298c6 109.5px,#313695 110.5px,#313695 117px,#384da1 117.5px,#689fca 118px,#b7dfec 118.5px,#f7fcce 119px,#fed384 119.5px,#f7804c 120px,#d42d27 120.5px,#a50026 121px,#a50026 125px,#c92327 125.5px,#ee613d 126px,#fa9a58 126.5px,#fdbe70 127px,#fecb7d 127.5px,#fdba6c 128.5px,#f46f44 129.5px,#c11a27 130.5px,#a50026 131px,#a50026 132.5px,#ae0926 133px,#dc3a2b 133.5px,#f88950 134px,#fedd8d 134.5px,#edf8e1 135px,#9bcce2 135.5px,#4879b6 136px,#313695 136.5px,#313695 140.5px,#4064ac 141px,#7fb6d6 141.5px,#d1ebf4 142px,#fff9b7 142.5px,#fdc677 143px,#f7824d 143.5px,#e44b34 144px,#d12a27 144.5px,#c62027 145px,#e0422f 146px,#f57446 146.5px,#fdb669 147px,#feeca2 147.5px,#eaf7e6 148px,#aedaea 148.5px,#4676b5 149.5px,#3950a2 150px,#343f99 150.5px,#36479d 151px,#4169ae 151.5px,#689fca 152px,#acd9e9 152.5px,#f0f9da 153px,#fed889 153.5px,#f67949 154px,#c51e27 154.5px,#a50026 155px,#a50026 158.5px,#d22b27 159px,#f7804c 159.5px,#fed485 160px,#f6fccf 160.5px,#b8dfed 161px,#6ea6cd 161.5px,#3e60aa 162px,#313695 162.5px,#313695 165px,#37489e 165.5px,#5c91c2 166px,#a3d3e6 166.5px,#e8f6e9 167px,#feeca2 167.5px,#fdb96c 168px,#f7834d 168.5px,#ee603d 169px,#e95538 169.5px,#ee613e 170px,#fdb466 171px,#fee598 171.5px,#f3fad5 172px,#b9e0ed 172.5px,#6ea6cd 173px,#3b56a5 173.5px,#313695 174px,#313695 188px,#394fa2 188.5px,#588cc0 189px,#d5eef5 190px,#fffcba 190.5px,#fecb7c 191px,#f7804c 191.5px,#d93529 192px,#a50026 192.5px,#a50026 204.5px,#c92327 205px,#f57647 205.5px,#fed081 206px,#f6fbd0 206.5px,#afdbea 207px,#5d92c3 207.5px,#333b97 208px,#313695 212px,#4574b3 212.5px,#a3d2e5 213px,#f9fdc9 213.5px,#fdba6c 214px,#e44c34 214.5px,#a50026 215px,#a50026 218px,#d83328 218.5px,#f98e52 219px,#fee294 219.5px,#ebf7e4 220px,#a3d3e6 220.5px,#5f94c4 221px,#3b57a5 221.5px,#313695 222px,#34419a 223.5px,#4e7fb9 224px,#92c5de 224.5px,#e6f5ed 225px,#fee192 225.5px,#f67e4b 226px,#c31d27 226.5px,#a50026 227px,#a50026 230.5px,#c21c27 231px,#ee603d 231.5px,#fdb063 232px,#feea9f 232.5px,#eef9dd 233px,#bee2ee 233.5px,#659bc8 234.5px,#4471b2 235.5px,#5083bb 237px,#a9d7e8 239px,#cdeaf3 240px,#d6eef5 241px,#9ccde2 242.5px,#5588be 243.5px,#313695 244.5px,#313695 247.5px,#37489e 248px,#588cc0 248.5px,#9bcce2 249px,#e4f5f0 249.5px,#feeca3 250px,#fdac60 250.5px,#e95739 251px,#bd1726 251.5px,#a50026 252px,#a50026 254px,#b61126 254.5px,#f46c43 255px,#fedb8b 255.5px,#e4f4f1 256px,#84bad8 256.5px,#416aaf 257px,#313695 257.5px,#313695 258.5px,#35449c 259px,#4778b5 259.5px,#c3e5f0 260.5px,#fcfec4 261px,#fecc7d 261.5px,#f57547 262px,#cb2527 262.5px,#a50026 263px,#a50026 266.5px,#cc2627 267px,#f46e43 267.5px,#fdbe70 268px,#fff4ae 268.5px,#e3f4f2 269px,#76aed2 270px,#436db0 271px,#4065ac 271.5px,#4777b5 272px,#6da5cd 272.5px,#afdbea 273px,#eff9dc 273.5px,#fee395 274px,#fca95e 274.5px,#f57747 275px,#f16841 275.5px,#f67e4b 276px,#fdb467 276.5px,#feeba1 277px,#e9f6e7 277.5px,#afdbea 278px,#7fb6d6 278.5px,#6da5cd 279.5px);-webkit-mask-image:linear-gradient(90deg,transparent,#000 50.0%);mask-image:linear-gradient(90deg,transparent,#000 50.0%)"></div>
<div class="a" style="left:426px;top:0;width:10px;height:100%;background:linear-gradient(#f6fbd0 0px,#ffffbe 1px,#fdbb6d 6px,#fdc778 7px,#fffdbc 8.5px,#d2ecf4 9.5px,#75aed1 11px,#588cc0 12.5px,#689fca 13.5px,#b7dfec 15.5px,#e0f3f8 17.5px,#fffab7 18.5px,#f99455 20px,#ea5839 21px,#e54c34 22.5px,#fb9e5a 32.5px,#fdae61 36.5px,#fecc7e 38px,#fff8b4 39.5px,#daf0f6 41px,#91c4dd 43px,#81b7d7 44.5px,#9ecfe3 46.5px,#e2f4f4 48.5px,#fefec2 49.5px,#fee394 50.5px,#f57446 52.5px,#cb2527 54px,#a60126 55px,#a50026 55.5px,#a50026 59.5px,#b10b26 60px,#d52e27 60.5px,#fb9d59 61.5px,#fff6b2 62.5px,#eaf7e6 63px,#c1e4ef 63.5px,#71a9cf 64.5px,#598cc0 65px,#4472b2 66px,#5588be 67px,#6ea6cd 67.5px,#c3e5f0 68.5px,#edf8e0 69px,#fff2ab 69.5px,#fa9756 70.5px,#ef633e 71px,#dd3c2c 71.5px,#c01a27 72.5px,#d52e27 73.5px,#ea5839 74px,#fa9555 74.5px,#fed686 75px,#fbfdc6 75.5px,#c3e5f0 76px,#77afd2 76.5px,#4065ac 77px,#313695 77.5px,#313695 80.5px,#394fa1 81px,#71aacf 81.5px,#ceeaf3 82px,#fff1a9 82.5px,#fba05a 83px,#dc3b2c 83.5px,#a50026 84px,#a50026 87px,#c31d27 87.5px,#ed5f3d 88px,#fdb164 88.5px,#feeda4 89px,#e7f6eb 89.5px,#a8d6e8 90px,#6aa1cb 90.5px,#416aae 91px,#333c98 91.5px,#313695 92px,#313796 94px,#4676b4 95px,#dff3f8 97px,#f9fdca 97.5px,#fecc7d 98.5px,#f67c4a 99.5px,#d32c27 101px,#c72127 102px,#db382b 103.5px,#f8874f 105px,#fdad60 105.5px,#feffc1 107px,#e6f5ed 107.5px,#c1e4ef 108px,#497ab6 109.5px,#384ca0 110px,#313695 110.5px,#313695 117px,#4066ad 117.5px,#77b0d2 118px,#c2e4ef 118.5px,#fafdc9 119px,#fed586 119.5px,#de3f2e 120.5px,#ae0826 121px,#a50026 121.5px,#a60126 127.5px,#db382b 129.5px,#ee603d 132px,#fca95f 133px,#fffdbc 134px,#d9eff6 134.5px,#94c7df 135px,#5487bd 135.5px,#343e99 136px,#313695 136.5px,#313695 140.5px,#3a51a2 141px,#659cc8 141.5px,#abd9e9 142px,#e9f6e8 142.5px,#fff0a8 143px,#fa9958 144px,#f16640 145px,#f26941 145.5px,#fca85e 146.5px,#fff7b3 147.5px,#e6f5ed 148px,#b2dceb 148.5px,#578bbf 149.5px,#3c5aa7 150.5px,#3e5da8 151px,#4879b6 151.5px,#6ea6cd 152px,#aad8e9 152.5px,#ebf7e5 153px,#fee598 153.5px,#fa9656 154px,#dc3a2b 154.5px,#a50026 155px,#a50026 158.5px,#c61f27 159px,#f16740 159.5px,#fdbb6d 160px,#fff4af 160.5px,#e0f3f8 161px,#679dc9 162px,#436db0 162.5px,#323896 163.5px,#323997 164px,#436eb1 165px,#6399c6 165.5px,#c5e6f0 166.5px,#eef9de 167px,#fff4af 167.5px,#fdc273 168.5px,#fdb466 169.5px,#fed989 170.5px,#f2fad7 171.5px,#c9e8f1 172px,#578abf 173px,#37499e 173.5px,#313695 174px,#313695 187px,#34409a 187.5px,#5d91c3 188.5px,#c0e3ef 189.5px,#eef9de 190px,#feeea5 190.5px,#f7804c 191.5px,#bd1726 192.5px,#a50026 193px,#a50026 204.5px,#c82127 205px,#f47044 205.5px,#fec879 206px,#fdfec3 206.5px,#bfe3ef 207px,#6ea6cd 207.5px,#3b54a4 208px,#313695 208.5px,#333e99 212.5px,#6196c5 213px,#b4ddeb 213.5px,#f8fccd 214px,#fed283 214.5px,#f7854e 215px,#df402e 215.5px,#bd1726 216px,#a60126 217px,#da372a 218.5px,#f7854e 219.5px,#fece7f 220.5px,#fff6b2 222px,#fff1a9 223px,#feca7c 224px,#f47044 225px,#dd3c2c 225.5px,#b81226 226px,#a50026 226.5px,#b00b26 231.5px,#e04330 232.5px,#f8874f 233.5px,#fed888 235px,#ffffbf 236.5px,#e6f5ee 237.5px,#d3edf4 238px,#a6d5e7 239px,#5486bd 241px,#313695 243px,#313695 247px,#3a52a3 247.5px,#5183bb 248px,#b9e0ed 249px,#ebf7e3 249.5px,#fff1aa 250px,#fa9556 251px,#e04430 252px,#d22b27 253px,#db382b 253.5px,#eb5b3b 254px,#f99354 254.5px,#fffbb9 255.5px,#dcf1f7 256px,#74add1 257px,#5a8ec1 257.5px,#5184bc 258px,#6aa1cb 259px,#e4f5f0 260.5px,#fffab7 261px,#fba05a 262px,#db392b 263px,#c41d27 263.5px,#b30d26 264.5px,#cf2827 265.5px,#f57346 266.5px,#fca85e 267px,#fff6b2 268px,#ecf8e1 268.5px,#cae8f2 269px,#86bcd9 270px,#6ba2cb 271px,#82b8d7 272px,#d3edf4 273px,#f5fbd1 273.5px,#feeea5 274px,#fdbc6e 275px,#fdb568 275.5px,#fdc476 276px,#fbfec6 277px,#d7eff5 277.5px,#88bdda 278.5px,#80b7d6 279.5px);-webkit-mask-image:linear-gradient(90deg,transparent,#000 50.0%);mask-image:linear-gradient(90deg,transparent,#000 50.0%)"></div>
<div class="a" style="left:431px;top:0;width:10px;height:100%;background:linear-gradient(#f6fbd0 0px,#ffffbe 1px,#fdbc6e 6.5px,#fed384 7.5px,#fafdc8 9px,#d1ebf4 10px,#87bcd9 11.5px,#71a9cf 12.5px,#76afd2 13.5px,#c3e5f0 16px,#d5eef5 17.5px,#e5f5ef 18px,#fff8b4 19px,#f7864e 21px,#ed5f3d 22px,#eb5a3a 23px,#f46c43 26.5px,#fdad60 32.5px,#fdbe70 37px,#fffcba 40px,#dff2f8 41.5px,#a2d2e5 43.5px,#95c8df 45px,#a4d3e6 46.5px,#d8eff6 48.5px,#fdfec3 50px,#fed687 51.5px,#f88c51 53px,#d12b27 55px,#a50026 56.5px,#a50026 60.5px,#dc3b2c 61.5px,#f46e43 62px,#feda8a 63px,#fffab7 63.5px,#e7f6ea 64px,#c0e3ef 64.5px,#79b1d3 65.5px,#5b8fc1 66.5px,#5a8ec1 67px,#76afd2 68px,#e3f4f2 69.5px,#fefec2 70px,#fa9957 71.5px,#eb5a3b 72.5px,#e54e35 73.5px,#ed5f3d 74px,#fdb366 75px,#fafdc9 76px,#ceeaf3 76.5px,#588bc0 77.5px,#3a52a3 78px,#313695 78.5px,#313695 80.5px,#36479d 81px,#5b8fc1 81.5px,#a6d5e7 82px,#eff9dc 82.5px,#fedb8b 83px,#f7854e 83.5px,#d83328 84px,#a70226 84.5px,#a50026 85px,#a50026 86.5px,#b71126 87px,#dd3d2d 87.5px,#fdc072 88.5px,#fff1aa 89px,#e8f6ea 89.5px,#b2dceb 90px,#5285bc 91px,#37499e 92px,#36459d 93px,#4472b3 94.5px,#6ba2cb 95.5px,#e1f3f6 97.5px,#fff9b6 98.5px,#fdaf62 100.5px,#f88a51 102px,#f98f53 103px,#fdab60 104px,#fff5b0 106px,#e4f4f1 107px,#c4e5f0 107.5px,#5b90c2 109px,#35439b 110px,#313695 110.5px,#313695 116.5px,#374a9f 117px,#588cc0 117.5px,#d8eff6 118.5px,#fffcbb 119px,#f99053 120px,#e54e35 120.5px,#c21c27 121px,#a50026 121.5px,#ab0626 126px,#d62f27 127px,#f46c43 128px,#fee699 130px,#f7fcce 131px,#e7f6eb 131.5px,#ceeaf3 132px,#8bc0db 133px,#4a7bb7 134px,#3a52a3 134.5px,#313695 135px,#313695 140.5px,#36459c 141px,#5588be 141.5px,#ceeaf3 142.5px,#f7fccd 143px,#fdc577 144px,#fca55d 144.5px,#f88950 145.5px,#fdb164 146.5px,#fff2ab 147.5px,#eff9dc 148px,#c7e7f1 148.5px,#6ea6cd 149.5px,#4574b3 150.5px,#4471b2 151px,#6fa7ce 152px,#e2f4f4 153px,#fff2ab 153.5px,#fdb567 154px,#ec5c3b 154.5px,#bb1526 155px,#a50026 155.5px,#a50026 158.5px,#ba1426 159px,#e65036 159.5px,#fb9d59 160px,#fede8e 160.5px,#fafdc7 161px,#d5edf5 161.5px,#80b7d6 162.5px,#669cc8 163.5px,#77afd2 164.5px,#cae8f2 166px,#e7f6ec 166.5px,#fafdc9 167px,#fee597 168px,#fecf80 169px,#fedb8b 170px,#fffdbc 171px,#eaf7e5 171.5px,#c4e5f0 172px,#6196c5 173px,#313695 174px,#313695 182.5px,#436fb1 187px,#6ba2cb 188px,#e1f3f6 189.5px,#fcfec5 190px,#fee79b 190.5px,#fa9556 191.5px,#f26841 192px,#d22c27 193px,#a50026 197px,#a50026 204.5px,#ca2327 205px,#f36c42 205.5px,#fdc072 206px,#fffab7 206.5px,#d0ebf3 207px,#82b8d7 207.5px,#436fb1 208px,#313695 208.5px,#313695 212.5px,#4067ad 213px,#bfe3ef 214px,#f5fbd1 214.5px,#fee395 215px,#fdb063 215.5px,#e95639 216.5px,#e14531 217px,#d52e27 221px,#a50026 225px,#a80326 229.5px,#dc3a2c 231px,#f57346 232px,#fdad60 233px,#fed283 234px,#ffffbf 237px,#e0f3f8 238.5px,#a0d1e4 240px,#4370b1 242.5px,#35429b 244px,#313695 245px,#313796 246px,#5386bd 247.5px,#cae8f2 249px,#edf8e0 249.5px,#fff8b5 250px,#fdad60 251.5px,#f99053 252.5px,#f99455 253px,#fdbf71 254px,#fff4af 255px,#d9f0f6 256px,#9dcee3 257px,#85bbd9 258px,#9acbe2 259px,#d0ebf3 260px,#ebf7e4 260.5px,#fffdbb 261px,#fcaa5f 262.5px,#f67848 263.5px,#f47044 264px,#f7804c 265px,#fdb164 266px,#fffab7 267.5px,#ddf2f7 268.5px,#aad8e9 269.5px,#8fc3dd 270.5px,#8fc3dd 271.5px,#cae8f2 275.5px,#9ccde2 278px,#95c7df 279.5px);-webkit-mask-image:linear-gradient(90deg,transparent,#000 50.0%);mask-image:linear-gradient(90deg,transparent,#000 50.0%)"></div>
<div class="a" style="left:436px;top:0;width:10px;height:100%;background:linear-gradient(#f6fbd0 0px,#ffffbe 1px,#fdbb6e 6.5px,#fed182 7.5px,#fefec2 9px,#d9f0f6 10px,#91c4de 11.5px,#77afd2 13px,#b5deec 15.5px,#def2f7 18px,#fff6b1 19.5px,#fdb365 21px,#f47044 22.5px,#f16640 23.5px,#f67949 27px,#fdbc6e 33px,#fecf80 37.5px,#feffc0 40.5px,#e1f3f6 42px,#b1dceb 44px,#a7d6e7 45.5px,#bde2ee 47.5px,#e2f4f4 49px,#fffdbc 50.5px,#fed585 52px,#ee603d 54.5px,#d93529 55.5px,#a50026 57.5px,#a50026 61px,#d93529 62px,#f0653f 62.5px,#fed182 63.5px,#fff4af 64px,#edf8df 64.5px,#cbe8f2 65px,#85bad8 66px,#70a8ce 66.5px,#679dc9 67.5px,#82b8d7 68.5px,#e0f3f7 70px,#f7fcce 70.5px,#fdbd6f 72px,#f8864f 73.5px,#f88950 74px,#fdb668 75px,#fff2ab 76px,#f1f9d9 76.5px,#cce9f2 77px,#4b7cb7 78.5px,#34409a 79.5px,#313695 80px,#333c98 80.5px,#598dc1 81.5px,#dbf0f7 82.5px,#fff5b0 83px,#fdbd6f 83.5px,#d93429 84.5px,#ad0726 85.5px,#c21b27 86.5px,#f16640 87.5px,#fba15b 88px,#fffcbb 89px,#e0f3f7 89.5px,#5386bd 91px,#394fa1 92px,#384da0 93px,#4677b5 94.5px,#6ca4cc 95.5px,#dcf1f7 97.5px,#fffebe 98.5px,#fdbc6e 100.5px,#fb9c59 102px,#fdb76a 104px,#fff9b6 106px,#e2f4f5 107px,#a1d1e5 108px,#4472b3 109.5px,#313695 110.5px,#323a97 116.5px,#4574b4 117px,#b0dbea 118px,#e6f5ec 118.5px,#fff5b0 119px,#fa9555 120px,#ec5c3b 120.5px,#d52e27 121px,#a50026 122px,#a70126 124.5px,#c11b27 125.5px,#df422f 126.5px,#fb9c59 128px,#fed889 129px,#fdfec2 130px,#d1ebf4 131px,#5487bd 133px,#36469d 134px,#313695 134.5px,#313695 140.5px,#343f99 141px,#497ab7 141.5px,#b3ddeb 142.5px,#e5f5f0 143px,#fffdbc 143.5px,#fdb467 145px,#fdac60 146px,#fed485 147px,#f7fcce 148px,#daf0f6 148.5px,#689ec9 150px,#5284bc 151px,#73acd0 152px,#d9f0f6 153px,#fffbba 153.5px,#feca7b 154px,#f67b4a 154.5px,#d62f27 155px,#a50026 155.5px,#a50026 159px,#b50f26 159.5px,#d93429 160px,#f99355 161px,#feda8a 162px,#fff5b0 163px,#fffebd 164.5px,#fee394 169.5px,#fff3ae 170.5px,#e7f6eb 171.5px,#9bcce2 172.5px,#4a7bb7 173.5px,#394ea1 174px,#313695 174.5px,#313695 180.5px,#578abf 184px,#689ec9 186.5px,#83b9d7 187.5px,#d5eef5 189px,#fffdbc 190px,#fdb86b 191.5px,#f88850 192.5px,#e64f35 196px,#a50026 199px,#a50026 204.5px,#cd2727 205px,#f36a42 205.5px,#fdba6c 206px,#fff3ad 206.5px,#dff3f8 207px,#95c8df 207.5px,#5386bd 208px,#343f9a 208.5px,#313695 209px,#313695 212.5px,#3a52a3 213px,#5e93c4 213.5px,#9ccde2 214px,#dcf1f7 214.5px,#fffdbb 215px,#fdab60 216px,#ed5d3c 217px,#e64f35 217.5px,#cc2527 227.5px,#df412f 229.5px,#fa9857 231.5px,#fee294 233.5px,#fffdbc 237px,#def2f7 239px,#a3d2e5 240.5px,#5a8ec1 242.5px,#4473b3 243.5px,#3d5da8 245px,#4b7cb8 246.5px,#7ab2d4 247.5px,#e4f4f1 249px,#f9fdca 249.5px,#fff1aa 250px,#fdb96c 251.5px,#fdaf62 252.5px,#fedd8d 254px,#fbfdc7 255px,#e7f6ec 255.5px,#97c9e0 257px,#84bad8 258px,#96c8e0 259px,#e4f4f1 260.5px,#fff3ac 261.5px,#fdc677 262.5px,#fba15b 263.5px,#fb9e59 264.5px,#fdb96b 265.5px,#f9fdc9 267.5px,#d4edf5 268.5px,#aad8e9 269.5px,#97c9e0 270.5px,#a7d6e7 279.5px);-webkit-mask-image:linear-gradient(90deg,transparent,#000 50.0%);mask-image:linear-gradient(90deg,transparent,#000 50.0%)"></div>
<div class="a" style="left:441px;top:0;width:10px;height:100%;background:linear-gradient(#f6fbd0 0px,#ffffbe 1px,#fdbb6e 6.5px,#fed081 7.5px,#fffebd 9px,#e0f3f8 10px,#9acbe1 11.5px,#7db4d5 13px,#b4deec 15.5px,#d9eff6 18px,#e5f5ef 18.5px,#ffffbf 19.5px,#fdb063 21.5px,#f57446 23px,#f36c42 24px,#f67848 26.5px,#fdc677 33px,#fedf8f 38px,#feffc0 40.5px,#d9f0f6 42.5px,#b8dfed 44px,#addaea 46px,#e0f3f8 49px,#fdfec4 50.5px,#fedf8f 52px,#f46f44 54.5px,#d62f27 56px,#a50026 58px,#a80326 61.5px,#de402e 62.5px,#fca85e 63.5px,#fff6b2 64.5px,#edf8e0 65px,#cdeaf3 65.5px,#8dc1dc 66.5px,#72abd0 68px,#88bdda 69px,#def2f7 71px,#f9fdcb 72px,#fff3ad 73px,#feeea4 74px,#fafdc7 75.5px,#d5eef5 76.5px,#5c90c2 78.5px,#3f62ab 80px,#5284bc 81px,#aedbea 82px,#e8f6ea 82.5px,#fff0a8 83px,#f67d4a 84px,#e34932 84.5px,#d02a27 85px,#c62027 85.5px,#da362a 86.5px,#f7844d 87.5px,#fee598 88.5px,#f9fdc9 89px,#d6eef5 89.5px,#74add1 90.5px,#5385bc 91px,#3a53a3 92px,#3950a2 93px,#497ab6 94.5px,#6ea6cd 95.5px,#def2f7 97.5px,#fffdbd 98.5px,#fdb96c 100.5px,#fa9656 102.5px,#fdb163 104px,#fff4ae 106px,#e8f6ea 107px,#ceeaf3 107.5px,#8cc0db 108.5px,#3f62aa 110px,#35419b 110.5px,#313695 111px,#313695 115.5px,#333b97 116px,#426db0 116.5px,#9dcee3 117.5px,#d5edf5 118px,#fafdc9 118.5px,#fee496 119px,#f67d4a 120px,#cd2627 121px,#a50026 122px,#a50026 124px,#c82127 125.5px,#ef623e 127px,#fba05a 128px,#ffffbf 130px,#d7eff6 131px,#99cbe1 132px,#4878b6 133.5px,#333e99 134.5px,#313695 135px,#34409a 141px,#4575b4 141.5px,#a3d3e6 142.5px,#d5eef5 143px,#f5fbd2 143.5px,#fff1aa 144px,#fdc274 145px,#fdad61 146px,#fdc678 147px,#fffab8 148px,#e9f7e7 148.5px,#c2e4f0 149px,#76afd2 150px,#5c91c2 151px,#7ab2d4 152px,#d6eef5 153px,#fefec2 153.5px,#fed687 154px,#e14531 155px,#b30e26 155.5px,#a50026 156px,#a50026 161px,#d22b27 162.5px,#f36c42 164px,#fdba6c 166px,#feda8a 167.5px,#feea9f 170px,#fcfec4 171px,#d1ecf4 172px,#addaea 172.5px,#4574b4 174px,#313695 175px,#313695 179px,#416aaf 181px,#6da5cd 183.5px,#87bcd9 186.5px,#d0ebf3 188.5px,#e6f5ee 189px,#f6fbd0 189.5px,#fed989 191px,#fdab5f 192.5px,#f99455 195px,#f46e43 196.5px,#db392b 198px,#a50026 200px,#a70226 204.5px,#d22b27 205px,#f36b42 205.5px,#fdb668 206px,#feeea5 206.5px,#e7f6eb 207px,#a7d6e7 207.5px,#659bc8 208px,#3c59a6 208.5px,#313695 209px,#313695 212.5px,#37489e 213px,#5082bb 213.5px,#bee2ee 214.5px,#eef8df 215px,#fff1a9 215.5px,#fba15b 216.5px,#f67949 217px,#e75237 218px,#dd3c2d 227px,#ec5c3b 229.5px,#fee293 233.5px,#ffffbf 237.5px,#d7eff5 239.5px,#6aa1cb 242.5px,#4676b4 245px,#5f94c4 246.5px,#d0ebf3 248.5px,#eaf7e6 249px,#fcfec4 249.5px,#fff1a9 250px,#fdc678 251.5px,#fdc375 252.5px,#fede8e 253.5px,#fffebd 254.5px,#d9f0f6 255.5px,#8ec2dc 257px,#7db4d5 258px,#8ec2dc 259px,#d7eff6 260.5px,#ffffbf 261.5px,#fecb7d 263px,#fdba6d 264px,#fee293 266px,#fffebd 267px,#e2f4f4 268px,#aad8e9 269.5px,#9dcee3 270.5px,#acd9e9 279.5px);-webkit-mask-image:linear-gradient(90deg,transparent,#000 50.0%);mask-image:linear-gradient(90deg,transparent,#000 50.0%)"></div>
<div class="a" style="left:446px;top:0;width:15px;height:100%;background:linear-gradient(#f6fbd0 0px,#ffffbe 1px,#fdbb6d 6.5px,#fecf80 7.5px,#fffbb9 9px,#e4f5f1 10px,#a2d2e5 11.5px,#83b9d8 13px,#e2f4f5 18.5px,#fff7b2 20px,#fca75e 22px,#f77f4b 23px,#f46f44 24px,#f7844e 27.5px,#fed484 33.5px,#fee69a 38px,#fcfec5 40.5px,#d9f0f6 42.5px,#b3ddeb 44.5px,#afdbea 46.5px,#dbf0f7 49px,#fffbba 51px,#fed586 52.5px,#fdae61 53.5px,#e75136 55.5px,#d22b27 56.5px,#a50026 58.5px,#b00b26 62px,#cb2527 62.5px,#f67b49 63.5px,#fedc8c 64.5px,#fff8b4 65px,#edf8e0 65.5px,#d0ebf3 66px,#96c8e0 67px,#7eb5d5 68px,#76afd2 73.5px,#5285bc 79px,#5d92c3 80.5px,#76afd2 81px,#d4edf4 82px,#fafdc9 82.5px,#fee394 83px,#fdb164 83.5px,#e64f35 84.5px,#d73027 85.5px,#e54d34 86.5px,#fa9b58 87.5px,#feeea5 88.5px,#f2fad6 89px,#cdeaf3 89.5px,#5385bc 91px,#3b56a5 92px,#3b54a4 93px,#4c7db8 94.5px,#71aacf 95.5px,#e1f3f6 97.5px,#fffbb9 98.5px,#fdb366 100.5px,#f88a50 102.5px,#fdb366 104.5px,#fffcba 106.5px,#ddf1f7 107.5px,#9ccde2 108.5px,#4575b4 110px,#323997 111px,#313695 115.5px,#598dc1 116.5px,#bce1ee 117.5px,#ebf7e4 118px,#fff3ad 118.5px,#fa9857 119.5px,#d93329 120.5px,#a50026 121.5px,#a80226 124.5px,#df412f 126.5px,#fdb567 128.5px,#fee79a 129.5px,#f5fbd2 130.5px,#e3f4f3 131px,#c7e7f1 131.5px,#4472b2 134px,#333d98 135px,#313695 135.5px,#313695 140.5px,#36479d 141px,#4676b4 141.5px,#cae8f2 143px,#edf8e0 143.5px,#fff9b6 144px,#fdb76a 145.5px,#fca85e 146.5px,#fecd7e 147.5px,#f8fccb 148.5px,#d9eff6 149px,#85bad8 150px,#659bc8 151px,#81b7d7 152px,#d6eef5 153px,#fbfdc7 153.5px,#fedf8f 154px,#ea5839 155px,#c41e27 155.5px,#a50026 156px,#ac0626 161.5px,#f06640 164px,#fdc375 166.5px,#fede8e 168px,#fee89c 170px,#fffcbb 171px,#e1f4f5 172px,#a1d1e5 173px,#4a7cb7 174.5px,#394fa1 175.5px,#34409a 176.5px,#384b9f 178px,#4574b3 180px,#74add1 182.5px,#97c9e0 186px,#e2f4f5 188.5px,#fcfec4 189.5px,#fedb8b 191px,#fdba6c 192.5px,#fdc375 194px,#fff6b2 196.5px,#fff4af 197.5px,#fede8e 198.5px,#f57145 200px,#c82127 201px,#ab0626 201.5px,#a50026 202px,#b10b26 204.5px,#d73127 205px,#fdb265 206px,#fee99e 206.5px,#eef9de 207px,#b7dfec 207.5px,#4472b3 208.5px,#323896 209px,#313695 209.5px,#313695 212.5px,#36449c 213px,#4777b5 213.5px,#a7d6e7 214.5px,#dcf1f7 215px,#fbfec6 215.5px,#fee69a 216px,#fa9a58 217px,#ee603d 218px,#e95638 218.5px,#e14430 226.5px,#ec5b3b 229px,#fdad60 231.5px,#fee191 233.5px,#fcfec4 238px,#e1f3f6 239.5px,#76afd2 242.5px,#5385bd 245px,#69a0ca 246.5px,#ceeaf3 248.5px,#e7f6ec 249px,#fff8b5 250px,#fed787 252px,#fee294 253px,#fffab7 254px,#e4f5f0 255px,#98cae1 256.5px,#77afd2 258px,#85bbd9 259px,#e2f4f5 261px,#fffcba 262px,#fed787 263.5px,#fed081 264.5px,#feea9f 266px,#fbfdc6 267px,#e0f3f8 268px,#a6d5e7 270px,#acdae9 279.5px);-webkit-mask-image:linear-gradient(90deg,transparent,#000 33.3%);mask-image:linear-gradient(90deg,transparent,#000 33.3%)"></div>
<div class="a" style="left:451px;top:0;width:20px;height:100%;background:linear-gradient(#f6fbd0 0px,#ffffbe 1px,#fdbb6d 6.5px,#fedc8c 8px,#fafdc9 9.5px,#dbf1f7 10.5px,#a2d2e5 12px,#90c4dd 13px,#dbf0f7 18.5px,#fff6b1 20.5px,#fdaf62 22.5px,#f67d4a 24px,#f57547 25px,#f7854e 27.5px,#fdac60 30px,#fee191 34px,#fff0a9 38.5px,#feffc0 40px,#d8eff6 42.5px,#b4deec 44.5px,#acdae9 46px,#b6dfec 47.5px,#def2f7 49.5px,#f9fdc9 51px,#fed586 53px,#f36b42 55.5px,#d83128 57px,#a50026 59.5px,#ac0726 62.5px,#db392b 63.5px,#ef623e 64px,#fdc173 65px,#fffebe 66px,#e9f6e8 66.5px,#cce9f2 67px,#89beda 68.5px,#6fa7ce 76px,#6ea6cd 79.5px,#92c5de 80.5px,#daf0f6 81.5px,#f5fbd1 82px,#feefa7 82.5px,#fcaa5f 83.5px,#f16640 84.5px,#e85437 85.5px,#f46f44 86.5px,#fdb365 87.5px,#fff2ab 88.5px,#f2fad6 89px,#d4edf5 89.5px,#6399c7 91px,#3e60aa 92.5px,#4066ad 93.5px,#5d91c3 95px,#d9f0f6 97.5px,#fefec2 98.5px,#fdb86a 100.5px,#f88a50 102px,#f7824d 103px,#fdb466 105px,#ffffbe 107px,#d8eff6 108px,#97c9e0 109px,#4473b3 110.5px,#323b97 111.5px,#313695 112px,#323896 115.5px,#5a8ec1 116.5px,#bbe1ee 117.5px,#eaf7e5 118px,#fff4ae 118.5px,#fa9756 119.5px,#d73027 120.5px,#a50026 121.5px,#a50026 124.5px,#b61126 125.5px,#d73127 126.5px,#f67f4b 128px,#fed585 129.5px,#fffab8 130.5px,#e2f4f4 131.5px,#acdae9 132.5px,#4d7eb9 134.5px,#333d98 136px,#313695 137px,#313695 140.5px,#4574b3 141.5px,#8abedb 142.5px,#ddf1f7 143.5px,#f5fbd1 144px,#fdc778 145.5px,#fa9c59 147px,#fdbd6f 148px,#fcfec4 149px,#dbf1f7 149.5px,#93c6de 150.5px,#8cc0db 151px,#95c7df 151.5px,#c8e7f1 152.5px,#e9f6e8 153px,#fffab8 153.5px,#fedb8b 154px,#f36b42 155px,#d93429 155.5px,#b40e26 156px,#a50026 156.5px,#a50026 161px,#d02927 162.5px,#f0653f 164px,#fdb366 166px,#fed383 167.5px,#fee496 170px,#fffebd 171.5px,#e5f5ee 172.5px,#d0ebf3 173px,#73abd0 175px,#5487bd 177px,#6095c5 179px,#97c9e0 183px,#acd9e9 186px,#e3f4f2 188px,#fafdc8 189px,#fee597 190.5px,#fecb7c 192.5px,#fedf8f 193.5px,#fffcba 194.5px,#e3f4f2 195.5px,#cbe9f2 197px,#e6f5ee 198px,#f6fccf 198.5px,#feda8b 199.5px,#e85337 201px,#ba1426 202px,#a50026 203px,#ab0626 204px,#dd3c2d 205px,#fcaa5f 206px,#feffc1 207px,#d9f0f6 207.5px,#a1d1e5 208px,#4574b4 209px,#37489e 209.5px,#313695 210px,#313695 212.5px,#4777b5 213.5px,#8cc1dc 214.5px,#e1f3f7 215.5px,#f9fdca 216px,#feeda4 216.5px,#f99354 218px,#ed5e3c 219.5px,#e85337 225.5px,#f26941 228.5px,#fdb163 231px,#fee79a 233.5px,#fffdbd 237.5px,#d7eff6 240px,#7cb3d4 243px,#649ac7 245px,#7bb3d4 247px,#d3edf4 249.5px,#ecf8e2 250.5px,#fefec2 252.5px,#d7eff6 255px,#8fc2dd 257px,#80b6d6 258px,#90c4dd 259.5px,#daf0f6 261.5px,#fffdbc 263px,#fee598 264.5px,#fee294 265.5px,#fbfec6 267.5px,#ddf2f7 269px,#acdae9 279.5px);-webkit-mask-image:linear-gradient(90deg,transparent,#000 50.0%);mask-image:linear-gradient(90deg,transparent,#000 50.0%)"></div>
<div class="a" style="left:461px;top:0;width:20px;height:100%;background:linear-gradient(#f6fbd0 0px,#ffffbe 1px,#fdbb6d 6.5px,#fed989 8px,#ffffbf 9.5px,#e4f5f0 10.5px,#b0dcea 12px,#9bcce2 13.5px,#e0f3f8 19px,#fff5af 21px,#fdb567 23px,#f7864e 24.5px,#f67b49 25.5px,#f7844e 27.5px,#fed686 33.5px,#fee699 37.5px,#ffffc0 40px,#d9f0f6 42.5px,#b6deec 44.5px,#addae9 46.5px,#b9e0ed 48px,#e1f3f6 50px,#fbfdc6 51.5px,#fed586 53.5px,#ec5c3b 56.5px,#d02927 58px,#a50026 60.5px,#aa0526 63px,#d62f27 64px,#f77f4b 65px,#fed888 66px,#fff4ae 66.5px,#f2fad7 67px,#d8eff6 67.5px,#81b7d6 69px,#6aa2cb 70px,#5f94c4 78px,#78b1d3 79.5px,#cdeaf3 81px,#eaf7e6 81.5px,#ffffc0 82px,#fdb669 83.5px,#f7844e 84.5px,#f57245 85.5px,#f7844d 86.5px,#fdb467 87.5px,#fffdbc 89px,#d0ebf4 90px,#71aacf 91.5px,#5082bb 92.5px,#4676b5 93.5px,#669dc9 95.5px,#d8eff6 98px,#fbfdc7 99px,#fdb366 101.5px,#f99254 103.5px,#fdaf62 105px,#fff3ad 107px,#fbfdc7 107.5px,#d2ecf4 108.5px,#4676b4 111px,#313695 112.5px,#313695 115px,#333b97 115.5px,#5083bb 116.5px,#d4edf5 118px,#f6fccf 118.5px,#feea9f 119px,#f88d52 120px,#d73027 121px,#a50026 122px,#a50026 125px,#bc1626 126px,#da362a 127px,#fca35c 129px,#fffcba 131px,#e1f4f5 132px,#acdae9 133px,#5082bb 135px,#313695 137px,#313695 140.5px,#4169ae 141.5px,#76afd2 142.5px,#c3e5f0 143.5px,#e5f5ee 144px,#fbfdc7 144.5px,#fdad61 146.5px,#f99053 148px,#fca85e 148.5px,#feffc0 150px,#f5fbd1 150.5px,#fdfec3 151.5px,#feda8a 153px,#f57647 154.5px,#d83228 155.5px,#a50026 157px,#a50026 159.5px,#d52e27 162px,#f57346 164px,#fdb567 166px,#fed081 167.5px,#fee090 170px,#fcfec4 172px,#e2f4f4 173px,#7cb4d5 175.5px,#649ac7 177.5px,#91c4de 185px,#a2d2e5 186px,#d9f0f6 187.5px,#fff9b6 189px,#fed585 190.5px,#fdc577 191.5px,#fed485 193px,#fbfdc7 195px,#e5f5ee 196.5px,#e8f6e9 197.5px,#fdfec2 198.5px,#fedd8d 199.5px,#fa9756 200.5px,#e54d34 201.5px,#c72127 202.5px,#bd1726 203.5px,#d22b27 204.5px,#f26941 205.5px,#fdc173 206.5px,#fdfec2 207.5px,#e4f4f1 208px,#76afd2 209.5px,#5183bb 210.5px,#497ab7 211.5px,#74add1 213.5px,#def2f7 215.5px,#fffcba 216.5px,#fca75e 218.5px,#f46e44 220px,#ef623e 224px,#f0653f 226.5px,#f8884f 228.5px,#fedc8c 231.5px,#ffffc0 234px,#f2fad6 237px,#e0f3f8 239px,#7fb6d6 243px,#689fca 245.5px,#73acd1 249px,#def2f7 260.5px,#fff8b4 263px,#fdb265 266px,#f7854e 268.5px,#f8884f 269.5px,#fca85e 271px,#fffcbb 274px,#e1f3f6 275.5px,#b2ddeb 277.5px,#acdae9 279.5px);-webkit-mask-image:linear-gradient(90deg,transparent,#000 50.0%);mask-image:linear-gradient(90deg,transparent,#000 50.0%)"></div>
<div class="a" style="left:471px;top:0;width:20px;height:100%;background:linear-gradient(#f6fbd0 0px,#ffffbe 1px,#fdbb6d 6.5px,#feda8b 8px,#fcfec4 9.5px,#e1f3f6 10.5px,#aad8e9 12px,#97c9e0 13.5px,#dbf0f6 19px,#fffab7 21px,#fdaf62 23.5px,#f7854e 25px,#f67f4b 26px,#fecb7c 33px,#fedf8f 37px,#fdfec3 40px,#e1f3f6 42px,#b5deec 44.5px,#addae9 46.5px,#c0e3ef 48.5px,#e0f3f8 50px,#fffbb9 52px,#feda8a 53.5px,#ef633e 56.5px,#d52e27 58px,#a50026 60.5px,#a50026 63px,#bb1526 64px,#e65036 65px,#fcaa5f 66px,#fff0a8 67px,#f6fbd0 67.5px,#ddf2f7 68px,#96c8e0 69px,#649ac7 70px,#4f81ba 71px,#4d7fb9 73px,#5689be 78px,#85bbd8 79.5px,#dcf1f7 81px,#fffcba 82px,#fdab5f 84px,#f8874f 85.5px,#f99354 86.5px,#fdb669 87.5px,#f9fdc9 89.5px,#e7f6eb 90px,#ceeaf3 90.5px,#6ca4cc 92.5px,#568abf 94px,#72aad0 96px,#dbf1f7 98.5px,#fff6b2 100px,#fdbc6e 102px,#fba25c 104px,#fdc072 106px,#fefec2 108.5px,#e4f5f0 109.5px,#d2ecf4 110px,#77b0d2 112.5px,#6095c5 114px,#5f94c4 115px,#73acd0 116px,#c4e5f0 117.5px,#e4f5f0 118px,#fbfdc7 118.5px,#fecd7e 119.5px,#e54e35 121px,#bb1526 122px,#a50026 123px,#a50026 125.5px,#c62027 127px,#eb5b3b 128.5px,#fdad61 130px,#fffbba 132px,#e5f5ef 133px,#d0ebf4 133.5px,#689fca 136px,#4574b4 137.5px,#3d5da8 139px,#3e5ea9 140px,#497ab7 141px,#74add1 142px,#d9f0f6 143.5px,#f1fad8 144px,#fff8b4 144.5px,#fdaf62 146px,#f7814c 147px,#d73027 154.5px,#c62027 157.5px,#da362a 160.5px,#f46e43 163px,#fdbf71 166.5px,#fed788 170px,#fbfdc7 172.5px,#e2f4f4 173.5px,#86bbd9 176px,#6ea6cd 178px,#82b8d7 185px,#9ecee3 186px,#e3f4f2 187.5px,#fffbba 188.5px,#fed080 190px,#fdbd6f 191px,#fdad61 196.5px,#df402e 201.5px,#d52e27 203px,#e0422f 204.5px,#fa9a58 206px,#fff6b2 207.5px,#dbf1f7 208.5px,#86bcd9 210px,#6aa1cb 211.5px,#7ab2d4 213px,#d7eef5 215.5px,#f7fcce 216.5px,#fff9b5 217px,#fdb265 219px,#f67c4a 220.5px,#f26941 222px,#f57647 224px,#fca55d 226.5px,#fedc8c 229px,#fffebd 231.5px,#e7f6eb 234.5px,#dff2f8 237.5px,#7ab2d4 243.5px,#6da5cd 246px,#8cc0db 248px,#d1ecf4 250px,#e3f4f2 250.5px,#fcfec5 251.5px,#fed181 253.5px,#fdae61 255px,#f57446 266px,#f67c4a 268px,#fcaa5f 270px,#fcfec4 273.5px,#e1f3f7 275px,#b6dfec 277px,#acdae9 279.5px);-webkit-mask-image:linear-gradient(90deg,transparent,#000 50.0%);mask-image:linear-gradient(90deg,transparent,#000 50.0%)"></div>
<div class="a" style="left:481px;top:0;width:20px;height:100%;background:linear-gradient(#f6fbd0 0px,#ffffbe 1px,#fdbb6d 6.5px,#fecd7e 7.5px,#fff7b3 9px,#d9f0f6 10.5px,#a0d1e4 12px,#90c4dd 13.5px,#e1f4f5 19.5px,#fffebe 21px,#fdb668 23.5px,#f88c51 25px,#f7834d 26px,#fdc374 32.5px,#fed787 36.5px,#fffcba 39.5px,#def2f7 42px,#b4ddec 44.5px,#addaea 46.5px,#e0f3f8 50px,#fffcba 52px,#fedc8c 53.5px,#e85337 57px,#ca2427 58.5px,#a50026 60.5px,#aa0426 64px,#d73127 65px,#f7824d 66px,#fedb8b 67px,#fff7b3 67.5px,#edf8e0 68px,#cce9f2 68.5px,#7cb3d4 69.5px,#4574b4 70.5px,#37489e 71.5px,#333c98 72.5px,#3b56a5 77px,#4169ae 78px,#7ab2d4 79.5px,#e1f3f6 81px,#fff2ac 82px,#fca65d 83.5px,#f67848 84.5px,#f26a41 85.5px,#f57748 86.5px,#fdb668 88px,#fee597 89px,#f6fccf 90px,#e5f5ef 90.5px,#cce9f2 91px,#73abd0 93px,#6298c6 94.5px,#83b9d8 96.5px,#d4edf5 98.5px,#e7f6ec 99px,#fffdbb 100px,#fec87a 102px,#fdb264 103.5px,#fdc375 105.5px,#fff6b1 107.5px,#dff3f8 109px,#7fb6d6 111px,#4c7eb8 112.5px,#3d5aa7 114px,#3b57a5 115px,#4f81ba 116.5px,#80b6d6 117.5px,#c7e7f1 118.5px,#e8f6ea 119px,#ffffbe 119.5px,#fdc476 120.5px,#f46e43 121.5px,#ce2727 122.5px,#a50026 123.5px,#a50026 127px,#b91326 128px,#d73027 129px,#fca95f 131.5px,#fed686 132.5px,#fcfec4 134px,#e4f4f1 135px,#d3edf4 135.5px,#89beda 138px,#74add1 140px,#8fc3dd 141.5px,#dcf1f7 143px,#fffab7 144px,#fdaf62 145.5px,#ee613e 147px,#e75337 148px,#e95538 158px,#fdaf62 164.5px,#fecd7e 170px,#fdfec2 173px,#d8eff6 174.5px,#82b8d7 177px,#69a0ca 179.5px,#82b9d7 185px,#d3ecf4 187px,#f8fccc 188px,#fed787 189.5px,#fdae61 191px,#fa9b58 194.5px,#e44a33 202.5px,#eb5b3b 204.5px,#fca55d 206px,#fff2ab 207.5px,#e8f6e9 208.5px,#d1ecf4 209px,#93c6de 210.5px,#84b9d8 212px,#98cae1 213.5px,#d6eef5 215.5px,#e6f5ee 216px,#feffc1 217px,#fba25b 220px,#f57647 221.5px,#f26a41 223px,#f57446 224.5px,#fcaa5f 227px,#fffdbb 231px,#e1f3f7 234px,#d0ebf4 237.5px,#7bb2d4 243.5px,#6ea6cd 246px,#7fb6d6 247.5px,#d6eef5 250px,#fffdbc 251.5px,#fdc476 253.5px,#fb9f5a 255px,#f36c42 265px,#f57547 267px,#fba25b 269px,#fffab7 272.5px,#e1f3f6 274.5px,#b1dceb 277px,#aad8e8 279.5px);-webkit-mask-image:linear-gradient(90deg,transparent,#000 50.0%);mask-image:linear-gradient(90deg,transparent,#000 50.0%)"></div>
<div class="a" style="left:491px;top:0;width:20px;height:100%;background:linear-gradient(#f6fbd0 0px,#ffffbe 1px,#fdbb6d 6.5px,#fecf80 7.5px,#fffbb8 9px,#e5f5ef 10px,#a6d5e7 11.5px,#89beda 13px,#ddf2f7 19.5px,#fff7b3 21.5px,#fdae61 24px,#f8874f 26px,#fdc274 32.5px,#fed182 36px,#fffebd 39.5px,#dbf1f7 42px,#b3ddeb 44.5px,#addaea 46.5px,#e0f3f8 50px,#fffdbb 52px,#fede8e 53.5px,#f26a41 56.5px,#d93328 58px,#a50026 60.5px,#ab0626 64.5px,#da362a 65.5px,#f88b51 66.5px,#fee394 67.5px,#fffebd 68px,#e5f5ef 68.5px,#bbe1ee 69px,#4575b4 70.5px,#313695 71.5px,#323896 77.5px,#4167ad 78.5px,#72abd0 79.5px,#c1e4ef 80.5px,#e6f5ed 81px,#feffc1 81.5px,#fdab60 83px,#f46d43 84px,#e65036 85px,#ec5d3c 86.5px,#fb9c59 88px,#fee79b 89.5px,#f4fbd3 90.5px,#e3f4f2 91px,#cbe9f2 91.5px,#8abeda 93px,#6fa7ce 94.5px,#87bcd9 96.5px,#e3f4f3 99px,#fcfec4 100px,#fee191 101.5px,#fdbe70 103.5px,#fece7f 105.5px,#fff8b4 107.5px,#e2f4f4 109px,#5a8ec1 112.5px,#426db0 114px,#4168ae 115.5px,#4f81ba 116.5px,#74add1 117.5px,#d3ecf4 119px,#fffbb9 120px,#fb9e5a 121.5px,#e64f35 122.5px,#be1827 123.5px,#a50026 124.5px,#a50026 127.5px,#b40e26 128.5px,#dc3b2c 130px,#fb9d59 132px,#fee191 133.5px,#f7fcce 135px,#dff3f8 136px,#97c9e0 138.5px,#83b9d8 140.5px,#95c8df 141.5px,#e4f4f1 143px,#f9fdca 143.5px,#fed283 144.5px,#f7844e 145.5px,#d83228 147px,#d02927 148px,#f8884f 157.5px,#fdae61 158.5px,#fffbb8 160.5px,#e2f4f5 162px,#e1f3f6 164px,#fffab8 166px,#fece7f 168px,#fdc173 169.5px,#fed889 171.5px,#fffdbd 173.5px,#e0f3f7 175px,#7eb5d5 178px,#6298c6 180.5px,#78b0d3 182.5px,#dff3f8 185.5px,#fffab7 187px,#fdc576 189px,#fa9857 191px,#f0653f 203.5px,#f57446 204.5px,#fdb467 206px,#fee394 207px,#fafdc8 208px,#d7eff5 209px,#9acce2 210.5px,#87bcd9 211.5px,#93c6de 213.5px,#d8eff6 216px,#fdfec2 217.5px,#fca95f 220.5px,#f67c4a 222px,#f26a41 224px,#f67949 225.5px,#fdae61 227.5px,#feffc1 231px,#e1f4f5 233px,#abd9e9 239.5px,#7ab2d4 243px,#69a0ca 246px,#87bcd9 248px,#d7eef5 250px,#fff9b6 251.5px,#fdbb6d 253.5px,#fb9e5a 254.5px,#f99053 255.5px,#f57245 266px,#f7844e 267.5px,#fdab60 269px,#fdfec2 272.5px,#e2f4f5 274px,#a7d6e7 277px,#a3d2e5 279.5px);-webkit-mask-image:linear-gradient(90deg,transparent,#000 50.0%);mask-image:linear-gradient(90deg,transparent,#000 50.0%)"></div>
<div class="a" style="left:501px;top:0;width:20px;height:100%;background:linear-gradient(#f6fbd0 0px,#ffffbe 1px,#fdbb6d 6px,#fdc375 7px,#fee192 8px,#fffebe 9px,#dff3f8 10px,#9bcce2 11.5px,#82b9d7 13px,#e3f4f2 20px,#fffbba 21.5px,#fdb568 24px,#f88c51 26px,#fed283 36px,#feffc0 39.5px,#e2f4f4 41.5px,#b7dfed 44px,#addaea 46.5px,#e0f3f8 50px,#fffdbc 52px,#fee090 53.5px,#fdad61 55px,#eb5a3a 57px,#cf2827 58.5px,#a50026 60.5px,#ae0826 65px,#de3f2e 66px,#fa9b58 67px,#feeda3 68px,#f6fbd0 68.5px,#d5eef5 69px,#a7d6e7 69.5px,#5386bd 70.5px,#313695 71.5px,#313695 77.5px,#323896 78px,#5386bd 79.5px,#dff3f8 81.5px,#fff3ad 82.5px,#fca75e 84px,#f67b4a 85px,#f46e44 86px,#f67b49 87px,#fdb164 88.5px,#fffab7 90.5px,#d8eff6 92px,#a8d6e8 93.5px,#9bcce2 95px,#addae9 96.5px,#e1f4f6 98.5px,#feffc0 100px,#fee090 102px,#fecf80 103.5px,#fedb8b 105.5px,#fdfec2 108px,#e0f3f8 109.5px,#83b9d8 112.5px,#649ac7 115px,#74add1 116.5px,#d3edf4 118.5px,#feffc0 119.5px,#fed283 120.5px,#f26941 122px,#c82227 123.5px,#b50f26 125px,#d52e27 128px,#f67f4b 130.5px,#feea9f 133.5px,#ffffbf 134.5px,#e2f4f4 136px,#a0d0e4 139px,#93c6df 141px,#afdbea 142px,#cdeaf3 142.5px,#ebf7e5 143px,#fffab7 143.5px,#fdb164 144.5px,#e34a33 145.5px,#b61026 146.5px,#a60126 147.5px,#c31d27 150px,#f46d43 153px,#f99053 154.5px,#fdab60 157px,#fffbb9 159.5px,#dbf0f6 161px,#bee2ee 162.5px,#e2f4f4 165px,#fffebd 166.5px,#fed282 168.5px,#fdb86a 170.5px,#fece7f 172.5px,#fffab8 174.5px,#def2f8 176px,#679ec9 179px,#436fb1 181.5px,#4573b3 182.5px,#6297c6 184px,#d1ebf4 186.5px,#e6f5ec 187px,#fff9b6 188px,#fdb769 190px,#f88950 192px,#f57647 204px,#fdb568 206px,#fff2ab 207.5px,#fcfec5 208px,#d9f0f6 209px,#97c9e0 210.5px,#78b0d3 212px,#93c6df 214.5px,#d3ecf4 216.5px,#e4f4f2 217px,#fcfec5 218px,#fca85e 221px,#f46f44 223px,#f0653f 224.5px,#f77f4b 226.5px,#fdac60 228px,#fee598 230px,#fcfec4 231.5px,#dff3f8 233.5px,#acdae9 239.5px,#72abd0 243.5px,#659bc8 246px,#7fb6d6 248px,#e3f4f3 250.5px,#ffffbf 251.5px,#fca65d 254.5px,#f99455 255.5px,#f67848 266px,#f88b51 267.5px,#fdb366 269px,#fffebd 272px,#e3f4f3 273.5px,#a3d2e5 276.5px,#9ccde2 279.5px);-webkit-mask-image:linear-gradient(90deg,transparent,#000 50.0%);mask-image:linear-gradient(90deg,transparent,#000 50.0%)"></div>
<div class="a" style="left:511px;top:0;width:20px;height:100%;background:linear-gradient(#f6fbd0 0px,#ffffbe 1px,#fdbb6d 6px,#fed182 7.5px,#feffc1 9px,#dbf1f7 10px,#96c8e0 11.5px,#7fb6d6 13px,#b4ddec 16.5px,#c1e4ef 18.5px,#e0f3f7 20px,#ffffbf 21.5px,#fdbb6d 24px,#f98e52 26.5px,#fed283 36px,#fdfec3 39.5px,#e1f3f6 41.5px,#b6dfec 44px,#acdae9 46.5px,#def2f7 50px,#ffffbf 52px,#fed383 54px,#f57245 56.5px,#d12b27 58.5px,#a50026 60.5px,#a50026 65px,#d12a27 66px,#e65035 66.5px,#fdb163 67.5px,#fff9b5 68.5px,#e9f7e7 69px,#c0e4ef 69.5px,#4473b3 71px,#37499e 71.5px,#313695 72px,#313695 78px,#3e60a9 79.5px,#7ab2d4 81px,#dbf1f7 82.5px,#fffcbb 83.5px,#fdb366 85.5px,#f99354 87px,#fdac60 89.5px,#fee597 93.5px,#feeca3 97px,#fee191 104px,#fffcbb 107.5px,#d8eff6 110px,#93c5de 113px,#80b7d6 115px,#92c5de 116.5px,#ceeaf3 118px,#e5f5ef 118.5px,#fff6b2 119.5px,#fdb062 121px,#f57245 122px,#dd3c2d 123.5px,#d93429 124.5px,#e85438 127.5px,#fca65d 130.5px,#fffab7 134px,#dbf1f7 136.5px,#aedbea 139px,#a2d2e5 141.5px,#e5f5ee 143px,#feffc1 143.5px,#fdba6d 144.5px,#e75237 145.5px,#ba1426 146.5px,#aa0526 147.5px,#cb2527 150px,#f57446 152.5px,#fcaa5f 154.5px,#fdb96b 156.5px,#fece7f 157.5px,#f8fccb 159.5px,#def2f7 160.5px,#b1dceb 162.5px,#bbe1ee 164px,#dcf1f7 165.5px,#fffcba 167.5px,#fed989 169.5px,#fdc577 171px,#fed282 173px,#fff9b6 175px,#dff2f8 176.5px,#b0dcea 177.5px,#4a7ab7 180px,#374a9f 181.5px,#323896 183px,#35439b 184px,#4d7fb9 185.5px,#9fcfe4 187px,#e0f3f7 188px,#fff8b4 189px,#fca65d 191px,#f7834d 192.5px,#f7804c 204px,#fdb467 206px,#ffffbe 208px,#dff3f8 209px,#8bbfdb 211px,#76aed2 212.5px,#8dc1dc 214.5px,#daf0f6 217px,#fffebd 218.5px,#fdb366 221px,#f57245 223px,#ed5f3d 225px,#f46f44 226.5px,#fca95f 228.5px,#fee597 230.5px,#fdfec4 232px,#e0f3f8 234px,#b8e0ed 239px,#70a9cf 243.5px,#6196c5 246px,#76aed2 248px,#d7eff6 250.5px,#fffab7 252px,#fdbe70 254px,#fb9d59 255.5px,#f67f4b 266px,#fdaf62 268.5px,#fffbb9 271.5px,#d7eff6 273.5px,#9ecfe3 276px,#95c8e0 279.5px);-webkit-mask-image:linear-gradient(90deg,transparent,#000 50.0%);mask-image:linear-gradient(90deg,transparent,#000 50.0%)"></div>
<div class="a" style="left:521px;top:0;width:20px;height:100%;background:linear-gradient(#f6fbd0 0px,#ffffbe 1px,#fdbb6d 6px,#fdc375 7px,#fee192 8px,#fffebd 9px,#e0f3f8 10px,#9bcde2 11.5px,#81b8d7 13px,#bee2ee 18.5px,#dcf1f7 20px,#fcfec4 21.5px,#fdb063 24.5px,#f99154 26.5px,#fecc7e 35.5px,#fffbb9 39px,#e0f3f7 41.5px,#b5deec 44px,#a9d8e8 46.5px,#bbe1ee 48.5px,#e2f4f4 50.5px,#fbfec6 52px,#fed989 54px,#e75136 57.5px,#bc1626 59.5px,#a50026 61px,#ae0926 65.5px,#df402f 66.5px,#fa9b58 67.5px,#feeba1 68.5px,#f8fccc 69px,#dbf1f7 69.5px,#5d91c3 71px,#36469d 72px,#313695 72.5px,#313695 78.5px,#4168ae 80.5px,#73acd0 82px,#dcf1f7 84px,#fcfec4 85px,#fff4ae 85.5px,#fdad61 88px,#fa9957 89.5px,#fba05a 92px,#fede8e 100px,#fee99e 105px,#ffffbf 107.5px,#dcf1f7 110px,#a1d1e5 113px,#93c6df 115px,#a5d4e7 116.5px,#d8eff6 118px,#fff9b5 119.5px,#fdae61 121.5px,#f57245 123px,#ee613e 124.5px,#f57547 127px,#fdb365 130px,#fffdbc 134px,#e0f3f8 136.5px,#b8e0ed 139px,#aad8e9 141.5px,#b0dceb 142px,#dcf1f7 143px,#f2fad8 143.5px,#fff5b0 144px,#fed98a 144.5px,#f7814c 145.5px,#dc3a2b 146.5px,#ca2327 147.5px,#dc3a2c 150px,#fdad61 154.5px,#fdc577 157.5px,#fffdbc 160px,#ddf2f7 161.5px,#bfe3ef 163px,#e1f3f7 167px,#f8fccc 171px,#f3fad4 172.5px,#def2f8 174.5px,#a7d6e7 176.5px,#4d7fb9 179.5px,#37489e 181.5px,#313695 183px,#313695 184.5px,#426caf 186px,#70a8ce 187px,#d9f0f6 188.5px,#fff8b5 189.5px,#fdb568 191px,#f7804c 192.5px,#f88d52 204.5px,#fdb467 206px,#fffab7 208px,#e6f5ed 209px,#d3ecf4 209.5px,#9ccde2 211px,#8abedb 212.5px,#a0d0e4 214.5px,#d4edf5 216.5px,#e3f4f3 217px,#fffbb9 218.5px,#fca45c 221.5px,#f36a42 223.5px,#eb5a3a 225.5px,#f36a42 227px,#fca55d 229px,#fff8b4 232px,#e1f3f7 234.5px,#aedbea 240px,#70a8ce 243.5px,#5c91c2 246.5px,#7ab2d4 248.5px,#e0f3f7 251px,#fcfec5 252px,#feca7b 254px,#fca75e 255.5px,#f7834d 265px,#f88d52 266.5px,#fdae61 268px,#f9fdc9 271.5px,#d7eff6 273px,#9acce2 275.5px,#8fc2dd 279.5px);-webkit-mask-image:linear-gradient(90deg,transparent,#000 50.0%);mask-image:linear-gradient(90deg,transparent,#000 50.0%)"></div>
<div class="a" style="left:531px;top:0;width:20px;height:100%;background:linear-gradient(#f6fbd0 0px,#ffffbe 1px,#fdbb6d 6.5px,#fecf80 7.5px,#fffcba 9px,#e3f4f2 10px,#a1d1e5 11.5px,#84bad8 13px,#bae0ed 18.5px,#d8eff6 20px,#e5f5f0 20.5px,#fff8b5 22px,#fdb366 24.5px,#f99455 26.5px,#fec97a 35.5px,#feffc1 39.5px,#e2f4f5 41.5px,#b5deec 44px,#a8d7e8 47px,#def2f7 50.5px,#fffdbd 52.5px,#fedf8f 54px,#fdab60 55.5px,#ea5739 57.5px,#cc2627 59px,#a50026 61px,#aa0426 65.5px,#db372a 66.5px,#f98e52 67.5px,#fee395 68.5px,#fffdbd 69px,#e7f6eb 69.5px,#c1e4ef 70px,#73acd0 71px,#426cb0 72px,#35429b 73px,#313795 74px,#37489e 79.5px,#4777b5 81.5px,#74add1 83px,#e1f3f7 85.5px,#fff8b5 87px,#fdb265 90px,#fba15b 91.5px,#fca95e 94px,#fee090 100.5px,#feeba0 105px,#ffffc0 107.5px,#def2f7 110px,#aedbea 112.5px,#9ecee3 114.5px,#a7d6e7 116px,#dcf1f7 118px,#fffebd 119.5px,#fdb86a 122px,#f99455 123.5px,#f88d52 125px,#fdb163 128.5px,#feffc0 134px,#dcf1f7 137px,#b5deec 141px,#bde2ee 142.5px,#e0f3f7 143.5px,#fffdbd 144.5px,#fba05b 146.5px,#f57848 147.5px,#f46f44 148.5px,#fdbf71 155.5px,#fecd7e 158.5px,#fffdbc 161px,#dcf1f7 163px,#a7d6e7 170.5px,#4778b5 178px,#374a9f 183.5px,#3a53a3 185px,#4676b5 186px,#71aacf 187px,#d2ecf4 188.5px,#ffffbf 189.5px,#fdad60 191.5px,#f7864e 193px,#f99354 204px,#fdad60 205.5px,#fffab7 208px,#dbf0f7 209.5px,#acd9e9 211px,#9ecfe3 212.5px,#b1dceb 214.5px,#def2f8 216.5px,#fffbb9 218.5px,#fdb164 221.5px,#f46e43 224px,#ed5f3c 226.5px,#f57547 228px,#fca45c 229.5px,#fff8b4 232.5px,#e1f4f6 235px,#d0ebf3 238px,#aad9e9 240.5px,#69a0ca 244px,#588cc0 246.5px,#70a8ce 248.5px,#cfeaf3 251px,#e3f4f2 251.5px,#feffc1 252.5px,#fecb7c 254.5px,#fdab60 256px,#f88a50 264.5px,#f98f53 266px,#fdae61 267.5px,#fbfdc7 271px,#d8eff6 272.5px,#8fc3dd 275.5px,#88bdda 279.5px);-webkit-mask-image:linear-gradient(90deg,transparent,#000 50.0%);mask-image:linear-gradient(90deg,transparent,#000 50.0%)"></div>
<div class="a" style="left:541px;top:0;width:20px;height:100%;background:linear-gradient(#f6fbd0 0px,#ffffbe 1px,#fdbb6d 6.5px,#fece7f 7.5px,#fffab7 9px,#e6f5ed 10px,#d1ecf4 10.5px,#97c9e0 12px,#87bcd9 13px,#bde2ee 19px,#e2f4f4 20.5px,#fffbb8 22px,#fdb668 24.5px,#fa9957 26px,#fdc476 35.5px,#fffdbd 39.5px,#dbf0f7 42px,#afdbea 44.5px,#a5d4e6 47px,#b9e0ed 49px,#e3f4f3 51px,#fdfec3 52.5px,#fed485 54.5px,#f57145 57px,#d02927 59px,#a50026 61px,#a60026 65.5px,#d73027 66.5px,#f7854e 67.5px,#fedd8d 68.5px,#fff7b3 69px,#eef8de 69.5px,#d0ebf3 70px,#6ca3cc 71.5px,#4a7bb7 72.5px,#3b57a5 79px,#3e5fa9 80.5px,#578abf 82.5px,#a8d7e8 85px,#e2f4f5 86.5px,#fffbb9 88px,#fdb467 91.5px,#fdac60 94.5px,#fee090 100.5px,#feeca2 105px,#feffc1 107.5px,#dff3f8 110px,#b4deec 112.5px,#a7d6e7 114.5px,#b1dceb 116px,#dcf1f7 118px,#fffcba 120px,#fdbb6d 123px,#fb9f5a 126px,#fdb86b 129px,#feffc0 134.5px,#e0f3f8 137.5px,#bfe3ef 142px,#e2f4f5 144px,#fffdbc 145.5px,#fed081 147.5px,#fdbf71 149px,#fdb467 159px,#ffffc0 164.5px,#daf0f6 171.5px,#74add1 177.5px,#4f81ba 182px,#5284bc 183.5px,#6da4cc 185px,#d5edf5 187.5px,#fffab7 189px,#fdae61 191.5px,#f99254 193px,#fa9a58 204px,#fdb669 205.5px,#fffebe 208px,#d9f0f6 209.5px,#b1dceb 211px,#a8d7e8 212.5px,#bae0ed 214.5px,#e1f3f6 216.5px,#fffdbc 218.5px,#fdb164 222px,#f46d43 225px,#ef633e 227px,#f57647 228.5px,#fca45c 230px,#fff8b4 233px,#edf8e0 234.5px,#def2f7 236px,#d0ebf4 238.5px,#b0dbea 240.5px,#6fa8ce 243.5px,#5487bd 246.5px,#73acd0 249px,#d4edf4 251.5px,#e6f5ee 252px,#ffffbf 253px,#fecd7e 255px,#fdb063 256.5px,#fa9957 263.5px,#fa9958 265.5px,#fdbb6d 267.5px,#fcfec4 270.5px,#d9f0f6 272px,#9ecfe3 274px,#85bbd9 275.5px,#81b8d7 279.5px);-webkit-mask-image:linear-gradient(90deg,transparent,#000 50.0%);mask-image:linear-gradient(90deg,transparent,#000 50.0%)"></div>
<div class="a" style="left:551px;top:0;width:20px;height:100%;background:linear-gradient(#f6fbd0 0px,#ffffbe 1px,#fdbb6d 6.5px,#fecd7e 7.5px,#fff8b4 9px,#d7eef5 10.5px,#9ccde2 12px,#89beda 13.5px,#bae0ed 19px,#dff3f8 20.5px,#fffdbc 22px,#fdc678 24px,#fdad60 25px,#fa9a58 26.5px,#fdc677 36px,#fffbb8 39.5px,#def2f7 42px,#afdbea 44.5px,#a2d2e5 47px,#b5deec 49px,#def2f8 51px,#fffcba 53px,#fedb8b 54.5px,#f67848 57px,#de3e2d 58.5px,#b00a26 60.5px,#a50026 61.5px,#a50026 65.5px,#d32c27 66.5px,#f67f4b 67.5px,#fed989 68.5px,#fff5af 69px,#f1fad9 69.5px,#d5eef5 70px,#74add1 71.5px,#5689be 72.5px,#3e60aa 79.5px,#4f81ba 82.5px,#6fa8ce 84px,#d4edf5 87px,#e4f4f1 87.5px,#fffcbb 89px,#fdc476 92px,#fdb063 95px,#fee090 100.5px,#fff0a8 105.5px,#fdfec2 107.5px,#e1f3f7 110px,#bae0ed 112.5px,#afdbea 114.5px,#dbf0f7 118px,#fffcba 120.5px,#fdc072 124px,#fdae61 126.5px,#fdc576 130px,#feffc1 135px,#dff2f8 138.5px,#cdeaf3 141.5px,#e1f3f7 144px,#fdfec4 146.5px,#feeea5 148.5px,#fedc8c 152.5px,#fdaf62 156px,#f99555 159px,#fdae61 163px,#fffbb9 169px,#ddf2f7 172px,#84bad8 177px,#659bc8 181.5px,#7db4d5 184px,#e0f3f8 187px,#fffbba 188.5px,#fdbf71 191px,#fca35c 192.5px,#fb9f5a 203.5px,#fdc476 205.5px,#ffffbf 207.5px,#e5f5f0 208.5px,#b2dceb 210px,#9acbe1 211.5px,#a9d7e8 214px,#e2f4f5 217px,#fffdbc 219px,#fdb567 222.5px,#f67c4a 225px,#f26841 227.5px,#f67848 229px,#fca45c 230.5px,#fff8b4 233.5px,#edf8e0 235px,#e0f3f7 236.5px,#d7eef5 238.5px,#b5deec 240.5px,#669cc8 244px,#5083bb 247px,#6ca4cc 249px,#daf0f6 252px,#fffdbc 253.5px,#fedc8c 255px,#fdbb6d 256.5px,#fdb063 258px,#fdbd6f 266.5px,#fdfec2 270px,#dcf1f7 271.5px,#9dcee3 273.5px,#81b7d7 275px,#7bb3d4 279.5px);-webkit-mask-image:linear-gradient(90deg,transparent,#000 50.0%);mask-image:linear-gradient(90deg,transparent,#000 50.0%)"></div>
<div class="a" style="left:561px;top:0;width:20px;height:100%;background:linear-gradient(#f6fbd0 0px,#ffffbe 1px,#fdbb6d 6.5px,#fedc8c 8px,#fafdc9 9.5px,#dbf1f7 10.5px,#a0d0e4 12px,#8bbfdb 13.5px,#b0dceb 18.5px,#dbf1f7 20.5px,#ffffbf 22px,#fdbb6d 24.5px,#fb9d59 26.5px,#fdc072 36px,#ffffc0 40px,#dff3f8 42px,#aedaea 44.5px,#9ecfe3 47px,#b6dfec 49.5px,#e2f4f5 51.5px,#fcfec4 53px,#fed384 55px,#f46d43 57.5px,#cc2627 59.5px,#a50026 61.5px,#a50026 65.5px,#b30d26 66px,#e34a33 67px,#fca75e 68px,#feefa7 69px,#f7fcce 69.5px,#e0f3f8 70px,#84b9d8 71.5px,#679dc9 72.5px,#3f63ab 79px,#4066ad 81px,#5588be 83px,#dcf1f7 87.5px,#fffab7 89.5px,#fdc072 93px,#fdb86a 96px,#fee191 100.5px,#fffbb8 106.5px,#e0f3f8 110px,#bbe1ee 112.5px,#b2dceb 114.5px,#bfe3ef 116.5px,#e1f3f6 118.5px,#fdfec3 120.5px,#fed485 123.5px,#fdb164 127.5px,#fec879 131px,#feffc1 136px,#e1f3f6 139.5px,#dff3f8 143.5px,#fffdbc 148px,#fede8e 151.5px,#fdae61 154.5px,#f7804c 157.5px,#f57647 160.5px,#f7844e 162.5px,#fdb466 165.5px,#fffcba 170px,#def2f8 172.5px,#80b7d6 177.5px,#6da5cd 181px,#81b8d7 183.5px,#e3f4f3 187px,#fffdbc 188.5px,#fec97a 191px,#fca85e 194px,#fdba6c 204px,#feda8b 205.5px,#fefec2 207px,#e3f4f3 208px,#9ccde2 210px,#8bc0db 211.5px,#a0d0e4 214px,#dff2f8 217px,#ffffbf 219px,#fdad61 223px,#f46c43 226px,#ee5f3d 228px,#f46f44 229.5px,#fb9e59 231px,#fee294 233px,#feffc1 234.5px,#e6f5ed 236.5px,#e0f3f8 238.5px,#b0dceb 241px,#659cc8 244px,#4c7db8 246.5px,#5588be 248px,#72abd0 249.5px,#e1f3f7 252.5px,#fffbb9 254px,#fed283 256px,#fdba6c 258px,#fed686 266.5px,#fff9b6 269px,#dbf1f7 271px,#7eb5d5 274.5px,#74add1 279.5px);-webkit-mask-image:linear-gradient(90deg,transparent,#000 50.0%);mask-image:linear-gradient(90deg,transparent,#000 50.0%)"></div>
<div class="a" style="left:571px;top:0;width:20px;height:100%;background:linear-gradient(#f6fbd0 0px,#ffffbe 1px,#fdbb6d 6.5px,#fecd7e 7.5px,#fff7b4 9px,#d8eff6 10.5px,#9fcfe4 12px,#8dc1dc 13.5px,#aedbea 18.5px,#ddf1f7 20.5px,#fffbba 22px,#fdc274 24px,#fdaa5f 25px,#fb9f5a 26.5px,#fdae61 36px,#feffc1 40px,#e0f3f8 41.5px,#9fcfe4 44px,#8cc0dc 46px,#a8d7e8 50.5px,#dbf1f7 53px,#fbfec6 54.5px,#fede8e 56px,#e85337 59px,#c21c27 60.5px,#a50026 62px,#a80326 66px,#d22b27 67px,#f36b42 68px,#fed787 69.5px,#feffc1 70.5px,#daf0f6 71.5px,#8bbfdb 73.5px,#5588be 75.5px,#3d5ca8 78.5px,#4167ad 80px,#5487bd 81.5px,#d9eff6 85.5px,#fffcbb 87.5px,#fdab60 93.5px,#f99254 97px,#fdaf62 99px,#fffdbd 103px,#ecf8e2 105px,#e0f3f8 107.5px,#98cae1 112.5px,#86bbd9 115px,#97c9e0 117.5px,#e1f4f5 120px,#fffcba 121.5px,#feca7b 124px,#fdab5f 131.5px,#fec87a 135.5px,#fffab8 138px,#e0f3f7 140px,#bfe3ef 142.5px,#dbf1f7 144.5px,#feffc0 146.5px,#fff5af 147.5px,#fff5af 149px,#f7fccf 151.5px,#fff9b6 153px,#fed384 154.5px,#f99254 156px,#f46f44 157px,#ef633e 158.5px,#f7824c 161.5px,#fdb365 164px,#fedd8d 167.5px,#fffcbb 170px,#e0f3f8 172px,#94c6df 175px,#7ab2d4 177.5px,#99cae1 181px,#99cbe1 185px,#dcf1f7 188px,#fffab7 190px,#fed182 192px,#fdb063 195px,#fede8e 200px,#fec97a 204.5px,#fed989 205.5px,#fffcba 207px,#e7f6ec 208px,#d4edf5 208.5px,#99cbe1 210px,#82b8d7 211.5px,#95c8e0 213.5px,#dbf1f7 216px,#fffdbb 218px,#feda8a 221px,#ea5839 226px,#de3e2d 228.5px,#ed5f3c 230.5px,#fdaa5f 232.5px,#fedb8b 234px,#fff3ad 235.5px,#ffffbf 238px,#def2f7 240.5px,#6fa7ce 244px,#4f81ba 246.5px,#6ca3cc 249px,#d8eff6 252px,#fff7b3 254px,#fee090 255.5px,#fed182 257px,#feea9f 260px,#fee191 264px,#ffffbf 267.5px,#dcf1f7 269.5px,#88bdda 273px,#71a9cf 279.5px);-webkit-mask-image:linear-gradient(90deg,transparent,#000 50.0%);mask-image:linear-gradient(90deg,transparent,#000 50.0%)"></div>
<div class="a" style="left:581px;top:0;width:34px;height:100%;background:linear-gradient(#f6fbd0 0px,#ffffbe 1px,#fdbb6d 6.5px,#fece7f 7.5px,#fff9b5 9px,#d5eef5 10.5px,#9ccde3 12px,#8ec1dc 13px,#addaea 18.5px,#dff2f8 20.5px,#fff8b5 22px,#fdbc6e 24px,#fca65d 25px,#fa9c58 35px,#fdb86b 37px,#fdfec2 40px,#d9f0f6 41.5px,#90c4dd 44px,#7eb5d6 46px,#99cbe1 51.5px,#d7eef5 54px,#fefec2 55.5px,#fed384 57px,#f36c42 59px,#cf2827 60.5px,#a50026 62.5px,#a50026 66px,#c11a27 67px,#e04330 68px,#fb9e5a 69.5px,#fed888 70.5px,#fffdbc 71.5px,#def2f8 72.5px,#77b0d2 74.5px,#5487bd 75.5px,#3a51a2 78px,#3d5ca8 79.5px,#4575b4 80.5px,#72abd0 82px,#e0f3f7 84.5px,#fffab7 86px,#fed081 88.5px,#fdc274 91px,#f67e4b 95px,#f46f44 97px,#f7814c 98.5px,#fdb164 100px,#fffab8 102.5px,#def2f8 104.5px,#b1dceb 109.5px,#6da5cd 114px,#6095c5 116.5px,#72abd0 118px,#def2f7 120.5px,#fcfec4 121.5px,#fedb8b 123px,#fdbd6f 124.5px,#fa9756 134px,#fdb568 136px,#ffffbf 138.5px,#d6eef5 140px,#abd9e9 141.5px,#a2d1e5 143px,#e1f3f7 145px,#fff8b4 146.5px,#feea9f 148px,#fdfec2 149.5px,#e6f5ed 150.5px,#d2ecf4 151.5px,#d9f0f6 152.5px,#e5f5ef 153px,#fffcbb 154px,#fa9756 156px,#f16640 157px,#ea593a 158px,#f47044 160px,#fede8e 164.5px,#fff4ae 168.5px,#feffc0 169.5px,#ddf1f7 171.5px,#8cc0db 174.5px,#74add1 177px,#b5deec 181px,#b4ddeb 182px,#8ec2dd 184.5px,#8fc3dd 186px,#daf0f6 189px,#fdfec2 190.5px,#feca7b 193px,#fdb366 195px,#feeea5 200px,#fdc576 205px,#fed888 206px,#ffffbf 207.5px,#e1f3f6 208.5px,#9fcfe4 210px,#7eb5d6 211.5px,#96c8e0 213.5px,#daf0f6 215.5px,#feffc1 217px,#fee192 219px,#fecf80 221.5px,#fdb063 223px,#de3f2e 226.5px,#d32c27 229px,#e24631 230.5px,#f67848 232px,#fed888 235px,#fee79b 237.5px,#ffffbe 239.5px,#e2f4f5 241px,#75aed1 244px,#5082bb 246.5px,#5a8ec1 248px,#6fa7ce 249px,#e2f4f4 252px,#fff9b6 253.5px,#fee191 255px,#fed384 256.5px,#feffc1 260px,#fee191 263.5px,#fffcbb 266.5px,#ddf2f7 268.5px,#85bbd8 272px,#6fa7ce 279.5px);-webkit-mask-image:linear-gradient(90deg,transparent,#000 29.4%);mask-image:linear-gradient(90deg,transparent,#000 29.4%)"></div>
<div class="a" style="left:591px;top:0;width:48px;height:100%;background:linear-gradient(#f6fbd0 0px,#ffffbe 1px,#fdbb6d 6.5px,#fecd7e 7.5px,#fff7b3 9px,#d9f0f6 10.5px,#a0d0e4 12px,#8dc1dc 13.5px,#abd9e9 18.5px,#dff2f8 20.5px,#fff9b5 22px,#fdbe70 24px,#fca95f 25px,#fca45c 26.5px,#fdb467 35.5px,#fedc8c 38px,#fdfec3 40px,#e0f3f8 41.5px,#9bcce2 44px,#81b7d7 46.5px,#a2d2e5 51.5px,#daf0f6 54px,#fdfec3 55.5px,#fed98a 57px,#ef633e 59.5px,#cf2827 61px,#a50026 63px,#a60126 65.5px,#ca2327 67px,#e54c34 68px,#fca65d 69.5px,#fede8e 70.5px,#fcfec4 71.5px,#d4edf5 72.5px,#5284bc 75px,#313695 77px,#313695 80px,#4066ad 81.5px,#6399c7 82.5px,#d0ebf3 84.5px,#e6f5ed 85px,#fffbb9 86px,#fec97a 88.5px,#fdb86a 91.5px,#f67e4b 95.5px,#f67948 97.5px,#fdac60 100px,#fffebd 103.5px,#e7f6ea 105.5px,#e0f3f8 108px,#addae9 111.5px,#71aacf 114.5px,#588cc0 117.5px,#6ea6ce 119px,#e0f3f7 121px,#fff7b3 122px,#fed384 123px,#fdb86a 124px,#fba15b 134px,#fec879 136px,#fdfec3 138px,#e2f4f4 139px,#9acce2 141px,#84bad8 142.5px,#92c5de 143.5px,#e1f3f7 145px,#fff9b7 146px,#feeca1 146.5px,#fedd8e 147.5px,#fee598 148.5px,#fafdc8 150px,#e9f6e8 151px,#e4f5f0 152px,#f1fad9 153px,#fff2ab 154px,#fca85e 155.5px,#ec5c3b 157px,#e75136 158px,#f36a42 159.5px,#fca55d 161px,#fede8e 162.5px,#feffc0 164.5px,#dcf1f7 170px,#92c5de 174px,#7db4d5 176.5px,#afdbea 181px,#87bcd9 186px,#a2d2e5 187.5px,#e2f4f4 189.5px,#fffab8 191px,#fedb8b 192.5px,#fdb96b 194.5px,#fdbd70 196px,#fee192 198px,#feeea6 200px,#fdac60 204.5px,#fdc475 206px,#f8fccd 208px,#e7f6eb 208.5px,#d1ecf4 209px,#90c4dd 210.5px,#7eb5d6 211.5px,#8bc0db 213px,#def2f7 215.5px,#fffdbc 217px,#feeba0 218px,#fecd7e 221.5px,#fdae61 223px,#e04330 226.5px,#d62f27 228.5px,#e44b33 230.5px,#fdb265 233.5px,#fed586 235px,#fee99e 238px,#fffdbd 239.5px,#e2f4f5 241px,#70a9cf 244px,#4777b5 246.5px,#4979b6 247.5px,#649ac7 249px,#ceeaf3 251.5px,#e3f4f2 252px,#ffffc0 253px,#fed182 255px,#fdc173 256.5px,#fed081 257.5px,#fff7b2 259px,#fafdc8 260px,#fffebe 261px,#fed182 263px,#fed787 264.5px,#fffdbb 267px,#e3f4f2 268.5px,#d5edf5 269px,#98cae1 271px,#7eb5d6 272.5px,#6fa7ce 279.5px);-webkit-mask-image:linear-gradient(90deg,transparent,#000 50.0%);mask-image:linear-gradient(90deg,transparent,#000 50.0%)"></div>
<div class="a" style="left:615px;top:0;width:48px;height:100%;background:linear-gradient(#f6fbd0 0px,#ffffbe 1px,#fdbb6d 6.5px,#fecc7d 7.5px,#fbfdc7 9.5px,#ddf2f7 10.5px,#a3d3e5 12px,#8dc1dc 13.5px,#a9d8e8 18.5px,#def2f7 20.5px,#fff9b6 22px,#fdb467 24.5px,#fca85e 27.5px,#fdb86b 35.5px,#fffab8 39.5px,#dff3f8 41.5px,#a4d3e6 44px,#91c4de 46px,#abd9e9 51.5px,#dff3f8 54px,#feffc1 55.5px,#fedb8b 57px,#fa9b58 58.5px,#e04330 60.5px,#c11a27 62px,#a80326 64.5px,#c31d27 66.5px,#e85438 68px,#fdac60 69.5px,#fee192 70.5px,#fafdc8 71.5px,#e8f6e9 72px,#d0ebf4 72.5px,#4c7eb9 75px,#323a97 76.5px,#313695 77px,#323896 81px,#426cb0 82px,#8ec2dc 83.5px,#cdeaf3 84.5px,#e6f5ed 85px,#fff8b5 86px,#fed283 87.5px,#fdc375 88.5px,#fdb86a 98px,#feeea4 109px,#fffdbd 110.5px,#dbf0f7 112.5px,#77afd2 115.5px,#5588be 118px,#6da5cd 119.5px,#e5f5ef 121.5px,#fff1aa 122.5px,#fecc7d 123.5px,#fdb86a 124.5px,#fdaf62 126.5px,#f47045 130.5px,#ed5e3c 133px,#f57446 134.5px,#fa9b58 135.5px,#ffffc0 138px,#e0f3f8 139px,#8dc1dc 141px,#73acd0 143px,#89beda 144px,#ceeaf3 145.5px,#e4f5f0 146px,#fdfec3 147px,#fedb8b 151px,#f57245 154px,#e04330 155.5px,#d12a27 157.5px,#e54d35 160px,#fcaa5f 162.5px,#fee191 164.5px,#fcfec4 169.5px,#e1f3f6 171.5px,#a5d5e7 174px,#89beda 176px,#a7d6e7 181.5px,#7eb5d6 185.5px,#99cbe1 187.5px,#dbf1f7 189.5px,#fffebe 191px,#fed485 193px,#fdbe70 194.5px,#fdc273 196px,#fee89c 198.5px,#feeea5 200px,#fdaf62 204.5px,#fedc8c 206.5px,#fffab7 207.5px,#e5f5f0 208.5px,#a1d1e5 210px,#7fb6d6 211.5px,#8cc0dc 213px,#e1f3f6 215.5px,#f9fdca 216.5px,#fee294 218.5px,#fecb7c 221.5px,#e85337 226px,#da362a 228.5px,#e65136 230.5px,#fed485 235px,#fee496 237.5px,#fffdbb 239.5px,#e2f4f5 241px,#6ca4cc 244px,#426baf 246.5px,#426aaf 247.5px,#578abf 249px,#77afd2 250px,#d8eff6 252px,#fffab7 253.5px,#fedb8b 255px,#feca7b 256.5px,#fed989 257.5px,#fffab8 259px,#f7fcce 260px,#fdfec3 261px,#fed585 263px,#feda8a 264.5px,#fffebd 267px,#e3f4f3 268.5px,#98cae1 271px,#7db4d5 272.5px,#6fa7ce 279.5px);-webkit-mask-image:linear-gradient(90deg,transparent,#000 50.0%);mask-image:linear-gradient(90deg,transparent,#000 50.0%)"></div>
<div class="a" style="left:639px;top:0;width:48px;height:100%;background:linear-gradient(#f6fbd0 0px,#ffffbe 1px,#fdbb6d 6.5px,#fedb8b 8px,#fbfdc7 9.5px,#ddf2f7 10.5px,#a2d2e5 12px,#8abfdb 13.5px,#a8d6e8 18.5px,#def2f7 20.5px,#fffab7 22px,#fdc173 24px,#fcaa5f 25.5px,#fdbd6f 35.5px,#fffdbb 39.5px,#e0f3f7 41.5px,#a6d5e7 44.5px,#a0d0e4 47px,#b1dceb 51.5px,#e2f4f4 54px,#ffffbf 55.5px,#fedb8b 57px,#ec5c3b 60px,#c72127 62px,#b00a26 64.5px,#ca2327 66.5px,#f57245 68.5px,#fee090 70.5px,#fcfec4 71.5px,#d7eff5 72.5px,#83b9d8 74px,#4574b3 75.5px,#323996 77px,#313695 77.5px,#313695 80.5px,#4676b5 82px,#95c7df 83.5px,#d2ecf4 84.5px,#f9fdca 85.5px,#fff6b2 86px,#fed081 87.5px,#fdc375 88.5px,#fdc677 98px,#feeba1 108.5px,#fffebe 110.5px,#d9f0f6 112.5px,#76afd2 115.5px,#5588be 118px,#689fca 119.5px,#cfebf3 121.5px,#e8f6e8 122px,#fafdc8 122.5px,#feca7b 124.5px,#f67b49 133px,#f88a50 134.5px,#fca95f 135.5px,#fffbb9 138px,#d7eff6 139.5px,#93c6df 141.5px,#80b7d6 143px,#92c5de 144.5px,#e0f3f8 147px,#fffbb8 151px,#feda8a 152.5px,#f7854e 154.5px,#e54d34 156px,#da362a 157.5px,#e85438 160.5px,#feca7b 165.5px,#fee293 169px,#fffebd 171px,#e3f4f2 172.5px,#8dc1dc 176px,#9fd0e4 181.5px,#76afd2 185px,#8abeda 187px,#ddf2f7 189.5px,#fffcba 191px,#fed182 193px,#fdbd6f 194.5px,#feeea5 199.5px,#fdc678 204.5px,#feea9f 206.5px,#fdfec3 207.5px,#e4f4f1 208.5px,#afdbea 210px,#95c7df 211.5px,#a2d2e5 213px,#def2f7 215px,#fffebe 216.5px,#fee090 218.5px,#fec97a 221.5px,#ea593a 226px,#e04330 228.5px,#ee603d 230.5px,#fecc7d 234.5px,#fee79a 238px,#fffcba 239.5px,#e2f4f5 241px,#6da5cd 244px,#4575b4 246.5px,#4e80ba 248px,#6399c7 249px,#dbf1f7 252px,#fffdbb 253.5px,#fee395 255px,#fed787 256.5px,#ffffc0 260.5px,#fed989 263.5px,#fee496 265px,#feffc1 267px,#e2f4f5 268.5px,#97c9e0 271px,#7cb3d4 272.5px,#6fa7ce 279.5px);-webkit-mask-image:linear-gradient(90deg,transparent,#000 50.0%);mask-image:linear-gradient(90deg,transparent,#000 50.0%)"></div>
<div class="a" style="left:663px;top:0;width:48px;height:100%;background:linear-gradient(#f6fbd0 0px,#ffffbe 1px,#fdbb6d 6.5px,#fece7f 7.5px,#fff9b6 9px,#e7f6eb 10px,#d3ecf4 10.5px,#95c8e0 12px,#81b7d7 13.5px,#a6d5e7 18.5px,#dcf1f7 20.5px,#fffbba 22px,#fdc576 24px,#fdab5f 26px,#fdbe70 35.5px,#fffcba 39.5px,#d8eff6 42px,#a4d3e6 45.5px,#acdae9 50.5px,#b7dfed 52px,#e2f4f5 54px,#ffffbf 55.5px,#fedc8c 57px,#f57245 59.5px,#d42d27 61.5px,#b30d26 64px,#c11b27 66px,#ec5c3b 68px,#fdaf62 69.5px,#fee192 70.5px,#fcfec5 71.5px,#d6eef5 72.5px,#4473b3 75.5px,#323996 77px,#313695 77.5px,#313695 80.5px,#436eb1 82px,#a5d4e6 84px,#def2f7 85px,#fff5af 86.5px,#fed687 88px,#fecd7e 89px,#fecc7d 99px,#fff1aa 108.5px,#ffffc0 110px,#dbf0f6 112px,#6fa7ce 115.5px,#5a8ec1 117.5px,#75aed1 119.5px,#cfebf3 121.5px,#e5f5ef 122px,#fffdbc 123px,#fedc8c 124.5px,#fecd7e 125.5px,#fba15b 134px,#fdbb6d 135.5px,#fffab8 138px,#e2f4f5 139.5px,#a5d4e7 141.5px,#8ec2dd 143.5px,#9ecee3 145px,#e0f3f8 148px,#ecf8e1 150.5px,#fffab7 152px,#fee394 153px,#fca65d 154.5px,#ea5839 156.5px,#e24732 158px,#ee603d 160.5px,#fdc273 165px,#fee191 169px,#fffdbc 171px,#e1f3f6 172.5px,#9ccde2 174.5px,#7db4d5 176px,#7ab2d4 177.5px,#97c9e0 181.5px,#6ea6cd 185px,#8abfdb 187px,#d9f0f6 189px,#fff9b7 190.5px,#fed384 192px,#fdb568 194px,#feeea5 199.5px,#fecf80 204.5px,#fff7b3 207px,#dcf1f7 209px,#addaea 211.5px,#b8dfed 213px,#ddf1f7 214.5px,#fafdc7 216px,#feeba0 217.5px,#fed283 221px,#ee603d 226px,#e75136 227.5px,#f0653f 230px,#fecd7e 234.5px,#fee698 238px,#fffcba 239.5px,#e2f4f5 241px,#6fa7ce 244px,#5082bb 246px,#5588be 247.5px,#71a9cf 249px,#def2f8 252px,#ffffbf 253.5px,#fed889 256.5px,#fff6b2 260.5px,#fed989 262.5px,#fed485 263.5px,#fee294 265px,#feffc0 267px,#e2f4f5 268.5px,#7ab2d4 272.5px,#6fa7ce 279.5px);-webkit-mask-image:linear-gradient(90deg,transparent,#000 50.0%);mask-image:linear-gradient(90deg,transparent,#000 50.0%)"></div>
<div class="a" style="left:687px;top:0;width:48px;height:100%;background:linear-gradient(#f6fbd0 0px,#ffffbe 1px,#fdbb6d 6.5px,#fecf80 7.5px,#fffcbb 9px,#e2f4f5 10px,#89beda 12px,#77b0d2 13.5px,#a4d4e6 18.5px,#d9f0f6 20.5px,#fffebd 22px,#fdbc6e 24.5px,#fdab5f 26px,#fdbe70 35.5px,#fcfec4 40px,#ddf1f7 42px,#a9d7e8 45.5px,#acdae9 50.5px,#b7dfed 52px,#e2f4f5 54px,#ffffbf 55.5px,#fedc8c 57px,#f57245 59.5px,#d42d27 61.5px,#b30d26 64px,#c11b27 66px,#ec5c3b 68px,#fdaf62 69.5px,#fee192 70.5px,#fcfec5 71.5px,#d6eef5 72.5px,#4473b3 75.5px,#323996 77px,#313695 77.5px,#313695 80.5px,#333c98 81px,#4067ad 82px,#6399c7 83px,#cce9f2 85px,#e3f4f2 85.5px,#feffc1 86.5px,#fff5b0 87px,#feda8a 89px,#fdb669 99px,#feeca2 105px,#fffdbc 109px,#d7eef5 111.5px,#7bb3d4 114.5px,#6197c5 116.5px,#74acd1 118.5px,#d8eff6 121px,#fffab8 122.5px,#fec97b 125px,#fa9656 133px,#fdc677 136px,#fefec2 138.5px,#e0f3f8 140px,#a7d6e7 143px,#abd9e9 144px,#dcf1f7 145.5px,#fff4ae 147.5px,#fedd8d 151px,#ee603d 156px,#e65136 158px,#f16640 160.5px,#fec879 165.5px,#fedf8f 169px,#fffcbb 171px,#def2f8 172.5px,#90c4dd 174.5px,#6ea6cd 176px,#6ca3cc 177.5px,#8fc3dd 181.5px,#669dc9 185px,#79b1d3 186.5px,#def2f7 189px,#fbfdc6 190px,#fedd8d 191.5px,#fdb668 193.5px,#feeea6 199.5px,#fed080 203px,#fed282 204.5px,#fcfec4 207.5px,#e2f4f4 209px,#c4e6f0 211.5px,#dbf1f7 213.5px,#fffdbc 216px,#feea9f 217.5px,#fedb8b 220.5px,#fdba6c 222.5px,#ef623e 226px,#e95538 228px,#f36c42 230px,#fdc576 234px,#fee497 238px,#fffbb9 239.5px,#e1f3f6 241px,#6fa7ce 244px,#5386bd 246px,#5b8fc2 247.5px,#76aed2 249px,#dcf1f7 252px,#fff9b5 254px,#fed687 256.5px,#fed585 258px,#feeda4 260.5px,#fec97a 263px,#fede8e 265px,#fffebd 267px,#e3f4f3 268.5px,#79b1d3 272.5px,#6fa7ce 279.5px);-webkit-mask-image:linear-gradient(90deg,transparent,#000 50.0%);mask-image:linear-gradient(90deg,transparent,#000 50.0%)"></div>
<div class="a" style="left:711px;top:0;width:48px;height:100%;background:linear-gradient(#f6fbd0 0px,#ffffbe 1px,#fdbb6d 6px,#fed182 7.5px,#ffffc0 9px,#dbf0f7 10px,#90c3dd 11.5px,#6fa8ce 13px,#a3d2e5 18.5px,#d6eef5 20.5px,#e6f5ee 21px,#fefec1 22px,#fdc072 24.5px,#fdab5f 26.5px,#fdbe70 35.5px,#feffc1 40px,#e0f3f7 42px,#addaea 45.5px,#addaea 51px,#e2f4f5 54px,#ffffbf 55.5px,#fedb8b 57px,#ec5c3b 60px,#c62027 62px,#ad0826 64.5px,#d32c27 67px,#f46d43 68.5px,#fede8e 70.5px,#fdfec2 71.5px,#d7eff5 72.5px,#5285bc 75px,#343f99 76.5px,#313695 77px,#323896 83px,#4677b5 85px,#aad8e8 88px,#e1f3f6 89.5px,#fffdbc 91px,#fdaf62 94.5px,#f8864f 96.5px,#f67b49 98.5px,#f88b51 100px,#fdb063 101.5px,#fee89b 104px,#fefec2 108px,#d9f0f6 110.5px,#71aacf 114px,#5d91c3 116px,#76aed2 118px,#dbf1f7 120.5px,#f8fccb 121.5px,#fee395 123px,#fdc677 124.5px,#f98e52 133px,#fdae61 135px,#fffebe 138.5px,#dbf0f7 140.5px,#b6dfec 143px,#bde2ee 144px,#dcf1f7 145px,#f8fccd 146px,#fee79b 147.5px,#fecd7e 151px,#ef633e 156px,#ea5839 158.5px,#f36c42 160.5px,#fec879 165.5px,#fede8e 169px,#fffebd 171px,#d5edf5 172.5px,#81b7d7 174.5px,#649ac7 176px,#689ec9 177.5px,#9bcce2 181.5px,#5e92c3 185px,#77afd2 187px,#daf0f6 189.5px,#fffab8 191px,#fee496 192px,#fdc173 194.5px,#feeea6 199.5px,#fed081 204px,#fbfec6 207.5px,#dff2f8 209.5px,#d2ecf4 211px,#dbf1f7 212.5px,#feffc1 215.5px,#feeaa0 217.5px,#fede8e 220.5px,#fdb86b 222.5px,#ee613d 225.5px,#e54d34 228px,#f16640 230px,#fecb7c 234.5px,#fee496 238px,#fffbb9 239.5px,#e0f3f8 241px,#6aa2cb 244px,#4e80b9 246px,#5588be 247.5px,#6fa7ce 249px,#d2ecf4 252px,#e2f4f4 252.5px,#fffebd 254px,#fed383 257px,#fee79a 260.5px,#fdc173 263px,#feda8a 265px,#fffdbc 267px,#e3f4f2 268.5px,#d4edf5 269px,#97c9e0 271px,#73acd0 273px,#6fa7ce 279.5px);-webkit-mask-image:linear-gradient(90deg,transparent,#000 50.0%);mask-image:linear-gradient(90deg,transparent,#000 50.0%)"></div>
<div class="a" style="left:735px;top:0;width:48px;height:100%;background:linear-gradient(#f6fbd0 0px,#ffffbe 1px,#fdbb6d 6px,#fed080 7.5px,#fffdbc 9px,#e0f3f7 10px,#83b9d8 12px,#70a8ce 13.5px,#a1d1e5 18.5px,#e3f4f3 21px,#fff8b4 22.5px,#fdb96b 25px,#fdab5f 26.5px,#fdbe70 35.5px,#fdfec2 40px,#dff3f8 42px,#b0dbea 45px,#a9d7e8 50.5px,#b5deec 52px,#e1f3f6 54px,#ffffbf 55.5px,#fed989 57px,#f0653f 59.5px,#cf2827 61px,#a50026 63px,#a60126 67px,#b50f26 67.5px,#d93429 68.5px,#f99154 70px,#fed283 71px,#fffebd 72px,#d4edf5 73px,#93c6de 74px,#4471b2 75.5px,#323a97 76.5px,#313695 77px,#313896 83.5px,#4473b3 85px,#a6d5e7 87.5px,#d2ecf4 88.5px,#e5f5ef 89px,#fff5af 90.5px,#fdb063 93px,#f67e4b 95px,#f57145 97px,#fca45c 99.5px,#ffffbf 103px,#e9f7e7 104.5px,#e0f3f8 106px,#d9f0f6 107.5px,#b7dfec 109.5px,#71a9cf 112.5px,#568abf 115px,#598dc0 116px,#72abd0 117.5px,#d3edf4 120px,#e6f5ee 120.5px,#ffffc0 121.5px,#fee191 123px,#fdc577 124.5px,#f98e52 133px,#fdb669 135px,#fffdbc 137.5px,#dcf1f7 139px,#a1d1e5 141px,#92c5de 142.5px,#9fd0e4 143.5px,#d8eff6 145px,#f7fcce 146px,#fee79a 147.5px,#fdc778 151px,#ee603d 155px,#e34932 157px,#eb5a3a 159.5px,#fec779 165px,#fedf8f 168.5px,#fffdbb 170.5px,#dbf1f7 172px,#8bc0db 174px,#6aa1cb 175.5px,#6ea6ce 177.5px,#a1d1e5 180px,#addaea 181.5px,#6399c6 184.5px,#598dc1 185.5px,#74add1 187.5px,#d4edf5 190px,#e6f5ee 190.5px,#feffc1 191.5px,#fee394 193px,#fecd7e 194.5px,#feeea5 199.5px,#feda8b 204px,#fff2ab 206px,#e3f4f3 208px,#b7dfec 209.5px,#a3d3e6 211px,#aedaea 212.5px,#ddf1f7 214.5px,#fffebd 216.5px,#fff0a8 217.5px,#fee191 220.5px,#fdb86b 222.5px,#f16640 225px,#e04430 227px,#e95638 229.5px,#fece7f 234.5px,#fee79a 238px,#fffebe 239.5px,#dbf1f7 241px,#73acd1 243.5px,#5183bb 245px,#4979b6 246px,#5083bb 247.5px,#6ba2cb 249px,#e0f3f7 252.5px,#fff7b3 254.5px,#feda8a 257.5px,#fff4ae 260.5px,#fecc7d 263px,#fee090 265px,#fffebe 267px,#e2f4f4 268.5px,#7ab2d4 272.5px,#6fa7ce 279.5px);-webkit-mask-image:linear-gradient(90deg,transparent,#000 50.0%);mask-image:linear-gradient(90deg,transparent,#000 50.0%)"></div>
<div class="a" style="left:759px;top:0;width:48px;height:100%;background:linear-gradient(#f6fbd0 0px,#ffffbe 1px,#fdbb6d 6px,#fece7f 7.5px,#fffbb8 9px,#e4f4f1 10px,#88bdda 12px,#6fa7ce 13.5px,#a0d1e4 18.5px,#e0f3f7 21px,#fffab8 22.5px,#fdc678 24.5px,#fca95e 26.5px,#fdbd6f 35.5px,#fffab8 39.5px,#ddf2f7 42px,#afdbea 45px,#a6d5e7 50.5px,#bae0ed 52.5px,#dff2f8 54px,#fdfec2 55.5px,#fedb8b 57px,#f0643f 59.5px,#cb2527 61px,#a50026 62.5px,#a80326 68px,#d12b27 69px,#f88d52 70.5px,#fed384 71.5px,#fdfec2 72.5px,#e9f6e8 73px,#cbe9f2 73.5px,#4d7eb9 75.5px,#34409a 76.5px,#313695 77px,#313695 83.5px,#4472b2 85px,#9fd0e4 87px,#d3edf4 88px,#e8f6ea 88.5px,#fffab7 89.5px,#fca95f 92px,#f67c4a 93.5px,#f26a41 95px,#f57446 96.5px,#fcaa5f 98.5px,#fffbb9 101.5px,#e0f3f7 103.5px,#c8e7f1 105px,#addaea 109px,#6fa7ce 113px,#6196c5 115.5px,#76afd2 117.5px,#e1f3f7 120.5px,#f8fccc 121.5px,#fee79b 123px,#fece7f 124.5px,#fba15b 132px,#fdbf71 134.5px,#fcfec5 137px,#e3f4f3 138px,#8fc3dd 140.5px,#7cb4d5 142px,#93c5de 143.5px,#d0ebf4 145px,#e5f5ef 145.5px,#fffdbd 146.5px,#fee292 148px,#fecd7e 150.5px,#fdac60 152px,#e34a33 155px,#d73027 157px,#e24732 159.5px,#fecb7c 165px,#fee395 168.5px,#fdfec3 170.5px,#dbf1f7 172px,#88bdda 174.5px,#6da4cd 176.5px,#7ab1d3 178px,#a8d7e8 180px,#b6deec 181.5px,#78b0d3 184.5px,#74add1 186px,#8fc3dd 187.5px,#e3f4f3 190px,#fffab7 191.5px,#fed686 193.5px,#fec87a 195px,#feeea5 199.5px,#fee496 204.5px,#fcfec4 206.5px,#e4f5f0 207.5px,#d1ecf4 208px,#89beda 210px,#78b0d3 211.5px,#8ec2dc 213px,#d6eef5 215px,#ffffbf 216.5px,#fed98a 218.5px,#fdbf71 221.5px,#e75237 225.5px,#dc3a2b 227.5px,#e44c34 229.5px,#fed081 234.5px,#fee598 237.5px,#fffebd 239.5px,#e1f3f6 241px,#72aad0 244px,#5285bc 246px,#5689be 247.5px,#6da4cd 249px,#def2f8 252.5px,#fffab7 254.5px,#fee395 257.5px,#fbfdc6 260px,#fede8e 262.5px,#fed788 263.5px,#fee495 265px,#feffc1 267px,#e1f4f5 268.5px,#97c9e0 271px,#7bb3d4 272.5px,#6fa7ce 279.5px);-webkit-mask-image:linear-gradient(90deg,transparent,#000 50.0%);mask-image:linear-gradient(90deg,transparent,#000 50.0%)"></div>
<div class="a" style="left:783px;top:0;width:48px;height:100%;background:linear-gradient(#f6fbd0 0px,#ffffbe 1px,#fdbb6d 6px,#fecd7f 7.5px,#fff8b5 9px,#e7f6eb 10px,#d1ecf4 10.5px,#7eb5d5 12.5px,#70a8cf 14px,#a6d5e7 19px,#ddf2f7 21px,#fffdbb 22.5px,#fdbc6e 25px,#fca65d 27px,#fdbc6e 35.5px,#fffcba 39.5px,#dbf1f7 42px,#aedbea 45px,#a5d4e7 51px,#dcf1f7 54px,#fbfec5 55.5px,#fede8e 57px,#e54d34 60px,#b91326 61.5px,#a50026 62.5px,#a50026 68.5px,#cc2627 69.5px,#f88d52 71px,#fed687 72px,#f9fdca 73px,#e3f4f2 73.5px,#c1e4ef 74px,#5b8fc1 75.5px,#313695 77px,#313695 84px,#394ea1 84.5px,#578abf 85.5px,#c9e8f2 87.5px,#e4f5f1 88px,#fff9b6 89px,#fdb063 91px,#f67b4a 92.5px,#f26941 94px,#f57647 95.5px,#fdad60 97.5px,#fffcba 100.5px,#dbf0f6 102.5px,#afdbea 105px,#6fa7ce 116px,#87bcd9 118px,#d9eff6 120.5px,#fdfec4 122px,#fee699 123.5px,#fecd7e 125.5px,#fee496 132.5px,#fffcbb 135px,#e3f4f3 137px,#9ecee3 140px,#8bbfdb 142px,#9dcee3 143.5px,#d3edf4 145px,#e5f5ef 145.5px,#feffc1 146.5px,#feeca2 147.5px,#fed686 150.5px,#ee613e 155.5px,#e54e35 157.5px,#fba05a 170.5px,#fdc072 171.5px,#fffab8 173px,#e0f3f8 174px,#7db4d5 176px,#6ba2cb 177.5px,#a2d2e5 181px,#8fc3dd 186px,#d5eef5 189px,#e4f4f1 189.5px,#fffcba 191px,#fed788 193px,#fdc374 195px,#feeea6 200px,#fee598 204.5px,#fbfdc7 206.5px,#e2f4f5 207.5px,#7bb3d4 210px,#649ac7 211.5px,#72abd0 213px,#dcf1f7 215.5px,#fcfec5 216.5px,#fdbc6e 219px,#fca85e 221.5px,#e44b34 225.5px,#d73127 228px,#ea5739 230.5px,#fdad61 233px,#fedb8c 235px,#feeba1 238px,#fffdbd 239.5px,#d7eff5 241.5px,#75aed1 244.5px,#5c90c2 246.5px,#70a8cf 249px,#dcf1f7 252.5px,#fffcba 254.5px,#fee496 257.5px,#f9fdc9 259px,#eef9de 260px,#fff9b6 261.5px,#fed889 263.5px,#fee394 265px,#fffebe 267px,#e3f4f3 268.5px,#98cae1 271px,#7db4d5 272.5px,#6fa7ce 279.5px);-webkit-mask-image:linear-gradient(90deg,transparent,#000 50.0%);mask-image:linear-gradient(90deg,transparent,#000 50.0%)"></div>
<div class="a" style="left:807px;top:0;width:48px;height:100%;background:linear-gradient(#f6fbd0 0px,#ffffbe 1px,#fdbb6d 6.5px,#fedf8f 8px,#fffab7 9px,#e5f5ef 10px,#8dc1dc 12px,#74add1 13.5px,#a5d4e6 19px,#daf0f6 21px,#ffffbf 22.5px,#fdbe70 25px,#fca45c 27px,#fdbc6e 35.5px,#ffffbf 39.5px,#def2f7 41.5px,#a3d3e6 45px,#a1d1e5 50.5px,#acdae9 52px,#d7eff6 54px,#e4f5f1 54.5px,#fffbb8 56px,#fed081 57.5px,#f57145 59.5px,#d32d27 61px,#a50026 62.5px,#a50026 68.5px,#c82227 69.5px,#ec5d3c 70.5px,#fcaa5f 71.5px,#fffdbc 73px,#ecf7e3 73.5px,#cfebf3 74px,#4b7db8 76px,#333b97 77px,#313695 77.5px,#313695 84px,#3a52a3 84.5px,#5e93c3 85.5px,#9ccde3 86.5px,#def2f7 87.5px,#fffbb8 88.5px,#fcaa5f 90.5px,#f57346 92px,#f16740 93px,#f57748 95px,#fdac60 97px,#fff8b4 100px,#e2f4f4 102px,#d7eff5 102.5px,#afdbea 105px,#74add1 116.5px,#8dc1dc 118.5px,#e0f3f7 121px,#fffcbb 122.5px,#fee99d 123.5px,#fec879 126px,#fed989 127.5px,#fffebe 129.5px,#f2fad7 131px,#def2f8 138px,#cce9f2 142.5px,#e0f3f7 144.5px,#fffdbc 146.5px,#fee89c 148px,#fedb8b 151px,#fdad61 154.5px,#f7854e 158px,#fdae61 170px,#fed182 171.5px,#ffffbe 173px,#e1f3f7 174px,#74add1 176.5px,#6298c6 178px,#8ec1dc 181px,#71aacf 184.5px,#7bb3d4 186px,#e1f4f5 189.5px,#fffbba 191px,#fed283 193px,#fdba6d 195px,#feeda3 199.5px,#fee292 204px,#fff9b6 206px,#e3f4f3 207.5px,#84bad8 210px,#6da4cc 211.5px,#7bb3d4 213px,#e2f4f4 215.5px,#fffdbc 216.5px,#fdac60 219px,#f88b51 222px,#d93529 226.5px,#d32c27 229px,#f26a41 231.5px,#fdb86a 233.5px,#fede8e 235px,#fffdbc 239.5px,#e0f3f8 241.5px,#7cb4d5 245px,#679ec9 247px,#7eb5d6 249.5px,#daf0f6 252.5px,#fffcbb 254.5px,#fee192 257.5px,#f7fcce 260px,#ffffbf 261px,#fed585 263.5px,#fedd8d 265px,#fffab8 267px,#d9eff6 269px,#9acbe2 271px,#7eb5d5 272.5px,#6fa7ce 279.5px);-webkit-mask-image:linear-gradient(90deg,transparent,#000 50.0%);mask-image:linear-gradient(90deg,transparent,#000 50.0%)"></div>
<div class="a" style="left:831px;top:0;width:48px;height:100%;background:linear-gradient(#f6fbd0 0px,#ffffbe 1px,#fdbb6d 6.5px,#fecf80 7.5px,#fffcba 9px,#e3f4f3 10px,#8cc1dc 12px,#7ab2d4 13.5px,#a3d3e6 19px,#d6eef5 21px,#e5f5ef 21.5px,#fdfec3 22.5px,#fdc072 25px,#fba15b 27px,#fdb669 35px,#fffab8 39px,#e2f4f5 41px,#a9d8e8 43.5px,#95c8df 46.5px,#a4d3e6 51.5px,#e1f3f6 54.5px,#fffebe 56px,#fed888 57.5px,#f0653f 60px,#db382b 61px,#a50026 63px,#a50026 68.5px,#db392b 70px,#fba25b 71.5px,#fee394 72.5px,#f2fad7 73.5px,#dbf1f7 74px,#578abf 76px,#313695 77.5px,#313695 84px,#374a9f 84.5px,#5a8ec1 85.5px,#9acce2 86.5px,#dff3f8 87.5px,#fff8b4 88.5px,#fb9e5a 90.5px,#f26841 92px,#ed5e3c 93px,#f47045 95px,#fca75e 97px,#ffffbf 100.5px,#daf0f6 102.5px,#b0dbea 105px,#7ab2d4 117px,#92c5de 119px,#d5edf5 121px,#e5f5ef 121.5px,#fcfec4 122.5px,#fed989 124.5px,#fdc375 126px,#fdc374 127.5px,#fec97a 134px,#fefec1 138.5px,#e2f4f4 141px,#d4edf5 143px,#e0f3f8 144.5px,#fdfec3 146.5px,#fee79b 148.5px,#fedf8f 151.5px,#fca85e 156.5px,#f99455 159px,#fed283 169.5px,#fff9b6 172px,#e2f4f3 173.5px,#74add1 176.5px,#5a8ec1 178.5px,#7bb3d4 181.5px,#5d92c3 184px,#679dc9 185.5px,#87bcd9 187px,#e1f3f6 189.5px,#fffab8 191px,#fdc173 193.5px,#fdab60 195.5px,#fdb366 196.5px,#feeba1 199.5px,#fedf8f 204px,#fffbb9 206.5px,#dcf1f7 208.5px,#a7d6e7 210.5px,#97c9e0 212px,#a9d8e8 213.5px,#def2f8 215px,#fbfdc7 216px,#fdac60 218.5px,#f88950 219.5px,#f36c42 222.5px,#d62f27 225.5px,#b81226 228.5px,#bd1726 229.5px,#db392b 231px,#f67c4a 232.5px,#fdae61 233.5px,#fede8e 235px,#fffdbb 239.5px,#ddf1f7 242px,#88bdda 245.5px,#74add1 247.5px,#8dc1dc 250px,#d6eef5 252.5px,#fffebd 254.5px,#fede8f 257.5px,#fffcbb 260.5px,#fed081 264px,#fede8e 265.5px,#ffffc0 267.5px,#ddf2f7 269px,#86bcd9 272px,#6fa7ce 279.5px);-webkit-mask-image:linear-gradient(90deg,transparent,#000 50.0%);mask-image:linear-gradient(90deg,transparent,#000 50.0%)"></div>
<div class="a" style="left:855px;top:0;width:36px;height:100%;background:linear-gradient(#f6fbd0 0px,#ffffbe 1px,#fdbb6d 6.5px,#fecf80 7.5px,#fffbb9 9px,#e5f5f0 10px,#a5d4e6 11.5px,#8abeda 13px,#a0d0e4 18.5px,#ddf1f7 21px,#fffcbb 22.5px,#fdbc6e 25px,#fca85e 28px,#fdb163 35px,#fecf80 37px,#feffc0 39.5px,#e2f4f4 41px,#9bcce2 44px,#8dc1dc 46px,#a3d2e5 51.5px,#ddf2f7 54.5px,#fdfec3 56px,#fedd8d 57.5px,#f46c43 60px,#df422f 61px,#b00a26 63px,#a50026 64px,#a50026 66.5px,#b71226 67.5px,#dc3b2c 68.5px,#fca65d 70px,#fffdbc 71.5px,#eaf7e5 72px,#cbe9f2 72.5px,#a5d5e7 73px,#4370b1 74.5px,#313695 75.5px,#313695 81.5px,#36459d 82px,#578abf 83px,#98cae1 84px,#ddf2f7 85px,#fff9b6 86px,#fba35c 88px,#f67c4a 89px,#f36b42 90.5px,#f67c4a 92px,#fdb568 94px,#fff8b4 96.5px,#e0f3f8 98.5px,#bde2ee 100px,#addae9 102px,#b4deec 103px,#e2f4f4 105px,#fffebd 106.5px,#fee293 108px,#fdc274 110.5px,#fedb8b 112.5px,#fcfec5 114.5px,#d9eff6 116px,#acdae9 117.5px,#95c8e0 119px,#a1d1e5 121px,#def2f7 123.5px,#fdfec2 125px,#fee090 126.5px,#fdac60 128px,#eb5a3a 130.5px,#e0422f 132.5px,#ec5d3b 134.5px,#fdb063 136.5px,#fff9b6 138.5px,#ddf2f7 140px,#a2d2e5 142px,#97c9e0 144px,#c8e7f1 150px,#dcf1f7 151px,#fefec2 152.5px,#fecf80 154px,#ed5e3c 156px,#c82227 157.5px,#b10b26 159px,#cb2427 161px,#f7804c 163px,#fdb164 164px,#fecc7d 165px,#fee496 170.5px,#fcfec4 172px,#d5eef5 173px,#a4d4e6 174px,#94c7df 175px,#a9d8e8 176.5px,#d9eff6 178px,#fffab8 180px,#feeba1 181.5px,#fffdbb 183px,#e1f3f6 184px,#b0dbea 185px,#9ecee3 186px,#a9d8e8 187px,#d6eef5 188.5px,#feffc1 190px,#fee192 191.5px,#fecd7e 193px,#fee090 195px,#ffffbf 197px,#e9f7e7 198.5px,#e0f3f8 200px,#e9f6e7 201px,#fffdbd 202px,#fee191 203.5px,#fee597 205px,#feffc0 206.5px,#e5f5ee 207.5px,#d3edf4 208px,#8cc1dc 210px,#80b7d6 211px,#8fc3dd 212.5px,#e3f4f3 215px,#fafdc9 216px,#fee597 218px,#fed182 220.5px,#fdab60 222px,#f46f44 223.5px,#dd3c2c 225px,#c61f27 227px,#d83228 229px,#f57245 231px,#fcaa5f 233px,#fdb164 234.5px,#fb9f5a 237.5px,#fca95e 238.5px,#fdbf71 239.5px,#fffab8 241.5px,#d5edf5 243px,#82b8d7 245px,#6399c7 247px,#73acd0 249px,#addae9 251.5px,#cdeaf3 253.5px,#b7dfec 258px,#ddf2f7 260px,#fffcbb 261.5px,#fede8e 263px,#fed282 264.5px,#fee699 266px,#fafdc8 267.5px,#d7eef5 269px,#b9e0ed 270.5px,#7db5d5 279.5px);-webkit-mask-image:linear-gradient(90deg,transparent,#000 66.7%);mask-image:linear-gradient(90deg,transparent,#000 66.7%)"></div>
<div class="a" style="left:879px;top:0;width:24px;height:100%;background:linear-gradient(#f6fbd0 0px,#ffffbe 1px,#fdbb6d 6.5px,#fed081 7.5px,#fffdbb 9px,#e2f4f4 10px,#a0d0e4 11.5px,#86bcd9 13px,#a3d2e5 18.5px,#dff2f8 21px,#fffcbb 22.5px,#fdbc6e 25px,#fca65d 26.5px,#fdb265 35px,#fed182 37px,#fdfec3 39.5px,#e1f3f7 41px,#a2d2e5 43.5px,#8dc1dc 45.5px,#a7d6e7 51.5px,#e2f4f4 54.5px,#fffcba 56px,#fdbe70 58px,#e24832 60.5px,#be1826 62px,#a50026 63.5px,#a50026 66px,#b71126 67px,#dc3a2c 68px,#fca45c 69.5px,#fffcba 71px,#ecf7e3 71.5px,#cdeaf3 72px,#4472b2 74px,#313695 75px,#333b98 81.5px,#4d7fb9 82.5px,#addae9 84px,#cfeaf3 84.5px,#e9f7e7 85px,#fcfec4 85.5px,#fff0a8 86px,#fdb062 87.5px,#f57547 89px,#f26841 90px,#f57748 91.5px,#fca85e 93px,#fffdbc 95.5px,#d6eef5 97px,#92c5de 99px,#7cb3d4 101px,#91c4de 102.5px,#d7eef5 104.5px,#fffdbc 106px,#fdb96b 108.5px,#fba35c 110.5px,#fdb164 111.5px,#feda8a 113px,#fcfec5 114.5px,#e1f3f7 115.5px,#80b6d6 118px,#6aa1cb 119.5px,#84bad8 122px,#dbf0f6 124.5px,#fffab8 126px,#fb9f5a 128.5px,#e24832 131px,#da372a 133px,#ec5d3c 135px,#fdb365 137px,#fff8b5 139px,#e1f3f6 140.5px,#a8d6e8 142.5px,#9acbe2 144.5px,#daf0f6 150.5px,#feffc1 152px,#fee294 153px,#f57145 155px,#d32c27 156.5px,#ba1426 158px,#d02927 160px,#f67b4a 162px,#fdac60 163px,#fed586 164.5px,#fee090 166px,#fed181 170px,#fee192 171px,#fffcba 172px,#e2f4f4 173px,#a5d4e6 174.5px,#9ccde3 175.5px,#aedbea 176.5px,#e5f5ee 178px,#fffdbc 179px,#fed485 181px,#fed687 182px,#fff4ae 183px,#e2f4f5 184px,#a6d5e7 185px,#90c3dd 186px,#a8d6e8 187.5px,#e0f3f8 189px,#fafdc8 190px,#fee394 191.5px,#fece7f 193.5px,#fee192 195px,#fdfec3 197px,#e8f6e9 198.5px,#e2f4f4 200px,#fafdc8 201px,#fdbc6e 202.5px,#fca45c 203.5px,#fdbf71 205px,#ffffbf 207px,#e1f3f6 208px,#a2d2e5 209.5px,#85bad8 211px,#91c4de 212.5px,#e2f4f5 215px,#fffbba 216.5px,#feeba0 217.5px,#fecc7d 221px,#f46d43 224px,#de3e2e 225.5px,#cc2627 227.5px,#d83328 229px,#f46e44 231px,#fdaf62 233.5px,#fa9756 237px,#fba05b 238.5px,#fecd7e 240px,#fffdbc 241.5px,#e3f4f3 242.5px,#77b0d2 245px,#6197c5 246.5px,#6fa7ce 248.5px,#b3ddeb 251.5px,#d2ecf4 253.5px,#bae0ed 258px,#dcf1f7 259.5px,#fbfdc7 260.5px,#fff3ad 261px,#fdc173 262.5px,#fdb467 263.5px,#fed586 265.5px,#fffab8 267px,#e1f3f6 268.5px,#b5deec 270.5px,#7eb5d5 279.5px);-webkit-mask-image:linear-gradient(90deg,transparent,#000 50.0%);mask-image:linear-gradient(90deg,transparent,#000 50.0%)"></div>
<div class="a" style="left:891px;top:0;width:24px;height:100%;background:linear-gradient(#f6fbd0 0px,#ffffbe 1px,#fdbb6d 6px,#fed181 7.5px,#ffffbe 9px,#dff2f8 10px,#9acbe2 11.5px,#82b8d7 13px,#a6d5e7 18.5px,#e0f3f7 21px,#fffcbb 22.5px,#feca7b 24.5px,#fba35c 27px,#fdb366 35px,#fff9b6 39px,#dff2f8 41px,#a0d0e4 43.5px,#8dc1dc 45.5px,#abd9e9 51.5px,#dcf1f7 54px,#fcfec4 55.5px,#fedb8c 57px,#f0653f 59.5px,#cf2827 61px,#a50026 63px,#a50026 65.5px,#b61026 66.5px,#db382b 67.5px,#f67948 68.5px,#fdc476 69.5px,#fffab7 70.5px,#d2ecf4 71.5px,#acdae9 72px,#4777b5 73.5px,#313695 74.5px,#313695 80.5px,#374a9f 81px,#6196c5 82px,#d2ecf4 83.5px,#fff9b6 84.5px,#fdc577 85.5px,#f7834d 86.5px,#dd3d2d 88px,#d42d27 89.5px,#e75136 91px,#fca85e 92.5px,#fee395 93.5px,#f2fad6 94.5px,#ddf1f7 95px,#7db4d5 96.5px,#5184bc 97.5px,#3f62ab 98.5px,#3b57a5 99.5px,#5487bd 101.5px,#80b7d6 102.5px,#def2f7 104px,#f2fad7 104.5px,#fff9b5 105px,#fdb265 106.5px,#f16640 108px,#e44c34 109.5px,#f26a41 111px,#fb9d59 112px,#fcfec4 114px,#e8f6ea 114.5px,#cae8f2 115px,#5082bb 117px,#35439b 118.5px,#313796 120px,#37489e 121px,#4d7fb9 122.5px,#cbe9f2 125px,#e5f5ef 125.5px,#f7fcce 126px,#fee395 127px,#fdaf62 128px,#f47044 129px,#d42d27 130.5px,#b50f26 132.5px,#c72027 134px,#f0643f 135.5px,#fdac60 136.5px,#fffcbb 138px,#d6eef5 139px,#6aa1cb 141px,#497ab7 142.5px,#5a8ec1 144.5px,#abd9e9 147px,#d8eff6 150px,#e4f5f1 150.5px,#fdfec2 151.5px,#fee191 152.5px,#f7854e 154px,#da362a 155.5px,#c41d27 157px,#da3529 159px,#fdaa5f 162px,#fedf8f 164px,#fee497 166px,#fdc072 168.5px,#fdbe70 170px,#fed687 171px,#fcfec4 172.5px,#def2f8 173.5px,#abd9e9 175px,#a5d4e6 176px,#ddf2f7 177.5px,#fffab8 178.5px,#fed686 179.5px,#fdbe70 180.5px,#fecb7c 181.5px,#ffffc0 183px,#d3edf4 184px,#8abfdb 185.5px,#80b7d6 186.5px,#9bcde2 188px,#d5eef5 189.5px,#fffebd 191px,#fedf8f 192.5px,#fecd7e 194px,#fee090 195.5px,#fffab8 197px,#e7f6ea 199.5px,#ebf7e3 200px,#fff5b0 201px,#fba25b 202.5px,#f8874f 203.5px,#fdb063 205px,#fff1aa 206.5px,#e7f6ea 207.5px,#cdeaf3 208px,#7eb5d6 209.5px,#6298c6 211px,#81b7d7 213px,#d3edf4 215px,#e6f5ed 215.5px,#ffffbf 216.5px,#fede8e 218.5px,#fdbf71 221.5px,#f26841 224px,#d93529 225.5px,#bb1526 228px,#d83328 230px,#f46d43 231.5px,#fdac60 233.5px,#fdae61 235px,#f99053 237.5px,#fb9d59 238.5px,#fed484 240px,#f4fbd3 241.5px,#e2f4f5 242px,#6ea6ce 244px,#4c7db8 245px,#4067ad 246px,#4879b6 248px,#b2dceb 251.5px,#dff3f8 254px,#c2e4ef 258px,#e2f4f4 259.5px,#fffebe 260.5px,#fdb264 262.5px,#fa9b58 264px,#fdbe70 265.5px,#ffffbf 267.5px,#e4f5f0 268.5px,#d4edf5 269px,#b2dceb 270.5px,#7eb5d5 279.5px);-webkit-mask-image:linear-gradient(90deg,transparent,#000 50.0%);mask-image:linear-gradient(90deg,transparent,#000 50.0%)"></div>
<div class="a" style="left:903px;top:0;width:24px;height:100%;background:linear-gradient(#f6fbd0 0px,#ffffbe 1px,#fdbb6d 6px,#fed182 7.5px,#fefec2 9px,#daf0f6 10px,#95c7df 11.5px,#7fb6d6 13px,#a8d7e8 18.5px,#e2f4f5 21px,#fffcbb 22.5px,#fecb7c 24.5px,#fba05b 27px,#fdb568 35px,#fed586 37px,#fffbb9 39px,#dbf1f7 41px,#9ecee3 43.5px,#8ec2dc 45.5px,#b0dbea 51.5px,#e2f4f4 54px,#fffcba 55.5px,#fecf80 57px,#f46d43 59px,#df402e 60px,#b91326 61.5px,#a50026 63px,#a50026 65px,#d02927 66.5px,#fca95e 68.5px,#fffcba 70px,#ecf8e1 70.5px,#d0ebf3 71px,#abd9e9 71.5px,#4878b6 73px,#313695 74px,#313695 80px,#36459d 80.5px,#5d92c3 81.5px,#d0ebf3 83px,#fffab7 84px,#fca55d 85.5px,#e54e35 87px,#d42d27 88.5px,#dc3b2c 90px,#f7814c 92px,#fee192 94px,#fffebe 95px,#e4f5f0 96px,#d2ecf4 96.5px,#9fcfe4 98px,#85bbd8 99.5px,#8ec2dd 101px,#dcf1f7 103px,#ffffbf 104px,#fba15b 106px,#ea5739 107.5px,#de402e 109px,#f0643f 110.5px,#fb9f5a 111.5px,#fff6b1 113px,#d8eff6 114px,#69a0ca 115.5px,#3f61aa 116.5px,#313695 117.5px,#313695 120px,#4878b6 122px,#a7d6e7 124px,#e1f3f7 125px,#fffab8 126px,#fdb86a 127.5px,#ed5e3c 129px,#c82227 130.5px,#a80326 132.5px,#ba1426 134px,#ee613d 135.5px,#fedb8b 137px,#f2fad7 138px,#d8eff6 138.5px,#5e92c3 140.5px,#4473b3 141.5px,#436eb1 142.5px,#5d92c3 144.5px,#a5d4e7 147px,#dbf1f7 150.5px,#f8fccb 151.5px,#fedd8d 152.5px,#ef633e 154px,#c72027 155px,#a50026 156px,#aa0526 158px,#c41e27 159px,#f67948 161px,#fdae61 162px,#fedd8d 163.5px,#fee89d 165.5px,#fdb769 168px,#fdaf62 169.5px,#fed081 171px,#fffbb9 172.5px,#daf0f6 174px,#abd9e9 176px,#b6dfec 177px,#ceeaf3 177.5px,#e8f6e9 178px,#feffc1 178.5px,#fed485 179.5px,#fdb669 180.5px,#fdc375 181.5px,#fffab8 183px,#daf0f6 184px,#86bcd9 185.5px,#71a9cf 186.5px,#85bad8 188px,#def2f7 190px,#feffc1 191px,#fed283 192.5px,#fdb466 194px,#fdc274 195.5px,#fff5af 197.5px,#fafdc9 198.5px,#fbfdc7 200px,#fee99d 201px,#fdb668 202px,#f8874f 203px,#f7814c 203.5px,#fca95f 205px,#fcfec4 207px,#e9f6e8 207.5px,#ceeaf3 208px,#7cb4d5 209.5px,#6197c5 211px,#75aed1 212.5px,#def2f8 215px,#fafdc7 216px,#fedc8c 218px,#fdbf71 221px,#f46d43 223.5px,#c21c27 226px,#a80326 228px,#c11b27 230px,#f46e44 232px,#fdb062 234px,#fca55d 238px,#fdc273 239px,#fffbb9 240.5px,#d9eff6 241.5px,#5689be 243.5px,#333d99 245px,#313695 245.5px,#333d98 247.5px,#4065ac 248.5px,#6197c5 249.5px,#acd9e9 251px,#e4f4f1 252.5px,#f1f9d9 254px,#e1f4f5 256px,#cbe9f2 257.5px,#daf0f6 259px,#e8f6ea 259.5px,#fff7b2 260.5px,#fdb466 262px,#f7834d 263.5px,#f88d52 264.5px,#fdb164 265.5px,#fffcbb 267.5px,#e5f5f0 268.5px,#aedaea 270.5px,#7eb5d5 279.5px);-webkit-mask-image:linear-gradient(90deg,transparent,#000 50.0%);mask-image:linear-gradient(90deg,transparent,#000 50.0%)"></div>
<div class="a" style="left:915px;top:0;width:24px;height:100%;background:linear-gradient(#f6fbd0 0px,#ffffbe 1px,#fdbb6d 6px,#fed182 7.5px,#feffc1 9px,#dcf1f7 10px,#97c9e0 11.5px,#82b8d7 13px,#acd9e9 18.5px,#d9f0f6 20.5px,#fbfec6 22px,#fdc677 24.5px,#fca55d 26.5px,#fdb86a 35px,#fed989 37px,#feffc1 39px,#e0f3f8 40.5px,#a9d8e8 42.5px,#93c6df 44.5px,#c0e3ef 51.5px,#dbf1f7 53px,#f9fdca 54.5px,#fee293 56px,#ea5839 59px,#c92227 60.5px,#a50026 63px,#bb1626 65px,#e64f35 66.5px,#fdb265 68px,#fffdbd 69.5px,#d2ecf4 70.5px,#4f81ba 72.5px,#343f99 73.5px,#313695 74px,#333c98 80.5px,#4f81ba 81.5px,#d3edf4 83.5px,#ffffbf 84.5px,#fdaf61 86.5px,#f67c4a 88px,#f67848 89.5px,#fcaa5f 92px,#ffffbf 95.5px,#d9f0f6 97.5px,#afdbea 100px,#b2dceb 101.5px,#def2f8 103px,#fbfdc6 104px,#fdb769 106px,#f67a49 107.5px,#f46c43 108.5px,#f57748 109.5px,#fdae61 111px,#fffbba 113px,#e2f4f4 114px,#85bbd8 116px,#6095c5 118px,#75aed1 120.5px,#e0f3f8 124px,#fffbba 125.5px,#fdb063 128px,#ea5839 130.5px,#d93429 133px,#e24631 134.5px,#fdac60 136.5px,#fff4ae 138px,#e8f6e9 139px,#d3edf4 139.5px,#9acbe2 141px,#8ec2dc 142.5px,#cae8f2 143.5px,#edf8df 144px,#fff7b2 144.5px,#fed283 145.5px,#fee79a 147px,#fbfdc7 148px,#dff2f8 149px,#cdeaf3 150.5px,#e6f5ec 151.5px,#f5fbd1 152px,#fee395 153px,#f57547 154.5px,#da372a 155.5px,#c11a27 157px,#dd3d2d 159px,#fdae61 161.5px,#fee699 163.5px,#fee99d 165.5px,#fdb467 167.5px,#fca55d 169px,#fdc577 170.5px,#fcfec5 172.5px,#dff3f8 173.5px,#a5d5e7 175px,#8dc1dc 176.5px,#a7d6e7 177.5px,#e8f6e8 178.5px,#fffebd 179px,#fed485 180px,#fec879 180.5px,#fed283 181.5px,#fcfec5 183px,#e8f6e9 183.5px,#cce9f2 184px,#7ab2d4 185.5px,#69a0ca 186.5px,#82b9d7 188px,#cce9f2 189.5px,#e6f5ee 190px,#fff5af 191px,#fdb96b 192.5px,#f99154 194px,#fca95f 195.5px,#fee99d 197.5px,#fffab8 199.5px,#fee090 201px,#fba25b 202.5px,#f88b51 203.5px,#fca95f 205px,#fffbb9 207px,#def2f8 208px,#93c6de 209.5px,#76afd2 211px,#8dc1dc 212.5px,#ddf1f7 214.5px,#f9fdca 215.5px,#fee495 217px,#fed283 218px,#fdb669 221px,#f26941 223.5px,#d42e27 225.5px,#b91326 228px,#d83328 230px,#f57245 231.5px,#fdab60 233px,#fdc173 238px,#fedb8c 239px,#f8fccc 240.5px,#e7f6eb 241px,#cfebf3 241.5px,#4a7bb7 244px,#36459c 245.5px,#333b98 246.5px,#384ca0 247.5px,#4676b5 248.5px,#acd9e9 250.5px,#dff3f8 251.5px,#f6fccf 252.5px,#fffdbc 253.5px,#ffffc0 254.5px,#e0f3f8 256.5px,#cae8f2 258px,#ddf2f7 259px,#fcfec4 260px,#fed888 261px,#fa9b58 262px,#f57346 263px,#f46f44 263.5px,#f7824d 264.5px,#fdaf62 265.5px,#fee191 266.5px,#fbfec5 267.5px,#daf0f6 268.5px,#b4ddec 269.5px,#a3d3e6 270.5px,#7eb5d5 279.5px);-webkit-mask-image:linear-gradient(90deg,transparent,#000 50.0%);mask-image:linear-gradient(90deg,transparent,#000 50.0%)"></div>
<div class="a" style="left:927px;top:0;width:24px;height:100%;background:linear-gradient(#f6fbd0 0px,#ffffbe 1px,#fdbb6d 6px,#fdc375 7px,#fee293 8px,#ffffbf 9px,#def2f7 10px,#9bcce2 11.5px,#86bbd9 13px,#afdbea 18.5px,#e0f3f8 20.5px,#fffebd 22px,#fecd7e 24px,#fdab5f 26px,#fdba6d 35px,#fed182 36.5px,#fffcba 38.5px,#e2f4f4 40px,#aad9e9 42px,#99cbe1 43.5px,#daf0f6 52px,#e2f4f4 52.5px,#fcfec5 54px,#fee090 55.5px,#eb5a3a 58.5px,#c11b27 60.5px,#ad0826 62.5px,#bc1626 64px,#e14430 65.5px,#fdb96b 67.5px,#ffffbf 69px,#d3edf4 70px,#5689bf 72px,#313695 73.5px,#313695 80.5px,#4472b3 81.5px,#98cae1 83px,#d6eef5 84px,#fcfec5 85px,#fff3ad 85.5px,#fdc375 87px,#fba05b 88.5px,#fca95e 91px,#fffbb8 96px,#def2f8 99px,#cce9f2 101px,#d6eef5 102.5px,#e3f4f2 103px,#fcfec4 104px,#fee294 105px,#fa9c58 106.5px,#f67a49 107.5px,#f57647 108.5px,#f8874f 109.5px,#fdbc6e 111px,#ffffbe 113px,#e4f4f1 114px,#9dcee3 116px,#86bbd9 117.5px,#98cae1 120px,#dff2f8 123px,#fff9b6 125px,#fdab60 128px,#ef623e 130.5px,#e34832 133.5px,#ef623e 135px,#fa9b58 136.5px,#fed888 138px,#fffdbc 139.5px,#e8f6e9 141px,#dff2f8 142.5px,#e4f5f0 143px,#fff6b1 144px,#fdc173 145px,#fdb164 146px,#fecb7c 147px,#fdfec2 148.5px,#e1f3f7 149.5px,#cae8f2 150.5px,#d5eef5 151.5px,#e3f4f2 152px,#fffcbb 153px,#fed081 154px,#f88d52 155px,#ea5739 156px,#e04430 157px,#f0653f 159px,#fed989 162px,#fff4af 164px,#feeea5 165.5px,#fdba6c 167.5px,#fca75e 169px,#fdc778 170.5px,#fff8b5 172px,#e6f5ee 173px,#ceeaf3 173.5px,#89beda 175px,#6aa1cb 176.5px,#78b0d3 177.5px,#d9eff6 179px,#fffebe 180px,#fff2ac 181px,#fffebd 182px,#e5f5ef 183px,#cce9f2 183.5px,#7ab2d4 185px,#5e92c3 186.5px,#7bb2d4 188px,#e4f5f0 190px,#fff5b0 191px,#fdbb6d 192.5px,#fa9a58 194px,#fdb668 195.5px,#fff1a9 197.5px,#fffebe 198.5px,#fffebe 199.5px,#fede8e 201px,#fdaf62 202px,#f7804c 203.5px,#fba25c 205px,#fffbb9 207px,#ddf1f7 208px,#92c5de 209.5px,#7ab2d4 210.5px,#8abfdb 212px,#ceeaf3 213.5px,#e6f5ed 214px,#fff6b1 215px,#fdc072 216.5px,#fdaa5f 217.5px,#fa9957 220px,#d83228 225.5px,#d22b27 228.5px,#df412f 229.5px,#fdb164 232.5px,#fece7f 237.5px,#ffffbf 240px,#e3f4f2 241px,#cdeaf3 241.5px,#5a8ec1 244px,#3c58a6 246px,#3c59a6 247px,#4676b4 248px,#6ea6cd 249px,#c8e7f1 250.5px,#e3f4f3 251px,#fffebe 252px,#feeda4 253px,#feeba1 254px,#fbfdc7 255.5px,#e4f5f1 256.5px,#cae8f2 258px,#dcf1f7 259px,#fafdc8 260px,#fff2ab 260.5px,#fca55d 262px,#f67b4a 263px,#f57647 263.5px,#f88850 264.5px,#fdb668 265.5px,#fff9b5 267px,#e2f4f3 268px,#9ccde2 270px,#7eb5d5 279.5px);-webkit-mask-image:linear-gradient(90deg,transparent,#000 50.0%);mask-image:linear-gradient(90deg,transparent,#000 50.0%)"></div>
<div class="a" style="left:939px;top:0;width:24px;height:100%;background:linear-gradient(#f6fbd0 0px,#ffffbe 1px,#fdbb6d 6px,#fdc375 7px,#fee192 8px,#fffebe 9px,#e0f3f7 10px,#9fcfe4 11.5px,#8abfdb 13px,#addaea 18px,#d7eef5 20px,#e4f5f0 20.5px,#fff9b5 22px,#fec879 24px,#fdae61 26px,#fdbd6f 35px,#fed686 36.5px,#fff8b5 38px,#e1f3f6 39.5px,#a0d0e4 41.5px,#90c3dd 43px,#d2ecf4 48.5px,#dff2f8 51px,#fffdbc 53.5px,#fed989 55px,#e75136 58px,#c72127 59.5px,#ae0926 61.5px,#c31c27 63.5px,#e54e35 65px,#fba25c 66.5px,#feffc0 68.5px,#d5edf5 69.5px,#96c8e0 70.5px,#4573b3 72px,#323896 73px,#313695 73.5px,#34409a 80.5px,#4f81ba 81.5px,#c9e8f1 83.5px,#e4f5f0 84px,#fff9b6 85px,#fdbd6f 87px,#fca85e 88.5px,#fdbd6f 89.5px,#fff4af 91px,#f2fad6 92.5px,#e2f4f5 102px,#ebf7e3 103px,#fffab7 104px,#fb9e5a 106px,#f57346 107px,#f36b42 108px,#f67e4b 109px,#fca65d 110px,#fee79b 111.5px,#f7fcce 112.5px,#d2ecf4 113.5px,#94c7df 115px,#79b1d3 116.5px,#93c6df 119.5px,#dff3f8 122.5px,#fff8b5 124.5px,#fcaa5f 127.5px,#ef623e 130px,#e24731 133px,#f16640 134.5px,#fdae61 136px,#fffbb9 138px,#ddf1f7 139.5px,#bce2ee 141px,#c6e6f1 142px,#e3f4f3 142.5px,#fcfec4 143px,#fdb96b 144px,#f57446 145px,#f57245 145.5px,#fa9b58 146.5px,#fff6b1 148px,#d8eff6 149px,#a4d4e6 150px,#99cae1 151px,#dbf0f7 152.5px,#fff2ab 153.5px,#fdab60 154.5px,#ec5c3b 155.5px,#dd3d2d 156.5px,#ed5f3c 158.5px,#fede8e 161.5px,#feffc0 164px,#feeda3 166px,#fdba6c 168px,#fdae61 169px,#fdba6c 170px,#fff4ae 171.5px,#dff2f8 172.5px,#5588be 174.5px,#3d5ba7 175.5px,#3a53a3 176.5px,#5b90c2 177.5px,#bde2ee 178.5px,#eaf7e6 179px,#fff9b6 179.5px,#fee598 180px,#fed788 181px,#fffebd 182.5px,#ebf7e3 183px,#cde9f3 183.5px,#5e93c3 185px,#4677b5 185.5px,#3c59a6 186.5px,#3d5da8 187px,#5385bc 188px,#c0e3ef 189.5px,#e7f6eb 190px,#fffcbb 190.5px,#fba05a 192px,#f57145 193px,#f36c42 193.5px,#f77f4b 194.5px,#fdb063 195.5px,#fee192 196.5px,#fffdbc 197.5px,#f1fad8 198.5px,#f4fbd3 199.5px,#fff0a8 200.5px,#fb9e5a 202px,#f47044 203px,#f36c42 203.5px,#f7824c 204.5px,#fdb668 205.5px,#ffffbf 207px,#ebf7e4 207.5px,#d1ecf4 208px,#84b9d8 209.5px,#70a8ce 210.5px,#7db4d5 211.5px,#d6eef5 213px,#f1fad8 213.5px,#fff4af 214px,#fdb86a 215px,#f67949 216px,#f26941 216.5px,#c61f27 227px,#d62f27 229px,#fdb164 232px,#fec87a 233px,#fdc475 238px,#fedb8b 239px,#fbfdc6 240.5px,#d8eff6 241.5px,#6ea6cd 243.5px,#4c7eb9 244.5px,#4065ac 245.5px,#3f63ab 246.5px,#4c7eb8 247.5px,#75aed1 248.5px,#d2ecf4 250px,#fbfdc6 251px,#fff4ae 251.5px,#fedd8d 252.5px,#fed282 253.5px,#feeda4 255px,#fffbb9 255.5px,#e6f5ed 256.5px,#c7e7f1 258px,#d7eff6 259px,#e6f5ed 259.5px,#fffab7 260.5px,#fdba6d 262px,#f88950 263.5px,#fca85e 265px,#fdfec2 267px,#d3edf4 268px,#a4d3e6 269px,#8ec2dc 270px,#7eb5d5 279.5px);-webkit-mask-image:linear-gradient(90deg,transparent,#000 50.0%);mask-image:linear-gradient(90deg,transparent,#000 50.0%)"></div>
<div class="a" style="left:951px;top:0;width:18px;height:100%;background:linear-gradient(#f6fbd0 0px,#ffffbe 1px,#fdbb6d 6px,#fed283 7.5px,#fdfec3 9px,#d7eff6 10px,#91c4de 11.5px,#7bb3d4 13px,#b6deec 16.5px,#bfe3ef 18px,#e3f4f2 19.5px,#fff7b2 21px,#fdbd6f 23px,#fb9e5a 25px,#fdc577 35px,#fed686 36px,#fffab7 37.5px,#d7eef5 39px,#87bcd9 41px,#73acd0 42.5px,#87bcd9 44.5px,#e0f3f7 49px,#e7f6eb 51px,#fbfec6 52.5px,#fecd7e 54.5px,#f7804c 56px,#da3529 57.5px,#b10b26 59px,#a50026 60px,#ac0726 62px,#dd3c2c 64px,#fca85e 66px,#feffc1 68px,#d8eff6 69px,#9ccde2 70px,#4c7db8 71.5px,#313695 73px,#34409a 79.5px,#659bc7 80.5px,#bfe3ef 81.5px,#e8f6ea 82px,#fffcbb 82.5px,#fba05a 84px,#f0653f 85px,#e64f35 86px,#f16640 87px,#f8884f 87.5px,#fdb668 88px,#fbfec6 89px,#d7eff5 89.5px,#75aed1 90.5px,#588bbf 91px,#4574b4 92px,#5184bc 93.5px,#70a9cf 95px,#dcf1f7 98px,#fffebd 99.5px,#fdad60 102.5px,#f26941 104px,#d12b27 105.5px,#b81326 107px,#c82227 108px,#eb5b3b 109px,#fdb96c 110px,#fefec2 111px,#e1f3f7 111.5px,#85bad8 112.5px,#4574b4 113.5px,#37479e 114.5px,#35429b 115px,#394fa1 116px,#5385bc 117.5px,#afdbea 119.5px,#dff2f8 120.5px,#fffcba 122px,#fece7f 124px,#e64f35 127.5px,#c01a27 129.5px,#a60126 132px,#b61026 133px,#e24832 134px,#fdaf62 135px,#fffebd 136px,#e2f4f5 136.5px,#5c90c2 138px,#426db0 138.5px,#34419a 139.5px,#34409a 140px,#3d5ba7 140.5px,#5f94c4 141px,#a9d7e8 141.5px,#f3fad4 142px,#fecf80 142.5px,#f57647 143px,#d73027 143.5px,#b91426 144px,#b71226 144.5px,#e14430 145.5px,#f67b49 146px,#feefa6 147px,#eaf7e6 147.5px,#b2ddeb 148px,#5284bc 149px,#3a52a3 150px,#3b56a5 150.5px,#426db0 151px,#5e92c3 151.5px,#c5e6f0 152.5px,#f5fbd1 153px,#fee394 153.5px,#fca75e 154px,#ef623e 154.5px,#d42d27 155px,#a50026 156px,#a60126 157px,#e0422f 158.5px,#fdc476 160px,#fffdbc 161px,#d6eef5 162px,#a3d3e6 163.5px,#a3d3e6 164px,#d0ebf3 165px,#eff9dd 165.5px,#fff3ac 166px,#fa9857 167px,#dd3c2c 168px,#c92327 169px,#d32c27 169.5px,#f46e43 170.5px,#fca65d 171px,#fffebe 172px,#dbf0f7 172.5px,#6ca3cc 173.5px,#4574b3 174px,#313695 175px,#313695 176px,#3b55a4 176.5px,#578bbf 177px,#d5eef5 178px,#fffdbc 178.5px,#fca65d 179.5px,#f7804c 180px,#f57346 180.5px,#f67e4b 181px,#fec879 182px,#feefa7 182.5px,#ecf7e3 183px,#b5deec 183.5px,#4575b4 184.5px,#34409a 185px,#313695 187px,#3b54a4 187.5px,#5a8ec1 188px,#dbf1f7 189px,#fff7b4 189.5px,#fdc576 190px,#e04330 191px,#c31d27 191.5px,#aa0526 192.5px,#c92327 193.5px,#e14531 194px,#fdae61 195px,#fffab7 196px,#eaf7e6 196.5px,#cbe9f2 197px,#9bcce2 198px,#95c7df 198.5px,#9fcfe4 199px,#e4f5f0 200px,#fff9b6 200.5px,#fecf80 201px,#e64f35 202px,#ca2427 202.5px,#af0926 203.5px,#d22b27 204.5px,#ea5739 205px,#f99355 205.5px,#fffbb9 206.5px,#dcf1f7 207px,#669cc8 208px,#4169ae 208.5px,#343e99 209px,#313695 210.5px,#36459c 211px,#4777b5 211.5px,#bbe1ee 212.5px,#f3fad5 213px,#fee293 213.5px,#fba25b 214px,#ec5d3c 214.5px,#d22b27 215px,#b61026 215.5px,#aa0526 216.5px,#a50026 228px,#d12a27 229px,#ea5739 229.5px,#fdc678 230.5px,#feeda4 231px,#f5fbd1 231.5px,#ddf1f7 232px,#bee2ee 232.5px,#a4d3e6 233.5px,#addaea 234px,#e7f6ec 235px,#fffdbb 235.5px,#fdb669 236.5px,#f57145 237.5px,#f26941 238px,#f46e44 238.5px,#fb9f5a 239.5px,#fffdbd 241px,#e5f5ef 241.5px,#b9e0ed 242px,#426cb0 243.5px,#313695 244.5px,#333d99 246.5px,#3f63ab 247px,#5c91c2 247.5px,#c1e4ef 248.5px,#eff9dd 249px,#feefa7 249.5px,#fa9857 250.5px,#e44c34 251.5px,#db382b 252.5px,#e44b34 253px,#fdb265 254px,#fee89d 254.5px,#eef8df 255px,#b4deec 255.5px,#4e7fb9 256.5px,#3e5ea9 257px,#3a54a4 257.5px,#4777b5 258.5px,#659bc8 259px,#c3e5f0 260px,#eff9dd 260.5px,#fff0a8 261px,#fba05b 262px,#ef623e 263px,#ec5c3b 263.5px,#f26841 264px,#fdb76a 265px,#fee597 265.5px,#f7fccd 266px,#cce9f2 266.5px,#6095c5 267.5px,#384ca0 268.5px,#343f9a 269px,#36479d 271px,#497ab6 275.5px,#5385bc 279.5px);-webkit-mask-image:linear-gradient(90deg,transparent,#000 66.7%);mask-image:linear-gradient(90deg,transparent,#000 66.7%)"></div>
<div class="a" style="left:963px;top:0;width:12px;height:100%;background:linear-gradient(#f6fbd0 0px,#ffffbe 1px,#fdbb6d 6px,#fdc577 7px,#fff8b5 8.5px,#dff2f8 9.5px,#6ba2cb 11.5px,#5487be 13px,#679ec9 14px,#a9d8e8 15.5px,#dcf1f7 17px,#edf8e0 18px,#fff7b2 19px,#fb9e5a 21px,#f57647 22px,#f36b42 23px,#fdb163 28px,#fed081 34.5px,#fffab8 37px,#dff3f8 38.5px,#93c6df 40.5px,#73acd1 42.5px,#7db4d5 44px,#afdbea 46.5px,#dff2f8 49.5px,#e5f5f0 51px,#fefec1 52.5px,#fecf80 54px,#e54e35 56px,#a90426 57.5px,#a50026 58px,#a50026 61.5px,#b81226 62px,#ef623e 63px,#fdc375 64px,#fffdbc 65px,#dbf1f7 66px,#7cb3d4 69.5px,#4a7bb7 71px,#323896 72.5px,#313695 73px,#333b98 79px,#4778b5 79.5px,#bde2ee 80.5px,#f2fad7 81px,#fee699 81.5px,#fdaf62 82px,#f26a42 82.5px,#d73127 83px,#b20c26 83.5px,#a50026 84px,#a80326 86px,#d22b27 86.5px,#f46d43 87px,#fdbb6d 87.5px,#fff4af 88px,#dcf1f7 88.5px,#5487bd 89.5px,#37489e 90px,#313695 90.5px,#323896 93px,#4169ae 93.5px,#669dc8 94px,#d0ebf4 95px,#f5fbd1 95.5px,#feeda3 96px,#fdb063 97px,#f88a50 98px,#f88a50 99px,#fec97a 102px,#fdc172 103.5px,#f67d4b 104.5px,#ca2427 105.5px,#ac0726 106px,#a50026 106.5px,#a50026 107.5px,#d52e27 108.5px,#fb9e5a 109.5px,#fed989 110px,#feffc0 110.5px,#d5eef5 111px,#6095c5 112px,#3d5da8 112.5px,#313695 113px,#313695 116px,#3b57a5 116.5px,#598dc1 117px,#cae8f2 118px,#f6fccf 118.5px,#fee699 119px,#f67e4b 120px,#d73027 121px,#c31d27 122px,#cd2727 122.5px,#f46e43 123.5px,#fed586 124.5px,#fff4ae 125px,#e5f5ef 126px,#def2f7 126.5px,#e2f4f5 127px,#ffffbf 128px,#fdbd6f 129px,#e34a33 130px,#a50026 131px,#a80326 133px,#e85337 134px,#fed586 135px,#feffc0 135.5px,#d1ecf4 136px,#578abf 137px,#394fa1 137.5px,#313695 138px,#313695 140px,#36479d 140.5px,#6da4cd 141px,#d1ecf4 141.5px,#feeaa0 142px,#f98f53 142.5px,#d93429 143px,#ac0626 143.5px,#a50026 144px,#a50026 144.5px,#e14430 145.5px,#f8864f 146px,#fecd7e 146.5px,#fffdbc 147px,#d2ecf4 147.5px,#5a8ec1 148.5px,#333d99 149.5px,#313695 150px,#333d98 150.5px,#588cc0 151.5px,#d0ebf3 152.5px,#fffebd 153px,#fecb7c 153.5px,#f67d4a 154px,#d93429 154.5px,#a90426 155px,#a50026 155.5px,#a50026 157.5px,#b50f26 158px,#dd3d2d 158.5px,#fdc374 159.5px,#fff3ad 160px,#e5f5ee 160.5px,#acd9e9 161px,#497ab6 162px,#313695 163px,#313695 164px,#384da0 164.5px,#5588be 165px,#97c9e0 165.5px,#e5f5ef 166px,#fee89c 166.5px,#fb9d59 167px,#e44b33 167.5px,#bc1626 168px,#a50026 168.5px,#a50026 169px,#a80326 169.5px,#e24631 170.5px,#fdc778 171.5px,#fff6b2 172px,#e1f3f6 172.5px,#6aa1cb 173.5px,#4370b1 174px,#36479d 174.5px,#313695 175.5px,#35429b 176px,#4575b4 176.5px,#7cb4d5 177px,#c8e7f1 177.5px,#fffdbc 178px,#fdc577 178.5px,#f67948 179px,#dd3d2d 179.5px,#c51f27 180px,#c01a27 180.5px,#d02927 181px,#e75337 181.5px,#f99455 182px,#feda8a 182.5px,#f6fbd0 183px,#b7dfec 183.5px,#6ca4cc 184px,#3d5da8 184.5px,#313695 185px,#313695 187px,#3c59a6 187.5px,#679ec9 188px,#b0dceb 188.5px,#f2fad7 189px,#fedd8d 189.5px,#f99154 190px,#e14531 190.5px,#b91326 191px,#a50026 191.5px,#ac0726 193px,#d42d27 193.5px,#f36c43 194px,#fdb96b 194.5px,#fff2ab 195px,#e2f4f4 195.5px,#659bc8 196.5px,#4169ae 197px,#36459c 197.5px,#313695 198px,#34409a 198.5px,#4065ac 199px,#689fc9 199.5px,#addaea 200px,#f0f9da 200.5px,#fedc8d 201px,#f88a51 201.5px,#dc3b2c 202px,#b00b26 202.5px,#a50026 204px,#ba1426 204.5px,#e04330 205px,#fed485 206px,#f9fdc9 206.5px,#bfe3ef 207px,#75aed2 207.5px,#4169ae 208px,#313695 208.5px,#313695 211px,#4064ac 211.5px,#75aed1 212px,#c4e5f0 212.5px,#ffffbf 213px,#fec879 213.5px,#f57747 214px,#d73027 214.5px,#ad0726 215px,#a50026 215.5px,#aa0526 217px,#c72127 217.5px,#f67b49 218.5px,#fed686 219.5px,#fffdbb 220.5px,#f8fccc 221.5px,#fee598 223px,#fec779 223.5px,#f36c42 224.5px,#dd3d2d 225px,#a50026 226px,#a50026 228.5px,#c72127 229px,#ea5839 229.5px,#fedd8d 230.5px,#fcfec5 231px,#d6eef5 231.5px,#80b6d6 232.5px,#649ac7 233.5px,#6fa7ce 234px,#8fc2dd 234.5px,#c0e3ef 235px,#f1f9d9 235.5px,#fee699 236px,#fca95f 236.5px,#ed5f3d 237px,#cf2827 237.5px,#af0a26 238px,#a50026 238.5px,#a60126 239px,#db392b 240px,#fdbd6f 241px,#fff3ac 241.5px,#e1f3f6 242px,#99cbe1 242.5px,#598dc0 243px,#384b9f 243.5px,#313695 244px,#313695 246.5px,#3a52a3 247px,#5c90c2 247.5px,#dcf1f7 248.5px,#fff9b5 249px,#f88b51 250px,#e65036 250.5px,#cd2727 251px,#ad0826 252px,#b71126 252.5px,#d62f27 253px,#f46d43 253.5px,#fdbe70 254px,#fffab7 254.5px,#cbe9f2 255px,#7bb3d4 255.5px,#426db0 256px,#313695 256.5px,#35419a 258.5px,#4574b3 259px,#b1dceb 260px,#e9f7e7 260.5px,#fff1aa 261px,#f99455 262px,#f26a41 262.5px,#e54e35 263.5px,#ee603d 264px,#fdc274 265px,#fff2ac 265.5px,#e3f4f3 266px,#9dcee3 266.5px,#5d92c3 267px,#3b55a4 267.5px,#313695 268px,#313695 270px,#5588be 271px,#acd9e9 272px,#d8eff6 272.5px,#fff9b5 273.5px,#fee496 274.5px,#fee496 275px,#ffffbf 276px,#e6f5ec 276.5px,#bae0ed 277px,#588cc0 278px,#333e99 279px,#313695 279.5px);-webkit-mask-image:linear-gradient(90deg,transparent,#000 50.0%);mask-image:linear-gradient(90deg,transparent,#000 50.0%)"></div>
<div class="a" style="left:969px;top:0;width:12px;height:100%;background:linear-gradient(#f6fbd0 0px,#ffffbe 1px,#fdbb6d 6px,#fdc577 7px,#fff6b2 8.5px,#e2f4f4 9.5px,#6da5cd 11.5px,#5082bb 13px,#598dc0 14px,#74add1 15px,#dff2f8 17px,#fffbb9 18px,#fb9f5a 20px,#f16640 21.5px,#ee5f3d 22.5px,#f46f44 23.5px,#fec879 26px,#fee395 27.5px,#fed888 33.5px,#fffab8 36.5px,#d7eff6 38.5px,#8cc0db 41px,#79b1d3 43px,#86bcd9 44.5px,#cfebf3 48.5px,#e0f3f7 51px,#fffab7 53px,#fdbf71 54.5px,#f67b49 55.5px,#da372a 56.5px,#ac0726 57.5px,#a50026 58px,#a50026 62px,#c21c27 62.5px,#f7804c 63.5px,#fee699 64.5px,#fcfec4 65px,#e2f4f4 65.5px,#8cc0db 67px,#6da4cc 69.5px,#497ab7 71px,#313695 73px,#313695 79px,#436fb1 79.5px,#b9e0ed 80.5px,#f1fad9 81px,#fee598 81.5px,#fdab5f 82px,#ef623e 82.5px,#d02927 83px,#a90426 83.5px,#a50026 84px,#a50026 86px,#d12b27 86.5px,#f46d43 87px,#fdbd6f 87.5px,#fff6b1 88px,#d9f0f6 88.5px,#5183bb 89.5px,#35439b 90px,#313695 90.5px,#313695 93px,#426cb0 93.5px,#6fa8ce 94px,#aedaea 94.5px,#e7f6eb 95px,#fff3ad 95.5px,#fa9656 96.5px,#f16841 97px,#de3f2e 98px,#ee613d 99.5px,#fdb86b 101px,#fee191 102px,#feeca3 103px,#fed384 104px,#fca95f 104.5px,#f26941 105px,#d52e27 105.5px,#ad0826 106px,#a50026 107.5px,#b00a26 108px,#ec5c3b 109px,#feda8a 110px,#fcfec4 110.5px,#d0ebf3 111px,#588bbf 112px,#3950a2 112.5px,#313695 113px,#313695 116px,#3950a2 116.5px,#598cc0 117px,#d3edf4 118px,#ffffc0 118.5px,#fb9c59 119.5px,#ed5f3d 120px,#d73127 120.5px,#bd1726 121px,#ae0826 122px,#dc3b2c 123px,#fdba6c 124px,#feeda4 124.5px,#eef8de 125px,#c6e6f1 125.5px,#8ec2dc 126.5px,#a2d2e5 127.5px,#c5e6f0 128px,#edf8e1 128.5px,#fff0a8 129px,#fdbf71 129.5px,#f67949 130px,#dc3a2c 130.5px,#b61026 131px,#a50026 131.5px,#a50026 133px,#e54d34 134px,#f98e52 134.5px,#fffebd 135.5px,#d3edf4 136px,#5588be 137px,#384a9f 137.5px,#313695 138px,#333c98 140.5px,#5f94c4 141px,#bbe1ee 141.5px,#fffbb8 142px,#fdb366 142.5px,#e95638 143px,#c11b27 143.5px,#a70226 144px,#ba1426 145px,#d93529 145.5px,#f46d43 146px,#fdb467 146.5px,#feeba0 147px,#edf8e1 147.5px,#b6dfec 148px,#5588be 149px,#3c58a6 150px,#4878b6 151px,#6aa1cb 151.5px,#ddf2f7 152.5px,#fff7b3 153px,#fdc374 153.5px,#f57547 154px,#d52e27 154.5px,#a50026 155px,#b00a26 158px,#d93529 158.5px,#f57346 159px,#feeda3 160px,#ecf8e1 160.5px,#b9e0ed 161px,#5487bd 162px,#333d98 163px,#313695 164px,#37499f 164.5px,#4d7eb9 165px,#d5eef5 166px,#fff5af 166.5px,#fdb668 167px,#ef623e 167.5px,#cb2427 168px,#a90426 168.5px,#a50026 169px,#a50026 169.5px,#d93529 170.5px,#fdaf62 171.5px,#fee598 172px,#f4fbd3 172.5px,#c5e6f0 173px,#5e93c3 174px,#3950a2 175px,#36459d 175.5px,#3a52a3 176px,#4879b6 176.5px,#77b0d3 177px,#bce1ee 177.5px,#f6fccf 178px,#feda8b 178.5px,#fa9656 179px,#ea5839 179.5px,#d83228 180px,#cf2927 180.5px,#d93429 181px,#ea583a 181.5px,#f99354 182px,#fed384 182.5px,#fcfec4 183px,#c6e6f1 183.5px,#4471b2 184.5px,#313695 185px,#313695 187px,#37489e 187.5px,#5689bf 188px,#98cae1 188.5px,#e2f4f4 189px,#feeea6 189.5px,#fdb164 190px,#ce2727 191px,#aa0526 191.5px,#a50026 192px,#ac0726 193px,#d02927 193.5px,#ef633f 194px,#fdb063 194.5px,#feeba1 195px,#e9f7e7 195.5px,#acdae9 196px,#4777b5 197px,#3a53a3 197.5px,#36459d 198px,#3950a2 198.5px,#4575b4 199px,#72abd0 199.5px,#b6deec 200px,#f4fbd4 200.5px,#feda8b 201px,#f88c51 201.5px,#df402e 202px,#b71126 202.5px,#a50026 203px,#a50026 204px,#c01927 204.5px,#e24731 205px,#f88a50 205.5px,#fed181 206px,#feffc1 206.5px,#cae8f2 207px,#4879b6 208px,#323a97 208.5px,#313695 211px,#394fa1 211.5px,#6196c5 212px,#a9d8e8 212.5px,#eef8de 213px,#fee293 213.5px,#fa9957 214px,#e54d34 214.5px,#c01a27 215px,#a50026 215.5px,#b00a26 217px,#ea5839 218px,#feca7b 219px,#feefa7 219.5px,#f6fccf 220px,#e3f4f2 220.5px,#cce9f2 221.5px,#d4edf5 222px,#e5f5ee 222.5px,#feefa6 223.5px,#fecc7d 224px,#ec5d3c 225px,#ad0726 226px,#a50026 226.5px,#a50026 228.5px,#ba1426 229px,#f7814c 230px,#fdc375 230.5px,#fff0a8 231px,#eef8de 231.5px,#c8e7f1 232px,#8abfdb 233px,#80b7d6 233.5px,#87bcd9 234px,#c9e8f1 235px,#f1fad9 235.5px,#feea9f 236px,#fdb669 236.5px,#db382b 237.5px,#bb1526 238px,#a60126 239px,#d32c27 240px,#ef623e 240.5px,#fca95f 241px,#fee79a 241.5px,#edf8e0 242px,#addaea 242.5px,#679ec9 243px,#3c5aa7 243.5px,#313695 244px,#323b97 247px,#4676b5 247.5px,#bbe1ee 248.5px,#f1f9d9 249px,#fee89c 249.5px,#fdb567 250px,#f57747 250.5px,#cc2627 251.5px,#bc1626 252.5px,#cf2927 253px,#ea5839 253.5px,#fba15b 254px,#fee699 254.5px,#eaf7e6 255px,#a3d2e5 255.5px,#5f94c4 256px,#3c57a5 256.5px,#313695 257px,#313695 258px,#37489e 258.5px,#4473b3 259px,#a5d4e6 260px,#dff3f8 260.5px,#fffcba 261px,#fdad60 262px,#ef633f 263px,#eb593a 263.5px,#ef623e 264px,#fdb366 265px,#fee496 265.5px,#f5fbd1 266px,#c3e5f0 266.5px,#4f81ba 267.5px,#394fa1 268px,#313695 268.5px,#313695 269.5px,#36459c 270px,#436eb1 270.5px,#689fca 271px,#d6eef5 272px,#fbfdc7 272.5px,#fdc173 273.5px,#fba05a 274px,#f8874f 275px,#fdbf71 276px,#fee89c 276.5px,#f4fbd3 277px,#c4e5f0 277.5px,#5487bd 278.5px,#333d99 279.5px);-webkit-mask-image:linear-gradient(90deg,transparent,#000 50.0%);mask-image:linear-gradient(90deg,transparent,#000 50.0%)"></div>
<div class="a" style="left:975px;top:0;width:12px;height:100%;background:linear-gradient(#f6fbd0 0px,#ffffbe 1px,#fdbb6d 6px,#fed282 7.5px,#fcfec4 9px,#d3edf4 10px,#6da5cd 12px,#5a8ec1 13.5px,#74acd1 15px,#d6eef5 17px,#fdfec2 18px,#fdac60 20px,#f47044 21.5px,#f16740 22.5px,#f57547 23.5px,#fed788 26.5px,#fee698 28px,#fed98a 33.5px,#fffcba 36.5px,#daf0f6 38.5px,#93c6df 41px,#7fb6d6 43px,#88bdda 44.5px,#cae8f2 48.5px,#e1f3f6 51.5px,#fcfec4 53px,#fed081 54.5px,#e54d34 56.5px,#a60126 58px,#a50026 58.5px,#a50026 62.5px,#ba1426 63px,#f57245 64px,#fedd8d 65px,#fffbb8 65.5px,#e9f6e8 66px,#c7e7f1 66.5px,#7cb3d5 68px,#5e93c3 70.5px,#313695 73px,#313695 79px,#3e60aa 79.5px,#6aa1cb 80px,#addaea 80.5px,#eaf7e5 81px,#feeba1 81.5px,#fdb366 82px,#f26941 82.5px,#d42d27 83px,#ab0626 83.5px,#a50026 84px,#a50026 86px,#cd2627 86.5px,#f0653f 87px,#fdb366 87.5px,#feeea5 88px,#e5f5ee 88.5px,#a1d1e5 89px,#6196c5 89.5px,#3c58a6 90px,#313695 90.5px,#313695 93px,#3f63ab 93.5px,#649ac7 94px,#d7eef5 95px,#fdfec3 95.5px,#fdb265 96.5px,#f7814c 97px,#e34a33 98px,#e14631 98.5px,#f67948 100px,#fdb96b 101px,#fee496 102px,#feeea5 103.5px,#fedc8c 104px,#fdb164 104.5px,#d73027 105.5px,#ac0726 106px,#a50026 106.5px,#ab0626 108px,#cc2527 108.5px,#fa9656 109.5px,#fffebe 110.5px,#d6eef5 111px,#5b90c2 112px,#3a54a4 112.5px,#313695 113px,#323997 116.5px,#4473b3 117px,#b2dceb 118px,#e9f6e8 118.5px,#fff2ab 119px,#f99153 120px,#db392b 121px,#c41d27 122px,#dd3d2d 123px,#f36c42 123.5px,#fee090 124.5px,#fdfec2 125px,#e1f3f7 125.5px,#a6d5e7 126.5px,#a3d3e5 127px,#ceeaf3 128px,#eef9dd 128.5px,#fff1aa 129px,#f8874f 130px,#e34932 130.5px,#a50026 131.5px,#a50026 133px,#bf1927 133.5px,#f7834d 134.5px,#fff8b4 135.5px,#ddf1f7 136px,#5c90c2 137px,#3a52a3 137.5px,#313695 138px,#313695 140.5px,#5082bb 141px,#9fd0e4 141.5px,#eff9dd 142px,#fed98a 142.5px,#f8874f 143px,#de3f2e 143.5px,#c01927 144px,#b40f26 144.5px,#d42d27 145.5px,#eb5a3a 146px,#fa9656 146.5px,#fffbb9 147.5px,#e0f3f8 148px,#7cb4d5 149px,#5183bb 150px,#6197c5 151px,#81b8d7 151.5px,#e7f6eb 152.5px,#fff1a9 153px,#fdbb6d 153.5px,#f46f44 154px,#d22c27 154.5px,#a50026 155px,#ac0626 158px,#d42d27 158.5px,#fdac60 159.5px,#fee395 160px,#f8fccc 160.5px,#cfeaf3 161px,#6aa1cb 162px,#4879b6 162.5px,#36469d 163.5px,#35439b 164px,#3b57a5 164.5px,#5082bb 165px,#c9e8f2 166px,#ffffbf 166.5px,#fecb7c 167px,#dc3b2c 168px,#ba1426 168.5px,#a80226 169px,#a90426 169.5px,#d32c27 170.5px,#fa9555 171.5px,#fff8b4 172.5px,#e4f4f1 173px,#7eb5d6 174px,#5b8fc1 174.5px,#3f63ab 175.5px,#4066ac 176px,#4e80b9 176.5px,#73acd0 177px,#aedaea 177.5px,#e9f7e7 178px,#feeda4 178.5px,#fdb96c 179px,#f67e4b 179.5px,#e85538 180px,#e04430 180.5px,#e44b34 181px,#f26841 181.5px,#fa9a58 182px,#fffdbc 183px,#d4edf5 183.5px,#5487bd 184.5px,#384b9f 185px,#313695 185.5px,#333c98 187.5px,#4777b5 188px,#c8e7f1 189px,#fdfec2 189.5px,#fed081 190px,#f88950 190.5px,#e24631 191px,#c21c27 191.5px,#a50026 192.5px,#ce2727 193.5px,#eb5a3a 194px,#fba05a 194.5px,#fee191 195px,#f6fbd0 195.5px,#c4e5f0 196px,#5e93c3 197px,#4473b3 197.5px,#4064ac 198px,#598cc0 199px,#c2e4f0 200px,#f7fccd 200.5px,#feda8b 201px,#f99354 201.5px,#e44c34 202px,#c41d27 202.5px,#a50026 203.5px,#c92327 204.5px,#e54e35 205px,#f88c52 205.5px,#fffcba 206.5px,#d6eef5 207px,#578bbf 208px,#394fa1 208.5px,#313695 209px,#343f99 211.5px,#4e80ba 212px,#d9f0f6 213px,#fff6b1 213.5px,#fdbe70 214px,#da362a 215px,#a70226 216px,#b30d26 217px,#e24731 218px,#fed384 219.5px,#feffc0 220.5px,#f3fad5 221px,#f1fad8 222px,#fafdc7 222.5px,#fee091 223.5px,#e95538 225px,#ad0826 226px,#a50026 226.5px,#ad0826 229px,#d42d27 229.5px,#f0643f 230px,#feda8a 231px,#fffab8 231.5px,#e9f7e7 232px,#cbe9f2 232.5px,#a5d4e6 233.5px,#a7d6e7 234px,#d8eff6 235px,#f4fbd3 235.5px,#feeca2 236px,#f7864e 237px,#ce2827 238px,#b20d26 239px,#d42d27 240px,#ec5c3b 240.5px,#fb9e59 241px,#fede8e 241.5px,#f6fccf 242px,#bee2ee 242.5px,#426cb0 243.5px,#313695 244px,#313695 247px,#3c59a6 247.5px,#5f93c4 248px,#d5eef5 249px,#fdfec2 249.5px,#fedd8d 250px,#fcaa5f 250.5px,#e44b33 251.5px,#ce2727 252.5px,#d42d27 253px,#e54c34 253.5px,#f7854e 254px,#fffdbc 255px,#cfeaf3 255.5px,#5285bc 256.5px,#3c57a5 257px,#34419a 257.5px,#35439b 258px,#4878b6 259px,#6ba2cb 259.5px,#d0ebf3 260.5px,#f6fccf 261px,#feea9f 261.5px,#fb9c59 262.5px,#f67c4a 263px,#f36c42 264px,#fca75e 265px,#fff7b2 266px,#e5f5ee 266.5px,#afdbea 267px,#4e80ba 268px,#36449c 269px,#35419b 269.5px,#436fb1 270.5px,#6197c5 271px,#c1e4ef 272px,#ecf8e2 272.5px,#fff6b1 273px,#fdbc6f 274px,#fba15b 275px,#fdc577 276px,#fbfdc7 277px,#d6eef5 277.5px,#6ca3cc 278.5px,#4778b5 279px,#3b57a5 279.5px);-webkit-mask-image:linear-gradient(90deg,transparent,#000 50.0%);mask-image:linear-gradient(90deg,transparent,#000 50.0%)"></div>
<div class="a" style="left:981px;top:0;width:12px;height:100%;background:linear-gradient(#f6fbd0 0px,#ffffbe 1px,#fdbb6d 6px,#fecf80 7.5px,#fffcba 9px,#e2f4f5 10px,#7fb6d6 12px,#6399c7 13.5px,#75aed1 15px,#ceeaf3 17px,#e6f5ed 17.5px,#fff5b0 18.5px,#fb9f5a 20.5px,#f67b49 21.5px,#f46f44 22.5px,#f67a49 23.5px,#fed788 26.5px,#fee698 28px,#fed788 33.5px,#fffab8 36.5px,#dff3f8 38.5px,#9bcce2 41px,#85bbd8 43.5px,#cae8f2 49px,#daf0f6 51.5px,#e2f4f4 52px,#fffdbc 53.5px,#fee090 54.5px,#f0643f 56.5px,#cd2727 57.5px,#a50026 58.5px,#a50026 63px,#b10b26 63.5px,#d52e27 64px,#fa9756 65px,#feeda4 66px,#f7fcce 66.5px,#def2f8 67px,#8abfdb 68.5px,#70a8ce 70.5px,#4067ad 72.5px,#313695 73.5px,#313695 79px,#36479d 79.5px,#5487bd 80px,#d3ecf4 81px,#fffebe 81.5px,#fed283 82px,#f99154 82.5px,#e64f35 83px,#a50026 84px,#a50026 86px,#be1827 86.5px,#e34932 87px,#f98e52 87.5px,#fed283 88px,#ffffc0 88.5px,#d0ebf4 89px,#5a8ec1 90px,#313695 91px,#313695 92.5px,#36459c 93px,#426baf 93.5px,#6297c6 94px,#c3e5f0 95px,#edf8e0 95.5px,#fff3ad 96px,#fdae61 97px,#f46f44 98px,#f0643f 98.5px,#f16640 99px,#f88a50 100px,#fed98a 101.5px,#fff6b2 103px,#fee89c 104px,#fecb7d 104.5px,#da362a 106px,#b20d26 107px,#b40e26 107.5px,#da352a 108.5px,#fb9c59 109.5px,#fffdbb 110.5px,#daf0f6 111px,#6095c5 112px,#3c59a6 112.5px,#313695 113px,#313695 116.5px,#394fa1 117px,#5385bc 117.5px,#bbe1ed 118.5px,#eaf7e5 119px,#fff5af 119.5px,#fcaa5f 120.5px,#ee5f3d 121.5px,#e24832 122.5px,#e75337 123px,#fb9f5a 124px,#fff2ab 125px,#daf0f6 126px,#bee2ee 127px,#def2f7 128px,#f3fad5 128.5px,#fff2ab 129px,#fecf80 129.5px,#fa9c58 130px,#d93328 131px,#aa0526 132px,#a60026 132.5px,#c31d27 133.5px,#f57647 134.5px,#feea9f 135.5px,#eff9dd 136px,#bae0ed 136.5px,#4c7db8 137.5px,#37499e 138px,#313695 138.5px,#313695 140.5px,#4168ae 141px,#6fa7ce 141.5px,#b3ddeb 142px,#eef8de 142.5px,#fee99d 143px,#fdb668 143.5px,#f67d4b 144px,#ea5739 144.5px,#e24732 145px,#ed5e3c 146px,#fdb567 147px,#feffc0 148px,#e1f4f5 148.5px,#96c8e0 149.5px,#7db4d5 150.5px,#88bdda 151px,#c9e8f1 152px,#eff9dd 152.5px,#feeea6 153px,#f67c4a 154px,#dd3c2c 154.5px,#b40f26 155px,#a50026 155.5px,#a50026 158px,#e75136 159px,#feca7b 160px,#fff3ad 160.5px,#ebf7e4 161px,#c0e3ef 161.5px,#6ea6cd 162.5px,#5689bf 163px,#4575b4 164px,#69a0ca 165px,#cbe9f2 166px,#f7fccd 166.5px,#fee394 167px,#fdad60 167.5px,#f47044 168px,#d42d27 169px,#d02927 169.5px,#e34932 170.5px,#fa9b58 171.5px,#feefa6 172.5px,#f2fad7 173px,#cfeaf3 173.5px,#7cb3d4 174.5px,#5284bc 175.5px,#4c7db8 176px,#6ca3cc 177px,#ceeaf3 178px,#f8fccb 178.5px,#fdb86b 179.5px,#f67a49 180.5px,#f67c4a 181px,#fdb568 182px,#fffdbd 183px,#def2f8 183.5px,#a4d4e6 184px,#4473b3 185px,#37499e 185.5px,#313695 186px,#313695 187px,#394ea1 187.5px,#4a7cb7 188px,#b3ddeb 189px,#ebf7e4 189.5px,#feeea6 190px,#f7854e 191px,#d93529 192px,#cf2927 192.5px,#df412f 193.5px,#fa9b58 194.5px,#fff6b1 195.5px,#e9f6e8 196px,#bee2ee 196.5px,#76aed2 197.5px,#69a0ca 198.5px,#79b1d3 199px,#c7e7f1 200px,#f1fad9 200.5px,#feeca2 201px,#fdbe70 201.5px,#e95538 202.5px,#da372a 203px,#d83128 204px,#e24832 204.5px,#fba15b 205.5px,#fffbb9 206.5px,#e0f3f8 207px,#a4d3e6 207.5px,#436fb1 208.5px,#34409a 209px,#313695 209.5px,#313695 211px,#37489e 211.5px,#4a7bb7 212px,#bae0ed 213px,#eff9dc 213.5px,#feea9f 214px,#f67e4b 215px,#d93429 216px,#d12b27 216.5px,#de3f2e 217.5px,#fcaa5f 219px,#fee699 220px,#fafdc8 221.5px,#fffab8 222.5px,#feda8a 223.5px,#f98e52 224.5px,#d93529 225.5px,#a50026 226.5px,#ad0726 229px,#cc2527 229.5px,#f8884f 230.5px,#fee699 231.5px,#ffffbf 232px,#eaf7e6 232.5px,#c5e6f0 233.5px,#c0e3ef 234px,#def2f7 235px,#fff5b0 236px,#fed888 236.5px,#f67c4a 237.5px,#dd3c2c 238.5px,#d83228 239px,#e64f35 240px,#fdae61 241px,#fee192 241.5px,#f9fdc9 242px,#cce9f2 242.5px,#5487bd 243.5px,#384da0 244px,#313695 244.5px,#343e99 247.5px,#436fb1 248px,#a0d0e4 249px,#d7eef5 249.5px,#fafdc9 250px,#fee79a 250.5px,#fa9857 251.5px,#ee613e 252.5px,#eb5a3a 253px,#f06640 253.5px,#f88850 254px,#fdbb6d 254.5px,#feea9f 255px,#eff9dc 255.5px,#bce1ee 256px,#5b8fc1 257px,#416aae 258px,#4472b3 258.5px,#6aa1cb 259.5px,#dff2f8 261px,#f8fccb 261.5px,#feeea5 262px,#fdb96c 263px,#fa9857 264px,#fdab60 265px,#feffc0 266.5px,#e2f4f4 267px,#649ac7 268.5px,#4574b3 269.5px,#4676b4 270px,#659bc8 271px,#cce9f2 272.5px,#eaf7e6 273px,#fdfec3 273.5px,#fee293 275px,#fee496 275.5px,#fffdbc 276.5px,#cce9f2 277.5px,#77afd2 278.5px,#436eb1 279.5px);-webkit-mask-image:linear-gradient(90deg,transparent,#000 50.0%);mask-image:linear-gradient(90deg,transparent,#000 50.0%)"></div>
<div class="a" style="left:987px;top:0;width:12px;height:100%;background:linear-gradient(#f6fbd0 0px,#ffffbe 1px,#fdbb6d 6px,#fdc173 7px,#fedc8c 8px,#f9fdcb 9.5px,#d6eef5 10.5px,#80b7d6 12.5px,#6da4cd 14px,#87bcd9 15.5px,#e2f4f5 17.5px,#fffbb9 18.5px,#fdac60 20.5px,#f7864e 21.5px,#f57748 22.5px,#f88c51 24px,#fed888 26.5px,#fee597 27.5px,#fed586 33.5px,#fdfec2 37px,#e3f4f3 38.5px,#d6eef5 39px,#9acbe1 41.5px,#8abfdb 43.5px,#dbf1f7 52px,#f9fdca 53.5px,#fed787 55px,#f67b49 56.5px,#c61f27 58px,#a50026 59px,#a50026 64px,#e24832 65px,#f67949 65.5px,#fed889 66.5px,#fff4ae 67px,#f3fad5 67.5px,#ddf2f7 68px,#98cae1 69.5px,#6da5cd 72px,#343e99 74px,#313695 79.5px,#3f62ab 80px,#689fca 80.5px,#a5d4e6 81px,#e2f4f4 81.5px,#fff7b3 82px,#f98f53 83px,#e85438 83.5px,#ce2727 84px,#a50026 85px,#ae0926 86.5px,#cb2527 87px,#f98e52 88px,#fff4af 89px,#e8f6e9 89.5px,#b9e0ed 90px,#679ec9 91px,#4879b6 92px,#6399c7 93.5px,#c1e4ef 95px,#e4f5f0 95.5px,#fbfdc7 96px,#fdbf71 97.5px,#fa9b58 99px,#fdb062 100px,#fff0a8 102px,#fffbba 103px,#fff4af 104px,#fed686 105px,#fa9b58 106px,#f16640 107px,#ec5b3b 107.5px,#f36a42 108.5px,#fdb365 109.5px,#fffcbb 110.5px,#e1f3f7 111px,#a7d6e7 111.5px,#6da4cd 112px,#426baf 112.5px,#313695 113px,#313695 117px,#3c58a6 117.5px,#7db5d5 118.5px,#dbf1f7 119.5px,#f7fcce 120px,#fff0a8 120.5px,#fdbc6e 121.5px,#f99053 123px,#fdb063 124px,#fffebd 125.5px,#e3f4f3 126.5px,#e2f4f4 127.5px,#f9fdcb 128.5px,#fede8e 129.5px,#f99354 130.5px,#e44c34 131.5px,#d32c27 132.5px,#dc3b2c 133.5px,#f7814c 134.5px,#fee293 135.5px,#fdfec3 136px,#daf0f6 136.5px,#4e80ba 138px,#34419a 139px,#313796 140px,#37489e 140.5px,#598dc0 141.5px,#e0f3f8 143px,#fcfec5 143.5px,#fdb265 145px,#fa9857 146px,#fdb467 147px,#feffc1 148.5px,#e9f6e8 149px,#d1ecf4 149.5px,#b4deec 150.5px,#b8dfed 151px,#e0f3f8 152px,#f3fbd4 152.5px,#fff3ad 153px,#fed585 153.5px,#f46f44 154.5px,#de3f2e 155px,#a70226 156px,#a50026 156.5px,#a50026 158px,#d83328 159px,#fb9f5a 160px,#fed384 160.5px,#fff6b2 161px,#ebf7e4 161.5px,#c7e7f1 162px,#87bcd9 163px,#73abd0 164px,#90c3dd 165px,#d6eef5 166px,#f3fbd4 166.5px,#fff0a9 167px,#fdae61 168px,#f57245 169px,#f26941 169.5px,#f67c4a 170.5px,#fdb568 171.5px,#f9fdcb 173px,#e2f4f5 173.5px,#81b8d7 175px,#6297c6 176.5px,#88bdda 177.5px,#e0f3f8 178.5px,#fdfec3 179px,#fecc7e 180px,#fdb76a 181px,#fed686 182px,#fbfdc6 183px,#e1f4f5 183.5px,#649ac7 185px,#4a7bb7 185.5px,#3c5aa7 186.5px,#3e5fa9 187px,#5b8fc1 188px,#daf0f6 189.5px,#fafdc9 190px,#fee89d 190.5px,#fb9f5a 191.5px,#f67e4b 192px,#f26841 193px,#f57245 193.5px,#fca95f 194.5px,#fffebe 196px,#ebf7e5 196.5px,#d2ecf4 197px,#a5d5e7 198.5px,#d7eff6 200px,#fff9b6 201px,#fba15b 202.5px,#f57647 203.5px,#f57446 204px,#fb9d59 205px,#ffffbe 206.5px,#e2f4f4 207px,#b2ddeb 207.5px,#5a8ec1 208.5px,#384b9f 209.5px,#323a97 210.5px,#36469d 211px,#5184bc 212px,#d6eef5 213.5px,#f7fcce 214px,#feeba1 214.5px,#fca65d 215.5px,#f57346 216.5px,#f46e44 217px,#fba05a 218.5px,#fee79a 220px,#fffbb9 221px,#fffdbb 222px,#fedf8f 223.5px,#f7824d 225px,#de3f2e 226px,#be1826 227px,#b10c26 228px,#c51f27 229px,#ea5839 230px,#fed485 231.5px,#fdfec3 232.5px,#e3f4f3 233.5px,#e3f4f2 235px,#fffebd 236px,#fdb063 237.5px,#f57748 238.5px,#f46d43 239px,#f47044 239.5px,#fb9d59 240.5px,#ffffbf 242px,#e3f4f3 242.5px,#b2ddeb 243px,#578bbf 244px,#333c98 245px,#313695 245.5px,#323996 247.5px,#3c59a6 248px,#72abd0 249px,#cce9f2 250px,#eef8df 250.5px,#fff8b5 251px,#fdb366 252.5px,#fba05b 253.5px,#fdc476 254.5px,#ffffbe 255.5px,#e3f4f3 256px,#8dc1dc 257px,#6197c6 258px,#74add1 259.5px,#e0f3f8 261.5px,#fffbb9 262.5px,#fed081 264px,#fec879 265px,#fee192 266px,#f9fdcb 267px,#e3f4f2 267.5px,#86bbd9 269px,#6fa7ce 270px,#87bcd9 271.5px,#dff3f8 274px,#eaf7e6 275.5px,#dbf1f7 276.5px,#addaea 277.5px,#4d7fb9 279.5px);-webkit-mask-image:linear-gradient(90deg,transparent,#000 50.0%);mask-image:linear-gradient(90deg,transparent,#000 50.0%)"></div>
<div class="a" style="left:993px;top:0;width:12px;height:100%;background:linear-gradient(#f6fbd0 0px,#ffffbe 1px,#fdbb6d 6px,#fedb8b 8px,#fbfdc7 9.5px,#dbf0f6 10.5px,#87bcd9 12.5px,#73acd0 14px,#8cc0db 15.5px,#e2f4f3 17.5px,#fffbba 18.5px,#fdb063 20.5px,#f88b51 21.5px,#f67b4a 22.5px,#fb9e5a 24.5px,#fed889 26.5px,#fee597 27.5px,#fed384 33.5px,#feffc1 37px,#d8eff6 39px,#9dcee3 41.5px,#8bc0db 43.5px,#cdeaf3 51.5px,#e1f3f7 52.5px,#fffdbd 54px,#fee191 55px,#f16740 57px,#d02a27 58px,#a50026 59px,#a80326 64.5px,#e34832 65.5px,#f57748 66px,#fed283 67px,#fafdc9 68px,#e6f5ed 68.5px,#cdeaf3 69px,#a6d5e7 70px,#95c7df 71.5px,#76afd2 72.5px,#323896 74.5px,#313695 75px,#313695 79.5px,#384ca0 80px,#5385bc 80.5px,#c2e4ef 81.5px,#f1fad9 82px,#feeba1 82.5px,#fdbe70 83px,#e75237 84px,#b91426 85px,#a70126 86px,#bf1927 87px,#ed5f3d 88px,#fec87a 89px,#feeea6 89.5px,#f3fbd4 90px,#d5eef5 90.5px,#94c6df 91.5px,#7cb3d4 92.5px,#9bcde2 94px,#e4f5f0 95.5px,#fff8b4 96.5px,#fed989 97.5px,#fdba6c 99px,#fdc476 100px,#fffdbc 102.5px,#fffdbb 104px,#feda8b 105.5px,#fdb164 106.5px,#f88950 108px,#f98e52 108.5px,#fdbc6e 109.5px,#fff7b3 110.5px,#ebf7e3 111px,#c0e3ef 111.5px,#5b90c2 112.5px,#3d5da8 113px,#313695 113.5px,#313695 117.5px,#4e80ba 118.5px,#94c7df 119.5px,#def2f7 120.5px,#fffbb9 121.5px,#fed788 123px,#fed485 124px,#fff8b4 125.5px,#f0f9da 126.5px,#edf8e1 127.5px,#fff4af 129px,#fecb7c 130px,#f88d52 131px,#ec5c3b 132px,#e54d34 133px,#f36b42 134px,#f98e52 134.5px,#fdb86a 135px,#fffbba 136px,#e6f5ed 136.5px,#bbe1ee 137px,#4f81ba 138.5px,#3e60aa 139.5px,#5184bc 141px,#d4edf5 143px,#fffab8 144px,#fec879 145.5px,#fdc173 146.5px,#fff7b3 148.5px,#e1f3f6 150px,#dff2f8 151.5px,#f6fccf 152.5px,#fee294 153.5px,#fa9857 154.5px,#e14531 155.5px,#b91326 156.5px,#a60126 157.5px,#b91326 158.5px,#e75136 159.5px,#fdb769 160.5px,#fffdbc 161.5px,#e8f6e9 162px,#cbe9f2 162.5px,#9fcfe4 163.5px,#99cbe1 164px,#addae9 165px,#ddf2f7 166px,#fffab7 167px,#fdb86a 168.5px,#fa9a58 170px,#fdc677 171.5px,#fdfec3 173px,#eaf7e6 173.5px,#d2ecf4 174px,#87bdd9 175.5px,#73abd0 176.5px,#83b9d8 177.5px,#e5f5ef 179px,#fafdc7 179.5px,#fff1aa 180px,#fee090 181px,#fff6b1 182.5px,#e6f5ee 183.5px,#c7e7f1 184px,#6ba3cc 185.5px,#4f81ba 187px,#659bc8 188px,#c5e6f0 189.5px,#e8f6ea 190px,#ffffbf 190.5px,#fdb668 192px,#fa9756 193px,#fdb366 194.5px,#ffffbf 196.5px,#e5f5f0 197.5px,#d9f0f6 198px,#d2ecf4 199px,#e5f5ef 200px,#ffffc0 201px,#fdae61 203.5px,#fca95f 204.5px,#fdb668 205px,#fff9b6 206.5px,#edf8e1 207px,#cbe9f2 207.5px,#5b8fc2 209px,#4575b4 209.5px,#3d5ba7 210.5px,#5588be 212px,#e1f3f6 214px,#f9fdcb 214.5px,#fdc072 216px,#fba05b 217px,#fdb265 218.5px,#fee394 220px,#fff7b2 222px,#fee293 223.5px,#e54e35 226.5px,#d12a27 228px,#d83328 229px,#f67e4b 230.5px,#fee191 232px,#fdfec2 233px,#eaf7e5 234px,#e9f6e8 235px,#fff5b0 236.5px,#fdba6c 238px,#fb9e5a 239px,#fdb96b 240.5px,#fffcba 242px,#ecf8e2 242.5px,#cde9f3 243px,#7db4d5 244px,#4473b3 245px,#333d98 246.5px,#37499e 247.5px,#4778b6 248.5px,#cbe9f2 250.5px,#e9f6e7 251px,#fdfec3 251.5px,#fed283 253px,#fec779 254px,#fee293 255px,#f5fbd1 256px,#dff3f8 256.5px,#9ecfe3 257.5px,#82b8d7 258.5px,#97c9e0 260px,#d3ecf4 261.5px,#e6f5ed 262px,#fffebd 263px,#fee090 265px,#fee597 266px,#fffbb8 267px,#e3f4f2 268px,#92c5de 270px,#b5deec 276px,#90c4dd 277.5px,#5588be 279.5px);-webkit-mask-image:linear-gradient(90deg,transparent,#000 50.0%);mask-image:linear-gradient(90deg,transparent,#000 50.0%)"></div>
<div class="a" style="left:999px;top:0;width:12px;height:100%;background:linear-gradient(#f6fbd0 0px,#ffffbe 1px,#fdbb6d 6.5px,#fedb8b 8px,#fbfdc7 9.5px,#dbf1f7 10.5px,#9acbe1 12px,#79b1d3 13.5px,#86bbd9 15px,#d1ecf4 17px,#e6f5ed 17.5px,#fff9b5 18.5px,#fdae61 20.5px,#f88a51 21.5px,#f67c4a 22.5px,#f7834d 23.5px,#fed888 26.5px,#fee698 28px,#fed182 33.5px,#feffc1 37px,#d7eff6 39px,#93c6df 42px,#88bdda 44px,#ddf2f7 52.5px,#feffc0 54px,#fecc7d 55.5px,#e44c34 57.5px,#a70226 59px,#a50026 59.5px,#a50026 64.5px,#de3f2e 65.5px,#f46d43 66px,#feca7b 67px,#fdfec2 68px,#e9f7e7 68.5px,#d1ecf4 69px,#a7d6e7 70px,#78b0d3 72.5px,#323a97 74.5px,#313695 79.5px,#36479d 80px,#4c7eb8 80.5px,#b4ddeb 81.5px,#e7f6ec 82px,#fff7b3 82.5px,#fba25b 83.5px,#f46d43 84px,#cc2627 85px,#b20c26 86px,#bf1927 87px,#e75236 88px,#fdb567 89px,#fffcba 90px,#e9f6e8 90.5px,#c9e8f1 91px,#94c6df 92px,#89beda 92.5px,#a0d0e4 94px,#e6f5ed 95.5px,#fff5b0 96.5px,#fed283 97.5px,#fdb265 99px,#fdbf71 100px,#fff8b4 102px,#f8fccc 103px,#fbfec6 104px,#fee699 105px,#fca75e 106px,#f16640 107px,#eb593a 108px,#f0653f 108.5px,#fb9e5a 109.5px,#fcfec5 111px,#dff2f8 111.5px,#addaea 112px,#5285bc 113px,#313695 114px,#313695 117.5px,#3b57a5 118px,#4b7cb8 118.5px,#90c3dd 119.5px,#dbf1f7 120.5px,#fffab8 121.5px,#fede8e 122.5px,#fec97a 123.5px,#fed283 124.5px,#fffdbc 126px,#edf8e0 127px,#eef8df 128px,#fffab7 129px,#fece7f 130px,#f8874f 131px,#e54e35 132px,#df402e 133px,#f0643f 134px,#fdb568 135px,#fffbba 136px,#e7f6ec 136.5px,#bde2ee 137px,#71aacf 138px,#4f81ba 139px,#4d7eb9 139.5px,#669dc9 140.5px,#cfebf3 142px,#fff8b5 143px,#fecc7d 144px,#fdb365 145.5px,#fdc375 146.5px,#fffbb9 148.5px,#ddf2f7 150.5px,#e3f4f3 152px,#fcfec5 153px,#fedb8b 154px,#f26941 155.5px,#d42e27 156.5px,#be1826 157.5px,#da3529 159px,#f7814c 160px,#fed989 161px,#fff4af 161.5px,#def2f7 162.5px,#b1dceb 163.5px,#aad8e8 164.5px,#dbf0f7 166px,#feffc0 167px,#fdc677 168.5px,#fca45d 170px,#fdc375 171.5px,#fffab8 173px,#e1f4f5 174px,#99cae1 175.5px,#7db4d5 177px,#95c7df 178px,#cae8f2 179px,#e5f5ef 179.5px,#f5fbd1 180px,#fff3ad 181px,#fffab7 182.5px,#dcf1f7 184px,#74add1 186px,#5c91c2 187.5px,#71aacf 188.5px,#cfeaf3 190px,#ecf8e2 190.5px,#fffbba 191px,#fdb668 192.5px,#fa9c59 193.5px,#fdba6c 195px,#fdfec3 197px,#dff3f8 198.5px,#e5f5ee 200px,#fff9b6 201.5px,#fecd7e 203px,#fdae61 204.5px,#fdb86b 205.5px,#fff7b3 207px,#d3edf4 208px,#679dc9 209.5px,#436fb1 211px,#6399c7 212.5px,#c5e6f0 214px,#e6f5ec 214.5px,#fdfec3 215px,#fdbf71 216.5px,#fba25c 217.5px,#fdb265 219px,#fee69a 221px,#feeda3 222.5px,#fed485 224px,#e75236 227px,#da3529 228.5px,#e04330 229.5px,#f98e52 231px,#fee597 232.5px,#fdfec3 233.5px,#edf8e0 234.5px,#eef8de 235.5px,#fffebe 236.5px,#fdc173 238.5px,#fdb366 239.5px,#fdc273 240.5px,#fff6b2 242px,#e1f3f7 243px,#6197c5 245px,#3e5fa9 246.5px,#3e60aa 247.5px,#4f80ba 248.5px,#7cb4d5 249.5px,#def2f8 251px,#fffbb9 252px,#fee090 253px,#fecb7d 254.5px,#fee496 255.5px,#f7fccd 256.5px,#e4f5f0 257px,#b2ddeb 258px,#9fcfe4 259px,#abd9e9 260px,#dbf1f7 261.5px,#fffcba 263px,#fedb8b 265px,#fede8e 266px,#ffffbf 267.5px,#dff2f8 268.5px,#aedbea 269.5px,#92c5de 270.5px,#9ecee3 276px,#5b90c2 279.5px);-webkit-mask-image:linear-gradient(90deg,transparent,#000 50.0%);mask-image:linear-gradient(90deg,transparent,#000 50.0%)"></div>
<div class="a" style="left:1005px;top:0;width:12px;height:100%;background:linear-gradient(#f6fbd0 0px,#ffffbe 1px,#fdbb6d 6.5px,#fedb8b 8px,#fafdc7 9.5px,#dbf1f7 10.5px,#9ccde2 12px,#7eb5d5 13.5px,#8dc1dc 15px,#d8eff6 17px,#fff6b1 18.5px,#fdad60 20.5px,#f88a50 21.5px,#f67c4a 22.5px,#fb9d59 24.5px,#fee495 27.5px,#fed081 33.5px,#feffc0 37px,#d8eff6 39px,#99cbe1 41.5px,#84bad8 43.5px,#daf0f6 52.5px,#fcfec5 54px,#fed081 55.5px,#e75136 57.5px,#aa0526 59px,#a50026 59.5px,#a50026 64.5px,#bb1526 65px,#f06640 66px,#fdc577 67px,#fffebe 68px,#ebf7e4 68.5px,#d3edf4 69px,#a6d5e7 70px,#76afd2 72.5px,#323a97 74.5px,#313695 75px,#313695 79.5px,#35439c 80px,#4777b5 80.5px,#a8d6e7 81.5px,#ddf1f7 82px,#fdfec3 82.5px,#fdb86a 83.5px,#eb5b3b 84.5px,#ca2427 85.5px,#bc1626 86.5px,#d22b27 87.5px,#f46e44 88.5px,#feca7b 89.5px,#fafdc9 90.5px,#e3f4f2 91px,#aedbea 92px,#9acce2 93px,#abd9e9 94px,#d7eef5 95px,#fdfec3 96px,#fdb769 98px,#fca75e 99px,#fdb86a 100px,#fff9b6 102px,#f3fad5 103px,#f5fbd2 104px,#fff9b6 104.5px,#fee090 105px,#f57346 106px,#d02927 107px,#cb2527 107.5px,#dc3a2c 108.5px,#fca55d 110px,#fff0a8 111px,#f3fad6 111.5px,#d0ebf3 112px,#5082bb 113.5px,#323996 114.5px,#313695 115px,#313796 117.5px,#497ab7 118.5px,#8ec2dc 119.5px,#ddf2f7 120.5px,#fff6b2 121.5px,#fed383 122.5px,#fdba6c 124px,#fed283 125px,#fff5af 126px,#e9f7e7 127.5px,#eff9dc 128.5px,#fdfec3 129px,#fed484 130px,#fdad61 130.5px,#ea5839 131.5px,#d73027 132.5px,#de3f2e 133.5px,#f7824d 134.5px,#fdb365 135px,#fffbb9 136px,#e7f6eb 136.5px,#c1e4ef 137px,#7cb3d4 138px,#6399c7 139px,#7bb3d4 140px,#c7e7f1 141px,#ecf8e2 141.5px,#fff7b3 142px,#fdbe70 143px,#fca85e 143.5px,#fb9d59 144.5px,#fdba6d 146px,#fffdbc 148.5px,#e0f3f7 150.5px,#ddf2f7 152px,#fffab8 153.5px,#fca65d 155px,#e04430 156.5px,#d62f27 157.5px,#e95538 159px,#fa9857 160px,#fedf8f 161px,#f6fccf 162px,#e5f5ef 162.5px,#b6deec 164px,#bae0ed 165px,#daf0f6 166px,#fafdc9 167px,#fed283 168.5px,#fdae61 170px,#fdc173 171.5px,#fafdc7 173.5px,#d7eef5 174.5px,#98cae1 176px,#88bdda 177px,#93c5de 178px,#e2f4f4 180px,#fdfec3 181.5px,#fcfec5 182.5px,#e3f4f3 184px,#7db4d5 186.5px,#69a0ca 188px,#7eb5d5 189px,#d8eff6 190.5px,#fff8b4 191.5px,#feca7c 192.5px,#fb9e5a 194px,#fdaf62 195px,#fff6b1 197px,#eff9dc 198px,#e4f4f1 199px,#e7f6eb 200px,#ffffbf 201.5px,#fecc7e 203.5px,#fdb163 205px,#fdb86b 206px,#fff4af 207.5px,#dcf1f7 208.5px,#72abd0 210px,#5284bc 211px,#4e80ba 211.5px,#70a8cf 213px,#d0ebf3 214.5px,#ecf8e2 215px,#fffdbc 215.5px,#fdad60 217.5px,#fba15b 218.5px,#fedf90 221.5px,#fee395 223px,#fdc778 224.5px,#e95638 227.5px,#df412f 229px,#e75136 230px,#fb9c59 231.5px,#fee89c 233px,#fdfec3 234px,#eff9dc 235.5px,#fffab8 237px,#fed586 238.5px,#fdc476 239.5px,#fed889 241px,#fbfdc6 242.5px,#d3edf4 243.5px,#689fca 245.5px,#497ab6 247px,#4f81ba 248px,#69a0ca 249px,#d3edf4 251px,#fafdc8 252px,#fff5b0 252.5px,#fed283 254px,#fece7f 255px,#fee597 256px,#fbfdc6 257px,#daf0f6 258px,#bbe1ee 259.5px,#e4f5f1 261.5px,#fbfdc7 262.5px,#fed485 265px,#fed485 266px,#fff5b0 267.5px,#d8eff6 269px,#aad8e9 270px,#91c4dd 271px,#659bc8 279.5px);-webkit-mask-image:linear-gradient(90deg,transparent,#000 50.0%);mask-image:linear-gradient(90deg,transparent,#000 50.0%)"></div>
<div class="a" style="left:1011px;top:0;width:12px;height:100%;background:linear-gradient(#f6fbd0 0px,#ffffbe 1px,#fdbb6d 6.5px,#fedb8b 8px,#fafdc7 9.5px,#dcf1f7 10.5px,#9ecfe3 12px,#83b9d8 13.5px,#94c7df 15px,#dff2f8 17px,#fcfec4 18px,#fdab5f 20.5px,#f88950 21.5px,#f67c4a 22.5px,#f7834d 23.5px,#fdad60 25px,#fee293 27.5px,#fed081 33.5px,#ffffbe 37px,#d9eff6 39px,#8fc3dd 42px,#81b7d7 44px,#d7eef5 52.5px,#e3f4f2 53px,#fafdc9 54px,#fed485 55.5px,#f57748 57px,#c51e27 58.5px,#a50026 59.5px,#a50026 64.5px,#b61026 65px,#ed5e3c 66px,#fdc072 67px,#fffcbb 68px,#d5edf5 69px,#97c9e0 70.5px,#75aed2 72.5px,#323b97 74.5px,#34409a 80px,#4471b2 80.5px,#9ccde2 81.5px,#cfebf3 82px,#f3fbd4 82.5px,#feeea5 83px,#fba05a 84px,#d93529 85.5px,#c62027 86.5px,#d22b27 87.5px,#ec5c3b 88.5px,#fecf80 90px,#ffffbe 91px,#e0f3f8 92px,#c6e6f1 93px,#dbf0f7 94.5px,#fff8b4 96px,#fdc274 97.5px,#fca75e 99px,#fdba6d 100px,#fffcbb 102px,#eef8de 103px,#ecf8e1 104px,#fdfec3 104.5px,#fee598 105px,#f26941 106px,#d83228 106.5px,#bf1927 107px,#bb1526 107.5px,#d02927 108.5px,#ee613e 109.5px,#fdb769 110.5px,#fff9b6 111.5px,#ebf7e4 112px,#c6e6f1 112.5px,#5184bc 114px,#36459c 115px,#313695 115.5px,#323a97 117.5px,#4575b4 118.5px,#afdbea 120px,#d8eff6 120.5px,#fff7b3 121.5px,#fece7f 122.5px,#fdaf62 124px,#fdc375 125px,#fffbb9 126.5px,#e6f5ec 128px,#e9f6e8 128.5px,#fffab8 129.5px,#fdbf71 130.5px,#f0643f 131.5px,#e14430 132px,#d73027 133px,#e65036 134px,#fa9957 135px,#ffffbf 136.5px,#e7f6eb 137px,#c7e7f1 137.5px,#8fc2dd 138.5px,#7ab1d3 139.5px,#95c7df 140.5px,#ddf2f7 141.5px,#f8fccb 142px,#fdb568 143.5px,#fb9d59 145px,#fdbd6f 146.5px,#feffc0 149px,#dff2f8 151px,#e3f4f3 152.5px,#fff9b6 153.5px,#fee192 154px,#f99153 155px,#f46d43 155.5px,#e75136 156.5px,#f26941 158px,#fa9656 159px,#fee192 160.5px,#ffffc0 161.5px,#e5f5ef 162.5px,#d7eff6 163px,#c0e3ef 164.5px,#ddf1f7 166px,#fff7b2 167.5px,#fdc476 169px,#fdad61 170.5px,#fecd7e 172px,#ffffbf 173.5px,#ddf1f7 174.5px,#98cae1 176px,#82b8d7 177.5px,#93c6df 178.5px,#e1f4f5 180.5px,#f3fad4 181.5px,#f5fbd1 183px,#dbf1f7 184.5px,#80b6d6 187px,#70a8cf 188.5px,#8bbfdb 189.5px,#e5f5ef 191px,#fafdc8 191.5px,#fdbf71 193px,#fa9b58 194.5px,#fdb265 195.5px,#fff8b5 197.5px,#eaf7e5 199px,#ebf7e4 200px,#feffc0 201.5px,#fdc375 204px,#fdab60 205.5px,#fdb86a 206.5px,#fff7b3 208px,#d5eef5 209px,#71a9cf 210.5px,#5689bf 211.5px,#6aa1cb 213px,#e0f3f8 215px,#fff5af 216px,#fec97b 217px,#fca55d 218px,#fb9c59 219px,#fed484 222px,#fed586 223.5px,#fdb76a 225px,#ec5c3b 227.5px,#df412f 229px,#e34932 230px,#f7864f 231.5px,#fed989 233px,#fdfec2 234.5px,#f4fbd4 236px,#ffffbf 237px,#fed687 239px,#fecd7e 240px,#fedb8b 241px,#ffffbf 242.5px,#def2f7 243.5px,#72aad0 245.5px,#5487bd 246.5px,#497ab6 247.5px,#5386bd 248.5px,#72aad0 249.5px,#e1f3f6 251.5px,#fffbba 252.5px,#fee191 253.5px,#fdc677 255px,#fed586 256px,#fcfec5 257.5px,#e0f3f7 258.5px,#cce9f2 259.5px,#def2f8 261px,#fdfec2 262.5px,#fecd7e 265px,#fed484 266.5px,#fffbba 268px,#e3f4f3 269px,#9fd0e4 270.5px,#8abfdb 271.5px,#72aad0 279.5px);-webkit-mask-image:linear-gradient(90deg,transparent,#000 50.0%);mask-image:linear-gradient(90deg,transparent,#000 50.0%)"></div>
<div class="a" style="left:1017px;top:0;width:12px;height:100%;background:linear-gradient(#f6fbd0 0px,#ffffbe 1px,#fdbb6d 6.5px,#fedb8b 8px,#fbfdc7 9.5px,#dcf1f7 10.5px,#a0d0e4 12px,#87bcd9 13.5px,#99cbe1 15px,#e2f4f5 17px,#feffc1 18px,#fdbc6e 20px,#f88950 21.5px,#f67c4a 22.5px,#f7824d 23.5px,#fdab5f 25px,#fee191 27.5px,#fecf80 33.5px,#fffdbc 37px,#daf0f6 39px,#98cae1 41.5px,#7fb5d6 44px,#c0e3ef 51.5px,#e1f3f6 53px,#f7fccd 54px,#fed888 55.5px,#f67d4a 57px,#c82227 58.5px,#a50026 59.5px,#a50026 64.5px,#b10b26 65px,#d32c27 65.5px,#f88b51 66.5px,#fee294 67.5px,#fffab8 68px,#d6eef5 69px,#95c8e0 70.5px,#74add1 72.5px,#323b97 74.5px,#343e99 80px,#426db0 80.5px,#659cc8 81px,#c4e5f0 82px,#ecf8e2 82.5px,#fff7b2 83px,#f8884f 84.5px,#d83328 86px,#cf2927 87px,#dd3c2d 88px,#f99254 89.5px,#fed484 90.5px,#fffbb8 91.5px,#ebf7e4 92.5px,#e1f3f6 93.5px,#e8f6ea 94.5px,#fcfec4 95.5px,#fdc677 97.5px,#fdb467 98.5px,#fec87a 100px,#fcfec5 102px,#e4f5f0 103.5px,#e4f5f0 104px,#fff7b2 105px,#fed283 105.5px,#eb5a3a 106.5px,#d83228 107px,#cb2427 107.5px,#d73027 108.5px,#f7804c 110px,#fece7f 111px,#f9fdca 112px,#e0f3f7 112.5px,#4f81ba 114.5px,#384b9f 115.5px,#313695 116.5px,#333d98 117.5px,#436eb1 118.5px,#7bb3d4 119.5px,#cce9f2 120.5px,#ecf8e2 121px,#fffcbb 121.5px,#fdbd6f 123px,#fdab60 124.5px,#fff4ae 126.5px,#eef9de 127.5px,#e4f5f0 128.5px,#eaf7e6 129px,#fff5b0 130px,#fede8f 130.5px,#f88d52 131.5px,#e54e35 132.5px,#e04330 133px,#ee613e 134.5px,#fa9957 135.5px,#fed888 136.5px,#fcfec4 137.5px,#e9f7e7 138px,#d2ecf4 138.5px,#92c5de 140px,#86bbd9 141px,#9fcfe4 142px,#dbf1f7 143px,#fff5af 144px,#fdc778 145px,#fdab60 146.5px,#fdbc6e 147.5px,#fff8b4 149.5px,#e5f5ee 151px,#ddf2f7 152.5px,#fffdbd 153.5px,#fee394 154px,#f88d52 155px,#f46e43 155.5px,#f0653f 156.5px,#f57748 157.5px,#fdb164 159px,#fff5b0 161px,#dff2f8 163px,#c9e8f2 164.5px,#e0f3f7 166px,#fff6b1 167.5px,#fdc173 169px,#fca45c 170.5px,#fdc476 172px,#fffdbc 173.5px,#d9f0f6 174.5px,#89beda 176px,#6ba2cb 177.5px,#79b1d3 178.5px,#d5edf5 180.5px,#f9fdca 182px,#fbfec6 183px,#d8eff6 185px,#87bdd9 187px,#6fa7ce 188.5px,#83b9d8 189.5px,#dcf1f7 191px,#fff4af 192px,#fdc375 193px,#fdac60 193.5px,#f99254 194.5px,#fdb568 196px,#fffcbb 198px,#edf8e1 199.5px,#fffebe 201.5px,#fdbd6f 204px,#fb9e5a 205.5px,#fdbb6e 207px,#fafdc8 208.5px,#e3f4f3 209px,#78b0d3 210.5px,#588bc0 211.5px,#5588be 212px,#78b0d3 213.5px,#d5edf5 215px,#fffbb9 216px,#fca55d 218px,#f99455 219.5px,#fecb7c 222.5px,#fec779 224px,#fba35c 225.5px,#e95538 227.5px,#da3529 229px,#e04330 230.5px,#f46d43 231.5px,#fede8e 233.5px,#fdfec3 235px,#f7fccd 236.5px,#fff9b6 237.5px,#fecd7e 240px,#fed787 241px,#fffcba 242.5px,#e1f3f7 243.5px,#6aa1cb 245.5px,#4575b4 246.5px,#3d5ca8 247.5px,#3f62ab 248.5px,#5486bd 249.5px,#cce9f2 251.5px,#e9f6e8 252px,#fcfec4 252.5px,#fff0a8 253px,#fdbf71 254.5px,#fdb86b 255.5px,#fed283 256.5px,#fff6b1 257.5px,#dcf1f7 259px,#d0ebf3 260px,#dff2f8 261px,#fdfec2 262.5px,#fede8e 264px,#fdc374 265.5px,#fecb7c 266.5px,#fff6b1 268px,#e7f6eb 269px,#d0ebf3 269.5px,#84bad8 271.5px,#7db4d5 279.5px);-webkit-mask-image:linear-gradient(90deg,transparent,#000 50.0%);mask-image:linear-gradient(90deg,transparent,#000 50.0%)"></div>
<div class="a" style="left:1023px;top:0;width:12px;height:100%;background:linear-gradient(#f6fbd0 0px,#ffffbe 1px,#fdbb6d 6.5px,#fedb8b 8px,#fbfdc7 9.5px,#ddf1f7 10.5px,#a0d1e4 12px,#88bdda 13.5px,#9ccde3 15.5px,#e3f4f3 18px,#fffdbc 19px,#fca95f 21px,#f67c4a 22.5px,#f88b51 24px,#fedf8f 27.5px,#fecf80 33.5px,#fffcba 37px,#ddf2f7 39px,#9acbe2 41.5px,#80b6d6 44px,#bde2ee 51.5px,#dff2f8 53px,#fffbb9 54.5px,#fedb8b 55.5px,#f7814c 57px,#de402e 58px,#a50026 59.5px,#af0926 65px,#d02a27 65.5px,#f88850 66.5px,#fee293 67.5px,#fffab7 68px,#d6eef5 69px,#96c8e0 70.5px,#74add1 72.5px,#323a97 74.5px,#313695 75px,#343f99 80px,#6399c7 81px,#bee2ee 82px,#e8f6ea 82.5px,#fffcba 83px,#fa9555 84.5px,#e75237 85.5px,#d52e27 87px,#de3e2d 88px,#f88c51 89.5px,#fee699 91px,#f9fccb 92px,#e3f4f2 93px,#e0f3f7 94.5px,#fffcba 96px,#fecd7e 97.5px,#fdbc6e 98.5px,#fdc778 99.5px,#fffbb9 101.5px,#e5f5ef 103px,#dff2f8 104px,#e7f6ec 104.5px,#feefa7 105.5px,#fb9e59 106.5px,#f46f44 107px,#e34a33 108px,#eb5a3a 109px,#fdae61 110.5px,#fdfec3 112px,#e5f5ee 112.5px,#c1e4ef 113px,#75add1 114px,#436db0 115px,#313695 116.5px,#323a97 117.5px,#5386bd 119px,#c3e5f0 120.5px,#e7f6ec 121px,#feffc1 121.5px,#fdbd6f 123px,#fba25b 124.5px,#fdc173 125.5px,#ffffbf 127px,#e7f6eb 128px,#e6f5ed 129px,#ffffbf 130px,#fdaf62 131.5px,#f26a41 132.5px,#e95538 133.5px,#ef633e 134.5px,#fba05a 136px,#fff6b2 138px,#e8f6e9 139px,#d6eef5 139.5px,#9fcfe4 141px,#8ec2dc 142.5px,#a7d6e7 143.5px,#e0f3f7 144.5px,#fff5b0 145.5px,#fecb7d 146.5px,#fdb365 148px,#fecb7c 149px,#ffffbf 150.5px,#e5f5ee 151.5px,#e1f3f7 153px,#fffebd 154px,#fa9b58 155.5px,#f57547 156px,#e85538 157px,#ed5e3c 158px,#fa9957 159.5px,#fee394 161px,#fefec2 162px,#daf0f6 163.5px,#cbe9f2 165px,#e0f3f8 166px,#fff6b2 167.5px,#fdbe70 169px,#fa9a58 170.5px,#fdbb6d 172px,#fffab8 173.5px,#f0f9db 174px,#d8eff6 174.5px,#7cb3d4 176px,#578abf 177.5px,#70a9cf 179px,#dff2f8 181px,#ffffbf 182.5px,#feffc0 183.5px,#d2ecf4 185.5px,#80b7d6 187.5px,#70a8ce 188.5px,#7cb4d5 189.5px,#d0ebf4 191px,#fffab8 192px,#fdae61 193.5px,#f88a50 194.5px,#f88950 195px,#fca75e 196px,#fff8b5 198px,#ecf8e1 199.5px,#ffffbf 201.5px,#fdb76a 204px,#f99154 205.5px,#f98e52 206px,#fdac60 207px,#fffab7 208.5px,#ecf8e3 209px,#cae8f2 209.5px,#689fca 211px,#5588be 212px,#72abd0 213.5px,#c9e8f2 215px,#e7f6eb 215.5px,#fcfec5 216px,#fdbf71 217.5px,#fa9555 218.5px,#f88850 219.5px,#fec879 222.5px,#fdc778 224px,#fdb366 225px,#de402e 228px,#d02927 230px,#e0422f 231px,#fa9957 232.5px,#fed485 233.5px,#feffc0 235px,#f6fbd0 236.5px,#fffcba 237.5px,#fece7f 240px,#fed384 241px,#fff8b4 242.5px,#e4f4f1 243.5px,#c6e6f1 244px,#4d7fb9 246px,#394fa1 247px,#323b97 248px,#37489e 249px,#4a7bb7 250px,#d9f0f6 252px,#fff5b1 253px,#fdb76a 254.5px,#fca75e 255.5px,#fdbd6f 256.5px,#fffbb9 258px,#e5f5ef 259px,#d9f0f6 259.5px,#dff2f8 261px,#fdfec3 262.5px,#fedb8b 264px,#fdbc6e 265.5px,#fecf80 267px,#fdfec2 268.5px,#d6eef5 269.5px,#8dc1dc 271px,#7ab2d3 272px,#7db4d5 279.5px);-webkit-mask-image:linear-gradient(90deg,transparent,#000 50.0%);mask-image:linear-gradient(90deg,transparent,#000 50.0%)"></div>
<div class="a" style="left:1029px;top:0;width:32px;height:100%;background:linear-gradient(#f6fbd0 0px,#ffffbe 1px,#fdbb6d 6.5px,#fedb8b 8px,#fbfdc7 9.5px,#ddf2f7 10.5px,#a1d1e5 12px,#88bdda 13.5px,#92c5de 17.5px,#d9f0f6 19px,#fff6b1 20px,#fba25b 21.5px,#f88950 22px,#f67c4a 23px,#fca65d 25px,#fedd8d 27.5px,#fece7f 33.5px,#fee496 35.5px,#fbfec6 37.5px,#e0f3f8 39px,#93c6df 42px,#81b8d7 44px,#bae0ed 51.5px,#dbf1f7 53px,#fffdbc 54.5px,#fede8e 55.5px,#ef633e 57.5px,#ce2727 58.5px,#a50026 59.5px,#ac0726 65px,#ce2827 65.5px,#f7864f 66.5px,#fee192 67.5px,#fffab7 68px,#d6eef5 69px,#a5d4e6 70px,#74add1 72.5px,#323997 74.5px,#313695 75px,#343f99 80px,#6197c6 81px,#b9e0ed 82px,#e4f4f1 82.5px,#feffc1 83px,#fba15b 84.5px,#ed5d3c 85.5px,#d93429 87px,#df412f 88px,#f88b51 89.5px,#fecb7d 90.5px,#fff6b2 91.5px,#e2f4f4 93px,#ddf1f7 94.5px,#fffcba 96px,#fec87a 97.5px,#fdb96b 98.5px,#fed484 100px,#fffdbc 101.5px,#e2f4f5 103px,#def2f7 104.5px,#fafdc8 105.5px,#fff0a8 106px,#fdb769 107px,#f7824d 108px,#f67b49 108.5px,#f88c51 109.5px,#fdb96c 110.5px,#feffc1 112px,#e8f6e9 112.5px,#c7e7f1 113px,#4575b4 115px,#313796 116.5px,#313795 117.5px,#4e80ba 119px,#c0e3ef 120.5px,#e6f5ed 121px,#feffc1 121.5px,#fdb96b 123px,#fb9c59 124.5px,#fdbd6f 125.5px,#fffcbb 127px,#e8f6e9 128px,#e4f5f1 129px,#fff3ac 130.5px,#fa9756 132px,#ef623e 133px,#eb5b3b 133.5px,#f57245 135px,#fdb466 136.5px,#fdfec2 138.5px,#dff3f8 139.5px,#a4d3e6 141px,#8abfdb 142.5px,#99cbe1 143.5px,#cdeaf3 144.5px,#e9f6e8 145px,#fefec1 145.5px,#fdc173 147px,#fdb062 148px,#fdc375 149px,#fffbba 150.5px,#e6f5ec 151.5px,#dbf1f7 153px,#e6f5ee 153.5px,#fff9b6 154.5px,#fba25c 156px,#ed5e3c 157px,#df412f 158px,#e34a33 159px,#fa9756 160.5px,#fed888 161.5px,#feffc0 162.5px,#e2f4f5 163.5px,#cae8f2 165px,#dff2f8 166px,#fff7b2 167.5px,#fdbc6e 169px,#f99254 170.5px,#fdb264 172px,#fff7b2 173.5px,#d8eff6 174.5px,#5b90c2 176.5px,#4472b2 178px,#6ea6cd 179.5px,#ceeaf3 181px,#e7f6ec 181.5px,#fffebe 182.5px,#fffdbc 184px,#e2f4f5 185.5px,#88bdda 187.5px,#70a8ce 189px,#89beda 190px,#c5e6f0 191px,#e6f5ed 191.5px,#fdfec2 192px,#fdb164 193.5px,#f7844e 194.5px,#f67f4b 195px,#fdb164 196.5px,#fff4af 198px,#ecf8e2 199.5px,#eff9dd 200.5px,#feffc1 201.5px,#fdb366 204px,#f98f53 205px,#f7814c 206px,#f7864e 206.5px,#fdb568 207.5px,#fff0a8 208.5px,#f5fbd2 209px,#d8eff6 209.5px,#6ea6cd 211px,#5589be 212px,#6da5cd 213.5px,#e1f3f7 215.5px,#f5fbd1 216px,#fee191 217px,#fdae61 218px,#f7864f 219px,#f7814c 220px,#fdc577 222.5px,#fdc778 224px,#fdb366 225px,#f57647 226.5px,#d32c27 228.5px,#c41e27 230px,#d73027 231px,#f0643f 232px,#fdad60 233px,#fee495 234px,#fffebe 235px,#f5fbd2 236.5px,#fffebe 237.5px,#fed788 239.5px,#fecd7e 240.5px,#fee79a 242px,#fafdc8 243px,#e8f6ea 243.5px,#a8d6e8 244.5px,#4878b6 246px,#333e99 247px,#313695 247.5px,#313695 249.5px,#4575b4 250.5px,#bee3ef 252px,#e7f6ec 252.5px,#fffebd 253px,#fdb365 254.5px,#fa9555 255.5px,#fa9857 256px,#fdbe70 257px,#fdfec3 258.5px,#e1f3f6 259.5px,#dff3f8 261px,#fcfec4 262.5px,#fec87a 264.5px,#fdb467 266px,#fed989 267.5px,#fffbb9 268.5px,#ddf2f7 269.5px,#8dc1dc 271px,#73acd1 272px,#7cb4d5 279.5px);-webkit-mask-image:linear-gradient(90deg,transparent,#000 18.8%);mask-image:linear-gradient(90deg,transparent,#000 18.8%)"></div>
<div class="a" style="left:1035px;top:0;width:52px;height:100%;background:linear-gradient(#f6fbd0 0px,#ffffbe 1px,#fdbb6d 6.5px,#fedb8b 8px,#fbfec6 9.5px,#dff2f8 10.5px,#a3d3e6 12px,#8bc0db 13.5px,#8dc1dc 17.5px,#cfebf3 19px,#ebf7e4 19.5px,#fffdbc 20px,#fdad60 21.5px,#f7804c 22.5px,#f67b4a 23px,#fcaa5f 25.5px,#fed383 27.5px,#fecf80 34px,#fffcbb 37.5px,#ddf1f7 39.5px,#9dcee3 42px,#88bdda 44.5px,#b2dceb 51.5px,#e2f4f5 53.5px,#fbfdc7 54.5px,#fecf80 56px,#e65136 58px,#ab0626 59.5px,#a50026 60px,#a50026 65px,#e34932 66px,#f67d4a 66.5px,#fede8e 67.5px,#fff8b5 68px,#eff9dd 68.5px,#d6eef5 69px,#a6d5e7 70px,#79b1d3 72.5px,#4169ae 74px,#313695 75px,#313695 80px,#374a9f 80.5px,#679dc9 81.5px,#e3f4f3 83px,#fbfec6 83.5px,#feeba1 84px,#f88c51 85.5px,#eb5a3a 86.5px,#e24732 87.5px,#e95638 88.5px,#f7864e 89.5px,#fff6b1 91.5px,#def2f7 93px,#d8eff6 94.5px,#e7f6eb 95px,#f9fdcb 95.5px,#fdbb6d 97px,#fa9756 98px,#fdb467 99.5px,#ffffbf 101.5px,#e2f4f5 102.5px,#b9e0ed 104px,#b8e0ed 104.5px,#d9f0f6 105.5px,#fffbb9 106.5px,#fdad61 108px,#f98e52 109px,#fdb063 110.5px,#fff2ac 112px,#e2f4f5 113px,#98cae1 114px,#588bbf 115px,#3a52a3 116px,#313695 117px,#313795 118px,#436fb1 119px,#c0e3ef 120.5px,#ebf7e4 121px,#fff7b3 121.5px,#fdb96b 122.5px,#fa9b58 123px,#f8874f 123.5px,#f88850 124.5px,#fdb265 125.5px,#fff5af 127px,#e4f4f1 128.5px,#e0f3f8 129.5px,#fff8b4 131px,#fca45c 132.5px,#f46e44 133.5px,#f16740 134px,#f57245 135px,#fdaf62 136.5px,#feffc1 138.5px,#dbf1f7 139.5px,#98cae1 141px,#7bb3d4 142.5px,#8dc1dc 143.5px,#cae8f2 144.5px,#eaf7e6 145px,#fffcbb 145.5px,#feca7c 146.5px,#fca85e 147.5px,#fdb466 148.5px,#feffc0 150.5px,#e2f4f4 151.5px,#d0ebf3 152.5px,#dff3f8 153.5px,#fff3ac 155px,#fedf8f 155.5px,#f57547 157px,#df402e 158px,#d52e27 159px,#e04430 160px,#f7824d 161px,#fed182 162px,#fdfec3 163px,#dcf1f7 164px,#cae8f2 165px,#d9f0f6 166px,#e6f5ed 166.5px,#fffbba 167.5px,#fcaa5f 169.5px,#f7844e 171px,#fdb366 172.5px,#feffc0 174px,#e7f6ec 174.5px,#c3e5f0 175px,#5c90c2 176.5px,#4778b5 177px,#3e5ea9 178px,#3f62aa 178.5px,#568abf 179.5px,#def2f7 181.5px,#ffffbe 182.5px,#fff2ac 183.5px,#f9fdc9 185px,#ddf2f7 186px,#95c8df 187.5px,#77afd2 189px,#8cc0dc 190px,#e3f4f2 191.5px,#fafdc9 192px,#feeea5 192.5px,#fdb567 193.5px,#f57346 195px,#f57346 195.5px,#fa9756 196.5px,#fffbb9 198.5px,#e7f6ea 200px,#edf8df 201px,#fffebe 202px,#fca65d 204.5px,#f67c4a 206px,#f88a50 207px,#fca45c 207.5px,#fffcba 209px,#e9f7e7 209.5px,#c6e6f1 210px,#69a0ca 211.5px,#5c91c2 212.5px,#81b7d6 214px,#daf0f6 215.5px,#f1fad9 216px,#fff9b5 216.5px,#fdb063 218px,#f7814c 219px,#f57848 220.5px,#fdbb6e 222.5px,#fec779 224px,#fcaa5f 225.5px,#d62f27 228.5px,#c01a27 230px,#cb2427 231px,#e54e35 232px,#fed788 234px,#f9fdca 235.5px,#f2fad6 237px,#fffdbc 238px,#fdc778 240.5px,#feda8a 242px,#fff8b5 243px,#def2f8 244px,#92c5de 245px,#4d7fb9 246px,#323a97 247px,#313695 247.5px,#313695 250px,#4a7bb7 251px,#a0d0e4 252px,#d0ebf4 252.5px,#f3fad5 253px,#fff1aa 253.5px,#fdb769 254.5px,#f88950 255.5px,#f7844e 256px,#fba25c 257px,#fff2ac 258.5px,#f9fdca 259px,#dff2f8 260px,#e3f4f2 261.5px,#fff9b6 263px,#fdb96b 265px,#fca95e 266px,#fdc476 267.5px,#ffffbf 269px,#d3edf4 270px,#81b8d7 271.5px,#6aa1cb 272.5px,#7ab1d3 279.5px);-webkit-mask-image:linear-gradient(90deg,transparent,#000 50.0%);mask-image:linear-gradient(90deg,transparent,#000 50.0%)"></div>
<div class="a" style="left:1061px;top:0;width:52px;height:100%;background:linear-gradient(#f6fbd0 0px,#ffffbe 1px,#fdbb6d 6.5px,#feda8b 8px,#fcfec5 9.5px,#e0f3f8 10.5px,#a5d4e7 12px,#90c4dd 13px,#87bcd9 16.5px,#95c7df 18px,#e5f5ef 19.5px,#fafdc7 20px,#fdb669 21.5px,#f7854e 22.5px,#f67c4a 23px,#f88950 24.5px,#fecf80 28px,#fed182 34.5px,#fdfec2 38px,#d7eff6 40px,#9dcee3 42.5px,#8ec2dc 44.5px,#b4deec 51.5px,#e1f4f6 53.5px,#f9fdca 54.5px,#fed585 56px,#f67a49 57.5px,#dc3b2c 58.5px,#a50026 60px,#a50026 65px,#ba1426 65.5px,#f47045 66.5px,#fed888 67.5px,#fff5b1 68px,#f0f9da 68.5px,#d8eff6 69px,#a6d5e7 70px,#7cb3d5 72.5px,#4777b5 74px,#34409a 75px,#313695 75.5px,#313695 80.5px,#3950a2 81px,#6aa1cb 82px,#e4f5f1 83.5px,#fcfec4 84px,#feeba0 84.5px,#f88c51 86px,#eb5b3b 87px,#e24732 88px,#ea5839 89px,#f99053 90px,#feefa6 91.5px,#fcfec5 92px,#ddf1f7 93px,#cae8f2 94px,#e2f4f5 95px,#fff6b2 96px,#fba25c 97.5px,#f7864e 98.5px,#fdb265 100px,#fff7b3 101.5px,#e2f4f4 102.5px,#b4ddec 103.5px,#9fcfe4 104.5px,#afdbea 105.5px,#e4f4f1 106.5px,#f9fdca 107px,#fdb86a 108.5px,#f99053 109.5px,#fa9857 110.5px,#fdac60 111px,#fff4ae 112.5px,#d7eef5 113.5px,#addaea 114px,#4470b2 115.5px,#323896 116.5px,#313695 117px,#313695 118px,#35429b 118.5px,#4064ac 119px,#5a8ec1 119.5px,#b5deec 120.5px,#e4f5f0 121px,#fffdbc 121.5px,#fba35c 123px,#f88c51 123.5px,#f8874f 124.5px,#fcaa5f 125.5px,#fffdbc 127.5px,#dff2f8 129px,#dcf1f7 130px,#e6f5ee 130.5px,#fff9b5 131.5px,#fca45d 133px,#f47044 134px,#f26941 134.5px,#f57848 135.5px,#fdba6c 137px,#fffcba 138.5px,#ddf2f7 139.5px,#80b7d6 141.5px,#71aacf 143px,#81b7d7 143.5px,#c5e6f0 144.5px,#eaf7e6 145px,#fffab7 145.5px,#fdc173 146.5px,#fb9f5a 147.5px,#fdb164 148.5px,#fdfec3 150.5px,#dff3f8 151.5px,#cae8f2 152.5px,#e5f5ef 154px,#fffbb8 155px,#fecd7e 156px,#f7854e 157px,#d93329 158.5px,#cd2727 159.5px,#df402f 160.5px,#f88850 161.5px,#fedc8c 162.5px,#f5fbd1 163.5px,#e5f5f0 164px,#cbe9f2 165px,#e2f4f4 166.5px,#fdfec2 167.5px,#fff1a9 168px,#fdae61 169.5px,#f67b4a 171px,#f8874f 172px,#fb9d59 172.5px,#fff1aa 174px,#f5fbd1 174.5px,#daf0f6 175px,#88bdda 176px,#4d7fb9 177px,#3c5aa7 178px,#3b57a5 178.5px,#4777b5 179.5px,#81b7d7 180.5px,#d0ebf4 181.5px,#fdfec2 182.5px,#feefa6 183.5px,#fffdbc 185px,#e6f5ed 186px,#d0ebf4 186.5px,#8ec1dc 188px,#7eb5d5 189px,#90c4dd 190px,#e2f4f5 191.5px,#fff1aa 192.5px,#fdba6c 193.5px,#f7804c 194.5px,#f26941 195.5px,#f46f44 196px,#fb9e5a 197px,#fff2ab 198.5px,#e6f5ed 200px,#e7f6eb 201px,#fffbb9 202.5px,#fdb265 204.5px,#f88a51 205.5px,#f67c4a 206.5px,#f7844e 207px,#fdb769 208px,#fff1aa 209px,#f5fbd2 209.5px,#daf0f6 210px,#77afd2 211.5px,#6399c6 212.5px,#80b7d6 214px,#d5eef5 215.5px,#fffcba 216.5px,#fdb265 218px,#f47044 219.5px,#f46c43 220.5px,#fdbe70 223px,#fdc678 224px,#fdb063 225.5px,#da372a 228.5px,#c01a27 230.5px,#d12a27 231.5px,#ec5d3c 232.5px,#fee496 234.5px,#fcfec4 235.5px,#edf8e0 237px,#fff9b6 238.5px,#fecf80 240px,#fdbe70 241px,#fecb7c 242px,#fffebe 243.5px,#ebf7e3 244px,#cdeaf3 244.5px,#598dc0 246px,#35429b 247px,#313695 247.5px,#323a97 250.5px,#3f64ab 251px,#5d91c3 251.5px,#bbe1ee 252.5px,#e7f6eb 253px,#fffbb9 253.5px,#fba25b 255px,#f67e4b 256px,#f67f4b 256.5px,#fdab60 257.5px,#fffbb9 259px,#e4f4f1 260px,#daf0f6 260.5px,#e0f3f8 261.5px,#ffffbf 263px,#fdbb6d 265px,#fba05b 266.5px,#fec879 268px,#fff2ab 269px,#e5f5ef 270px,#76aed2 272px,#6298c6 273px,#77afd2 279.5px);-webkit-mask-image:linear-gradient(90deg,transparent,#000 50.0%);mask-image:linear-gradient(90deg,transparent,#000 50.0%)"></div>
<div class="a" style="left:1087px;top:0;width:52px;height:100%;background:linear-gradient(#f6fbd0 0px,#ffffbe 1px,#fdbb6d 6.5px,#feda8b 8px,#fcfec5 9.5px,#e0f3f8 10.5px,#a5d4e7 12px,#90c4dd 13px,#84bad8 16.5px,#8fc3dd 18px,#def2f7 19.5px,#fff4af 20.5px,#fca45c 22px,#f88b51 22.5px,#f67c4a 23.5px,#fecf80 28.5px,#fecd7f 34px,#feda8a 35.5px,#fffdbc 38px,#def2f7 40px,#a4d3e6 42.5px,#93c6df 44.5px,#b7dfec 51.5px,#e1f4f5 53.5px,#f8fccc 54.5px,#fed888 56px,#f7804c 57.5px,#cd2727 59px,#a50026 60px,#ab0626 65.5px,#cf2927 66px,#f99053 67px,#feea9f 68px,#f9fdc9 68.5px,#e1f3f6 69px,#a0d0e4 70px,#7cb3d4 71px,#679dc9 73px,#313695 76px,#34409a 81.5px,#6095c5 82.5px,#b7dfec 83.5px,#e2f4f4 84px,#fcfec4 84.5px,#fee99e 85px,#fca75e 86px,#f0653f 87px,#e04330 88.5px,#ec5d3b 89.5px,#fb9e5a 90.5px,#fff7b4 92px,#e4f5f0 93px,#d5eef5 93.5px,#cbe9f2 94.5px,#d7eff5 95px,#e8f6e9 95.5px,#fafdc8 96px,#fdb568 97.5px,#f7824d 98.5px,#f67c4a 99px,#fcaa5f 100.5px,#fff3ad 102px,#e6f5ed 103px,#d0ebf3 103.5px,#a7d6e7 105px,#b7dfec 106px,#e4f5f0 107px,#fff3ad 108px,#fdc375 109px,#f98e52 110.5px,#f99154 111px,#fdb86b 112px,#feefa7 113px,#f6fbd0 113.5px,#d8eff6 114px,#a9d8e8 114.5px,#5689be 115.5px,#35419b 116.5px,#313695 117px,#313695 118.5px,#4778b5 119.5px,#cbe9f2 121px,#f0f9da 121.5px,#fff3ad 122px,#fdb96b 123px,#fba05a 123.5px,#f99053 124px,#fa9756 125px,#fdbd6f 126px,#fff9b6 127.5px,#e1f3f7 129px,#e3f4f3 130.5px,#fdfec2 131.5px,#fed787 132.5px,#fa9857 133.5px,#f46d43 134.5px,#f26941 135px,#f67a49 136px,#fca75e 137px,#fcfec4 139px,#d3ecf4 140px,#8abeda 141.5px,#6fa7ce 143px,#8ec2dc 144px,#daf0f6 145px,#f7fcce 145.5px,#fdb365 147px,#fa9957 148px,#fdb467 149px,#fff6b2 150.5px,#e7f6ec 151.5px,#d7eff6 152px,#cae8f2 153px,#def2f7 154px,#fafdc9 155px,#fee090 156px,#f57647 157.5px,#d32c27 159px,#c92327 160px,#d22b27 160.5px,#f0653f 161.5px,#fdbf71 162.5px,#fffbb9 163.5px,#e1f3f7 164.5px,#d0ebf3 165.5px,#e1f3f7 166.5px,#fff6b2 168px,#fb9f5a 170px,#f57446 171.5px,#f7864e 172.5px,#fb9f5a 173px,#fff5b0 174.5px,#d2ecf4 175.5px,#6399c6 177px,#4c7db8 177.5px,#3e5ea9 178.5px,#3e5ea9 179px,#5285bc 180px,#e1f3f6 182px,#fffab8 183px,#feeea6 184px,#fbfdc6 185.5px,#def2f7 186.5px,#96c8e0 188px,#7fb6d6 189px,#88bdda 190px,#d0ebf3 191.5px,#eaf7e5 192px,#fffebe 192.5px,#fdb063 194px,#f67a49 195px,#f26a41 196px,#f57346 196.5px,#fdab5f 197.5px,#fff9b7 199px,#e5f5f0 200.5px,#eaf7e6 201.5px,#fff5b1 203px,#fdac60 205px,#f7834d 206.5px,#f7854e 207px,#fdac60 208px,#fffdbc 209.5px,#e9f7e7 210px,#c9e7f1 210.5px,#72abd0 212px,#689fca 213px,#7bb3d4 214px,#c8e7f1 215.5px,#e5f5ef 216px,#f9fdca 216.5px,#fdbf71 218px,#f57647 219.5px,#f47044 221px,#fdb568 223px,#fdc274 224.5px,#fca75e 226px,#f36a42 227.5px,#d83128 229px,#c11b27 230.5px,#c82227 231.5px,#e34a33 232.5px,#fed889 234.5px,#fffdbd 235.5px,#edf8e1 236.5px,#ecf7e3 237.5px,#fdfec4 238.5px,#fdc678 240.5px,#fdba6c 241.5px,#fecb7c 242.5px,#fcfec5 244px,#e6f5ed 244.5px,#c3e5f0 245px,#5082bb 246.5px,#323a97 247.5px,#313695 248px,#313695 250.5px,#3a53a3 251px,#4d7fb9 251.5px,#a5d4e6 252.5px,#d6eef5 253px,#f6fbd0 253.5px,#feeea5 254px,#fdb366 255px,#f8874f 256px,#f7834d 256.5px,#fca45c 257.5px,#fff4ae 259px,#e8f6e9 260px,#def2f7 260.5px,#e4f5f1 262px,#fff7b3 263.5px,#fdb366 265.5px,#fba05b 266.5px,#fdbe70 268px,#fffcbb 269.5px,#d5edf5 270.5px,#7cb3d4 272px,#6095c5 273px,#74add1 279.5px);-webkit-mask-image:linear-gradient(90deg,transparent,#000 50.0%);mask-image:linear-gradient(90deg,transparent,#000 50.0%)"></div>
<div class="a" style="left:1113px;top:0;width:52px;height:100%;background:linear-gradient(#f6fbd0 0px,#ffffbe 1px,#fdbb6d 6.5px,#feda8b 8px,#fcfec5 9.5px,#e0f3f8 10.5px,#a5d4e7 12px,#90c4dd 13px,#81b7d6 17px,#8abfdb 18px,#d4edf5 19.5px,#fffbb9 20.5px,#fdae61 22px,#f67b4a 23.5px,#fecb7d 28.5px,#fed788 35.5px,#fcfec4 38.5px,#d7eff6 40.5px,#a3d3e6 43px,#9acce2 45.5px,#bae0ed 51.5px,#e2f4f5 53.5px,#fffab7 55px,#fedb8b 56px,#f0653f 58px,#bc1626 59.5px,#a50026 60.5px,#a50026 65.5px,#bf1927 66px,#f57647 67px,#fedd8d 68px,#fffab7 68.5px,#eaf7e6 69px,#c7e7f1 69.5px,#82b8d7 70.5px,#5d92c3 71.5px,#4574b3 74px,#313695 76px,#323a97 82px,#6095c5 83px,#bee2ee 84px,#e8f6e9 84.5px,#fffab7 85px,#fdb86a 86px,#f98f53 86.5px,#e75236 87.5px,#dd3c2c 88.5px,#df402f 89px,#f26841 90px,#fdb265 91px,#feeea5 92px,#fcfec4 92.5px,#ddf1f7 93.5px,#cae8f2 94.5px,#e0f3f8 95.5px,#fffbb9 96.5px,#fcaa5f 98px,#f67e4b 99px,#f7854e 100px,#fdb164 101px,#fff7b3 102.5px,#e3f4f2 103.5px,#bae1ed 104.5px,#acdae9 105.5px,#d5edf5 107px,#fbfdc6 108px,#fdc475 109.5px,#fb9f5a 110.5px,#fb9c59 111.5px,#fdae61 112px,#fff8b4 113.5px,#edf8e0 114px,#c8e7f1 114.5px,#4b7cb7 116px,#323896 117px,#313695 118.5px,#333d99 119px,#5588be 120px,#afdbea 121px,#e0f3f8 121.5px,#fcfec4 122px,#fdad61 123.5px,#fa9756 124px,#f99254 125px,#fdb467 126px,#fee395 127px,#fafdc8 128px,#e3f4f3 129px,#e1f3f6 130.5px,#fcfec4 131.5px,#feefa6 132px,#f99354 133.5px,#f0643f 134.5px,#ee603d 135px,#f47044 136px,#fdb669 137.5px,#fffab8 139px,#dff2f8 140px,#81b7d7 142px,#71aacf 143.5px,#80b7d6 144px,#c4e5f0 145px,#e9f7e7 145.5px,#fffab7 146px,#fdbe70 147px,#f99455 148px,#fa9555 148.5px,#fdb96b 149.5px,#fffdbc 151px,#e1f3f6 152px,#cae8f2 153px,#e4f4f1 154.5px,#fffdbc 155.5px,#fed383 156.5px,#f88c51 157.5px,#d83228 159px,#c51e27 160px,#d12b27 161px,#f46c43 162px,#feca7c 163px,#fcfec4 164px,#ddf1f7 165px,#e0f3f8 166.5px,#fffcba 168px,#fca95f 170px,#f67d4b 171px,#f46e43 172px,#f57446 172.5px,#fba25b 173.5px,#fff9b6 175px,#edf8e1 175.5px,#cbe9f2 176px,#6095c5 177.5px,#3f63ab 179px,#4167ad 179.5px,#5f94c4 180.5px,#cdeaf3 182px,#fcfec4 183px,#fff5b0 183.5px,#fff4ae 185px,#f5fbd2 186px,#d1ebf4 187px,#8ec2dc 188.5px,#7eb5d5 189.5px,#8fc3dd 190.5px,#ddf2f7 192px,#fff6b2 193px,#fca55d 194.5px,#f36b42 196px,#f36b42 196.5px,#f99455 197.5px,#fed687 198.5px,#fdfec2 199.5px,#e6f5ec 200.5px,#e4f5f0 201px,#fffdbc 203px,#fdba6c 205px,#f88c51 206.5px,#f99053 207.5px,#fca35c 208px,#fff2ab 209.5px,#ddf2f7 210.5px,#80b7d6 212px,#6ca3cc 213px,#89beda 214.5px,#dbf1f7 216px,#fffab7 217px,#fdb164 218.5px,#f47044 220px,#f36c42 221px,#fdb86a 223.5px,#fdbe70 225px,#fb9e59 226.5px,#d42d27 229.5px,#c01a27 231px,#cc2627 232px,#e95638 233px,#fca55d 234px,#fee598 235px,#f8fccc 236px,#e8f6ea 237px,#ebf7e3 238px,#fffdbd 239px,#fece7f 240.5px,#fdb668 242px,#fecc7d 243px,#f7fcce 244.5px,#e1f3f7 245px,#8fc2dd 246px,#4778b5 247px,#313695 248px,#313695 250.5px,#36449c 251px,#426db0 251.5px,#bfe3ef 253px,#e9f6e8 253.5px,#fffbb8 254px,#fca85e 255.5px,#f88950 256.5px,#f88d52 257px,#fdb86b 258px,#feffc1 259.5px,#e2f4f5 260.5px,#e1f3f6 262px,#fffdbc 263.5px,#fdba6d 265.5px,#fba25c 266.5px,#fca75e 267.5px,#fec97a 268.5px,#fff3ad 269.5px,#e2f4f4 270.5px,#84b9d8 272px,#598dc1 273.5px,#71aacf 279.5px);-webkit-mask-image:linear-gradient(90deg,transparent,#000 50.0%);mask-image:linear-gradient(90deg,transparent,#000 50.0%)"></div>
<div class="a" style="left:1139px;top:0;width:51px;height:100%;background:linear-gradient(#f6fbd0 0px,#ffffbe 1px,#fdbb6d 6.5px,#feda8b 8px,#fcfec5 9.5px,#e0f3f8 10.5px,#a5d4e7 12px,#90c4dd 13px,#7eb5d5 17px,#86bcd9 18px,#cdeaf3 19.5px,#e9f6e8 20px,#feffc1 20.5px,#fdb568 22px,#f67c4a 23.5px,#f8864f 25px,#fecc7d 29px,#fed686 35.5px,#ffffbf 38.5px,#ddf1f7 40.5px,#a8d7e8 43px,#9ecfe3 45.5px,#bce2ee 51.5px,#e2f4f5 53.5px,#fffab8 55px,#fedd8d 56px,#f26a41 58px,#bf1927 59.5px,#a50026 60.5px,#a50026 65.5px,#b40e26 66px,#d83128 66.5px,#fa9b58 67.5px,#fff0a9 68.5px,#f2fad7 69px,#d1ecf4 69.5px,#82b8d7 70.5px,#5183bb 71.5px,#313695 76px,#313695 82px,#36459c 82.5px,#4676b4 83px,#a1d1e5 84px,#d5edf5 84.5px,#f7fccd 85px,#feea9f 85.5px,#fa9a58 86.5px,#e85337 87.5px,#da372a 88.5px,#e14631 89.5px,#fca45c 91px,#fffbb8 92.5px,#e3f4f3 93.5px,#cce9f2 95px,#e8f6e9 96px,#fafdc8 96.5px,#fdb86b 98px,#f7844e 99px,#f67b4a 99.5px,#fca45c 101px,#fcfec4 103px,#d7eef5 104px,#acdae9 105.5px,#b8dfed 106.5px,#e0f3f7 107.5px,#fffcba 108.5px,#fdc072 110px,#fba35c 111px,#fba05a 111.5px,#fdbb6d 112.5px,#feeda3 113.5px,#fafdc9 114px,#dff3f8 114.5px,#5c90c2 116px,#36469d 117px,#313695 117.5px,#313695 119px,#4575b4 120px,#cbe8f2 121.5px,#f0f9da 122px,#fff2ac 122.5px,#fdb86a 123.5px,#f98f53 124.5px,#f98f53 125px,#fdae61 126px,#feffc1 128px,#e4f5f0 129px,#e0f3f8 130.5px,#fbfdc6 131.5px,#feefa7 132px,#f98e52 133.5px,#ed5d3c 134.5px,#ea593a 135px,#f67949 136.5px,#fdaf62 137.5px,#fff5b0 139px,#e5f5ef 140px,#86bcd9 142px,#6fa8ce 143.5px,#90c4dd 144.5px,#def2f7 145.5px,#fafdc9 146px,#fdac60 147.5px,#f98e52 148.5px,#fdab60 149.5px,#fff4ae 151px,#e7f6ec 152px,#d7eff5 152.5px,#cae8f2 153.5px,#dff2f8 154.5px,#fafdc9 155.5px,#fee191 156.5px,#f57848 158px,#dc3b2c 159px,#c01a27 160.5px,#d62f27 161.5px,#e75136 162px,#fdb365 163px,#fedd8d 163.5px,#fff7b2 164px,#e4f5f1 165px,#daf0f6 165.5px,#e0f3f8 166.5px,#ffffbf 168px,#fdb164 170px,#f7814c 171px,#f36a42 172px,#f57647 173px,#fdac60 174px,#fdfec3 175.5px,#e4f4f1 176px,#598dc1 178px,#4167ad 179.5px,#4472b3 180px,#6fa7ce 181px,#e2f4f5 182.5px,#fffab7 183.5px,#feeea6 184.5px,#fafdc8 186px,#dbf1f7 187px,#94c7df 188.5px,#7fb5d6 189.5px,#89beda 190.5px,#cfebf3 192px,#e9f7e7 192.5px,#feffc1 193px,#fdb567 194.5px,#f67e4b 195.5px,#f26941 196.5px,#f47044 197px,#fca55d 198px,#fff9b6 199.5px,#e9f7e7 200.5px,#e4f5f0 201px,#eaf7e5 202px,#fff6b1 203.5px,#fdb265 205.5px,#f98e52 207px,#f99053 207.5px,#fdb668 208.5px,#feffc0 210px,#e8f6ea 210.5px,#c9e8f1 211px,#79b1d3 212.5px,#70a8cf 213.5px,#85bbd9 214.5px,#d1ecf4 216px,#eaf7e6 216.5px,#fefec2 217px,#fb9f5a 219px,#f36b42 220.5px,#f47045 221.5px,#fdbb6d 224px,#fdbe70 225px,#fca45c 226.5px,#d93429 229.5px,#c01a27 231.5px,#d42d27 232.5px,#f26841 233.5px,#fedc8c 235px,#fcfec4 236px,#e7f6eb 237px,#e7f6eb 238px,#fff7b2 239.5px,#fdc375 241px,#fdb164 242px,#fdbf71 243px,#fffab8 244.5px,#d0ebf4 245.5px,#598dc0 247px,#35449c 248px,#313695 248.5px,#333b98 251px,#3e60aa 251.5px,#7eb5d6 252.5px,#def2f7 253.5px,#fafdc9 254px,#feeca2 254.5px,#fdb467 255.5px,#f98f53 256.5px,#f98f53 257px,#fdb366 258px,#fffbb9 259.5px,#e5f5ef 260.5px,#def2f8 262px,#fcfec4 263.5px,#fdc173 265.5px,#fba05a 267px,#fdc173 268.5px,#feffc1 270px,#e9f7e7 270.5px,#cce9f2 271px,#72aad0 272.5px,#588bc0 273.5px,#6fa7ce 279.5px);-webkit-mask-image:linear-gradient(90deg,transparent,#000 51.0%);mask-image:linear-gradient(90deg,transparent,#000 51.0%)"></div>
<div class="a" style="left:1165px;top:0;width:26px;height:100%;background:linear-gradient(#f6fbd0 0px,#ffffbe 1px,#fdbb6d 6.5px,#feda8b 8px,#fcfec5 9.5px,#e0f3f8 10.5px,#a5d4e7 12px,#90c4dd 13px,#7eb5d5 17px,#86bcd9 18px,#cdeaf3 19.5px,#e9f6e8 20px,#feffc1 20.5px,#fdb568 22px,#f67c4a 23.5px,#f7864f 25px,#fecc7d 29px,#fed686 35.5px,#ffffbf 38.5px,#ddf2f7 40.5px,#a8d7e8 43px,#9ecfe3 45.5px,#bce2ee 51.5px,#e2f4f5 53.5px,#fffab8 55px,#fedd8d 56px,#f26a41 58px,#d62f27 59px,#ab0626 60px,#a50026 60.5px,#a50026 65.5px,#b40e26 66px,#d73127 66.5px,#fa9a58 67.5px,#fff0a8 68.5px,#f2fad7 69px,#d2ecf4 69.5px,#82b8d7 70.5px,#5082bb 71.5px,#313695 76px,#313695 82px,#35449c 82.5px,#4574b4 83px,#a0d0e4 84px,#d4edf5 84.5px,#f7fcce 85px,#feea9f 85.5px,#fa9b58 86.5px,#e85337 87.5px,#da372a 88.5px,#e14631 89.5px,#fca45c 91px,#fffab8 92.5px,#e3f4f3 93.5px,#cce9f2 95px,#e8f6e9 96px,#fafdc9 96.5px,#fdb96b 98px,#f7854e 99px,#f67b4a 99.5px,#fca45c 101px,#fdfec4 103px,#d7eff5 104px,#acdae9 105.5px,#b8dfed 106.5px,#e0f3f8 107.5px,#fffcbb 108.5px,#fdc072 110px,#fba35c 111px,#fba05a 111.5px,#fdba6d 112.5px,#feeca3 113.5px,#fafdc8 114px,#e0f3f8 114.5px,#5c91c2 116px,#36469d 117px,#313695 117.5px,#313695 119px,#4574b4 120px,#cae8f2 121.5px,#f0f9db 122px,#fff3ac 122.5px,#fdb86a 123.5px,#fb9e5a 124px,#f99053 124.5px,#fa9957 125.5px,#fdc375 126.5px,#feffc1 128px,#e4f5f0 129px,#e0f3f8 130.5px,#fbfdc6 131.5px,#feefa7 132px,#f98e52 133.5px,#f46f44 134px,#ea583a 135px,#f16740 136px,#fdae61 137.5px,#fff5af 139px,#e5f5ef 140px,#87bcd9 142px,#6fa8ce 143.5px,#90c3dd 144.5px,#ddf2f7 145.5px,#f9fdc9 146px,#fdac60 147.5px,#f98e52 148.5px,#fdab5f 149.5px,#fff4ae 151px,#e7f6eb 152px,#d7eff5 152.5px,#cae8f2 153.5px,#def2f8 154.5px,#f9fdca 155.5px,#fee191 156.5px,#f67848 158px,#d02927 159.5px,#c01a27 160.5px,#d62f27 161.5px,#e65036 162px,#fdb265 163px,#fedc8c 163.5px,#fff6b2 164px,#e4f5f0 165px,#daf0f6 165.5px,#e0f3f8 166.5px,#ffffc0 168px,#fdb164 170px,#f7814c 171px,#f36a42 172px,#f57647 173px,#fdab60 174px,#fdfec2 175.5px,#e4f5f0 176px,#bee2ee 176.5px,#5a8ec1 178px,#4167ad 179.5px,#4472b2 180px,#6fa7ce 181px,#e1f3f6 182.5px,#fffab7 183.5px,#feeea6 184.5px,#fafdc8 186px,#dbf1f7 187px,#95c7df 188.5px,#7fb5d6 189.5px,#88bdda 190.5px,#ceeaf3 192px,#e9f6e8 192.5px,#fdfec2 193px,#fdb568 194.5px,#f67f4b 195.5px,#f26941 196.5px,#f46f44 197px,#fca55d 198px,#fff9b5 199.5px,#e9f7e7 200.5px,#e4f5f0 201px,#eaf7e6 202px,#fff6b2 203.5px,#fdb265 205.5px,#f98e52 207px,#f99053 207.5px,#fdb568 208.5px,#ffffc0 210px,#e8f6e9 210.5px,#c9e8f2 211px,#79b1d3 212.5px,#70a8cf 213.5px,#85bbd9 214.5px,#d1ecf4 216px,#eaf7e6 216.5px,#fdfec2 217px,#fb9f5a 219px,#f36b42 220.5px,#f47044 221.5px,#fdbb6d 224px,#fdbe70 225px,#fca45c 226.5px,#d93429 229.5px,#c01a27 231.5px,#d32d27 232.5px,#f16841 233.5px,#fedc8c 235px,#fcfec4 236px,#e7f6eb 237px,#e7f6ec 238px,#fff7b3 239.5px,#fdc375 241px,#fdb164 242px,#fdbf71 243px,#fffab7 244.5px,#d1ecf4 245.5px,#5a8dc1 247px,#36449c 248px,#313695 248.5px,#333b97 251px,#3e5fa9 251.5px,#568abf 252px,#aedaea 253px,#ddf2f7 253.5px,#f9fdca 254px,#feeca2 254.5px,#fdb567 255.5px,#f99053 256.5px,#f98f53 257px,#fdb366 258px,#fffbb9 259.5px,#e5f5ef 260.5px,#def2f8 262px,#fcfec5 263.5px,#fdc173 265.5px,#fba05a 267px,#fdc072 268.5px,#feffc1 270px,#e9f7e7 270.5px,#cce9f2 271px,#72aad0 272.5px,#588bc0 273.5px,#6fa7ce 279.5px);-webkit-mask-image:linear-gradient(90deg,transparent,#000 96.2%);mask-image:linear-gradient(90deg,transparent,#000 96.2%)"></div>
</div></div>
<div class="a" style="left:1411.9px;top:666.4px;width:1.25px;height:280px;background:#000"></div>
<svg style="left:0;top:0" width="1911" height="946" viewBox="0 0 1911 946">
<path d="M417.0 656.3 V666.6 M431.3 662.2 V666.6 M445.5 662.2 V666.6 M459.8 662.2 V666.6 M474.0 662.2 V666.6 M488.3 659 V666.6 M502.6 662.2 V666.6 M516.8 662.2 V666.6 M531.1 662.2 V666.6 M545.3 662.2 V666.6 M559.6 656.3 V666.6 M573.9 662.2 V666.6 M588.1 662.2 V666.6 M602.4 662.2 V666.6 M616.6 662.2 V666.6 M630.9 659 V666.6 M645.2 662.2 V666.6 M659.4 662.2 V666.6 M673.7 662.2 V666.6 M687.9 662.2 V666.6 M702.2 656.3 V666.6 M716.5 662.2 V666.6 M730.7 662.2 V666.6 M745.0 662.2 V666.6 M759.2 662.2 V666.6 M773.5 659 V666.6 M787.8 662.2 V666.6 M802.0 662.2 V666.6 M816.3 662.2 V666.6 M830.5 662.2 V666.6 M844.8 656.3 V666.6 M859.1 662.2 V666.6 M873.3 662.2 V666.6 M887.6 662.2 V666.6 M901.8 662.2 V666.6 M916.1 659 V666.6 M930.4 662.2 V666.6 M944.6 662.2 V666.6 M958.9 662.2 V666.6 M973.1 662.2 V666.6 M987.4 656.3 V666.6 M1001.7 662.2 V666.6 M1015.9 662.2 V666.6 M1030.2 662.2 V666.6 M1044.4 662.2 V666.6 M1058.7 659 V666.6 M1073.0 662.2 V666.6 M1087.2 662.2 V666.6 M1101.5 662.2 V666.6 M1115.7 662.2 V666.6 M1130.0 656.3 V666.6 M1144.3 662.2 V666.6 M1158.5 662.2 V666.6 M1172.8 662.2 V666.6 M1187.0 662.2 V666.6 M1201.3 659 V666.6 M1215.6 662.2 V666.6 M1229.8 662.2 V666.6 M1244.1 662.2 V666.6 M1258.3 662.2 V666.6 M1272.6 656.3 V666.6 M1286.9 662.2 V666.6 M1301.1 662.2 V666.6 M1315.4 662.2 V666.6 M1329.6 662.2 V666.6 M1343.9 659 V666.6 M1358.2 662.2 V666.6 M1372.4 662.2 V666.6 M1386.7 662.2 V666.6 M1400.9 662.2 V666.6 M1415.2 656.3 V666.6 M1429.5 662.2 V666.6 M1443.7 662.2 V666.6 M1458.0 662.2 V666.6 M1472.2 662.2 V666.6 M1486.5 659 V666.6 M1500.8 662.2 V666.6 M1515.0 662.2 V666.6 M1529.3 662.2 V666.6 M1543.5 662.2 V666.6 M1557.8 656.3 V666.6 M1572.1 662.2 V666.6 M1586.3 662.2 V666.6 M1600.6 662.2 V666.6 M411 676.5 H416 M411 686.7 H416 M411 696.9 H416 M411 707.1 H416 M411 717.3 H416 M411 727.5 H416 M411 737.7 H416 M411 747.9 H416 M411 758.1 H416 M404.5 768.3 H416 M411 778.5 H416 M411 788.7 H416 M411 798.9 H416 M411 809.1 H416 M411 819.3 H416 M411 829.5 H416 M411 839.7 H416 M411 849.9 H416 M411 860.1 H416 M404.5 870.3 H416 M411 880.5 H416 M411 890.7 H416 M411 900.9 H416 M411 911.1 H416 M411 921.3 H416 M411 931.5 H416 M411 941.7 H416 M1620 666.4 H1630.4 M1625.5 680.4 H1630.4 M1625.5 694.5 H1630.4 M1625.5 708.5 H1630.4 M1625.5 722.5 H1630.4 M1622.5 736.5 H1630.4 M1625.5 750.6 H1630.4 M1625.5 764.6 H1630.4 M1625.5 778.6 H1630.4 M1625.5 792.7 H1630.4 M1620 806.7 H1630.4 M1625.5 820.7 H1630.4 M1625.5 834.8 H1630.4 M1625.5 848.8 H1630.4 M1625.5 862.8 H1630.4 M1622.5 876.8 H1630.4 M1625.5 890.9 H1630.4 M1625.5 904.9 H1630.4 M1625.5 918.9 H1630.4 M1625.5 933.0 H1630.4 M1642.8 662.2 V666.6 M1655.7 662.2 V666.6 M1668.6 662.2 V666.6 M1681.5 662.2 V666.6 M1694.4 656.3 V666.6 M1707.3 662.2 V666.6 M1720.2 662.2 V666.6 M1733.1 662.2 V666.6 M1746.0 662.2 V666.6 M1758.9 659 V666.6 M1777.3 666.4 H1787 M1782.3 677.4 H1787 M1782.3 688.5 H1787 M1782.3 699.5 H1787 M1782.3 710.6 H1787 M1779.8 721.6 H1787 M1782.3 732.6 H1787 M1782.3 743.7 H1787 M1782.3 754.7 H1787 M1782.3 765.8 H1787 M1777.3 776.8 H1787 M1782.3 787.8 H1787 M1782.3 798.9 H1787 M1782.3 809.9 H1787 M1782.3 821.0 H1787 M1779.8 832.0 H1787 M1782.3 843.0 H1787 M1782.3 854.1 H1787 M1782.3 865.1 H1787 M1782.3 876.2 H1787 M1777.3 887.2 H1787 M1782.3 898.2 H1787 M1782.3 909.3 H1787 M1782.3 920.3 H1787 M1782.3 931.4 H1787 M1779.8 942.4 H1787 M1787.0 656.3 V666.6 M1802.2 662.2 V666.6 M1817.4 662.2 V666.6 M1832.6 662.2 V666.6 M1847.8 662.2 V666.6 M1863.0 659 V666.6 M1878.2 662.2 V666.6 M1893.4 662.2 V666.6 M1908.6 662.2 V666.6" stroke="#c6c6c6" stroke-width="1.05" fill="none"/>
<path d="M415.5 666.2 H1606 M415.7 666 V946 M1620 666.2 H1759 M1630.4 666 V946 M1777 666.2 H1911 M1787 666 V946" stroke="#cfcfcf" stroke-width="1.1" fill="none"/>
<path d="M1606.6 643 V946" stroke="#e6e6e6" stroke-width="1"/>
<rect x="1759" y="643" width="4.8" height="303" fill="#e9e9e9"/>
<text x="417.0" y="654" font-size="12" fill="#9a9a9a" text-anchor="middle">0</text>
<text x="559.6" y="654" font-size="12" fill="#9a9a9a" text-anchor="middle">2</text>
<text x="702.2" y="654" font-size="12" fill="#9a9a9a" text-anchor="middle">4</text>
<text x="844.8" y="654" font-size="12" fill="#9a9a9a" text-anchor="middle">6</text>
<text x="987.4" y="654" font-size="12" fill="#9a9a9a" text-anchor="middle">8</text>
<text x="1130.0" y="654" font-size="12" fill="#9a9a9a" text-anchor="middle">10</text>
<text x="1272.6" y="654" font-size="12" fill="#9a9a9a" text-anchor="middle">12</text>
<text x="1415.2" y="654" font-size="12" fill="#9a9a9a" text-anchor="middle">14</text>
<text x="1557.8" y="654" font-size="12" fill="#9a9a9a" text-anchor="middle">16</text>
<text x="427.3" y="654.3" font-size="12" fill="#9a9a9a" textLength="104" lengthAdjust="spacingAndGlyphs">Linear distance [m]</text>
<text transform="translate(403.4 704) rotate(-90)" font-size="12" fill="#9a9a9a" text-anchor="middle" textLength="53" lengthAdjust="spacingAndGlyphs">Depth [m]</text>
<text transform="translate(403.4 768.8) rotate(-90)" font-size="12" fill="#9a9a9a" text-anchor="middle">2</text>
<text transform="translate(403.4 870.8) rotate(-90)" font-size="12" fill="#9a9a9a" text-anchor="middle">4</text>
<text x="1642" y="654.3" font-size="12" fill="#9a9a9a" textLength="38" lengthAdjust="spacingAndGlyphs">A-scan</text>
<text x="1694.6" y="654.3" font-size="12" fill="#9a9a9a" text-anchor="middle">0</text>
<text transform="translate(1618.4 666.6) rotate(-90)" font-size="12" fill="#9a9a9a" text-anchor="middle">0</text>
<text transform="translate(1618.4 719) rotate(-90)" font-size="12" fill="#9a9a9a" text-anchor="middle" textLength="82" lengthAdjust="spacingAndGlyphs">Travel time [ns]</text>
<text transform="translate(1618.4 806.7) rotate(-90)" font-size="12" fill="#9a9a9a" text-anchor="middle" letter-spacing="0.9">50</text>
<text x="1787" y="654.3" font-size="12" fill="#9a9a9a" text-anchor="middle">0</text>
<text x="1799.3" y="654.3" font-size="12" fill="#9a9a9a" textLength="21.5" lengthAdjust="spacingAndGlyphs">FFT</text>
<text transform="translate(1775.6 666.6) rotate(-90)" font-size="12" fill="#9a9a9a" text-anchor="middle">0</text>
<text transform="translate(1775.6 775.5) rotate(-90)" font-size="12" fill="#9a9a9a" text-anchor="middle" letter-spacing="0.6">2000</text>
<rect x="1764.5" y="676" width="12.6" height="96.6" fill="#fff"/>
<text transform="translate(1775.6 722) rotate(-90)" font-size="12" fill="#9a9a9a" text-anchor="middle" textLength="88" lengthAdjust="spacingAndGlyphs">Frequency [MHz]</text>
<text transform="translate(1775.6 885.6) rotate(-90)" font-size="12" fill="#9a9a9a" text-anchor="middle" letter-spacing="0.6">4000</text>
<path d="M1694.4 666.6 V946" stroke="#8c8c8c" stroke-width="1"/>
<path d="M1694.4 666.3 C1694.4 668.7 1708.8 669.7 1708.8 672.1 C1708.8 675.7 1658.0 677.0 1658.0 680.6 C1658.0 684.1 1727.7 685.5 1727.7 689.0 C1727.7 691.3 1703.5 692.2 1703.5 694.5 C1703.5 696.1 1712.5 696.8 1712.5 698.4 C1712.5 703.2 1670.2 705.1 1670.2 709.9 C1670.2 712.9 1682.4 714.0 1682.4 717.0 C1682.4 718.0 1679.5 718.5 1679.5 719.5 C1679.5 723.0 1719.0 725.5 1758.6 727.2 L1758.6 730.6 C1715.6 730.9 1690.6 734.7 1672.6 737.3 C1672.6 739.5 1651.8 741.1 1630.9 742.2 L1630.9 746.4 C1692.0 747.7 1753.0 749.7 1753.0 752.4 C1753.0 755.1 1666.2 756.1 1666.2 758.8 C1666.2 761.7 1715.3 762.7 1715.3 765.6 C1715.3 767.3 1697.4 767.9 1697.4 769.6 C1697.4 771.7 1720.0 772.5 1720.0 774.6 C1720.0 777.3 1675.5 779.4 1630.9 780.7 L1630.9 783.2 C1670.1 784.7 1709.3 787.1 1709.3 790.2 C1709.3 791.6 1692.3 792.1 1692.3 793.5 C1692.3 796.0 1736.7 796.9 1736.7 799.4 C1736.7 802.3 1646.6 803.3 1646.6 806.2 C1646.6 809.1 1715.0 810.1 1715.0 813.0 C1715.0 814.7 1684.7 815.4 1684.7 817.1 C1684.7 820.0 1756.5 821.1 1756.5 824.0 C1756.5 826.6 1670.7 827.7 1670.7 830.3 C1670.7 832.7 1724.5 833.7 1724.5 836.1 C1724.5 839.0 1662.4 840.1 1662.4 843.0 C1662.4 844.8 1710.8 845.5 1710.8 847.3 C1710.8 849.7 1653.7 850.7 1653.7 853.1 C1653.7 855.8 1724.8 856.8 1724.8 859.5 C1724.8 861.8 1682.6 862.7 1682.6 865.0 C1682.6 867.3 1722.2 868.1 1722.2 870.4 C1722.2 873.0 1646.6 874.1 1646.6 876.7 C1646.6 879.6 1723.2 880.7 1723.2 883.6 C1723.2 885.4 1699.4 886.1 1699.4 887.9 C1699.4 890.7 1745.0 891.7 1745.0 894.5 C1745.0 897.1 1688.5 898.2 1688.5 900.8 C1688.5 902.8 1724.8 903.6 1724.8 905.6 C1724.8 908.3 1640.3 909.3 1640.3 912.0 C1640.3 915.0 1715.0 916.1 1715.0 919.1 C1715.0 921.0 1664.4 921.8 1664.4 923.7 C1664.4 926.6 1708.3 927.6 1708.3 930.5 C1708.3 932.6 1669.5 933.5 1669.5 935.6 C1669.5 937.7 1678.0 938.6 1678.0 940.7 C1678.0 943.1 1652.0 944.1 1652.0 946.5" stroke="#444" stroke-width="1" fill="none" stroke-linejoin="round"/>
<path d="M1794.1 666.2 L1825.3 667.4 L1807.6 668.9 L1850.7 669.8 L1868.5 670.4 L1830.4 672.0 L1860.0 672.8 L1790.7 674.8 L1818.6 675.0 L1789.8 676.2 L1837.2 678.2 L1874.4 679.1 L1886.6 679.2 L1874.4 679.4 L1837.2 679.6 L1801.7 680.6 L1792.4 681.9 L1789.0 683.6 L1790.7 685.0 L1789.2 686.0 L1792.2 687.4 L1789.8 688.4 L1793.2 689.7 L1790.3 690.7 L1791.9 692.1 L1789.2 693.8 L1789.8 695.8 L1788.5 698.4 L1789.3 701.7 L1788.3 705.1 L1789.2 709.3 L1788.3 714.4 L1789.3 722.0 L1788.1 724.6 L1788.6 734.7 L1788.0 744.9 L1788.1 753.0 L1790.5 753.7 L1790.5 754.5 L1788.1 755.0 L1788.3 768.5 L1788.0 785.5 L1788.1 800.0 L1788.1 946.5" stroke="#333" stroke-width="1" fill="none" stroke-linejoin="round"/>
<circle cx="1892.7" cy="685.4" r="10.4" fill="#333"/><path d="M1888.4 681.1 L1897 689.7 M1897 681.1 L1888.4 689.7" stroke="#fff" stroke-width="2.2" stroke-linecap="round"/>
</svg>
</div></body></html>
